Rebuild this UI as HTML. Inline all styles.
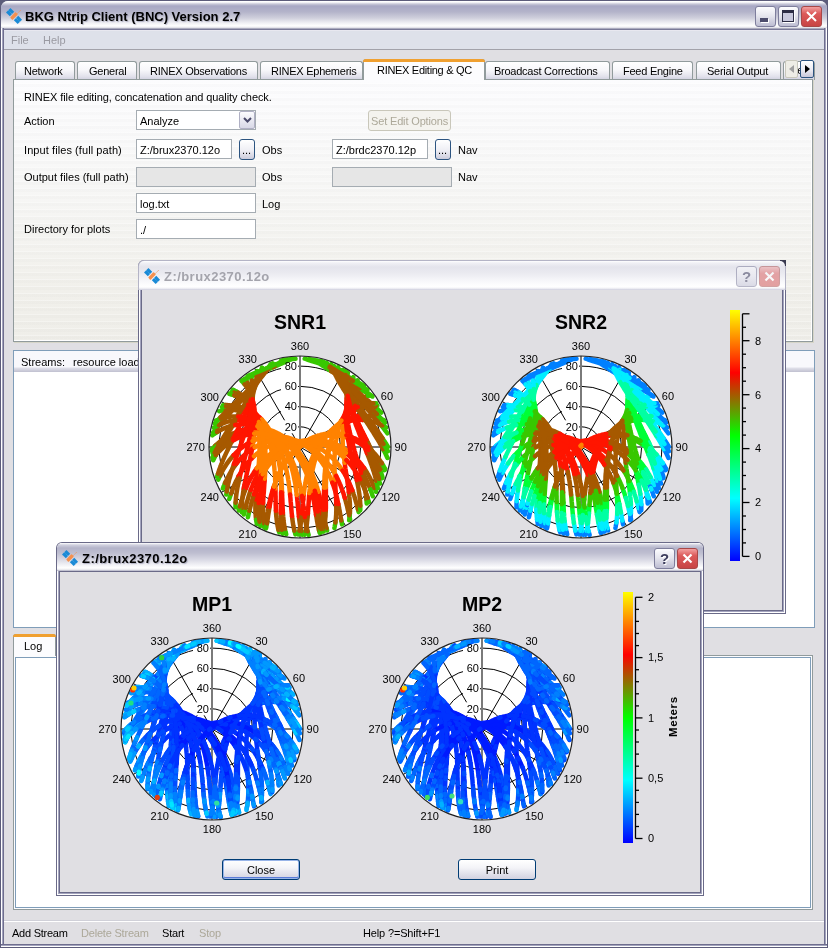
<!DOCTYPE html><html><head><meta charset="utf-8"><style>
*{box-sizing:border-box;margin:0;padding:0}
html,body{width:828px;height:948px;overflow:hidden;background:#E0DFE3}
body{position:relative;will-change:transform;font-family:"Liberation Sans",sans-serif;font-size:11px;color:#000}
.a{position:absolute}
.t{position:absolute;white-space:nowrap;line-height:13px;font-size:11px}
.inp{position:absolute;background:#fff;border:1px solid #A5ACB2;height:20px}
.dis{position:absolute;background:#E6E6E6;border:1px solid #A5ACB2;height:20px}
.tab{position:absolute;top:61px;height:19px;border:1px solid #919B9C;border-bottom:none;border-radius:3px 3px 0 0;background:linear-gradient(#FFFFFF 0%,#F7F7FA 45%,#E2E2EC 80%,#CFCFDF 100%)}
.tbtn{position:absolute;border:1px solid #7E7E9C;border-radius:3px;background:linear-gradient(#FCFCFE,#E6E6EE 45%,#BDBDD2)}
.xbtn{position:absolute;border:1px solid #A84848;border-radius:3px;background:linear-gradient(#F2A0A0,#DC5A5A 35%,#C84444)}
.dots{position:absolute;border:1px solid #2C5480;border-radius:3px;background:linear-gradient(#FFFFFF,#EEEEF4 55%,#CCCCDC)}
.btn{position:absolute;border:1px solid #1F3F7A;border-radius:3px;background:linear-gradient(#FFFFFF,#F4F4F8 40%,#D2D2E0);text-align:center;line-height:20px;font-size:11px}
</style></head><body>
<div class="a" style="left:0;top:0;width:828px;height:948px;background:#5C5C7A"></div>
<div class="a" style="left:1px;top:1px;width:826px;height:946px;background:#E0DFE3;border-radius:7px 7px 0 0"></div>
<div class="a" style="left:1px;top:1px;width:826px;height:29px;border-radius:7px 7px 0 0;background:linear-gradient(#FFFFFF 0px,#FFFFFF 1px,#C8C8D8 3px,#A8A8C4 5px,#B4B4CA 11px,#CFCFDC 17px,#F0F0F4 22px,#FFFFFF 25px,#DCDCE4 27px,#7A7A98 28px)"></div>
<div class="a" style="left:1px;top:28px;width:3px;height:919px;background:linear-gradient(90deg,#FFFFFF 0,#FFFFFF 1px,#A4A4BE 1px,#A4A4BE 2px,#6E6E8E 2px)"></div>
<div class="a" style="left:824px;top:28px;width:3px;height:919px;background:linear-gradient(90deg,#6E6E8E 0,#6E6E8E 1px,#A4A4BE 1px,#A4A4BE 2px,#FFFFFF 2px)"></div>
<div class="a" style="left:1px;top:944px;width:826px;height:3px;background:linear-gradient(#6E6E8E 0,#6E6E8E 1px,#A4A4BE 1px,#A4A4BE 2px,#FFFFFF 2px)"></div>
<svg class="a" style="left:2px;top:4px" width="24" height="24" viewBox="0 0 24 24"><g transform="translate(12 12) rotate(45)"><rect x="-8.2" y="-3.1" width="5.4" height="6.2" fill="#1A8AD6"/><rect x="2.9" y="-3.1" width="5.4" height="6.2" fill="#1A8AD6"/><rect x="-1.7" y="-3.9" width="3.4" height="7.8" rx="0.8" fill="#F5904E"/><line x1="-8" y1="0" x2="-3" y2="0" stroke="#7FC0EC" stroke-width="0.6" stroke-dasharray="1 1"/><line x1="3" y1="0" x2="8" y2="0" stroke="#7FC0EC" stroke-width="0.6" stroke-dasharray="1 1"/><line x1="0.6" y1="-4" x2="0.6" y2="-8.6" stroke="#F5904E" stroke-width="0.9" stroke-dasharray="1.2 0.6"/></g></svg>
<div class="t" style="left:25px;top:9px;font-size:13px;line-height:15px;font-weight:bold;color:#000;text-shadow:1px 1px 1px rgba(120,120,150,0.5)">BKG Ntrip Client (BNC) Version 2.7</div>
<div class="tbtn" style="left:755px;top:6px;width:21px;height:21px"><div class="a" style="left:4px;top:11px;width:8px;height:4px;background:#4C4C6C;box-shadow:1px 1px 0 #fff"></div></div>
<div class="tbtn" style="left:778px;top:6px;width:21px;height:21px"><div class="a" style="left:3px;top:3px;width:12px;height:12px;border:1px solid #2C2C44;border-top-width:3px;background:#C8C8DC;box-shadow:1px 1px 0 #fff"></div></div>
<div class="xbtn" style="left:801px;top:6px;width:21px;height:21px"><svg class="a" style="left:2px;top:2px" width="15" height="15"><path d="M3 3L12 12M12 3L3 12" stroke="#fff" stroke-width="2"/></svg></div>
<div class="a" style="left:4px;top:30px;width:820px;height:20px;background:#DEE1EA;border-top:1px solid #E8E8F0;border-bottom:1px solid #A2A2AA"></div>
<div class="t" style="left:11px;top:33.5px;color:#9A9AA2">File</div>
<div class="t" style="left:43px;top:33.5px;color:#9A9AA2">Help</div>
<div class="tab" style="left:15px;width:60px"></div>
<div class="t" style="left:24px;top:64.8px;letter-spacing:-0.25px">Network</div>
<div class="tab" style="left:77px;width:60px"></div>
<div class="t" style="left:89px;top:64.8px;letter-spacing:-0.25px">General</div>
<div class="tab" style="left:139px;width:119px"></div>
<div class="t" style="left:150px;top:64.8px;letter-spacing:-0.25px">RINEX Observations</div>
<div class="tab" style="left:260px;width:103px"></div>
<div class="t" style="left:271px;top:64.8px;letter-spacing:-0.25px">RINEX Ephemeris</div>
<div class="tab" style="left:485px;width:125px"></div>
<div class="t" style="left:494px;top:64.8px;letter-spacing:-0.25px">Broadcast Corrections</div>
<div class="tab" style="left:612px;width:81px"></div>
<div class="t" style="left:623px;top:64.8px;letter-spacing:-0.25px">Feed Engine</div>
<div class="tab" style="left:696px;width:85px"></div>
<div class="t" style="left:707px;top:64.8px;letter-spacing:-0.25px">Serial Output</div>
<div class="tab" style="left:783px;width:32px"></div>
<div class="a" style="left:13px;top:79px;width:800px;height:263px;border:1px solid #919B9C;box-shadow:1px 1px 0 #D6D5C8;background:repeating-linear-gradient(rgba(255,255,255,0) 0,rgba(255,255,255,0) 3px,rgba(255,255,255,0.3) 3px,rgba(255,255,255,0.3) 4px,rgba(0,0,0,0.012) 4px,rgba(0,0,0,0.012) 7px),linear-gradient(#FCFCFE 0%,#F7F7F6 40%,#F1F0EB 80%,#EFEEE9 100%)"><div class="a" style="right:0;top:0;width:1px;height:100%;background:#fff"></div><div class="a" style="left:0;bottom:0;width:100%;height:1px;background:#fff"></div></div>
<div class="a" style="left:363px;top:59px;width:122px;height:21px;border:1px solid #919B9C;border-bottom:none;border-radius:3px 3px 0 0;background:#FCFCFE"><div class="a" style="left:-1px;top:-1px;width:122px;height:3px;background:#F0A030;border-radius:3px 3px 0 0"></div></div>
<div class="t" style="left:377px;top:63.5px;letter-spacing:-0.3px">RINEX Editing &amp; QC</div>
<div class="a" style="left:784px;top:61px;width:30px;height:18px;overflow:hidden"><div class="t" style="left:8px;top:3px;letter-spacing:-0.25px">ces</div></div>
<div class="a" style="left:785px;top:60px;width:13px;height:18px;border:1px solid #C9C8BC;border-radius:2px;background:#EEEDE6"><svg class="a" style="left:2px;top:3px" width="8" height="10"><path d="M6 1L1 5L6 9Z" fill="#A0A0A0"/></svg></div>
<div class="a" style="left:800px;top:60px;width:14px;height:18px;border:1px solid #2C5480;border-radius:2px;background:linear-gradient(#FFFFFF,#E8E8F0 60%,#C8C8DA)"><svg class="a" style="left:3px;top:3px" width="8" height="10"><path d="M1 1L6 5L1 9Z" fill="#000"/></svg></div>
<div class="t" style="left:24px;top:90.6px;letter-spacing:-0.08px">RINEX file editing, concatenation and quality check.</div>
<div class="t" style="left:24px;top:114.9px;">Action</div>
<div class="inp" style="left:136px;top:110px;width:120px;height:20px;border-color:#A5ACB2"></div>
<div class="t" style="left:140px;top:114.5px;">Analyze</div>
<div class="a" style="left:239px;top:111px;width:16px;height:18px;border:1px solid #B0B0C4;border-radius:2px;background:linear-gradient(#FCFCFE,#D8D8E6)"><svg class="a" style="left:3px;top:4px" width="9" height="8"><path d="M1 2L4.5 5.5L8 2" fill="none" stroke="#4A4A6A" stroke-width="2"/></svg></div>
<div class="t" style="left:24px;top:143.8px;letter-spacing:0.08px">Input files (full path)</div>
<div class="inp" style="left:136px;top:139px;width:96px"></div>
<div class="t" style="left:140px;top:143.5px;">Z:/brux2370.12o</div>
<div class="dots" style="left:239px;top:139px;width:16px;height:21px"></div>
<div class="t" style="left:242px;top:144px;">...</div>
<div class="t" style="left:262px;top:143.8px;">Obs</div>
<div class="a" style="left:368px;top:110px;width:83px;height:21px;border:1px solid #C9C7BA;border-radius:3px;background:#F4F3EE"></div>
<div class="t" style="left:371px;top:114.5px;color:#ACA899;letter-spacing:-0.15px">Set Edit Options</div>
<div class="inp" style="left:332px;top:139px;width:96px"></div>
<div class="t" style="left:336px;top:143.5px;">Z:/brdc2370.12p</div>
<div class="dots" style="left:435px;top:139px;width:16px;height:21px"></div>
<div class="t" style="left:438px;top:144px;">...</div>
<div class="t" style="left:458px;top:143.8px;">Nav</div>
<div class="t" style="left:24px;top:170.7px;">Output files (full path)</div>
<div class="dis" style="left:136px;top:167px;width:120px"></div>
<div class="t" style="left:262px;top:170.9px;">Obs</div>
<div class="dis" style="left:332px;top:167px;width:120px"></div>
<div class="t" style="left:458px;top:170.9px;">Nav</div>
<div class="inp" style="left:136px;top:193px;width:120px"></div>
<div class="t" style="left:140px;top:197.5px;">log.txt</div>
<div class="t" style="left:262px;top:197.5px;">Log</div>
<div class="t" style="left:24px;top:222.8px;">Directory for plots</div>
<div class="inp" style="left:136px;top:219px;width:120px"></div>
<div class="t" style="left:140px;top:223.5px;">./</div>
<div class="a" style="left:13px;top:350px;width:802px;height:278px;border:1px solid #7F9DB9;background:#fff"></div>
<div class="a" style="left:14px;top:351px;width:800px;height:21px;background:linear-gradient(#F8F8FC 0,#F8F8FC 16px,#E0E0EA 17px,#C0C0D0 21px)"></div>
<div class="t" style="left:21px;top:356px;">Streams:</div>
<div class="t" style="left:73px;top:356px;">resource loader</div>
<div class="a" style="left:13px;top:655px;width:800px;height:255px;border:1px solid #919B9C;background:#FCFCFE"></div>
<div class="a" style="left:15px;top:657px;width:796px;height:251px;border:1px solid #7F9DB9;background:#fff"></div>
<div class="a" style="left:13px;top:634px;width:43px;height:22px;border:1px solid #919B9C;border-bottom:none;border-radius:3px 3px 0 0;background:#FCFCFE"><div class="a" style="left:-1px;top:-1px;width:43px;height:3px;background:#F0A030;border-radius:3px 3px 0 0"></div></div>
<div class="t" style="left:24px;top:640px;">Log</div>
<div class="a" style="left:4px;top:921px;width:820px;height:1px;background:#FFFFFF"></div>
<div class="a" style="left:4px;top:920px;width:820px;height:1px;background:#D0D0D8"></div>
<div class="t" style="left:12px;top:927.3px;letter-spacing:-0.25px">Add Stream</div>
<div class="t" style="left:81px;top:927.3px;color:#ACA899;letter-spacing:-0.2px">Delete Stream</div>
<div class="t" style="left:162px;top:927.3px;letter-spacing:-0.2px">Start</div>
<div class="t" style="left:199px;top:927.3px;color:#ACA899;letter-spacing:-0.2px">Stop</div>
<div class="t" style="left:363px;top:927.3px;letter-spacing:-0.15px">Help ?=Shift+F1</div>
<div class="a" style="left:138px;top:260px;width:648px;height:354px;background:#6A6A88;border-radius:6px 6px 0 0"></div>
<div class="a" style="left:139px;top:261px;width:646px;height:352px;background:#FFFFFF;border-radius:5px 5px 0 0"></div>
<div class="a" style="left:140px;top:262px;width:644px;height:350px;background:#A4A4BE;border-radius:4px 4px 0 0"></div>
<div class="a" style="left:138px;top:260px;width:648px;height:30px;background:#B4B4C6;border-radius:6px 6px 0 0"></div>
<div class="a" style="left:780px;top:260px;width:6px;height:6px;background:#3A3A50"></div>
<div class="a" style="left:139px;top:261px;width:646px;height:29px;background:linear-gradient(#FFFFFF 0px,#F0F0F5 2px,#E4E4EC 6px,#EAEAF0 12px,#F4F4F8 18px,#FCFCFD 23px,#FFFFFF 26px,#E6E6EE 28px,#C8C8D8 29px);border-radius:5px 5px 0 0"></div>
<div class="a" style="left:141px;top:290px;width:642px;height:321px;background:#6A6A88"></div>
<div class="a" style="left:142px;top:290px;width:640px;height:320px;background:#E0DFE3"></div>
<svg class="a" style="left:140px;top:264px" width="24" height="24" viewBox="0 0 24 24"><g transform="translate(12 12) rotate(45)"><rect x="-8.2" y="-3.1" width="5.4" height="6.2" fill="#1A8AD6"/><rect x="2.9" y="-3.1" width="5.4" height="6.2" fill="#1A8AD6"/><rect x="-1.7" y="-3.9" width="3.4" height="7.8" rx="0.8" fill="#F5904E"/><line x1="-8" y1="0" x2="-3" y2="0" stroke="#7FC0EC" stroke-width="0.6" stroke-dasharray="1 1"/><line x1="3" y1="0" x2="8" y2="0" stroke="#7FC0EC" stroke-width="0.6" stroke-dasharray="1 1"/><line x1="0.6" y1="-4" x2="0.6" y2="-8.6" stroke="#F5904E" stroke-width="0.9" stroke-dasharray="1.2 0.6"/></g></svg>
<div class="t" style="left:164px;top:269px;font-size:13px;line-height:15px;font-weight:bold;letter-spacing:0.45px;color:#A4A4AC;">Z:/brux2370.12o</div>
<div class="tbtn" style="left:736px;top:266px;width:21px;height:21px;opacity:0.55"><div class="t" style="left:0;top:2px;width:19px;text-align:center;font-size:15px;line-height:15px;font-weight:bold;color:#3C3C5C">?</div></div>
<div class="xbtn" style="left:759px;top:266px;width:21px;height:21px;opacity:0.5"><svg class="a" style="left:2px;top:2px" width="15" height="15"><path d="M3.5 3.5L11.5 11.5M11.5 3.5L3.5 11.5" stroke="#fff" stroke-width="2.2"/></svg></div>
<svg class="a" style="left:0;top:0" width="828" height="948" font-family='"Liberation Sans",sans-serif'><g>
<g transform="translate(300 447)">
<circle r="91.0" fill="#fff"/>
<circle r="20.22" fill="none" stroke="#000" stroke-width="1"/>
<circle r="40.44" fill="none" stroke="#000" stroke-width="1"/>
<circle r="60.67" fill="none" stroke="#000" stroke-width="1"/>
<circle r="80.89" fill="none" stroke="#000" stroke-width="1"/>
<line x1="0" y1="0" x2="45.50" y2="-78.81" stroke="#000" stroke-width="1"/>
<line x1="0" y1="0" x2="78.81" y2="-45.50" stroke="#000" stroke-width="1"/>
<line x1="0" y1="0" x2="78.81" y2="45.50" stroke="#000" stroke-width="1"/>
<line x1="0" y1="0" x2="45.50" y2="78.81" stroke="#000" stroke-width="1"/>
<line x1="0" y1="0" x2="-45.50" y2="78.81" stroke="#000" stroke-width="1"/>
<line x1="0" y1="0" x2="-78.81" y2="45.50" stroke="#000" stroke-width="1"/>
<line x1="0" y1="0" x2="-78.81" y2="-45.50" stroke="#000" stroke-width="1"/>
<line x1="0" y1="0" x2="-45.50" y2="-78.81" stroke="#000" stroke-width="1"/>
<line x1="-91.0" y1="0" x2="91.0" y2="0" stroke="#7A7A7A" stroke-width="2"/>
<line x1="0" y1="-91.0" x2="0" y2="91.0" stroke="#7A7A7A" stroke-width="2"/>
<rect x="-19" y="-26.7" width="17" height="13" fill="#fff"/>
<rect x="-19" y="-46.9" width="17" height="13" fill="#fff"/>
<rect x="-19" y="-67.2" width="17" height="13" fill="#fff"/>
<rect x="-19" y="-87.4" width="17" height="13" fill="#fff"/>
<g fill="none" stroke-width="4.5" stroke-linecap="round" stroke-linejoin="round"><path stroke="#38c700" d="M-70.7 52l.4 -1.4 .5 -1.3 .4 -1.4 .5 -1.4M82.4 -21.7l1.3 .7 1.2 .7 1.3 .7M76 -41.5l1.4 .1M32.7 -76.8l-1 -1.2 -1 -1.1 -.9 -1.1 -1 -1.2 -.9 -1.1 -.9 -1.2M23.5 -84.5l-1.3 -.8M-56.1 67.5l.3 -1.4 .3 -1.3 .4 -1.3 .3 -1.4 .3 -1.3M-35.6 80.2l.3 -1.2 .3 -1.2 .2 -1.3M34.4 81l.3 -1.4 .2 -1.4 .3 -1.3 .2 -1.4M87.4 -13.7l-1.1 -1.4 -1 -1.3 -1 -1.4 -1.1 -1.3 -1 -1.4 -1.1 -1.3M34.2 -77.8l-.8 -1.2 -.8 -1.2 -.8 -1.2 -.7 -1.2M81.3 -34.3l-1.2 -1.2 -1.3 -1.2 -1.2 -1.1 -1.3 -1.2 -1.2 -1.1M29.4 -80.9l-1.1 -1.1 -1 -1.1 -1.1 -1.1M72.4 -50.5l-1.5 -.9 -1.4 -1 -1.5 -.9 -1.5 -.9 -1.5 -.9 -1.4 -.9 -1.5 -.9 -1.5 -1 -1.5 -.9 -1.5 -.9 -1.5 -.9 -1.5 -.9M31.2 -75.8l-1.4 -.9 -1.4 -.9 -1.4 -.9 -1.3 -.9 -1.4 -.9 -1.4 -.9 -1.3 -.9 -1.4 -.9 -1.3 -.9 -1.3 -.9 -1.3 -.9 -1.3 -.9M49.2 73.3l.2 -1.5 .2 -1.4 .1 -1.5 .1 -1.4 .1 -1.5M-36.9 75.6l.2 1.4 .2 1.3 .3 1.4M-58.3 60.9l0 1.5 0 1.5 .1 1.5M45.8 -75.2l-1.7 -.6 -1.6 -.5 -1.7 -.5 -1.7 -.5 -1.6 -.5 -1.7 -.6 -1.7 -.5 -1.6 -.5 -1.7 -.5 -1.6 -.5 -1.7 -.5 -1.7 -.6 -1.6 -.5 -1.7 -.5 -1.6 -.5 -1.7 -.5 -1.6 -.6 -1.6 -.5 -1.7 -.5 -1.6 -.5 -1.6 -.6 -1.6 -.5 -1.6 -.5 -1.6 -.6 -1.6 -.5M-29.3 -82.9l-.8 1.2 -.8 1.2 -.8 1.2 -.8 1.2M-83.6 -18.5l-1 1.3 -1.1 1.4 -1.1 1.3M-77 -41.8l1.3 -.1 1.3 0M-21.5 82.8l.3 1.3 .4 1.3M-55 -68.3l.6 .9 .7 1 .6 1 .5 1M-67.3 -57.3l1.1 .4 1.1 .6 1 .5 1 .6 1 .7M26.5 81.1l.3 1.2 .3 1.2M74.4 40.7l.6 1.4 .5 1.4 .5 1.3M-70.4 -53.1l1.3 .3 1.2 .3 1.2 .4 1.1 .4M-80.8 -35.8l1.3 -.3 1.3 -.3 1.4 -.2 1.3 -.2 1.3 -.1M-87.8 1.9l1.1 -1.1 1 -1.1 1.1 -1"/><path stroke="#a65900" d="M-68.9 46.5l.5 -1.3 .5 -1.4 .5 -1.4 .5 -1.3 .6 -1.4 .5 -1.4 .6 -1.3 .6 -1.4 .6 -1.3 .7 -1.3 .7 -1.3 .6 -1.4 .7 -1.3M62.5 -27.1l1.4 .1 1.3 .1 1.3 .2 1.4 .2 1.3 .2 1.3 .3 1.4 .3 1.3 .4 1.3 .4 1.3 .4 1.4 .5 1.3 .5 1.3 .6 1.3 .6 1.3 .6M57.6 -38.1l1.1 -.5 1.2 -.5 1.1 -.4 1.2 -.4 1.2 -.3 1.2 -.3 1.3 -.3 1.2 -.2 1.2 -.2 1.3 -.1 1.3 -.1 1.3 -.1 1.2 0 1.3 0 1.3 0M54 -54.9l-1.2 -1.1 -1.2 -1.2 -1.2 -1.2 -1.2 -1.1 -1.2 -1.2 -1.1 -1.1 -1.2 -1.2 -1.1 -1.2 -1.2 -1.1 -1.1 -1.2 -1.1 -1.1 -1.1 -1.2 -1.1 -1.1 -1.1 -1.2 -1.1 -1.1 -1 -1.2 -1 -1.1 -1.1 -1.2 -1 -1.1M-54.5 60.8l.3 -1.4 .4 -1.3 .3 -1.4 .4 -1.4 .4 -1.3 .4 -1.4 .4 -1.4 .4 -1.4 .4 -1.4 .5 -1.3 .4 -1.4 .5 -1.4 .5 -1.4M-34.8 76.5l.3 -1.3 .3 -1.3 .2 -1.3 .3 -1.3 .2 -1.3 .3 -1.3 .3 -1.4 .2 -1.3 .3 -1.4 .2 -1.3 .3 -1.4 .3 -1.4M35.4 75.5l.2 -1.4 .1 -1.4 .2 -1.4 .1 -1.4 .1 -1.4 .1 -1.4 0 -1.5 .1 -1.4 0 -1.5 0 -1.4 0 -1.5 0 -1.4 -.1 -1.5M54.2 -43.8l.9 -.7 1 -.8 1 -.7 1 -.7 1 -.6 1.1 -.6 1 -.6 1.1 -.5 1.1 -.5 1.1 -.5 1.2 -.4 1.1 -.4 1.2 -.4M81.1 -21.8l-1.1 -1.3 -1.1 -1.3 -1.1 -1.3 -1 -1.3 -1.2 -1.3 -1.1 -1.3 -1.1 -1.2 -1.1 -1.3 -1.1 -1.3 -1.1 -1.3 -1.1 -1.2 -1.2 -1.3 -1.1 -1.3 -1.1 -1.2 -1.1 -1.3 -1.2 -1.2 -1.1 -1.3 -1.1 -1.2 -1.1 -1.3 -1.1 -1.2 -1.1 -1.3 -1.1 -1.2 -1.1 -1.2 -1.1 -1.3 -1.1 -1.2 -1.1 -1.3 -1 -1.2 -1.1 -1.2 -1 -1.3 -1.1 -1.2 -1 -1.2 -1 -1.2 -1 -1.3 -1 -1.2 -1 -1.2 -.9 -1.2 -1 -1.2 -.9 -1.2 -.9 -1.3 -.9 -1.2 -.9 -1.2 -.9 -1.2 -.9 -1.2 -.8 -1.2 -.8 -1.2M75.1 -40.1l-1.3 -1.2 -1.3 -1.1 -1.3 -1.2 -1.3 -1.1 -1.2 -1.1 -1.3 -1.2 -1.3 -1.1 -1.3 -1.1 -1.3 -1.1 -1.3 -1.1 -1.3 -1.2 -1.3 -1.1 -1.3 -1.1 -1.2 -1.1 -1.3 -1.1 -1.3 -1.1 -1.3 -1.1 -1.2 -1.1 -1.3 -1.1 -1.3 -1.1 -1.2 -1.1 -1.3 -1.1 -1.2 -1 -1.2 -1.1 -1.2 -1.1 -1.3 -1.1 -1.2 -1.1 -1.2 -1.1 -1.1 -1.1 -1.2 -1.1 -1.2 -1 -1.1 -1.1 -1.2 -1.1 -1.1 -1.1 -1.1 -1.1 -1.1 -1.1 -1.1 -1M54.6 -61.5l-1.5 -.9 -1.4 -.9 -1.5 -.8 -1.5 -.9 -1.5 -.9 -1.5 -.9 -1.4 -.9 -1.5 -.9 -1.5 -.9 -1.4 -.9 -1.5 -.9 -1.4 -.9 -1.5 -.9 -1.4 -.9 -1.4 -.9 -1.5 -.9M49.9 66l.1 -1.5 0 -1.4 0 -1.5 0 -1.5 -.1 -1.5 0 -1.4 -.1 -1.5 -.1 -1.5 -.1 -1.5 -.1 -1.5 -.2 -1.5 -.1 -1.5 -.2 -1.5 -.2 -1.5M-37.7 57l-.1 1.4 0 1.5 0 1.5 0 1.4 0 1.4 0 1.5 .1 1.4 .1 1.4 .1 1.5 .1 1.4 .1 1.4 .2 1.4 .2 1.4M-55.6 38.2l-.3 1.5M-56.2 41.2l-.2 1.5 -.3 1.6 -.2 1.5 -.2 1.5 -.2 1.5 -.2 1.5 -.2 1.5 -.2 1.5 -.1 1.5 -.1 1.6 -.1 1.5 -.1 1.5 0 1.5M-32.5 -78.1l-.8 1.2 -.8 1.2 -.9 1.2 -.9 1.2 -.9 1.2 -.9 1.2 -1 1.2 -.9 1.2 -1 1.3 -.9 1.2 -1 1.2 -1 1.2 -1.1 1.2 -1 1.3 -1 1.2 -1.1 1.2 -1.1 1.2 -1 1.2 -1.1 1.3 -1.1 1.2 -1.1 1.2 -1.1 1.3 -1.1 1.2 -1.1 1.2 -1.2 1.3 -1.1 1.2 -1.1 1.2 -1.2 1.3 -1.1 1.2 -1.2 1.3 -1.1 1.2 -1.2 1.3 -1.1 1.2 -1.2 1.3 -1.1 1.2 -1.1 1.3 -1.2 1.2 -1.1 1.3 -1.2 1.3 -1.1 1.3 -1.1 1.2 -1.2 1.3 -1.1 1.3 -1.1 1.3 -1.1 1.3 -1.1 1.3 -1.1 1.3 -1.1 1.3M-74.4 -41.9l1.3 0 1.3 .1 1.3 .1 1.2 .1 1.3 .2 1.2 .2 1.2 .2 1.3 .3 1.2 .3 1.2 .4 1.1 .4 1.2 .4 1.1 .5 1.2 .5M-24.1 63.7l.1 1.4 .1 1.5 .1 1.4 .1 1.4 .2 1.3 .1 1.4 .2 1.4 .1 1.3 .2 1.4 .3 1.3 .2 1.4 .3 1.3 .2 1.3 .4 1.3M-52.6 -64.4l.6 1 .5 1.1 .5 1.1 .4 1.1 .5 1.1 .4 1.2 .3 1.1 .4 1.2 .3 1.2 .3 1.2 .3 1.3 .2 1.2 .2 1.3 .2 1.3M-62.1 -54.5l1 .6 1 .7 .9 .7 .9 .8 .9 .8 .9 .8 .8 .8 .8 .9 .8 .9 .8 .9 .8 .9 .7 1 .7 1 .7 1M-44.4 52.5l0 1.5 -.1 1.4 -.1 1.5 0 1.5 0 1.5 0 1.4 0 1.5 0 1.4 .1 1.5 .1 1.4 .1 1.4 .1 1.5 .2 1.4 .1 1.4M22.9 64.4l.2 1.3 .3 1.3 .2 1.4 .3 1.3 .3 1.3 .2 1.3 .3 1.3 .3 1.3 .3 1.2 .2 1.3 .3 1.2 .3 1.3 .4 1.2M64.1 21.2l.9 1.2 .8 1.2 .8 1.3 .7 1.2 .8 1.3 .7 1.3 .7 1.3 .7 1.3 .6 1.4 .7 1.3 .6 1.3 .6 1.4 .6 1.3 .6 1.4 .5 1.3M-65.6 -51.7l1.2 .4 1.1 .5 1.1 .5 1.1 .5 1.1 .6 1.1 .6 1 .6 1 .7 1 .7 1 .8 .9 .7 1 .8 .9 .9M-74.2 -36.9l1.4 -.2 1.3 0 1.3 0 1.3 0 1.3 0 1.3 .1 1.3 .1 1.2 .2 1.3 .2 1.2 .2 1.3 .3 1.2 .3 1.2 .4 1.2 .4M-84.6 -1.3l1.1 -1.1 1.1 -.9 1.1 -1 1.1 -.9 1.2 -.9 1.2 -.9 1.2 -.8 1.2 -.8 1.2 -.8 1.2 -.8 1.2 -.7 1.3 -.6 1.2 -.7 1.3 -.6"/><path stroke="#ff1500" d="M-61.3 29l.8 -1.3 .7 -1.2 .8 -1.3 .8 -1.3 .8 -1.2 .8 -1.2 .9 -1.2 .8 -1.2 .9 -1.2 1 -1.2 .9 -1.1 1 -1.1 1 -1.1 1 -1.1 1 -1 1.1 -1.1 1 -1M3.2 52.6l.1 -1.4 .2 -1.5 .2 -1.5 .1 -1.5M42.1 -23.3l1.2 -.5 1.2 -.5 1.2 -.4 1.3 -.4 1.2 -.4 1.3 -.4 1.3 -.3 1.3 -.2 1.2 -.2 1.3 -.2 1.3 -.2 1.4 -.1 1.3 -.1 1.3 0 1.3 0 1.3 .1M41.7 -25.9l.9 -1 .8 -1 .9 -.9 .9 -.9 1 -.9 .9 -.9 1 -.8 1 -.8 1 -.7 1 -.7 1 -.7 1.1 -.7 1 -.6 1.1 -.6 1.1 -.5 1.2 -.5M-31.6 60.5l.3 -1.4 .3 -1.4 .3 -1.4 .3 -1.4 .3 -1.4 .3 -1.4 .4 -1.4 .3 -1.4 .4 -1.4 .4 -1.4 .4 -1.5 .4 -1.4 .5 -1.4 .4 -1.4 .5 -1.4M36.2 56.9l0 -1.4 0 -1.5 -.1 -1.5 -.1 -1.5 0 -1.5 -.1 -1.5 -.1 -1.5 -.1 -1.5 -.1 -1.5 -.1 -1.5 -.1 -1.6 0 -1.5 -.1 -1.5 -.1 -1.6 -.1 -1.5 -.1 -1.6M40.6 -23.9l.5 -1.3 .5 -1.2 .6 -1.2 .6 -1.2 .6 -1.2 .6 -1.1 .7 -1.2 .6 -1.1 .7 -1.1 .7 -1 .8 -1 .7 -1 .8 -1 .8 -1 .9 -.9 .8 -.9 .9 -.8 .9 -.9 .9 -.8M48.8 45.2l-.1 -1.5 -.2 -1.5 -.2 -1.6 -.3 -1.5 -.2 -1.5 -.2 -1.6 -.2 -1.5 -.2 -1.5 -.3 -1.6 -.2 -1.5 -.2 -1.6 -.3 -1.5 -.2 -1.6 -.2 -1.5 -.3 -1.6 -.2 -1.6 -.2 -1.5 -.2 -1.6 -.2 -1.6M-36.3 32.8l-.1 1.5 -.1 1.5 -.1 1.6 -.1 1.5 -.1 1.6 -.1 1.5 -.1 1.5 -.1 1.5 -.1 1.5 -.1 1.5 -.1 1.6 -.1 1.4 -.1 1.5 0 1.5 -.1 1.5 0 1.5M-44.8 -26.7l0 1.5 -.1 1.5 0 1.5 -.1 1.4 -.1 1.5 -.1 1.6 -.1 1.5 -.2 1.5 -.1 1.5 -.2 1.6M-46.4 -7l-.3 1.6M-47.2 -2.3l-.2 1.6M-47.7 .8l-.3 1.6 -.3 1.6 -.3 1.5 -.3 1.6 -.3 1.6 -.4 1.5 -.3 1.6 -.3 1.6 -.4 1.5 -.3 1.6 -.4 1.6 -.3 1.5 -.4 1.6 -.3 1.6 -.4 1.5 -.3 1.6 -.3 1.5 -.4 1.6 -.3 1.5 -.3 1.5 -.4 1.6 -.3 1.5 -.3 1.5 -.3 1.6M-55.9 39.7l-.3 1.5M-57.3 -38.2l1.1 .5 1.1 .6 1 .6 1.1 .6 1.1 .7 1 .7 1 .7 1 .8 1 .8 .9 .8 .9 .9 .9 .9 .9 .9 .9 1 .9 .9 .8 1 .8 1.1 .8 1M-24.6 41.6l.1 1.5 0 1.5 0 1.5 0 1.5 .1 1.5 0 1.5 0 1.5 0 1.5 .1 1.5 0 1.4 0 1.5 .1 1.4 0 1.5 .1 1.4 0 1.4M-47.5 -48l.2 1.3 .2 1.3 .1 1.3 .1 1.4 0 1.3 .1 1.4 0 1.4 0 1.4 0 1.4 0 1.4 -.1 1.4 -.1 1.5 -.1 1.4 -.1 1.5 -.2 1.4 -.1 1.5 -.2 1.5 -.2 1.5 -.2 1.5 -.2 1.5 -.3 1.5 -.2 1.5 -.3 1.6 -.3 1.5 -.3 1.5 -.3 1.6 -.3 1.5 -.4 1.6 -.3 1.5 -.4 1.6 -.3 1.5 -.4 1.6 -.4 1.5 -.4 1.6 -.4 1.5 -.4 1.6 -.4 1.5 -.4 1.6 -.4 1.6 -.4 1.5 -.4 1.6 -.4 1.5 -.5 1.6 -.4 1.5 -.4 1.6 -.4 1.5 -.4 1.5 -.4 1.6 -.4 1.5 -.4 1.6 -.4 1.5 -.3 1.5 -.4 1.6M-50.4 -42.7l.6 1.1 .7 1 .6 1.1 .6 1.2 .5 1.1 .6 1.2 .5 1.2 .5 1.2 .4 1.2 .5 1.2 .4 1.3 .4 1.3 .4 1.3 .3 1.3 .4 1.4 .3 1.3 .2 1.4M-41.9 25l-.1 1.6 -.2 1.5 -.1 1.6 -.2 1.5 -.1 1.6 -.2 1.5 -.2 1.6 -.1 1.5 -.2 1.5 -.1 1.6 -.2 1.5 -.1 1.5 -.1 1.5 -.2 1.5 -.1 1.5 -.1 1.5 -.1 1.5 -.1 1.5M18.4 44.8l.4 1.5 .4 1.4 .3 1.4 .4 1.4 .3 1.4 .3 1.4 .4 1.4 .3 1.4 .3 1.4 .3 1.4 .2 1.4 .3 1.3 .3 1.4 .3 1.4M48 4.3l1.2 .8 1.1 .9 1.2 1 1.1 .9 1 1 1.1 1 1 1 1.1 1.1 1 1.1 .9 1.1 1 1.1 .9 1.1 .9 1.2 .9 1.2 .9 1.2 .8 1.2M-52.1 -43.4l.8 .8 .9 .9 .8 .9 .9 1 .7 .9 .8 1.1 .8 1 .7 1 .7 1.1 .6 1.1 .7 1.2 .6 1.1 .6 1.2 .6 1.2 .6 1.2 .5 1.3 .5 1.2 .5 1.3M-56.4 -34.9l1.2 .4 1.2 .5 1.1 .5 1.2 .5 1.1 .6 1.1 .6 1.1 .7 1.1 .6 1.1 .7 1 .8 1 .8 1 .8 1 .8 1 .9 .9 .9 1 .9M-68 -12.8l1.3 -.5 1.3 -.6 1.3 -.5 1.3 -.4 1.3 -.5 1.3 -.3 1.4 -.4 1.3 -.3 1.3 -.3 1.4 -.2 1.3 -.2 1.4 -.2 1.3 -.1 1.4 -.1 1.3 0 1.4 0 1.3 0 1.4 .1"/><path stroke="#ff8200" d="M-46 9.2l1.1 -.9 1.1 -1 1.2 -.9 1.1 -.9 1.2 -.9 1.2 -.8 1.2 -.8 1.2 -.8 1.2 -.8 1.3 -.7 1.3 -.7 1.3 -.6 1.3 -.6 1.3 -.6 1.3 -.6 1.3 -.5 1.4 -.5 1.4 -.4 1.3 -.4 1.4 -.4 1.4 -.3 1.4 -.3 1.4 -.3 1.4 -.2 1.4 -.2 1.5 -.1 1.4 -.1 1.4 -.1 1.4 0 1.5 0 1.4 0 1.4 .1 1.5 .1 1.4 .2 1.4 .2 1.4 .2 1.4 .3 1.4 .3 1.4 .4 1.4 .4 1.4 .4 1.3 .5 1.4 .5 1.3 .5 1.4 .6 1.3 .6 1.3 .6 1.3 .7 1.3 .7 1.2 .8 1.3 .7 1.2 .8 1.2 .9 1.2 .8 1.1 .9 1.2 .9 1.1 1 1.1 .9 1.1 1 1.1 1.1 1 1 1 1.1 1.1 1.1 .9 1.1 1 1.1 .9 1.2 .9 1.1 .9 1.2 .9 1.2 .8 1.3 .9 1.2M3.8 46.7l.2 -1.5 .2 -1.5 .2 -1.5 .2 -1.5 .3 -1.5 .2 -1.5 .3 -1.5 .2 -1.5 .3 -1.5 .3 -1.5 .3 -1.5 .3 -1.5 .4 -1.5 .3 -1.5 .4 -1.5 .4 -1.5 .4 -1.5 .5 -1.4 .4 -1.5 .5 -1.5 .5 -1.4 .5 -1.4 .5 -1.5 .6 -1.4 .6 -1.4 .6 -1.4 .6 -1.3 .6 -1.4 .7 -1.3 .7 -1.4 .7 -1.3 .7 -1.3 .8 -1.2 .7 -1.3 .8 -1.2 .8 -1.2 .9 -1.2 .8 -1.1 .9 -1.1 .9 -1.1 .9 -1.1 1 -1.1 .9 -1 1 -1 1 -.9 1 -1 1 -.9 1.1 -.8 1.1 -.9 1 -.8 1.1 -.7 1.2 -.8 1.1 -.7 1.1 -.7 1.2 -.6 1.2 -.6 1.2 -.6M25.3 19.7l.2 -1.5 .2 -1.5 .2 -1.6 .2 -1.5 .3 -1.5 .2 -1.5 .3 -1.5 .3 -1.5 .3 -1.5 .3 -1.5 .4 -1.4 .3 -1.5 .4 -1.4 .4 -1.5 .4 -1.4 .5 -1.4 .4 -1.4 .5 -1.4 .5 -1.3 .5 -1.4 .6 -1.3 .6 -1.3 .5 -1.3 .7 -1.2 .6 -1.3 .6 -1.2 .7 -1.2 .7 -1.1 .7 -1.2 .8 -1.1 .7 -1.1 .8 -1.1 .8 -1 .8 -1M-26.1 39.4l.5 -1.5 .5 -1.4 .5 -1.4 .6 -1.4 .5 -1.4 .6 -1.4 .6 -1.3 .7 -1.4 .6 -1.4 .7 -1.3 .7 -1.4 .7 -1.3 .7 -1.3 .8 -1.3 .8 -1.3 .8 -1.3 .8 -1.3 .9 -1.2 .9 -1.2 .9 -1.2 .9 -1.2 .9 -1.2 1 -1.1 1 -1.1 1 -1.1 1 -1.1 1.1 -1 1 -1.1 1.1 -1 1.1 -.9 1.2 -1 1.1 -.9 1.2 -.8 1.2 -.9 1.2 -.8 1.2 -.8 1.2 -.7 1.3 -.8 1.2 -.6 1.3 -.7 1.3 -.6 1.3 -.6 1.3 -.5 1.3 -.5 1.4 -.5 1.3 -.4 1.4 -.4 1.3 -.4 1.4 -.3 1.4 -.3 1.3 -.2 1.4 -.2 1.4 -.2 1.4 -.1 1.4 -.1 1.4 -.1 1.4 0 1.4 .1 1.4 0 1.3 .1 1.4 .2 1.4 .2 1.4 .2 1.4 .3 1.3 .3 1.4 .3 1.3 .4 1.4 .4M35 32.7l-.1 -1.5 -.1 -1.6 0 -1.5 -.1 -1.6 -.1 -1.6 0 -1.5 -.1 -1.6 0 -1.6 0 -1.5 0 -1.6 0 -1.6 0 -1.5 0 -1.6 0 -1.5 .1 -1.6 .1 -1.5 0 -1.6 .1 -1.5 .1 -1.6 .2 -1.5 .1 -1.5 .2 -1.5 .1 -1.5 .2 -1.5 .2 -1.5 .3 -1.5 .2 -1.4 .3 -1.5 .3 -1.4 .3 -1.4 .3 -1.4 .4 -1.4 .4 -1.4 .4 -1.3 .4 -1.4 .4 -1.3 .5 -1.3 .5 -1.3M-35.5 12.4l0 1.6 0 1.6 0 1.5 0 1.6 -.1 1.6 -.1 1.5 0 1.6 -.1 1.6 -.1 1.5 -.1 1.6 -.1 1.5 -.1 1.6 -.1 1.6M-45.8 -11.6l-.2 1.5 -.2 1.6 -.2 1.5M-46.7 -5.4l-.2 1.5 -.3 1.6M-47.4 -.7l-.3 1.5M-40.1 -23.7l.8 1.1 .7 1.1 .7 1.2 .7 1.1 .7 1.2 .7 1.2 .6 1.2 .6 1.3 .6 1.2 .6 1.3 .5 1.3 .6 1.4 .5 1.3 .5 1.4 .4 1.4 .5 1.4 .4 1.4 .4 1.4 .4 1.4 .4 1.5 .3 1.4 .4 1.5 .3 1.5 .3 1.5 .3 1.5 .2 1.5 .3 1.5 .2 1.5 .2 1.5 .2 1.6 .2 1.5 .2 1.5 .1 1.6 .1 1.5 .2 1.5 .1 1.6 .1 1.5 .1 1.6 .1 1.5 0 1.5 .1 1.6 .1 1.5 0 1.5 .1 1.6 0 1.5 0 1.5M-42.5 -21.9l.3 1.4 .3 1.4 .2 1.4 .2 1.4 .2 1.5 .1 1.4 .2 1.5 .1 1.4 .1 1.5 .1 1.5 .1 1.5 0 1.5 .1 1.6 0 1.5 0 1.5 0 1.6 0 1.5 0 1.6 -.1 1.5 0 1.6 -.1 1.5 -.1 1.6 -.1 1.5 -.1 1.6 -.1 1.6 -.1 1.5 -.1 1.6 -.1 1.6 -.2 1.5 -.1 1.6 -.2 1.5M-13.7 -4.9l1.1 .8 1.2 .8 1.1 .9 1.2 .8 1.1 1 1 .9 1.1 1 1.1 1 1 1 1 1 1 1.1 1 1.1 .9 1.1 1 1.2 .9 1.1 .9 1.2 .8 1.2 .9 1.3 .8 1.2 .8 1.3 .8 1.2 .8 1.3 .7 1.3 .7 1.3 .7 1.4 .7 1.3 .7 1.4 .6 1.3 .6 1.4 .6 1.4 .6 1.4 .5 1.3 .6 1.4 .5 1.4 .5 1.5 .5 1.4 .4 1.4 .5 1.4 .4 1.4 .4 1.4 .4 1.4M-18.5 5.2l1.2 -.9 1.2 -.9 1.2 -.8 1.2 -.8 1.2 -.7 1.3 -.7 1.3 -.7 1.3 -.7 1.3 -.6 1.3 -.6 1.3 -.6 1.4 -.5 1.3 -.5 1.4 -.5 1.3 -.4 1.4 -.4 1.4 -.3 1.4 -.3 1.4 -.3 1.4 -.2 1.4 -.2 1.4 -.1 1.5 -.2 1.4 0 1.4 -.1 1.4 0 1.4 .1 1.4 .1 1.5 .1 1.4 .1 1.4 .2 1.4 .3 1.4 .2 1.3 .3 1.4 .4 1.4 .3 1.4 .5 1.3 .4 1.3 .5 1.4 .5 1.3 .6 1.3 .6 1.3 .6 1.2 .7 1.3 .7 1.2 .7 1.3 .7 1.2 .8 1.2 .8 1.1 .9M-39.3 -23.9l.9 1 .9 1 .8 1 .9 1.1 .8 1 .8 1.1 .8 1.2 .8 1.1 .7 1.2 .7 1.2 .7 1.2 .7 1.3 .7 1.2 .6 1.3 .6 1.3 .6 1.3 .6 1.4 .5 1.4 .6 1.3 .5 1.4 .5 1.4 .4 1.5 .5 1.4 .4 1.4 .4 1.5 .4 1.5 .4 1.5 .3 1.4 .3 1.5 .3 1.6 .3 1.5 .3 1.5 .3 1.5 .2 1.5 .2 1.6 .3 1.5 .1 1.5 .2 1.6 .2 1.5 .2 1.6 .1 1.5 .1 1.5 .2 1.6 .1 1.5 .1 1.5 .1 1.6 .1 1.5 0 1.5 .1 1.5 .1 1.5M-44 -17.3l1.3 .1 1.4 .2 1.3 .2 1.3 .2 1.3 .2 1.4 .4 1.3 .3 1.3 .4 1.3 .4 1.3 .5 1.2 .4 1.3 .6 1.2 .5 1.3 .6 1.2 .7 1.2 .7 1.2 .7 1.2 .7 1.2 .8 1.1 .8 1.2 .8 1.1 .9 1.1 .9 1.1 .9 1 1 1.1 1 1 1 1 1 1 1.1 1 1.1 .9 1.1 1 1.1 .9 1.2 .9 1.2 .8 1.2 .9 1.2 .8 1.3 .8 1.2 .8 1.3 .7 1.3 .8 1.3 .7 1.4 .7 1.3 .6 1.4 .7 1.3 .6 1.4 .6 1.4 .6 1.4 .6 1.4 .5 1.4 .5 1.5 .6 1.4 .4 1.4 .5 1.5 .5 1.4 .4 1.5 .4 1.4 .4 1.5 .4 1.4 .3 1.5 .4 1.4 .3 1.5 .4 1.4 .3 1.5"/><path stroke="#00ff35" d="M19.6 -85.7l-1.7 -.4"/><path stroke="#38c700" d="M58 62.4l.3 1.3 .3 1.4M-78.2 -39.9l1.4 -.3 1.4 -.2 1.4 -.2M-68 -55.2l1.1 .5 1.2 .4M-64.7 -53.8l1.1 .6M-86.2 -19.2l1.3 -.7 1.2 -.8 1.3 -.6 1.3 -.7M-87.3 6.5l1 -1.2 1 -1.1 1 -1M83.1 20.6l.8 1.3 .8 1.3M68 -51.2l1.2 -.3 1.2 -.3M-61.2 63.5l.4 -1.4 .3 -1.3 .4 -1.3M59.9 -58.5l1 -.7 .9 -.7 1 -.6 1 -.7M82 31.2l-.4 -1.6 -.5 -1.5 -.5 -1.5M43.6 -72.5l-.1 -1.2 0 -1.3 .1 -1.2M66.7 56.6l-.1 -1.6 -.1 -1.5 -.1 -1.5M26.4 -84.3l-1.7 -.3 -1.7 -.4 -1.7 -.4 -1.7 -.3M17.9 -86.1l-1.7 -.4 -1.7 -.3 -1.7 -.4 -1.6 -.4 -1.7 -.3M4.7 87.7l.3 -1.3 .3 -1.2 .3 -1.3M-8.5 -88l-1.4 .7 -1.6 .7 -1.5 .7 -1.5 .7 -1.5 .7 -1.6 .7 -1.5 .6 -1.5 .7 -1.6 .7 -1.6 .7 -1.5 .6M-26.9 -79.8l-1.6 .7 -1.6 .7 -1.6 .6M-36.4 -75.7l-1.6 .6 -1.7 .7 -1.6 .7 -1.6 .6 -1.6 .7 -1.6 .7 -1.6 .7 -1.6 .6 -1.6 .7 -1.6 .7 -1.6 .7 -1.6 .6 -1.6 .7M87.5 11l-.7 -1.5 -.7 -1.5 -.7 -1.5 -.8 -1.5 -.8 -1.4 -.7 -1.5M-64.4 55.7l-.1 1.5 0 1.5 0 1.6M-43.9 72.8l.3 1.4 .2 1.4 .3 1.4M77.8 41.4l-.3 -1.6 -.3 -1.6 -.3 -1.5 -.3 -1.6 -.4 -1.5M62.5 -62.2l-1.5 -.8 -1.5 -.9 -1.5 -.9 -1.5 -.8 -1.5 -.8 -1.5 -.9 -1.5 -.8 -1.5 -.9 -1.5 -.8 -1.5 -.8 -1.5 -.9M41.6 -74l-1.5 -.8 -1.5 -.8 -1.5 -.8 -1.5 -.9M34.2 -78.1l-1.5 -.8M31.3 -79.7l-1.5 -.8M28.4 -81.4l-1.5 -.8 -1.4 -.8 -1.4 -.8 -1.4 -.9 -1.4 -.8M-38 -79.4l-.3 1.2 -.4 1.3 -.3 1.2M-39.4 -74.4l-.4 1.3M-36.2 76.2l.2 1.4 .2 1.3 .3 1.4M-15.1 82.1l.3 1.3 .3 1.3 .4 1.3 .3 1.2M19 83.1l.3 1.3 .3 1.2"/><path stroke="#a65900" d="M52.3 43.3l.5 1.4 .4 1.4 .5 1.4 .5 1.3 .4 1.4 .4 1.4 .4 1.3 .4 1.4 .4 1.4 .4 1.3 .3 1.4 .4 1.3 .3 1.4 .4 1.3M-74 -40.6l1.3 -.1 1.4 -.1 1.4 -.1 1.3 0 1.4 .1 1.3 0 1.3 .1 1.3 .2 1.3 .2 1.3 .2 1.3 .3 1.3 .3 1.2 .3 1.3 .4M-65.7 -54.3l1 .5M-63.6 -53.2l1.1 .5 1 .6 1 .7 1 .6 1 .7 .9 .7 1 .8 .9 .8 .8 .8 .9 .9 .8 .8 .8 .9 .8 1M-81.1 -22l1.3 -.6 1.3 -.6 1.3 -.5 1.4 -.5 1.3 -.4 1.3 -.5 1.3 -.3 1.4 -.4 1.3 -.3 1.3 -.2 1.4 -.2 1.3 -.2 1.3 -.2 1.4 -.1 1.3 0M-84.3 3.2l1.1 -1.1 1 -1 1.1 -1 1.1 -1 1.1 -.9 1.1 -.9 1.1 -.9 1.2 -.9 1.2 -.8 1.1 -.8 1.2 -.8 1.3 -.7 1.2 -.7 1.2 -.7 1.3 -.6M61.3 23.7l.8 1.3 .7 1.3 .8 1.3 .7 1.3 .7 1.3 .7 1.3 .6 1.4 .7 1.3 .6 1.4 .6 1.3 .6 1.4 .5 1.3 .6 1.4 .5 1.4M69 3.3l1.1 .9 1 1.1 1.1 1 1 1.1 1 1.1 1 1.1 .9 1.2 1 1.1 .9 1.2 .9 1.2 .9 1.2 .9 1.3 .8 1.2 .8 1.3 .8 1.3M-60.1 59.5l.3 -1.3 .4 -1.4 .4 -1.3 .4 -1.3 .4 -1.4 .5 -1.3 .4 -1.4 .4 -1.3 .5 -1.4 .5 -1.4 .5 -1.3 .5 -1.4 .5 -1.3 .6 -1.4M50.1 -46.6l.6 -1 .6 -1.1 .7 -1 .7 -1 .7 -1 .7 -.9 .8 -.9 .7 -.9 .8 -.9 .9 -.8 .8 -.8 .9 -.8 .9 -.8M80.6 26.6l-.5 -1.6 -.5 -1.5 -.5 -1.5 -.6 -1.6 -.6 -1.5 -.6 -1.5 -.6 -1.5 -.6 -1.5 -.6 -1.5 -.6 -1.5 -.7 -1.5 -.7 -1.5 -.6 -1.5 -.7 -1.5 -.7 -1.5 -.7 -1.5 -.7 -1.5 -.7 -1.5 -.7 -1.4 -.7 -1.5M48.2 -48.6l-.5 -1.4 -.4 -1.4 -.4 -1.4 -.4 -1.4 -.3 -1.3 -.4 -1.4 -.3 -1.3 -.3 -1.4 -.3 -1.3 -.2 -1.3 -.2 -1.4 -.2 -1.3 -.2 -1.3 -.2 -1.3 -.1 -1.2 -.1 -1.3 -.1 -1.3 0 -1.2M66.4 52l-.2 -1.6 -.2 -1.5 -.2 -1.5 -.2 -1.6 -.3 -1.5 -.3 -1.5 -.3 -1.5 -.3 -1.6 -.3 -1.5 -.3 -1.5 -.4 -1.5 -.4 -1.6 -.3 -1.5 -.4 -1.5 -.4 -1.6 -.4 -1.5 -.5 -1.5M46.7 -49l.1 -1.3 .2 -1.3 .2 -1.2 .2 -1.3 .2 -1.2 .3 -1.3 .3 -1.2 .3 -1.2 .4 -1.1 .4 -1.2 .4 -1.1 .4 -1.1 .5 -1.1 .5 -1.1 .5 -1.1M5.6 83.9l.3 -1.3 .2 -1.3 .3 -1.3 .2 -1.3 .2 -1.3 .2 -1.3 .1 -1.4 .2 -1.3 .1 -1.4 .2 -1.4 .1 -1.3 .1 -1.4 .1 -1.4M-25.3 -80.5l-1.6 .7M-31.7 -77.8l-1.6 .7 -1.5 .7 -1.6 .7M83.1 2.1l-.8 -1.5 -.8 -1.4 -.9 -1.5 -.8 -1.4 -.8 -1.5 -.9 -1.4 -.8 -1.4 -.9 -1.4 -.9 -1.5 -.9 -1.4 -.8 -1.4 -.9 -1.4 -.9 -1.4 -.9 -1.4 -.9 -1.4 -.9 -1.4 -.9 -1.4 -.9 -1.4 -.9 -1.4 -.9 -1.4 -.9 -1.4 -.9 -1.4 -.9 -1.4 -.9 -1.4 -.9 -1.3 -.8 -1.4 -.9 -1.4 -.9 -1.4 -.8 -1.4 -.9 -1.3 -.8 -1.4 -.9 -1.4 -.8 -1.3 -.8 -1.4 -.8 -1.4 -.8 -1.3 -.8 -1.4 -.8 -1.3 -.7 -1.4 -.8 -1.3 -.7 -1.4 -.7 -1.3 -.7 -1.3 -.7 -1.4 -.6 -1.3 -.7 -1.3 -.6 -1.3 -.6 -1.3 -.6 -1.3 -.5 -1.3 -.6 -1.3 -.5 -1.3 -.5 -1.3 -.5 -1.3 -.5 -1.3 -.4 -1.2 -.4 -1.3 -.4 -1.3M-60.5 31.3l-.4 1.5 -.3 1.5 -.3 1.6 -.4 1.5 -.3 1.5 -.3 1.5 -.3 1.6 -.2 1.5 -.3 1.5 -.2 1.5 -.2 1.6 -.2 1.5 -.2 1.5 -.1 1.5 -.1 1.6 -.1 1.5M76.2 33.6l-.4 -1.6 -.4 -1.5 -.4 -1.6 -.5 -1.5 -.4 -1.5 -.5 -1.5 -.5 -1.6 -.5 -1.5 -.5 -1.5 -.5 -1.5 -.6 -1.6 -.5 -1.5 -.6 -1.5 -.5 -1.5 -.6 -1.5 -.6 -1.5 -.6 -1.5 -.6 -1.6M46 -71.5l-1.5 -.8 -1.5 -.8 -1.4 -.9M35.6 -77.3l-1.4 -.8M32.7 -78.9l-1.4 -.8M29.8 -80.5l-1.4 -.9M-39 -75.7l-.4 1.3M-39.8 -73.1l-.4 1.3 -.4 1.2 -.5 1.3 -.5 1.3 -.5 1.3 -.5 1.3 -.5 1.4 -.6 1.3 -.6 1.3 -.6 1.3 -.6 1.4 -.7 1.3 -.6 1.3 -.7 1.4 -.7 1.3 -.7 1.4 -.7 1.4 -.8 1.3 -.7 1.4 -.8 1.4 -.7 1.3 -.8 1.4 -.8 1.4 -.8 1.4 -.9 1.3 -.8 1.4M-57.5 -36.9l-.9 1.4 -.8 1.4M-61 -31.3l-.8 1.4 -.9 1.4 -.9 1.4 -.9 1.4 -.8 1.4 -.9 1.4 -.9 1.4 -.9 1.4 -.9 1.4 -.9 1.4 -.9 1.4 -.8 1.4 -.9 1.5 -.9 1.4 -.9 1.4 -.8 1.4 -.9 1.5 -.8 1.4 -.9 1.4 -.8 1.5 -.8 1.4 -.9 1.5 -.8 1.4 -.8 1.5 -.7 1.4 -.8 1.5 -.8 1.5 -.7 1.5M-36.9 56.1l0 1.5 -.1 1.4 0 1.5 0 1.4 0 1.5 0 1.4 0 1.5 0 1.4 .1 1.4 .1 1.5 .1 1.4 .1 1.4 .2 1.4 .2 1.4M-17.1 65.8l.1 1.4 .1 1.4 .1 1.4 .2 1.4 .1 1.4 .1 1.4 .2 1.3 .2 1.4 .2 1.3 .2 1.3 .3 1.3 .2 1.3M16 67.6l.2 1.4 .3 1.3 .2 1.3 .2 1.4 .2 1.3 .3 1.3 .2 1.3 .3 1.2 .2 1.3 .3 1.3 .3 1.2 .3 1.2"/><path stroke="#ff1500" d="M42.5 23.5l.8 1.2 .8 1.3 .7 1.3 .7 1.3 .8 1.3 .7 1.3 .6 1.3 .7 1.4 .6 1.3 .6 1.3 .6 1.4 .6 1.3 .5 1.4 .6 1.4 .5 1.3M-55.6 -38.8l1.2 .5 1.2 .4 1.2 .5 1.2 .6 1.1 .6 1.2 .6 1.1 .6 1.1 .7 1.1 .8 1 .7 1.1 .8 1 .9 1 .8 1 .9 .9 .9 1 1M-51.6 -43.4l.8 .9 .7 1 .8 1 .6 1.1 .7 1 .7 1.1 .6 1.1 .6 1.2 .6 1.1 .5 1.2 .6 1.2 .5 1.2 .4 1.3 .5 1.2 .4 1.3 .5 1.3 .3 1.3M-61.2 -27l1.3 0 1.4 0 1.3 0 1.3 .1 1.3 .2 1.3 .1 1.3 .2 1.3 .3 1.3 .3 1.2 .3 1.3 .4 1.3 .4 1.2 .4 1.2 .5 1.2 .5 1.2 .6M-67 -9.6l1.2 -.6 1.3 -.6 1.3 -.5 1.3 -.5 1.2 -.5 1.4 -.4 1.3 -.4 1.3 -.4 1.3 -.3 1.3 -.3 1.4 -.2 1.3 -.2 1.3 -.2 1.4 -.1 1.3 -.1 1.4 0 1.3 -.1M-49.2 42.9l.5 -1.4 .5 -1.3 .6 -1.4 .5 -1.4 .6 -1.3 .6 -1.4 .7 -1.4 .6 -1.3 .7 -1.3 .7 -1.3 .7 -1.4 .7 -1.3 .8 -1.2 .8 -1.3 .8 -1.3 .8 -1.2M45.8 6l1.1 .9 1.1 1 1.1 1 1.1 1 1 1 1.1 1.1 1 1.1 .9 1.1 1 1.1 .9 1.2 1 1.1 .8 1.2 .9 1.2 .9 1.2 .8 1.3 .8 1.2M48.1 -9l1.3 .4 1.3 .5 1.4 .5 1.3 .6 1.2 .6 1.3 .6 1.3 .7 1.2 .7 1.3 .7 1.2 .8 1.2 .8 1.2 .8 1.2 .8 1.1 .9 1.2 .9 1.1 1 1.1 1M-53.8 40.6l.5 -1.3 .6 -1.3 .6 -1.4 .6 -1.3 .7 -1.3 .6 -1.3 .7 -1.3 .7 -1.3 .7 -1.3 .8 -1.3 .8 -1.3 .7 -1.2 .8 -1.2 .9 -1.3 .8 -1.2M43 -21l.1 -1.4 .2 -1.4 .2 -1.5 .2 -1.3 .2 -1.4 .2 -1.4 .3 -1.3 .3 -1.4 .3 -1.3 .3 -1.3 .4 -1.3 .4 -1.2 .4 -1.3 .4 -1.2 .5 -1.2 .5 -1.2 .5 -1.1 .5 -1.2 .6 -1.1 .6 -1.1M68 -3.5l-.7 -1.5 -.8 -1.5 -.7 -1.5 -.7 -1.5 -.7 -1.4 -.7 -1.5 -.7 -1.5 -.8 -1.5 -.7 -1.4 -.7 -1.5 -.7 -1.5 -.7 -1.5 -.7 -1.4 -.6 -1.5 -.7 -1.5 -.7 -1.4 -.6 -1.5 -.7 -1.4 -.6 -1.5 -.7 -1.4 -.6 -1.5 -.6 -1.4 -.6 -1.5 -.5 -1.4 -.6 -1.4 -.5 -1.5 -.6 -1.4 -.5 -1.4 -.5 -1.4 -.5 -1.4 -.4 -1.4M61 26l-.4 -1.6 -.4 -1.5 -.5 -1.6 -.4 -1.5 -.5 -1.5 -.4 -1.6 -.5 -1.5 -.4 -1.6 -.5 -1.5 -.4 -1.6 -.5 -1.5 -.5 -1.6 -.4 -1.5 -.5 -1.6 -.4 -1.5 -.4 -1.6 -.5 -1.5 -.4 -1.6 -.4 -1.6 -.4 -1.5 -.4 -1.6 -.4 -1.5 -.4 -1.6 -.4 -1.5 -.4 -1.5 -.3 -1.6 -.4 -1.5 -.3 -1.5 -.3 -1.6 -.3 -1.5 -.3 -1.5 -.2 -1.5 -.3 -1.5 -.2 -1.5 -.2 -1.5 -.2 -1.5 -.2 -1.4 -.2 -1.5 -.1 -1.4 -.1 -1.5 -.1 -1.4 -.1 -1.4 0 -1.5 -.1 -1.4 0 -1.3 0 -1.4 .1 -1.4 0 -1.3 .1 -1.4 .2 -1.3M7.9 66.5l.1 -1.5 .1 -1.4 .1 -1.4 .1 -1.4 .1 -1.5 .1 -1.4 .1 -1.5 .1 -1.5 .1 -1.4 .1 -1.5 .1 -1.5 .1 -1.5 .1 -1.5 .1 -1.5M-56.7 -38.3l-.8 1.4M-59.2 -34.1l-.9 1.4 -.9 1.4M-35.2 31.7l-.1 1.6 -.1 1.5 -.2 1.6 -.1 1.5 -.1 1.6 -.1 1.5 -.1 1.6 -.1 1.5 -.1 1.5 -.2 1.5 -.1 1.5 -.1 1.5 -.1 1.5 0 1.5 -.1 1.5 -.1 1.5M-17.9 45.3l0 1.5 .1 1.6 0 1.4 .1 1.5 .1 1.5 0 1.5 .1 1.5 0 1.4 .1 1.5 0 1.4 .1 1.5 .1 1.4 0 1.4 .1 1.4M12.6 47.9l.3 1.4 .3 1.5 .2 1.4 .3 1.4 .3 1.5 .2 1.4 .3 1.4 .2 1.4 .2 1.4 .2 1.4 .3 1.4 .2 1.4 .2 1.3 .2 1.4"/><path stroke="#ff8200" d="M-38.2 -27.5l.9 1 .9 1 .8 1.1 .9 1 .8 1.1 .8 1.2 .8 1.1 .8 1.2 .7 1.2 .7 1.3 .7 1.2 .6 1.3 .7 1.3 .6 1.3 .6 1.4 .5 1.3 .6 1.4 .5 1.4 .5 1.4 .5 1.5 .4 1.4 .5 1.5 .4 1.5 .3 1.5 .4 1.5 .3 1.5 .4 1.5 .3 1.6 .2 1.5 .3 1.5 .2 1.6 .3 1.6 .2 1.5 .1 1.6 .2 1.6 .2 1.6 .1 1.5 .1 1.6 .1 1.6 .1 1.6 .1 1.6 0 1.5 .1 1.6 0 1.6 .1 1.6 0 1.5 0 1.6 0 1.6 0 1.5 0 1.6 0 1.5M-41.8 -23.9l.4 1.4 .4 1.3 .3 1.4 .3 1.4 .3 1.4 .2 1.4 .3 1.4 .2 1.5 .2 1.4 .2 1.5 .2 1.5 .1 1.5 .1 1.5 .1 1.5 .1 1.5 .1 1.5 .1 1.5 0 1.6 .1 1.5 0 1.6 0 1.5 0 1.6 -.1 1.5 0 1.6 -.1 1.6 0 1.5 -.1 1.6 -.1 1.6 -.1 1.5 0 1.6 -.1 1.6 -.2 1.5 -.1 1.6 -.1 1.5 -.1 1.6M-44.7 -15l1.4 .1 1.3 0 1.4 .1 1.3 .1 1.3 .2 1.4 .2 1.3 .3 1.3 .3 1.3 .3 1.3 .4 1.3 .4 1.3 .4 1.3 .5 1.3 .5 1.2 .5 1.3 .6 1.2 .6 1.2 .7 1.3 .6 1.2 .7 1.1 .8 1.2 .8 1.2 .8 1.1 .8 1.1 .9 1.1 .9 1.1 .9 1.1 1 1 1 1 1 1.1 1 .9 1.1 1 1.1 1 1.1 .9 1.1 .9 1.2 .9 1.2 .9 1.2 .8 1.2 .8 1.2 .9 1.3 .7 1.3 .8 1.2 .7 1.3 .8 1.4 .7 1.3 .6 1.3 .7 1.4 .6 1.3 .6 1.4 .6 1.4 .6 1.4 .6 1.4 .5 1.4 .5 1.4 .5 1.4 .5 1.4 .5 1.5 .4 1.4 .4 1.4 .5 1.4 .4 1.5 .3 1.4 .4 1.4M-38.6 21.7l.8 -1.3 .9 -1.2 .9 -1.2 .9 -1.2 1 -1.1 .9 -1.2 1 -1.1 1 -1.1 1 -1 1.1 -1.1 1.1 -1 1.1 -1 1.1 -1 1.1 -.9 1.2 -1 1.1 -.9 1.2 -.8 1.2 -.9 1.3 -.8 1.2 -.7 1.3 -.8 1.2 -.7 1.3 -.6 1.3 -.7 1.4 -.6 1.3 -.6 1.3 -.5 1.4 -.5 1.4 -.5 1.4 -.4 1.3 -.4 1.4 -.3 1.4 -.3 1.5 -.3 1.4 -.2 1.4 -.2 1.4 -.2 1.4 -.1 1.5 -.1 1.4 -.1 1.4 0 1.5 .1 1.4 .1 1.4 .1 1.4 .1 1.5 .2 1.4 .2 1.4 .3 1.4 .3 1.4 .4 1.4 .3 1.3 .4 1.4 .5 1.3 .5 1.4 .5 1.3 .6 1.3 .6 1.3 .6 1.3 .7 1.3 .7 1.2 .7 1.3 .7 1.2 .8 1.2 .9 1.2 .8 1.1 .9 1.2 .9M-43.3 21.3l.9 -1.1 .9 -1.2 .9 -1.2 1 -1.1 .9 -1.1 1 -1.1 1 -1.1 1 -1 1.1 -1.1 1.1 -1 1 -.9 1.2 -1 1.1 -.9 1.1 -.9 1.2 -.9 1.2 -.8 1.2 -.9 1.2 -.7 1.2 -.8 1.3 -.7 1.3 -.7 1.3 -.7 1.3 -.6 1.3 -.6 1.3 -.6 1.3 -.5 1.4 -.5 1.3 -.4 1.4 -.4 1.4 -.4 1.4 -.4 1.4 -.3 1.4 -.2 1.4 -.3 1.4 -.2 1.4 -.1 1.4 -.1 1.5 -.1 1.4 -.1 1.4 0 1.4 .1 1.4 0 1.5 .1 1.4 .2 1.4 .2 1.4 .2 1.4 .2 1.4 .3 1.4 .4 1.4 .4 1.3 .4 1.4 .4 1.3 .5 1.4 .5 1.3 .5 1.3 .6 1.3 .6 1.3 .7 1.3 .7 1.2 .7 1.2 .7 1.3 .8 1.2 .8 1.2 .8 1.1 .9 1.2 .9 1.1 .9 1.1 .9 1.1 1 1.1 1 1 1 1 1.1M44.7 15.8l-.2 -1.6 -.2 -1.5 -.2 -1.6 -.2 -1.6 -.2 -1.5 -.2 -1.6 -.1 -1.6 -.1 -1.5 -.2 -1.6 -.1 -1.6 -.1 -1.5 -.1 -1.6 -.1 -1.5 0 -1.5 -.1 -1.6 0 -1.5 0 -1.5 0 -1.5 0 -1.5 0 -1.5 .1 -1.5 .1 -1.5 .1 -1.4 .1 -1.5M9.3 46l.2 -1.5 .1 -1.5 .2 -1.5 .1 -1.5 .2 -1.6 .2 -1.5 .1 -1.5 .2 -1.6 .3 -1.5 .2 -1.5 .2 -1.5 .3 -1.6 .3 -1.5 .3 -1.5 .3 -1.5 .3 -1.5 .4 -1.5 .3 -1.5 .4 -1.5 .4 -1.5 .4 -1.5 .5 -1.5 .4 -1.4 .5 -1.5 .5 -1.4 .5 -1.4 .6 -1.5 .6 -1.3 .5 -1.4 .7 -1.4 .6 -1.3 .6 -1.4 .7 -1.3 .7 -1.3 .7 -1.2 .8 -1.3 .7 -1.2 .8 -1.2 .8 -1.2 .8 -1.1 .9 -1.2 .9 -1.1 .9 -1 .9 -1.1 .9 -1 .9 -1 1 -1 1 -.9 1 -.9 1 -.8 1.1 -.9 1 -.8 1.1 -.7 1.1 -.8 1.1 -.7M-39.8 -23.9l.4 1.3 .5 1.4 .4 1.3 .4 1.4 .4 1.3 .3 1.4 .3 1.4 .3 1.5 .3 1.4 .3 1.5 .2 1.4 .3 1.5 .2 1.5 .1 1.5 .2 1.5 .2 1.5 .1 1.6 .1 1.5 .1 1.5 .1 1.6 0 1.5 .1 1.6 0 1.6 0 1.5 0 1.6 0 1.6 0 1.5 0 1.6 -.1 1.6 0 1.6 -.1 1.5 -.1 1.6 0 1.6 -.1 1.5 -.1 1.6 -.1 1.6 -.1 1.5"/><path stroke="#38c700" d="M-18.1 82.8l.2 1.3 .2 1.3 .3 1.3M-27.3 -83.7l-.9 1.2 -.9 1.1 -1 1.1 -.9 1.2 -1 1.1M-79.5 -29.7l-1.2 1.2 -1.1 1.3 -1.2 1.2 -1.2 1.3 -1.1 1.3M-37.9 -79l-.3 1.2 -.4 1.3M-39 -75.2l-.5 1.2M-85.3 5.7l-.8 1.5 -.7 1.4 -.7 1.5M-40.4 74.8l.2 1.4 .2 1.4 .3 1.4M1.2 84.1l.3 1.3 .3 1.2 .3 1.2M22.9 82.1l.3 1.2 .4 1.2M70.4 42.4l.5 1.4 .5 1.3 .5 1.4 .4 1.4 .5 1.4M-43 -76.1l-.1 1.3 0 1.2 -.1 1.2M-84.2 -26.5l1.3 -.5 1.4 -.5 1.3 -.5 1.3 -.4M-87.7 -11.7l1.2 -.8 1.2 -.9 1.2 -.8 1.2 -.8M67.7 50.9l.4 1.4 .4 1.3 .4 1.3M-87.9 4.3l1 -1.2 1 -1.2 1 -1.2 1.1 -1.1 1 -1.1 1.1 -1.1M51.6 -66.8l.5 -1 .6 -1 .6 -1M-81.7 32.6l.6 -1.4 .6 -1.4 .7 -1.4M-79.1 27l.7 -1.4M-77.1 41.4l.5 -1.4 .6 -1.4 .5 -1.3 .6 -1.4M79.9 -28.5l1.3 .5 1.3 .6 1.3 .5M-34 81.5l.3 -1.2 .2 -1.3 .2 -1.3 .3 -1.3M38.7 -77.2l-.4 -1.2 -.3 -1.3M60.3 63.3l0 -1.5 0 -1.5 0 -1.5M55.3 -63.9l.7 -.9 .8 -.9 .7 -.9M47.3 -70.5l.2 -1.1 .2 -1.2 .2 -1.2M-84.7 8.7l-.7 1.5 -.7 1.5 -.7 1.5M23.1 84.6l.3 -1.3 .3 -1.3 .3 -1.4M-12.2 -87.6l-1.7 .3 -1.7 .3 -1.7 .3 -1.7 .3M82.5 30.3l-.4 -1.6 -.5 -1.5 -.5 -1.6 -.6 -1.5 -.5 -1.5M88 -.1l-.9 -1.5 -.8 -1.4 -.9 -1.4 -.9 -1.4 -1 -1.4 -.9 -1.4M36.4 -76l-.6 -1.3 -.6 -1.2 -.6 -1.2 -.5 -1.3M71.5 -51.4l-1.5 -1 -1.4 -.9 -1.4 -1 -1.4 -1 -1.5 -1 -1.4 -.9 -1.4 -1 -1.5 -.9M29.2 -79.8l-1.3 -.9 -1.3 -1 -1.3 -.9 -1.3 -.9 -1.3 -1 -1.2 -.9"/><path stroke="#a65900" d="M-19.3 66.1l.1 1.5 0 1.4 0 1.4 .1 1.4 0 1.4 .1 1.4 .1 1.4 .1 1.4 .1 1.3 .2 1.4 .2 1.3 .2 1.4M-32 -78l-1 1.2 -1 1.1 -1 1.2 -1 1.1 -1.1 1.2 -1 1.1 -1.1 1.2 -1.1 1.2 -1.1 1.1 -1.1 1.2 -1.1 1.1 -1.1 1.2 -1.1 1.1 -1.2 1.2 -1.1 1.2 -1.2 1.1 -1.2 1.2 -1.2 1.2 -1.2 1.1 -1.1 1.2 -1.2 1.2 -1.2 1.1 -1.3 1.2 -1.2 1.2 -1.2 1.2 -1.2 1.2 -1.2 1.1 -1.2 1.2 -1.3 1.2 -1.2 1.2 -1.2 1.2 -1.2 1.2 -1.2 1.2 -1.3 1.2 -1.2 1.2 -1.2 1.2 -1.2 1.2 -1.2 1.2 -1.2 1.2 -1.2 1.3 -1.2 1.2M-38.6 -76.5l-.4 1.3M-39.5 -74l-.5 1.3 -.4 1.3 -.6 1.3 -.5 1.2 -.5 1.3 -.6 1.3 -.6 1.3 -.6 1.3 -.6 1.4 -.7 1.3 -.6 1.3 -.7 1.3 -.7 1.4 -.7 1.3 -.8 1.3 -.7 1.4 -.8 1.3 -.7 1.4 -.8 1.3 -.8 1.4 -.8 1.3 -.8 1.4 -.9 1.3 -.8 1.4 -.9 1.4 -.8 1.3 -.9 1.4 -.9 1.4 -.8 1.4 -.9 1.3 -.9 1.4 -.9 1.4 -.9 1.4 -.9 1.4 -.9 1.4 -.9 1.3 -1 1.4 -.9 1.4 -.9 1.4 -.9 1.4 -.9 1.4 -.9 1.4 -.9 1.4 -.9 1.4 -.9 1.4 -.9 1.5 -.8 1.4 -.9 1.4 -.9 1.4 -.9 1.4 -.8 1.5 -.8 1.4 -.9 1.5 -.8 1.4 -.8 1.5 -.8 1.4 -.8 1.5 -.7 1.5M-41.3 56.1l0 1.5 0 1.4 -.1 1.5 0 1.5 .1 1.4 0 1.5 .1 1.4 0 1.4 .1 1.5 .1 1.4 .2 1.4 .2 1.4 .2 1.4M-1.1 69.6l.2 1.4 .1 1.4 .2 1.3 .2 1.3 .2 1.4 .2 1.3 .2 1.3 .2 1.3 .2 1.3 .3 1.3 .3 1.2M19.6 66.7l.2 1.3 .3 1.4 .2 1.3 .3 1.3 .3 1.3 .2 1.3 .3 1.3 .3 1.2 .3 1.3 .3 1.2 .3 1.2 .3 1.3M-43.2 -72.4l-.1 1.3 -.1 1.3 -.2 1.2 -.1 1.3 -.3 1.3 -.2 1.3 -.2 1.3 -.3 1.4 -.3 1.3 -.3 1.3 -.4 1.4 -.3 1.3 -.4 1.4 -.4 1.3 -.4 1.4 -.5 1.4 -.4 1.4 -.5 1.4M-78.9 -28.4l1.3 -.4 1.3 -.3 1.3 -.4 1.4 -.2 1.3 -.3 1.3 -.2 1.3 -.1 1.3 -.1 1.4 -.1 1.3 -.1 1.3 0 1.3 .1 1.3 .1M-82.9 -15l1.3 -.7 1.2 -.7 1.3 -.7 1.2 -.6 1.3 -.6 1.3 -.6 1.3 -.5 1.3 -.5 1.3 -.4 1.3 -.5 1.3 -.3 1.3 -.4 1.4 -.3 1.3 -.2M60 32.2l.6 1.3 .7 1.3 .6 1.3 .6 1.4 .6 1.3 .6 1.3 .5 1.4 .6 1.3 .5 1.4 .5 1.3 .5 1.4 .5 1.3 .4 1.4 .5 1.3M-81.7 -2.6l1.2 -1.1 1.1 -1 1.1 -1 1.2 -1 1.2 -.9 1.2 -.9 1.2 -.9 1.3 -.8 1.2 -.8 1.3 -.8 1.3 -.7 1.2 -.7 1.3 -.6 1.4 -.7 1.3 -.5M-79.8 28.4l.7 -1.4M-78.4 25.6l.7 -1.3 .7 -1.4 .8 -1.3 .8 -1.3 .8 -1.3 .8 -1.3 .9 -1.3 .9 -1.3 .9 -1.2 .9 -1.2 1 -1.2 .9 -1.1 1 -1.2 1 -1.1M-74.9 35.9l.6 -1.3 .7 -1.4 .6 -1.3 .7 -1.4 .7 -1.3 .7 -1.3 .7 -1.3 .7 -1.3 .8 -1.2 .8 -1.3 .8 -1.2 .8 -1.3 .9 -1.2 .9 -1.2 .9 -1.2M61.2 -31.2l1.3 -.1 1.3 0 1.4 0 1.3 .1 1.3 .1 1.4 .1 1.3 .2 1.3 .2 1.4 .3 1.3 .3 1.4 .3 1.3 .4 1.3 .4 1.4 .4M-33 76.4l.2 -1.3 .2 -1.3 .2 -1.4 .2 -1.3 .2 -1.4 .2 -1.4 .2 -1.3 .2 -1.4 .3 -1.4 .2 -1.4 .2 -1.4 .2 -1.5M60.3 58.8l0 -1.5 -.1 -1.5 -.1 -1.5 -.1 -1.5 -.2 -1.5 -.2 -1.5 -.1 -1.6 -.2 -1.5 -.3 -1.5 -.2 -1.5 -.2 -1.5 -.3 -1.6 -.3 -1.5 -.3 -1.5 -.3 -1.5 -.3 -1.6 -.3 -1.5M47.9 -47.5l.3 -1.2 .3 -1.2 .4 -1.2 .4 -1.2 .4 -1.2 .4 -1.1 .5 -1.1 .5 -1.1 .5 -1.1 .6 -1.1 .5 -1 .7 -1 .6 -1 .6 -1 .7 -.9M48.9 -45.6l-.3 -1.4 -.2 -1.4 -.3 -1.4 -.2 -1.4 -.2 -1.3 -.2 -1.4 -.2 -1.3 -.1 -1.4 -.1 -1.3 -.1 -1.3 -.1 -1.3 0 -1.3 0 -1.3 0 -1.2 0 -1.3 .1 -1.2 0 -1.2 .2 -1.3 .1 -1.2M24 80.6l.3 -1.3 .2 -1.3 .2 -1.4 .2 -1.4 .2 -1.3 .1 -1.4 .1 -1.4 .2 -1.4 .1 -1.4 0 -1.4 .1 -1.4 .1 -1.4 0 -1.5M80 22.6l-.6 -1.6 -.6 -1.5 -.6 -1.5 -.6 -1.5 -.6 -1.5 -.7 -1.5 -.6 -1.5 -.7 -1.5 -.7 -1.5 -.7 -1.5 -.7 -1.5 -.7 -1.5 -.7 -1.5 -.7 -1.4 -.7 -1.5 -.8 -1.5 -.7 -1.5 -.7 -1.5 -.8 -1.4 -.7 -1.5M82.6 -8.6l-.9 -1.4 -1 -1.4 -.9 -1.4 -1 -1.4 -1 -1.4 -.9 -1.3 -1 -1.4 -1 -1.4 -1 -1.3 -1 -1.4 -1 -1.3 -1 -1.4 -1 -1.3 -1.1 -1.4 -1 -1.3 -1 -1.4 -1 -1.3 -1 -1.3 -1 -1.4 -1 -1.3 -1 -1.3 -1 -1.4 -1 -1.3 -1 -1.3 -1 -1.3 -1 -1.4 -.9 -1.3 -1 -1.3 -1 -1.3 -.9 -1.3 -.9 -1.3 -1 -1.3 -.9 -1.3 -.9 -1.4 -.9 -1.3 -.8 -1.3 -.9 -1.3 -.8 -1.2 -.9 -1.3 -.8 -1.3 -.8 -1.3 -.8 -1.3 -.8 -1.3 -.7 -1.3 -.7 -1.2 -.8 -1.3 -.7 -1.3 -.6 -1.2 -.7 -1.3 -.6 -1.3 -.6 -1.2M60 -59.1l-1.4 -1 -1.4 -.9 -1.5 -1 -1.4 -.9 -1.4 -1 -1.5 -.9 -1.4 -1 -1.4 -.9 -1.4 -1 -1.4 -.9 -1.4 -.9 -1.5 -1 -1.4 -.9 -1.3 -.9 -1.4 -1 -1.4 -.9 -1.4 -.9 -1.4 -1 -1.3 -.9 -1.4 -.9 -1.3 -1 -1.4 -.9"/><path stroke="#ff1500" d="M-18.9 45.2l-.1 1.6 0 1.5 0 1.5 0 1.5 -.1 1.6 0 1.5 0 1.5 -.1 1.4 0 1.5 0 1.5 0 1.5 -.1 1.4 0 1.5 0 1.4M-39.2 28.8l-.1 1.5 -.2 1.6 -.1 1.5 -.1 1.6 -.2 1.5 -.1 1.6 -.1 1.5 -.2 1.5 -.1 1.5 -.1 1.6 -.1 1.5 -.2 1.5 -.1 1.5 -.1 1.5 -.1 1.5 0 1.5 -.1 1.4 -.1 1.5M-3.2 48l.2 1.5 .1 1.5 .2 1.5 .1 1.5 .2 1.4 .1 1.5 .1 1.4 .2 1.5 .1 1.4 .1 1.4 .2 1.4 .1 1.4 .1 1.4 .2 1.4 .1 1.4M15.2 45.8l.4 1.4 .3 1.4 .3 1.5 .4 1.4 .3 1.4 .3 1.4 .3 1.4 .3 1.4 .2 1.4 .3 1.4 .3 1.4 .2 1.3 .3 1.4 .2 1.4 .3 1.3M-48.6 -48.4l-.5 1.4 -.5 1.4 -.6 1.4 -.5 1.4 -.6 1.4 -.6 1.5 -.6 1.4 -.6 1.4 -.6 1.5 -.6 1.4 -.7 1.4 -.6 1.5 -.7 1.4 -.7 1.5 -.7 1.4 -.7 1.5 -.7 1.5 -.7 1.4 -.7 1.5 -.7 1.4 -.7 1.5 -.8 1.5 -.7 1.4 -.7 1.5 -.8 1.5 -.7 1.5 -.7 1.4 -.8 1.5 -.7 1.5 -.7 1.5M-61.8 -30.4l1.2 .1 1.3 .1 1.3 .2 1.3 .2 1.2 .3 1.3 .3 1.2 .4 1.2 .3 1.2 .5 1.2 .4 1.2 .5 1.2 .5 1.1 .6 1.2 .6 1.1 .6 1.1 .7 1.1 .7M-64.8 -22l1.3 -.3 1.3 -.2 1.4 -.1 1.3 -.1 1.3 -.1 1.3 0 1.3 0 1.4 0 1.3 .1 1.3 .1 1.3 .2 1.3 .2 1.3 .2 1.3 .3 1.2 .3 1.3 .4 1.3 .3M46.4 13.1l1 1 1 1.1 1 1.1 .9 1.1 1 1.2 .9 1.1 .8 1.2 .9 1.2 .8 1.2 .8 1.3 .8 1.2 .8 1.3 .7 1.2 .8 1.3 .7 1.3 .7 1.3M-63.2 -15l1.3 -.6 1.4 -.5 1.3 -.4 1.4 -.5 1.3 -.3 1.4 -.4 1.4 -.3 1.4 -.3 1.4 -.2 1.3 -.2 1.4 -.1 1.4 -.1 1.4 -.1 1.4 0 1.4 0 1.4 .1M-16.3 -10.2l1.2 .8M-66.3 8.1l1.1 -1.1 1 -1.1 1.1 -1 1.1 -1 1.1 -1 1.1 -1 1.2 -.9 1.2 -.9 1.1 -.9 1.3 -.8 1.2 -.9 1.2 -.7 1.3 -.8 1.3 -.7 1.3 -.7 1.3 -.6M-63.6 16.7l.9 -1.1 .9 -1.2 1 -1.1 1 -1.1 1 -1.1 1 -1 1 -1 1.1 -1 1.1 -1 1.1 -1 1.1 -.9 1.2 -.9 1.1 -.9 1.2 -.8 1.2 -.8 1.2 -.8 1.2 -.8M41.5 -25l1.2 -.7 1.1 -.6 1.2 -.6 1.2 -.5 1.1 -.6 1.3 -.4 1.2 -.5 1.2 -.4 1.2 -.4 1.3 -.3 1.3 -.3 1.2 -.3 1.3 -.2 1.3 -.2 1.3 -.1 1.3 -.1M-30.5 59.9l.3 -1.4 .2 -1.4 .3 -1.5 .3 -1.4 .3 -1.5 .3 -1.4 .3 -1.5 .3 -1.4 .3 -1.5 .4 -1.4 .4 -1.5 .3 -1.5 .5 -1.4 .4 -1.5M56.8 33l-.3 -1.5 -.4 -1.6 -.3 -1.5 -.3 -1.5 -.4 -1.6 -.3 -1.5 -.4 -1.6 -.4 -1.5 -.3 -1.6 -.4 -1.5 -.3 -1.6 -.4 -1.6 -.4 -1.5 -.3 -1.6 -.4 -1.5 -.3 -1.6 -.3 -1.6 -.4 -1.5 -.3 -1.6 -.3 -1.6 -.3 -1.5 -.4 -1.6 -.2 -1.5 -.3 -1.6 -.3 -1.5 -.3 -1.6 -.2 -1.5 -.3 -1.6 -.2 -1.5 -.2 -1.6 -.2 -1.5 -.2 -1.5 -.1 -1.5 -.2 -1.5 -.1 -1.5 -.1 -1.5 -.1 -1.5 -.1 -1.5 0 -1.4 -.1 -1.5 0 -1.4 0 -1.5 0 -1.4 .1 -1.4 .1 -1.4 .1 -1.4 .1 -1.3 .1 -1.4 .2 -1.3 .2 -1.3 .2 -1.3 .2 -1.3 .3 -1.3 .3 -1.3M67 6.1l-.6 -1.5 -.6 -1.5 -.6 -1.5 -.6 -1.5 -.6 -1.5 -.6 -1.5 -.6 -1.5 -.6 -1.5 -.6 -1.5 -.6 -1.5 -.6 -1.6 -.6 -1.5 -.6 -1.5 -.5 -1.5 -.6 -1.5 -.6 -1.5 -.6 -1.5 -.5 -1.4 -.6 -1.5 -.5 -1.5 -.5 -1.5 -.5 -1.5 -.5 -1.5 -.5 -1.4 -.5 -1.5 -.4 -1.5 -.5 -1.4 -.4 -1.5 -.4 -1.4 -.4 -1.5 -.4 -1.4 -.4 -1.4 -.3 -1.4 -.4 -1.4 -.3 -1.4M66.4 -7.3l-.8 -1.5 -.7 -1.5 -.7 -1.5 -.8 -1.4 -.7 -1.5 -.8 -1.5 -.7 -1.4 -.7 -1.5 -.7 -1.5 -.8 -1.4 -.7 -1.5 -.7 -1.5 -.7 -1.4 -.7 -1.5 -.6 -1.5 -.7 -1.4 -.7 -1.5 -.6 -1.4 -.7 -1.5 -.6 -1.4 -.6 -1.4 -.6 -1.5 -.6 -1.4 -.5 -1.4 -.6 -1.5 -.5 -1.4 -.5 -1.4 -.5 -1.4"/><path stroke="#ff8200" d="M-40.8 -22.7l1.2 .6 1.2 .6 1.1 .7 1.2 .7 1.1 .7 1.1 .7 1.1 .8 1.1 .9 1.1 .8 1 .9 1 1 1 .9 1 1 1 1 .9 1 .9 1.1 .9 1.1 .9 1.1 .9 1.2 .8 1.2 .9 1.2 .8 1.2 .7 1.2 .8 1.3 .7 1.3 .7 1.3 .7 1.3 .7 1.3 .7 1.4 .6 1.3 .6 1.4 .6 1.4 .5 1.4 .6 1.5 .5 1.4 .5 1.4 .5 1.5 .4 1.5 .5 1.4 .4 1.5 .4 1.5 .4 1.5 .4 1.5 .3 1.5 .3 1.5 .3 1.5 .3 1.5 .3 1.5 .3 1.5 .3 1.5 .2 1.6 .2 1.5 .2 1.5 .2 1.5 .2 1.5 .2 1.5 .2 1.4M-41.4 -23.4l1.1 .7 1.1 .8 1 .8 1.1 .8 1 .9 1 .8 .9 1 1 .9 .9 1 1 1 .9 1 .9 1.1 .8 1.1 .9 1.1 .8 1.2 .8 1.1 .8 1.2 .7 1.2 .8 1.3 .7 1.2 .7 1.3 .6 1.3 .7 1.3 .6 1.3 .6 1.4 .6 1.3 .6 1.4 .6 1.4 .5 1.4 .5 1.4 .5 1.5 .4 1.4 .5 1.5 .4 1.4 .4 1.5 .4 1.5 .4 1.4 .4 1.5 .3 1.5 .3 1.5 .3 1.5 .3 1.5 .3 1.5 .3 1.6 .2 1.5 .3 1.5 .2 1.5 .2 1.5 .2 1.5 .2 1.5 .2 1.5 .1 1.5 .2 1.5 .1 1.5 .2 1.5M-42.6 -20.7l1.2 .5 1.3 .4 1.2 .5 1.2 .5 1.2 .6 1.2 .6 1.2 .7 1.1 .6 1.2 .7 1.1 .8 1.1 .8 1.1 .8 1.1 .8 1.1 .9 1.1 .9 1 .9 1 1 1 .9 1 1.1 .9 1 1 1.1 .9 1.1 .9 1.1 .9 1.1 .8 1.2 .9 1.2 .8 1.2 .8 1.2 .8 1.3 .7 1.3 .8 1.3 .7 1.3 .7 1.3 .6 1.3 .7 1.4 .6 1.3 .6 1.4 .6 1.4 .6 1.4 .5 1.4 .6 1.5 .5 1.4 .5 1.4 .4 1.5 .5 1.5 .4 1.4 .4 1.5 .4 1.4 .4 1.5 .4 1.5 .3 1.5 .3 1.4 .4 1.5 .3 1.5 .3 1.5 .2 1.4 .3 1.5 .3 1.5 .2 1.5 .2 1.4M-41.2 -18.9l1.4 .1 1.4 .1 1.3 .2 1.4 .2 1.4 .3 1.3 .3 1.4 .4 1.3 .4 1.4 .4 1.3 .4 1.3 .5 1.3 .6 1.3 .6 1.3 .6 1.2 .6 1.3 .7 1.2 .8 1.2 .7 1.2 .8M-15.1 -9.4l1.1 .9 1.2 .9 1.1 .9 1.1 1 1.1 1 1.1 1 1 1.1 1 1 1 1.1 1 1.2 1 1.1 .9 1.2 .9 1.2 .9 1.2 .9 1.3 .8 1.3 .9 1.3 .8 1.3 .7 1.3 .8 1.3 .7 1.4 .7 1.4 .7 1.4 .6 1.4 .7 1.4 .6 1.4 .6 1.5 .5 1.4 .6 1.5 .5 1.4 .5 1.5 .5 1.5 .4 1.5 .4 1.5 .5 1.5 .3 1.4 .4 1.5 .4 1.5 .3 1.5 .3 1.5 .4 1.5M-47.4 -6l1.3 -.6 1.3 -.6 1.4 -.5 1.3 -.5 1.4 -.4 1.3 -.5 1.4 -.3 1.4 -.4 1.4 -.3 1.4 -.2 1.4 -.3 1.5 -.1 1.4 -.2 1.4 -.1 1.4 -.1 1.5 0 1.4 0 1.4 .1 1.4 .1 1.5 .1 1.4 .2 1.4 .2 1.4 .3 1.4 .3 1.4 .3 1.4 .4 1.4 .4 1.4 .5 1.3 .5 1.4 .5 1.3 .6 1.4 .6 1.3 .6 1.3 .7 1.3 .7 1.2 .7 1.3 .8 1.2 .8 1.2 .9 1.2 .9 1.2 .9 1.2 .9 1.1 1 1.1 1 1.1 1 1.1 1 1.1 1.1 1 1.1 1 1.2 1 1.1 1 1.2 .9 1.2 .9 1.2 .9 1.2 .9 1.3 .8 1.2 .9 1.3 .7 1.3 .8 1.3 .8 1.4 .7 1.3 .7 1.4 .7 1.4 .6 1.3 .7 1.4 .6 1.4 .6 1.4 .6 1.4 .5 1.5M-45.3 .2l1.3 -.7 1.3 -.7 1.2 -.6 1.3 -.6 1.3 -.6 1.3 -.6 1.4 -.5 1.3 -.5 1.4 -.4 1.3 -.4 1.4 -.4 1.4 -.3 1.4 -.3 1.4 -.3 1.4 -.2 1.4 -.2 1.4 -.1 1.4 -.1 1.4 -.1 1.4 0 1.4 0 1.5 0 1.4 .1 1.4 .1 1.4 .2 1.4 .2 1.4 .2 1.4 .3 1.4 .3 1.4 .4 1.4 .4 1.3 .4 1.4 .5 1.4 .5 1.3 .5 1.3 .6 1.3 .6 1.3 .6 1.3 .7 1.3 .7 1.2 .8 1.3 .7 1.2 .9 1.2 .8 1.2 .9 1.2 .8 1.1 1 1.1 .9 1.1 1 1.1 1 1.1 1 1 1.1 1.1 1.1 1 1.1 1 1.1 .9 1.1 .9 1.2 1 1.2 .9 1.2 .8 1.2 .9 1.2 .8 1.3 .8 1.2 .8 1.3 .7 1.3 .8 1.3 .7 1.3M-25.9 39.6l.4 -1.4 .5 -1.5 .5 -1.4 .5 -1.5 .5 -1.4 .6 -1.5 .5 -1.4 .6 -1.4 .6 -1.4 .7 -1.4 .6 -1.4 .7 -1.4 .7 -1.4 .7 -1.3 .8 -1.4 .8 -1.3 .8 -1.3 .8 -1.3 .9 -1.2 .8 -1.3 .9 -1.2 .9 -1.3 1 -1.1 1 -1.2 .9 -1.2 1.1 -1.1 1 -1.1 1.1 -1 1 -1.1 1.1 -1 1.1 -1 1.2 -.9 1.1 -1 1.2 -.9 1.2 -.8 1.2 -.9 1.3 -.8 1.2 -.7 1.3 -.7 1.3 -.7 1.3 -.7 1.3 -.6 1.3 -.6 1.3 -.5 1.4 -.6 1.3 -.4 1.4 -.5 1.4 -.3 1.3 -.4 1.4 -.3 1.4 -.3 1.4 -.2 1.4 -.2 1.4 -.2 1.4 -.1 1.5 0 1.4 -.1 1.4 0 1.4 .1 1.4 .1 1.4 .1 1.4 .2 1.4 .2 1.4 .2 1.4 .3 1.4 .4 1.4 .3"/><path stroke="#38c700" d="M87.9 4.2l-.9 -1.5 -.9 -1.4 -.9 -1.4 -.9 -1.5 -.9 -1.4M32.9 -77.7l-.5 -1.3 -.4 -1.2 -.5 -1.3 -.4 -1.2M-1.6 87.5l.4 -1.2 .3 -1.3 .3 -1.2M20.3 85.9l.4 -1.3 .3 -1.3 .3 -1.3M80 36.5l-.4 -1.5 -.3 -1.6 -.4 -1.6M45.5 -72l.1 -1.2 .1 -1.2 .1 -1.2M85 -24.2l-1.1 -1.3 -1.2 -1.2 -1.2 -1.3 -1.1 -1.2 -1.2 -1.2 -1.2 -1.2 -1.2 -1.3M75.6 -34.1l-1.3 -1.2M67.4 -57.1l-1.5 -1 -1.5 -.9 -1.4 -.9 -1.5 -.9 -1.4 -.9 -1.5 -.9 -1.5 -.9 -1.4 -.9 -1.5 -.9 -1.4 -.9M51.3 -67.1l-1.5 -.9M38.3 -75.1l-1.4 -.9M32.6 -78.6l-1.4 -.9M29.8 -80.4l-1.4 -.9 -1.3 -.9 -1.4 -.8 -1.3 -.9 -1.4 -.9M-4.5 -88.3l-1.8 .2 -1.7 .2 -1.7 .2 -1.7 .3 -1.7 .2 -1.8 .2 -1.7 .2M-13 -87.5l-1.5 .7 -1.6 .6 -1.5 .7 -1.5 .7 -1.6 .6 -1.5 .7 -1.6 .6 -1.6 .7 -1.5 .7 -1.6 .6 -1.6 .7 -1.6 .7 -1.6 .6 -1.6 .7 -1.5 .6 -1.6 .7 -1.6 .7 -1.6 .6 -1.6 .7 -1.6 .6 -1.6 .7 -1.6 .7 -1.6 .7 -1.6 .6 -1.6 .7M-82 26.6l-.5 1.5 -.5 1.6M-5.6 83.6l.3 1.3 .4 1.2 .3 1.3M7.6 84.3l.3 1.2 .4 1.2 .3 1.2M19.8 80.7l.2 1.3 .3 1.3 .2 1.2 .2 1.3M-49.7 -72.3l.3 1.1 .4 1.1 .3 1.2 .3 1.1 .3 1.2M-72.7 41.4l-.3 1.5M-73.3 44.5l-.2 1.5 -.2 1.6M-70.5 -53.2l1.2 .3 1.2 .3 1.2 .4 1.2 .4M-58.5 -66.1l.8 .8 .8 .8 .8 .9 .8 .9M41.3 73.5l.2 1.3 .3 1.3 .2 1.3M49.2 68.3l.3 1.3 .3 1.3 .3 1.3M81.9 16.3l.8 1.4 .8 1.3 .8 1.4 .8 1.3M-87.1 11.6l.9 -1.1 .9 -1.2 1 -1.2M73.5 -43.7l1.3 0 1.3 0M-52.1 70.2l.3 -1.3 .3 -1.3 .3 -1.3 .3 -1.3 .3 -1.3M42.6 -72.1l-.1 -1.2 0 -1.2 0 -1.3 0 -1.2"/><path stroke="#a65900" d="M83.4 -3l-1 -1.4 -.9 -1.4 -1 -1.4 -.9 -1.3 -1 -1.4 -1 -1.4 -1 -1.4 -1 -1.3 -1 -1.4 -1.1 -1.4 -1 -1.3 -1 -1.4 -1 -1.3 -1.1 -1.4 -1 -1.3 -1 -1.4 -1.1 -1.3 -1 -1.4 -1 -1.3 -1.1 -1.4 -1 -1.3 -1 -1.4 -1 -1.3 -1.1 -1.3 -1 -1.4 -1 -1.3 -1 -1.4M55.1 -41l-1 -1.3 -.9 -1.4 -1 -1.3 -1 -1.4 -.9 -1.3 -.9 -1.3 -1 -1.3 -.9 -1.4 -.9 -1.3 -.8 -1.3 -.9 -1.3 -.9 -1.4 -.8 -1.3 -.8 -1.3 -.8 -1.3 -.8 -1.3 -.8 -1.3 -.7 -1.3 -.8 -1.3 -.7 -1.3 -.7 -1.3 -.6 -1.3 -.7 -1.3 -.6 -1.3 -.6 -1.3 -.6 -1.2 -.5 -1.3 -.6 -1.3M-.6 83.8l.2 -1.3 .3 -1.3 .3 -1.3 .2 -1.3 .2 -1.3 .2 -1.3 .2 -1.3 .2 -1.4 .1 -1.3 .2 -1.4 .1 -1.4 .2 -1.3 .1 -1.4M21.3 82l.3 -1.3 .3 -1.3 .2 -1.3 .2 -1.4 .2 -1.3 .2 -1.4 .2 -1.4 .1 -1.3 .2 -1.4 .1 -1.4 .1 -1.4 .1 -1.4 .1 -1.4 0 -1.5M78.9 31.8l-.5 -1.5 -.4 -1.5 -.5 -1.6 -.5 -1.5 -.5 -1.5 -.5 -1.6 -.5 -1.5 -.5 -1.5 -.6 -1.5 -.6 -1.5 -.5 -1.6 -.6 -1.5 -.6 -1.5 -.7 -1.5 -.6 -1.5 -.6 -1.5 -.6 -1.5 -.7 -1.5 -.6 -1.5M48.2 -48.4l-.3 -1.4M47.6 -51.2l-.3 -1.3 -.3 -1.4 -.3 -1.4 -.2 -1.3 -.2 -1.3 -.2 -1.4 -.2 -1.3 -.1 -1.3 -.2 -1.3 -.1 -1.3 0 -1.3 -.1 -1.2 0 -1.3 0 -1.2 0 -1.3 .1 -1.2M76.8 -32.9l-1.2 -1.2M74.3 -35.3l-1.2 -1.2 -1.2 -1.2 -1.2 -1.2 -1.2 -1.2 -1.3 -1.2 -1.2 -1.2 -1.2 -1.1 -1.3 -1.2 -1.2 -1.2 -1.2 -1.2 -1.3 -1.1 -1.2 -1.2 -1.2 -1.2 -1.2 -1.2 -1.2 -1.1 -1.3 -1.2 -1.2 -1.1M52.8 -66.2l-1.5 -.9M49.8 -68l-1.4 -.9 -1.5 -.9 -1.4 -.9 -1.5 -.9 -1.4 -.9 -1.5 -.9 -1.4 -.8 -1.4 -.9M36.9 -76l-1.5 -.9 -1.4 -.9 -1.4 -.8M31.2 -79.5l-1.4 -.9M-68.5 -4.9l-.8 1.4 -.7 1.5 -.7 1.5 -.7 1.5 -.7 1.5 -.7 1.4 -.7 1.5 -.7 1.5 -.7 1.5 -.7 1.5 -.6 1.5 -.7 1.5 -.6 1.5 -.6 1.5 -.7 1.5 -.5 1.5 -.6 1.6 -.6 1.5 -.5 1.5 -.5 1.6 -.5 1.5M-8 69.1l.2 1.4 .1 1.4 .2 1.3 .2 1.4 .2 1.3 .2 1.3 .2 1.3 .3 1.3 .2 1.3 .3 1.3 .3 1.2M4.9 70.1l.2 1.3 .2 1.4 .2 1.3 .2 1.3 .2 1.3 .3 1.3 .2 1.3 .3 1.3 .3 1.2 .3 1.3 .3 1.2M17.8 64.4l.1 1.4 .2 1.4 .2 1.4 .1 1.4 .2 1.4 .1 1.3 .2 1.4 .2 1.3 .1 1.4 .2 1.3 .2 1.3 .2 1.3M-48.1 -66.6l.2 1.2 .2 1.2 .2 1.2 .1 1.2 .1 1.3 .1 1.2 .1 1.3 .1 1.3 0 1.3 0 1.3 0 1.3 -.1 1.4 -.1 1.3 -.1 1.4 -.1 1.4M-66 16.9l-.5 1.5 -.5 1.5 -.5 1.6 -.5 1.5 -.5 1.5 -.4 1.5 -.5 1.6 -.4 1.5 -.4 1.5 -.5 1.6 -.4 1.5 -.3 1.5 -.4 1.6 -.3 1.5 -.3 1.5 -.3 1.6M-73 42.9l-.3 1.6M-65.7 -51.8l1.1 .5 1.1 .5 1.1 .5 1.1 .5 1 .6 1.1 .6 1 .7 1 .7 .9 .7 1 .8 .9 .7 .9 .8 .9 .9 .9 .9M-55.3 -62.7l.7 .9 .7 .9 .7 1 .6 1 .7 1 .6 1.1 .5 1 .6 1.1 .5 1.1 .5 1.1 .4 1.2 .5 1.2 .4 1.2 .4 1.2M38.3 57l.3 1.4 .3 1.4 .2 1.4 .3 1.4 .3 1.4 .2 1.4 .2 1.4 .3 1.3 .2 1.4 .2 1.3 .3 1.4 .2 1.3M44.8 50.8l.4 1.3 .3 1.4 .4 1.4 .4 1.4 .3 1.3 .4 1.4 .3 1.4 .3 1.3 .3 1.4 .4 1.3 .3 1.3 .3 1.3 .3 1.3M68.1 .1l1.1 1 1.1 1 1.1 1.1 1 1.1 1.1 1.1 1 1.1 1 1.1 1 1.2 .9 1.2 1 1.2 .9 1.3 .9 1.3 .9 1.2 .8 1.3M-84.3 8.1l.9 -1.1 1 -1.1 1 -1 1.1 -1.1 1 -1 1.1 -1 1.1 -1 1.1 -.9 1.1 -1 1.1 -.9 1.2 -.8 1.1 -.8 1.2 -.9 1.2 -.7 1.2 -.8 1.2 -.7M57.7 -40l1.1 -.5 1.1 -.5 1.2 -.4 1.2 -.4 1.2 -.4 1.2 -.3 1.2 -.3 1.2 -.2 1.3 -.3 1.2 -.1 1.3 -.2 1.3 -.1 1.3 0M-50.6 63.7l.3 -1.3 .4 -1.4 .3 -1.3 .4 -1.4 .3 -1.3 .4 -1.4 .4 -1.3 .4 -1.4 .4 -1.4 .4 -1.3 .4 -1.4 .5 -1.4M47.9 -48l-.5 -1.4 -.5 -1.4 -.4 -1.4 -.4 -1.4 -.4 -1.3 -.4 -1.4 -.3 -1.4 -.4 -1.3 -.3 -1.3 -.3 -1.4 -.2 -1.3 -.3 -1.3 -.2 -1.3 -.2 -1.3 -.2 -1.3 -.1 -1.3 -.1 -1.3 -.1 -1.3"/><path stroke="#ff1500" d="M56.1 -39.7l-1 -1.3M1.9 66.5l.2 -1.4 .1 -1.4 .1 -1.5 .2 -1.4 .1 -1.4 .1 -1.5 .2 -1.4 .1 -1.5 .2 -1.4 .1 -1.5M23.6 62.8l.1 -1.4 0 -1.4 .1 -1.5 0 -1.4 .1 -1.5 0 -1.5 0 -1.4 0 -1.5 .1 -1.5 0 -1.5 0 -1.5 0 -1.5 .1 -1.5 0 -1.5 0 -1.5M68.3 3l-.7 -1.5 -.6 -1.5 -.7 -1.5 -.6 -1.5 -.7 -1.5 -.7 -1.5 -.6 -1.5 -.7 -1.5 -.6 -1.5 -.7 -1.5 -.6 -1.5 -.7 -1.4 -.6 -1.5 -.7 -1.5 -.6 -1.5 -.6 -1.5 -.6 -1.5 -.7 -1.5 -.6 -1.4 -.5 -1.5 -.6 -1.5 -.6 -1.4 -.5 -1.5 -.6 -1.5 -.5 -1.4 -.5 -1.5 -.5 -1.4 -.5 -1.5 -.5 -1.4 -.5 -1.4 -.4 -1.5 -.4 -1.4 -.4 -1.4 -.4 -1.4 -.4 -1.4M47.9 -49.8l-.3 -1.4M-9.9 47.6l.1 1.5 .2 1.5 .1 1.4 .1 1.5 .1 1.5 .2 1.4 .1 1.5 .1 1.4 .1 1.4 .1 1.4 .2 1.5 .1 1.4 .1 1.4 .2 1.3 .1 1.4M1.9 48.9l.3 1.5 .2 1.4 .2 1.5 .2 1.4 .2 1.5 .2 1.4 .2 1.4 .2 1.4 .2 1.4 .1 1.4 .2 1.4 .2 1.4 .2 1.4 .2 1.3 .2 1.4M14.8 43.8l.2 1.5 .3 1.5 .3 1.5 .2 1.5 .3 1.5 .2 1.5 .2 1.4 .2 1.5 .2 1.5 .2 1.4 .2 1.5 .1 1.4 .2 1.4 .2 1.5M-47.4 -47.3l-.1 1.3 -.2 1.4 -.2 1.4 -.2 1.5 -.2 1.4 -.3 1.4 -.2 1.4 -.3 1.5 -.3 1.4 -.4 1.5 -.3 1.5 -.4 1.4 -.3 1.5 -.4 1.5 -.4 1.5 -.4 1.5 -.5 1.5 -.4 1.5 -.5 1.5 -.4 1.5 -.5 1.5 -.5 1.5 -.5 1.6 -.5 1.5 -.5 1.5 -.5 1.5 -.6 1.6 -.5 1.5 -.5 1.5 -.6 1.5 -.5 1.6 -.6 1.5 -.5 1.5 -.5 1.5 -.6 1.6 -.5 1.5 -.6 1.5 -.5 1.6 -.6 1.5 -.5 1.5 -.5 1.5 -.6 1.6 -.5 1.5M-51.7 -42.4l.8 .9 .8 .9 .8 .9 .8 1 .8 1 .7 1.1 .7 1 .7 1.1 .6 1.1 .7 1.2 .6 1.1 .5 1.2 .6 1.2 .5 1.2 .6 1.3 .5 1.2M-47.5 -47.7l.3 1.2 .3 1.2 .3 1.3 .3 1.3 .3 1.3 .2 1.3 .2 1.4 .2 1.3 .1 1.4 .2 1.3 .1 1.4 .1 1.4 0 1.5 .1 1.4 0 1.4 0 1.5M32.3 35.5l.5 1.4 .5 1.4 .5 1.4 .5 1.5 .4 1.4 .5 1.5 .4 1.4 .4 1.4 .3 1.5 .4 1.4 .4 1.5 .3 1.4 .3 1.4 .3 1.5 .3 1.4M36.1 28.9l.7 1.3 .6 1.4 .7 1.3 .6 1.3 .6 1.4 .6 1.4 .6 1.3 .5 1.4 .5 1.4 .5 1.4 .5 1.3 .5 1.4 .5 1.4 .4 1.4 .4 1.4 .5 1.4M46.5 -11.8l1.4 .4 1.3 .5 1.4 .5 1.3 .5 1.3 .6 1.4 .6 1.3 .6 1.2 .7 1.3 .7 1.3 .7 1.2 .8 1.3 .8 1.2 .8 1.2 .9 1.2 .9 1.1 .9 1.2 1M-66.7 -6.7l1.3 -.6 1.2 -.7 1.3 -.6 1.2 -.6 1.3 -.5 1.3 -.5 1.3 -.5 1.3 -.4 1.3 -.4 1.3 -.4 1.4 -.3 1.3 -.3 1.3 -.3 1.4 -.2 1.3 -.1 1.4 -.2M25.8 62.6l.1 -1.4 0 -1.4 0 -1.5 0 -1.5 0 -1.4 0 -1.5 0 -1.5 0 -1.5 0 -1.5 0 -1.5 0 -1.5 0 -1.5 0 -1.5 0 -1.5 0 -1.5M41.3 -26.4l.8 -1.1 .8 -1 .9 -1 .8 -.9 .9 -1 .9 -.9 .9 -.8 1 -.9 .9 -.8 1 -.7 1 -.8 1.1 -.7 1 -.7 1.1 -.6 1 -.6 1.1 -.6 1.2 -.5M-46 47.4l.4 -1.4 .5 -1.3 .5 -1.4 .5 -1.4 .5 -1.4 .6 -1.3 .5 -1.4 .6 -1.3 .6 -1.4 .6 -1.3 .7 -1.4 .6 -1.3 .7 -1.3 .7 -1.3 .8 -1.3"/><path stroke="#ff8200" d="M24.1 40.7l.1 -1.6 0 -1.5 .1 -1.5 0 -1.6 .1 -1.5 .1 -1.5 0 -1.6 .1 -1.5 .1 -1.6 .2 -1.5 .1 -1.5 .1 -1.6 .2 -1.5 .1 -1.6M-41 -25l.4 1.3 .5 1.3 .4 1.4 .4 1.3 .4 1.4 .3 1.3 .4 1.4 .3 1.5 .3 1.4 .3 1.4 .2 1.5 .3 1.4 .2 1.5 .2 1.5 .1 1.5 .2 1.5 .1 1.5 .2 1.5 .1 1.6 .1 1.5 0 1.5 .1 1.6 0 1.5 .1 1.6 0 1.5 0 1.6M-45.8 -13.3l1.3 -.1 1.4 -.1 1.3 0 1.4 0 1.4 .1 1.3 .1 1.4 .1 1.3 .2 1.3 .2 1.4 .2 1.3 .3 1.3 .3 1.4 .4 1.3 .4 1.3 .4 1.3 .4 1.3 .5 1.2 .6 1.3 .5 1.3 .7 1.2 .6 1.2 .7 1.2 .7 1.2 .7 1.2 .8M25.9 40.4l0 -1.6 0 -1.5 .1 -1.5 0 -1.6 0 -1.5 0 -1.6 .1 -1.5 .1 -1.6 0 -1.5 .1 -1.6 .1 -1.5 .1 -1.6 .1 -1.5 .1 -1.6 .2 -1.5 .1 -1.6 .2 -1.5 .2 -1.6 .2 -1.5 .2 -1.5 .3 -1.5 .2 -1.5 .3 -1.5 .3 -1.5 .3 -1.5 .3 -1.5 .4 -1.4 .3 -1.5 .4 -1.4 .4 -1.4 .5 -1.4 .4 -1.4 .5 -1.4 .5 -1.3 .5 -1.4 .5 -1.3 .6 -1.3 .6 -1.3 .6 -1.2 .6 -1.3 .7 -1.2 .6 -1.2 .7 -1.1 .7 -1.2 .8 -1.1 .7 -1.1 .8 -1M-37.2 27.2l.7 -1.3 .8 -1.3 .8 -1.2 .8 -1.3 .8 -1.2 .9 -1.2 .9 -1.2 .9 -1.2 .9 -1.2 1 -1.1 1 -1.1 .9 -1.1 1.1 -1.1 1 -1 1.1 -1.1 1 -1 1.1 -1 1.2 -.9 1.1 -.9 1.2 -.9"/></g>
<text x="-3" y="-16.4" text-anchor="end" font-size="11">20</text>
<text x="-3" y="-36.6" text-anchor="end" font-size="11">40</text>
<text x="-3" y="-56.9" text-anchor="end" font-size="11">60</text>
<text x="-3" y="-77.1" text-anchor="end" font-size="11">80</text>
<circle r="91.0" fill="none" stroke="#222" stroke-width="1.2"/>
</g>
<text x="300.0" y="350.4" text-anchor="middle" font-size="11">360</text>
<text x="343.4" y="363.3" font-size="11">30</text>
<text x="380.8" y="400.4" font-size="11">60</text>
<text x="394.6" y="450.7" font-size="11">90</text>
<text x="381.6" y="500.5" font-size="11">120</text>
<text x="343.0" y="537.8" font-size="11">150</text>
<text x="300.0" y="550.8" text-anchor="middle" font-size="11">180</text>
<text x="238.6" y="537.8" font-size="11">210</text>
<text x="200.6" y="500.7" font-size="11">240</text>
<text x="186.5" y="450.8" font-size="11">270</text>
<text x="200.6" y="400.9" font-size="11">300</text>
<text x="238.6" y="363.3" font-size="11">330</text>
<text x="300.0" y="328.7" text-anchor="middle" font-size="19.5" font-weight="bold">SNR1</text>
<g transform="translate(581 447)">
<circle r="91.0" fill="#fff"/>
<circle r="20.22" fill="none" stroke="#000" stroke-width="1"/>
<circle r="40.44" fill="none" stroke="#000" stroke-width="1"/>
<circle r="60.67" fill="none" stroke="#000" stroke-width="1"/>
<circle r="80.89" fill="none" stroke="#000" stroke-width="1"/>
<line x1="0" y1="0" x2="45.50" y2="-78.81" stroke="#000" stroke-width="1"/>
<line x1="0" y1="0" x2="78.81" y2="-45.50" stroke="#000" stroke-width="1"/>
<line x1="0" y1="0" x2="78.81" y2="45.50" stroke="#000" stroke-width="1"/>
<line x1="0" y1="0" x2="45.50" y2="78.81" stroke="#000" stroke-width="1"/>
<line x1="0" y1="0" x2="-45.50" y2="78.81" stroke="#000" stroke-width="1"/>
<line x1="0" y1="0" x2="-78.81" y2="45.50" stroke="#000" stroke-width="1"/>
<line x1="0" y1="0" x2="-78.81" y2="-45.50" stroke="#000" stroke-width="1"/>
<line x1="0" y1="0" x2="-45.50" y2="-78.81" stroke="#000" stroke-width="1"/>
<line x1="-91.0" y1="0" x2="91.0" y2="0" stroke="#7A7A7A" stroke-width="2"/>
<line x1="0" y1="-91.0" x2="0" y2="91.0" stroke="#7A7A7A" stroke-width="2"/>
<rect x="-19" y="-26.7" width="17" height="13" fill="#fff"/>
<rect x="-19" y="-46.9" width="17" height="13" fill="#fff"/>
<rect x="-19" y="-67.2" width="17" height="13" fill="#fff"/>
<rect x="-19" y="-87.4" width="17" height="13" fill="#fff"/>
<g fill="none" stroke-width="4.5" stroke-linecap="round" stroke-linejoin="round"><path stroke="#0080ff" d="M-70.7 52l.4 -1.4 .5 -1.3 .4 -1.4 .5 -1.4M82.4 -21.7l1.3 .7 1.2 .7 1.3 .7M74.7 -41.5l1.3 0 1.4 .1M32.7 -76.8l-1 -1.2 -1 -1.1 -.9 -1.1 -1 -1.2 -.9 -1.1 -.9 -1.2M23.5 -84.5l-1.3 -.8M-56.1 67.5l.3 -1.4 .3 -1.3 .4 -1.3 .3 -1.4 .3 -1.3M-35.6 80.2l.3 -1.2 .3 -1.2 .2 -1.3 .3 -1.3M34.4 81l.3 -1.4 .2 -1.4 .3 -1.3 .2 -1.4M87.4 -13.7l-1.1 -1.4 -1 -1.3 -1 -1.4 -1.1 -1.3 -1 -1.4 -1.1 -1.3M34.2 -77.8l-.8 -1.2 -.8 -1.2 -.8 -1.2 -.7 -1.2M81.3 -34.3l-1.2 -1.2 -1.3 -1.2 -1.2 -1.1 -1.3 -1.2 -1.2 -1.1 -1.3 -1.2M32.7 -77.7l-1.1 -1.1 -1.1 -1.1 -1.1 -1 -1.1 -1.1 -1 -1.1 -1.1 -1.1M72.4 -50.5l-1.5 -.9 -1.4 -1 -1.5 -.9 -1.5 -.9 -1.5 -.9 -1.4 -.9 -1.5 -.9 -1.5 -1 -1.5 -.9 -1.5 -.9 -1.5 -.9 -1.5 -.9 -1.5 -.9 -1.4 -.9 -1.5 -.8M48.7 -65l-1.5 -.9 -1.5 -.9 -1.4 -.9M42.8 -68.6l-1.5 -.9 -1.4 -.9 -1.5 -.9M35.5 -73.1l-1.4 -.9 -1.4 -.9 -1.5 -.9 -1.4 -.9 -1.4 -.9 -1.4 -.9 -1.3 -.9 -1.4 -.9 -1.4 -.9 -1.3 -.9 -1.4 -.9 -1.3 -.9 -1.3 -.9 -1.3 -.9 -1.3 -.9M49.2 73.3l.2 -1.5 .2 -1.4 .1 -1.5 .1 -1.4 .1 -1.5M-36.9 75.6l.2 1.4 .2 1.3 .3 1.4M-58.3 60.9l0 1.5 0 1.5 .1 1.5M45.8 -75.2l-1.7 -.6 -1.6 -.5 -1.7 -.5 -1.7 -.5 -1.6 -.5 -1.7 -.6 -1.7 -.5 -1.6 -.5 -1.7 -.5 -1.6 -.5 -1.7 -.5 -1.7 -.6 -1.6 -.5 -1.7 -.5 -1.6 -.5 -1.7 -.5 -1.6 -.6 -1.6 -.5 -1.7 -.5 -1.6 -.5 -1.6 -.6 -1.6 -.5 -1.6 -.5 -1.6 -.6 -1.6 -.5M-29.3 -82.9l-.8 1.2 -.8 1.2 -.8 1.2 -.8 1.2M-81.4 -21.1l-1.1 1.3M-83.6 -18.5l-1 1.3 -1.1 1.4 -1.1 1.3M-77 -41.8l1.3 -.1 1.3 0 1.3 0M-21.5 82.8l.3 1.3 .4 1.3M-55 -68.3l.6 .9 .7 1 .6 1 .5 1M-67.3 -57.3l1.1 .4 1.1 .6 1 .5 1 .6 1 .7M26.5 81.1l.3 1.2 .3 1.2M73.3 38l.6 1.4 .5 1.3 .6 1.4 .5 1.4 .5 1.3M-70.4 -53.1l1.3 .3 1.2 .3 1.2 .4 1.1 .4 1.2 .4M-80.8 -35.8l1.3 -.3 1.3 -.3 1.4 -.2 1.3 -.2 1.3 -.1 1.4 -.2M-87.8 1.9l1.1 -1.1 1 -1.1 1.1 -1"/><path stroke="#00eeff" d="M-68.9 46.5l.5 -1.3 .5 -1.4 .5 -1.4 .5 -1.3 .6 -1.4 .5 -1.4 .6 -1.3M71.9 -25.7l1.3 .4 1.3 .4 1.3 .4 1.4 .5 1.3 .5 1.3 .6 1.3 .6 1.3 .6M65.9 -40.8l1.2 -.2 1.2 -.2 1.3 -.1 1.3 -.1 1.3 -.1 1.2 0 1.3 0M54 -54.9l-1.2 -1.1 -1.2 -1.2 -1.2 -1.2 -1.2 -1.1 -1.2 -1.2 -1.1 -1.1 -1.2 -1.2 -1.1 -1.2 -1.2 -1.1 -1.1 -1.2 -1.1 -1.1 -1.1 -1.2 -1.1 -1.1 -1.1 -1.2 -1.1 -1.1 -1 -1.2 -1 -1.1 -1.1 -1.2 -1 -1.1M-54.5 60.8l.3 -1.4 .4 -1.3M-34.5 75.2l.3 -1.3 .2 -1.3 .3 -1.3 .2 -1.3 .3 -1.3M35.4 75.5l.2 -1.4 .1 -1.4 .2 -1.4 .1 -1.4 .1 -1.4 .1 -1.4M81.1 -21.8l-1.1 -1.3 -1.1 -1.3 -1.1 -1.3 -1 -1.3 -1.2 -1.3 -1.1 -1.3 -1.1 -1.2 -1.1 -1.3 -1.1 -1.3 -1.1 -1.3 -1.1 -1.2 -1.2 -1.3 -1.1 -1.3 -1.1 -1.2 -1.1 -1.3 -1.2 -1.2M50.2 -57.1l-1 -1.3 -1.1 -1.2 -1 -1.2 -1 -1.2 -1 -1.3 -1 -1.2 -1 -1.2 -.9 -1.2 -1 -1.2 -.9 -1.2 -.9 -1.3 -.9 -1.2 -.9 -1.2 -.9 -1.2 -.9 -1.2 -.8 -1.2 -.8 -1.2M73.8 -41.3l-1.3 -1.1 -1.3 -1.2 -1.3 -1.1 -1.2 -1.1 -1.3 -1.2 -1.3 -1.1 -1.3 -1.1 -1.3 -1.1 -1.3 -1.1 -1.3 -1.2 -1.3 -1.1 -1.3 -1.1 -1.2 -1.1 -1.3 -1.1 -1.3 -1.1 -1.3 -1.1 -1.2 -1.1 -1.3 -1.1 -1.3 -1.1 -1.2 -1.1 -1.3 -1.1 -1.2 -1 -1.2 -1.1 -1.2 -1.1 -1.3 -1.1 -1.2 -1.1 -1.2 -1.1 -1.1 -1.1 -1.2 -1.1 -1.2 -1 -1.1 -1.1 -1.2 -1.1 -1.1 -1.1M50.2 -64.1l-1.5 -.9M44.3 -67.7l-1.5 -.9M38.4 -71.3l-1.4 -.9 -1.5 -.9M49.9 66l.1 -1.5 0 -1.4 0 -1.5 0 -1.5 -.1 -1.5 0 -1.4M-37.7 67.1l.1 1.4 .1 1.5 .1 1.4 .1 1.4 .2 1.4 .2 1.4M-57.5 50.3l-.2 1.5 -.2 1.5 -.1 1.5 -.1 1.6 -.1 1.5 -.1 1.5 0 1.5M-32.5 -78.1l-.8 1.2 -.8 1.2 -.9 1.2 -.9 1.2 -.9 1.2 -.9 1.2 -1 1.2 -.9 1.2 -1 1.3 -.9 1.2 -1 1.2 -1 1.2 -1.1 1.2 -1 1.3 -1 1.2 -1.1 1.2M-65.6 -38.9l-1.1 1.2 -1.2 1.3 -1.1 1.2 -1.1 1.3 -1.2 1.2 -1.1 1.3 -1.2 1.3 -1.1 1.3 -1.1 1.2 -1.2 1.3 -1.1 1.3 -1.1 1.3 -1.1 1.3 -1.1 1.3M-82.5 -19.8l-1.1 1.3M-73.1 -41.9l1.3 .1 1.3 .1 1.2 .1 1.3 .2 1.2 .2 1.2 .2 1.3 .3 1.2 .3M-23.2 73.5l.1 1.3 .2 1.4 .3 1.3 .2 1.4 .3 1.3 .2 1.3 .4 1.3M-52.6 -64.4l.6 1 .5 1.1 .5 1.1 .4 1.1 .5 1.1 .4 1.2 .3 1.1M-62.1 -54.5l1 .6 1 .7 .9 .7 .9 .8 .9 .8 .9 .8M24.4 72.3l.3 1.3 .3 1.3 .3 1.2 .2 1.3 .3 1.2 .3 1.3 .4 1.2M69.5 30l.7 1.3 .6 1.4 .7 1.3 .6 1.3 .6 1.4 .6 1.3M-64.4 -51.3l1.1 .5 1.1 .5 1.1 .5 1.1 .6 1.1 .6 1 .6M-72.8 -37.1l1.3 0 1.3 0 1.3 0 1.3 0 1.3 .1 1.3 .1M-84.6 -1.3l1.1 -1.1 1.1 -.9 1.1 -1 1.1 -.9 1.2 -.9 1.2 -.9 1.2 -.8 1.2 -.8"/><path stroke="#00ff35" d="M-61.3 29l.8 -1.3 .7 -1.2 .8 -1.3 .8 -1.3 .8 -1.2 .8 -1.2 .9 -1.2 .8 -1.2M53.3 -26.6l1.3 -.2 1.3 -.2 1.4 -.1 1.3 -.1 1.3 0 1.3 0 1.3 .1 1.4 .1M50.1 -33.8l1 -.7 1 -.7 1.1 -.7 1 -.6 1.1 -.6 1.1 -.5 1.2 -.5M-31.6 60.5l.3 -1.4 .3 -1.4 .3 -1.4 .3 -1.4 .3 -1.4 .3 -1.4 .4 -1.4M36.3 58.4l-.1 -1.5 0 -1.4 0 -1.5 -.1 -1.5 -.1 -1.5 0 -1.5 -.1 -1.5 -.1 -1.5M46.7 -35.5l.8 -1 .7 -1 .8 -1 .8 -1 .9 -.9 .8 -.9 .9 -.8 .9 -.9 .9 -.8M49 46.7l-.2 -1.5 -.1 -1.5 -.2 -1.5 -.2 -1.6 -.3 -1.5 -.2 -1.5 -.2 -1.6 -.2 -1.5M-37.2 46.5l-.1 1.5 -.1 1.6 -.1 1.4 -.1 1.5 0 1.5 -.1 1.5 0 1.5 -.1 1.4M-53 25.9l-.3 1.5 -.4 1.6 -.3 1.5 -.3 1.5 -.4 1.6 -.3 1.5 -.3 1.5 -.3 1.6 -.3 1.5 -.3 1.5M-57.3 -38.2l1.1 .5 1.1 .6 1 .6 1.1 .6 1.1 .7 1 .7 1 .7 1 .8 1 .8M-24.3 55.1l0 1.4 0 1.5 .1 1.4 0 1.5 .1 1.4 0 1.4 .1 1.4M-47.5 -48l.2 1.3 .2 1.3 .1 1.3 .1 1.4 0 1.3 .1 1.4 0 1.4 0 1.4 0 1.4 0 1.4M-56.6 15.9l-.4 1.5 -.4 1.6 -.4 1.5 -.4 1.5 -.4 1.6 -.4 1.5 -.4 1.6 -.4 1.5 -.3 1.5 -.4 1.6 -.4 1.5M-51.1 -43.7l.7 1 .6 1.1 .7 1 .6 1.1 .6 1.2 .5 1.1 .6 1.2 .5 1.2M-43.4 40.5l-.2 1.5 -.1 1.5 -.1 1.5 -.2 1.5 -.1 1.5 -.1 1.5 -.1 1.5 -.1 1.5 0 1.5M21.2 56.1l.3 1.4 .3 1.4 .2 1.4 .3 1.3 .3 1.4 .3 1.4 .2 1.3M57.8 13.1l.9 1.1 1 1.1 .9 1.1 .9 1.2 .9 1.2 .9 1.2 .8 1.2 .9 1.2M-52.1 -43.4l.8 .8 .9 .9 .8 .9 .9 1 .7 .9 .8 1.1 .8 1 .7 1M-57.6 -35.3l1.2 .4 1.2 .4 1.2 .5 1.1 .5 1.2 .5 1.1 .6 1.1 .6 1.1 .7M-68 -12.8l1.3 -.5 1.3 -.6 1.3 -.5 1.3 -.4 1.3 -.5 1.3 -.3 1.4 -.4 1.3 -.3 1.3 -.3"/><path stroke="#00ffa3" d="M-65.2 37l.6 -1.4 .6 -1.3 .7 -1.3 .7 -1.3 .6 -1.4 .7 -1.3M63.9 -27l1.3 .1 1.3 .2 1.4 .2 1.3 .2 1.3 .3 1.4 .3M57.6 -38.1l1.1 -.5 1.2 -.5 1.1 -.4 1.2 -.4 1.2 -.3 1.2 -.3 1.3 -.3M-33.2 68.7l.3 -1.4 .2 -1.3 .3 -1.4 .2 -1.3 .3 -1.4 .3 -1.4M36.2 67.1l0 -1.5 .1 -1.4 0 -1.5 0 -1.4 0 -1.5 0 -1.4M54.2 -43.8l.9 -.7 1 -.8 1 -.7 1 -.7 1 -.6 1.1 -.6M63.3 -42.2l-1.1 -1.3 -1.1 -1.2 -1.1 -1.3 -1.1 -1.2 -1.1 -1.3 -1.1 -1.2 -1.1 -1.2 -1.1 -1.3 -1.1 -1.2 -1.1 -1.3 -1 -1.2 -1.1 -1.2M49.9 57.2l-.1 -1.5 -.1 -1.5 -.1 -1.5 -.1 -1.5 -.2 -1.5 -.1 -1.5 -.2 -1.5M-37.8 58.4l0 1.5 0 1.5 0 1.4 0 1.4 0 1.5 .1 1.4M-56.2 41.2l-.2 1.5 -.3 1.6 -.2 1.5 -.2 1.5 -.2 1.5 -.2 1.5M-47.7 -58.7l-1.1 1.2 -1 1.2 -1.1 1.3 -1.1 1.2 -1.1 1.2 -1.1 1.3 -1.1 1.2 -1.1 1.2 -1.2 1.3 -1.1 1.2 -1.1 1.2 -1.2 1.3 -1.1 1.2 -1.2 1.3 -1.1 1.2 -1.2 1.3M-63.1 -40.4l1.2 .4 1.1 .4 1.2 .4 1.1 .5 1.2 .5M-24 65.1l.1 1.5 .1 1.4 .1 1.4 .2 1.3 .1 1.4 .2 1.4M-49.4 -56.7l.4 1.2 .3 1.2 .3 1.2 .3 1.3 .2 1.2 .2 1.3 .2 1.3M-56.5 -50.1l.8 .8 .8 .9 .8 .9 .8 .9 .8 .9 .7 1 .7 1M-44.4 54l-.1 1.4 -.1 1.5 0 1.5 0 1.5 0 1.4 0 1.5M23.1 65.7l.3 1.3 .2 1.4 .3 1.3 .3 1.3 .2 1.3M65 22.4l.8 1.2 .8 1.3 .7 1.2 .8 1.3 .7 1.3 .7 1.3M-57.9 -48l1 .7 1 .7 1 .8 .9 .7 1 .8 .9 .9M-65 -36.9l1.2 .2 1.3 .2 1.2 .2 1.3 .3 1.2 .3 1.2 .4M-75.4 -8.6l1.2 -.8 1.2 -.8 1.2 -.7 1.3 -.6 1.2 -.7 1.3 -.6"/><path stroke="#38c700" d="M-54.9 19.1l.9 -1.2 1 -1.2 .9 -1.1 1 -1.1 1 -1.1 1 -1.1 1 -1 1.1 -1.1 1 -1M3.2 52.6l.1 -1.4 .2 -1.5 .2 -1.5 .1 -1.5M42.1 -23.3l1.2 -.5 1.2 -.5 1.2 -.4 1.3 -.4 1.2 -.4 1.3 -.4 1.3 -.3 1.3 -.2 1.2 -.2M41.7 -25.9l.9 -1 .8 -1 .9 -.9 .9 -.9 1 -.9 .9 -.9 1 -.8 1 -.8 1 -.7M-29.4 50.7l.3 -1.4 .4 -1.4 .4 -1.4 .4 -1.5 .4 -1.4 .5 -1.4 .4 -1.4 .5 -1.4M35.8 46.5l-.1 -1.5 -.1 -1.5 -.1 -1.5 -.1 -1.6 0 -1.5 -.1 -1.5 -.1 -1.6 -.1 -1.5 -.1 -1.6M40.6 -23.9l.5 -1.3 .5 -1.2 .6 -1.2 .6 -1.2 .6 -1.2 .6 -1.1 .7 -1.2 .6 -1.1 .7 -1.1 .7 -1M47.4 34.5l-.2 -1.5 -.3 -1.6 -.2 -1.5 -.2 -1.6 -.3 -1.5 -.2 -1.6 -.2 -1.5 -.3 -1.6 -.2 -1.6 -.2 -1.5 -.2 -1.6 -.2 -1.6M-36.3 32.8l-.1 1.5 -.1 1.5 -.1 1.6 -.1 1.5 -.1 1.6 -.1 1.5 -.1 1.5 -.1 1.5 -.1 1.5M-44.8 -26.7l0 1.5 -.1 1.5 0 1.5 -.1 1.4 -.1 1.5 -.1 1.6 -.1 1.5 -.2 1.5 -.1 1.5 -.2 1.6M-46.4 -7l-.3 1.6M-47.2 -2.3l-.2 1.6M-47.7 .8l-.3 1.6 -.3 1.6 -.3 1.5 -.3 1.6 -.3 1.6 -.4 1.5 -.3 1.6 -.3 1.6 -.4 1.5 -.3 1.6 -.4 1.6 -.3 1.5 -.4 1.6 -.3 1.6 -.4 1.5 -.3 1.6M-47.9 -32.2l.9 .8 .9 .9 .9 .9 .9 .9 .9 1 .9 .9 .8 1 .8 1.1 .8 1M-24.6 41.6l.1 1.5 0 1.5 0 1.5 0 1.5 .1 1.5 0 1.5 0 1.5 0 1.5 .1 1.5M-46.8 -34.4l-.1 1.4 -.1 1.5 -.1 1.4 -.1 1.5 -.2 1.4 -.1 1.5 -.2 1.5 -.2 1.5 -.2 1.5 -.2 1.5 -.3 1.5 -.2 1.5 -.3 1.6 -.3 1.5 -.3 1.5 -.3 1.6 -.3 1.5 -.4 1.6 -.3 1.5 -.4 1.6 -.3 1.5 -.4 1.6 -.4 1.5 -.4 1.6 -.4 1.5 -.4 1.6 -.4 1.5 -.4 1.6 -.4 1.6 -.4 1.5 -.4 1.6 -.4 1.5 -.5 1.6M-46.3 -34.8l.5 1.2 .4 1.2 .5 1.2 .4 1.3 .4 1.3 .4 1.3 .3 1.3 .4 1.4 .3 1.3 .2 1.4M-41.9 25l-.1 1.6 -.2 1.5 -.1 1.6 -.2 1.5 -.1 1.6 -.2 1.5 -.2 1.6 -.1 1.5 -.2 1.5 -.1 1.6M18.4 44.8l.4 1.5 .4 1.4 .3 1.4 .4 1.4 .3 1.4 .3 1.4 .4 1.4 .3 1.4M48 4.3l1.2 .8 1.1 .9 1.2 1 1.1 .9 1 1 1.1 1 1 1 1.1 1.1 1 1.1M-48.4 -31.1l1.1 .6 1.1 .7 1 .8 1 .8 1 .8 1 .8 1 .9 .9 .9 1 .9M-56.2 -16.6l1.4 -.2 1.3 -.2 1.4 -.2 1.3 -.1 1.4 -.1 1.3 0 1.4 0 1.3 0 1.4 .1"/><path stroke="#a65900" d="M-46 9.2l1.1 -.9 1.1 -1 1.2 -.9 1.1 -.9 1.2 -.9 1.2 -.8 1.2 -.8 1.2 -.8 1.2 -.8 1.3 -.7 1.3 -.7 1.3 -.6 1.3 -.6 1.3 -.6 1.3 -.6M3.8 46.7l.2 -1.5 .2 -1.5 .2 -1.5 .2 -1.5 .3 -1.5 .2 -1.5 .3 -1.5 .2 -1.5 .3 -1.5 .3 -1.5 .3 -1.5 .3 -1.5 .4 -1.5 .3 -1.5M26.8 -12.3l1 -1 1 -.9 1 -1 1 -.9 1.1 -.8 1.1 -.9 1 -.8 1.1 -.7 1.2 -.8 1.1 -.7 1.1 -.7 1.2 -.6 1.2 -.6 1.2 -.6M25.3 19.7l.2 -1.5 .2 -1.5 .2 -1.6 .2 -1.5 .3 -1.5 .2 -1.5 .3 -1.5 .3 -1.5M27.8 4.6l.4 -1.4M28.9 .3l.4 -1.5 .4 -1.4 .5 -1.4 .4 -1.4 .5 -1.4 .5 -1.3 .5 -1.4 .6 -1.3 .6 -1.3 .5 -1.3 .7 -1.2 .6 -1.3 .6 -1.2 .7 -1.2 .7 -1.1 .7 -1.2 .8 -1.1 .7 -1.1 .8 -1.1 .8 -1 .8 -1M-26.1 39.4l.5 -1.5 .5 -1.4 .5 -1.4 .6 -1.4 .5 -1.4 .6 -1.4 .6 -1.3 .7 -1.4 .6 -1.4 .7 -1.3 .7 -1.4 .7 -1.3 .7 -1.3M35 32.7l-.1 -1.5 -.1 -1.6 0 -1.5 -.1 -1.6 -.1 -1.6 0 -1.5 -.1 -1.6 0 -1.6 0 -1.5 0 -1.6 0 -1.6 0 -1.5 0 -1.6 0 -1.5 .1 -1.6 .1 -1.5 0 -1.6 .1 -1.5 .1 -1.6 .2 -1.5 .1 -1.5 .2 -1.5 .1 -1.5 .2 -1.5 .2 -1.5 .3 -1.5 .2 -1.4 .3 -1.5 .3 -1.4 .3 -1.4 .3 -1.4 .4 -1.4 .4 -1.4 .4 -1.3 .4 -1.4 .4 -1.3 .5 -1.3 .5 -1.3M-35.5 12.4l0 1.6 0 1.6 0 1.5 0 1.6 -.1 1.6 -.1 1.5 0 1.6 -.1 1.6 -.1 1.5 -.1 1.6 -.1 1.5 -.1 1.6 -.1 1.6M-45.8 -11.6l-.2 1.5 -.2 1.6 -.2 1.5M-46.7 -5.4l-.2 1.5 -.3 1.6M-47.4 -.7l-.3 1.5M-40.1 -23.7l.8 1.1 .7 1.1 .7 1.2 .7 1.1 .7 1.2 .7 1.2 .6 1.2 .6 1.3 .6 1.2 .6 1.3 .5 1.3 .6 1.4 .5 1.3 .5 1.4 .4 1.4 .5 1.4 .4 1.4 .4 1.4 .4 1.4 .4 1.5 .3 1.4 .4 1.5 .3 1.5 .3 1.5 .3 1.5 .2 1.5 .3 1.5 .2 1.5 .2 1.5 .2 1.6 .2 1.5 .2 1.5 .1 1.6 .1 1.5 .2 1.5 .1 1.6 .1 1.5 .1 1.6 .1 1.5 0 1.5 .1 1.6 .1 1.5 0 1.5 .1 1.6 0 1.5 0 1.5M-42.5 -21.9l.3 1.4 .3 1.4 .2 1.4 .2 1.4 .2 1.5 .1 1.4 .2 1.5 .1 1.4 .1 1.5 .1 1.5 .1 1.5 0 1.5 .1 1.6 0 1.5 0 1.5 0 1.6 0 1.5 0 1.6 -.1 1.5 0 1.6 -.1 1.5 -.1 1.6 -.1 1.5 -.1 1.6 -.1 1.6 -.1 1.5 -.1 1.6 -.1 1.6 -.2 1.5 -.1 1.6 -.2 1.5M11.9 26.6l.6 1.4 .6 1.4 .6 1.4 .5 1.3 .6 1.4 .5 1.4 .5 1.5 .5 1.4 .4 1.4 .5 1.4 .4 1.4 .4 1.4 .4 1.4M27.4 -5.4l1.4 .4 1.4 .3 1.4 .5 1.3 .4 1.3 .5 1.4 .5 1.3 .6 1.3 .6 1.3 .6 1.2 .7 1.3 .7 1.2 .7 1.3 .7 1.2 .8 1.2 .8 1.1 .9M-39.3 -23.9l.9 1 .9 1 .8 1 .9 1.1 .8 1 .8 1.1 .8 1.2 .8 1.1 .7 1.2 .7 1.2 .7 1.2 .7 1.3 .7 1.2 .6 1.3 .6 1.3 .6 1.3M-44 -17.3l1.3 .1 1.4 .2 1.3 .2 1.3 .2 1.3 .2 1.4 .4 1.3 .3 1.3 .4 1.3 .4 1.3 .5 1.2 .4 1.3 .6 1.2 .5 1.3 .6 1.2 .7M6.8 27.6l.5 1.5 .6 1.4 .4 1.4 .5 1.5 .5 1.4 .4 1.5 .4 1.4 .4 1.5 .4 1.4 .3 1.5 .4 1.4 .3 1.5 .4 1.4 .3 1.5"/><path stroke="#ff1500" d="M-27.7 -2.4l1.3 -.5 1.4 -.5 1.4 -.4 1.3 -.4 1.4 -.4 1.4 -.3 1.4 -.3 1.4 -.3 1.4 -.2 1.4 -.2 1.5 -.1 1.4 -.1 1.4 -.1 1.4 0 1.5 0 1.4 0 1.4 .1 1.5 .1 1.4 .2 1.4 .2 1.4 .2 1.4 .3 1.4 .3 1.4 .4 1.4 .4 1.4 .4 1.3 .5 1.4 .5 1.3 .5 1.4 .6 1.3 .6 1.3 .6 1.3 .7 1.3 .7 1.2 .8 1.3 .7 1.2 .8 1.2 .9 1.2 .8 1.1 .9 1.2 .9M7.5 25.7l.4 -1.5 .4 -1.5 .4 -1.5 .5 -1.4 .4 -1.5 .5 -1.5 .5 -1.4 .5 -1.4 .5 -1.5 .6 -1.4 .6 -1.4 .6 -1.4 .6 -1.3 .6 -1.4 .7 -1.3 .7 -1.4 .7 -1.3 .7 -1.3 .8 -1.2 .7 -1.3 .8 -1.2 .8 -1.2 .9 -1.2 .8 -1.1 .9 -1.1 .9 -1.1 .9 -1.1 1 -1.1 .9 -1M27.2 7.6l.3 -1.5 .3 -1.5M28.2 3.2l.3 -1.5 .4 -1.4M-13.7 -4.9l1.1 .8 1.2 .8 1.1 .9 1.2 .8 1.1 1 1 .9 1.1 1 1.1 1 1 1 1 1 1 1.1 1 1.1 .9 1.1 1 1.2 .9 1.1 .9 1.2 .8 1.2 .9 1.3 .8 1.2 .8 1.3 .8 1.2 .8 1.3 .7 1.3 .7 1.3 .7 1.4 .7 1.3 .7 1.4 .6 1.3M-18.5 5.2l1.2 -.9 1.2 -.9 1.2 -.8 1.2 -.8 1.2 -.7 1.3 -.7 1.3 -.7 1.3 -.7 1.3 -.6 1.3 -.6 1.3 -.6 1.4 -.5 1.3 -.5 1.4 -.5 1.3 -.4 1.4 -.4 1.4 -.3 1.4 -.3 1.4 -.3 1.4 -.2 1.4 -.2 1.4 -.1 1.5 -.2 1.4 0 1.4 -.1 1.4 0 1.4 .1 1.4 .1 1.5 .1 1.4 .1 1.4 .2 1.4 .3 1.4 .2 1.3 .3M-24.6 -11.6l1.2 .7 1.2 .7 1.2 .7 1.2 .8 1.1 .8 1.2 .8 1.1 .9 1.1 .9 1.1 .9 1 1 1.1 1 1 1 1 1 1 1.1 1 1.1 .9 1.1 1 1.1 .9 1.2 .9 1.2 .8 1.2 .9 1.2 .8 1.3 .8 1.2 .8 1.3 .7 1.3 .8 1.3 .7 1.4 .7 1.3 .6 1.4 .7 1.3 .6 1.4 .6 1.4 .6 1.4 .6 1.4 .5 1.4"/><path stroke="#0080ff" d="M57.6 61.1l.4 1.3 .3 1.3 .3 1.4M-78.2 -39.9l1.4 -.3 1.4 -.2 1.4 -.2 1.3 -.1M-68 -55.2l1.1 .5 1.2 .4M-64.7 -53.8l1.1 .6M-86.2 -19.2l1.3 -.7 1.2 -.8 1.3 -.6 1.3 -.7M-87.3 6.5l1 -1.2 1 -1.1 1 -1M-53.8 58.1l.3 -1.4M83.1 20.6l.8 1.3 .8 1.3M68 -51.2l1.2 -.3 1.2 -.3M-61.2 63.5l.4 -1.4 .3 -1.3 .4 -1.3M59.9 -58.5l1 -.7 .9 -.7 1 -.6 1 -.7M82 31.2l-.4 -1.6 -.5 -1.5 -.5 -1.5 -.5 -1.6 -.5 -1.5M43.7 -70l-.1 -1.3M43.6 -72.5l-.1 -1.2 0 -1.3 .1 -1.2M66.7 56.6l-.1 -1.6 -.1 -1.5 -.1 -1.5 -.2 -1.6 -.2 -1.5M26.4 -84.3l-1.7 -.3 -1.7 -.4 -1.7 -.4 -1.7 -.3 -1.7 -.4 -1.7 -.4 -1.7 -.3 -1.7 -.4 -1.6 -.4 -1.7 -.3M4.7 87.7l.3 -1.3 .3 -1.2 .3 -1.3M-8.5 -88l-1.4 .7 -1.6 .7 -1.5 .7 -1.5 .7 -1.5 .7 -1.6 .7 -1.5 .6 -1.5 .7 -1.6 .7 -1.6 .7 -1.5 .6 -1.6 .7 -1.6 .7 -1.6 .7 -1.6 .6M-33.3 -77.1l-1.5 .7 -1.6 .7 -1.6 .6 -1.7 .7 -1.6 .7 -1.6 .6 -1.6 .7 -1.6 .7 -1.6 .7 -1.6 .6 -1.6 .7 -1.6 .7 -1.6 .7 -1.6 .6 -1.6 .7M87.5 11l-.7 -1.5 -.7 -1.5 -.7 -1.5 -.8 -1.5 -.8 -1.4 -.7 -1.5M-64.3 54.2l-.1 1.5 -.1 1.5 0 1.5 0 1.6M-43.9 72.8l.3 1.4 .2 1.4 .3 1.4M77.8 41.4l-.3 -1.6 -.3 -1.6 -.3 -1.5 -.3 -1.6 -.4 -1.5M62.5 -62.2l-1.5 -.8 -1.5 -.9 -1.5 -.9 -1.5 -.8 -1.5 -.8 -1.5 -.9 -1.5 -.8 -1.5 -.9 -1.5 -.8 -1.5 -.8 -1.5 -.9 -1.5 -.8M43 -73.1l-1.4 -.9 -1.5 -.8 -1.5 -.8 -1.5 -.8 -1.5 -.9M34.2 -78.1l-1.5 -.8M31.3 -79.7l-1.5 -.8M28.4 -81.4l-1.5 -.8 -1.4 -.8 -1.4 -.8 -1.4 -.9 -1.4 -.8M-38 -79.4l-.3 1.2 -.4 1.3 -.3 1.2 -.4 1.3 -.4 1.3M-36.2 76.2l.2 1.4 .2 1.3 .3 1.4M-15.1 82.1l.3 1.3 .3 1.3 .4 1.3 .3 1.2M19 83.1l.3 1.3 .3 1.2"/><path stroke="#00eeff" d="M55.8 54.3l.4 1.4 .4 1.3 .3 1.4 .4 1.3 .3 1.4M-72.7 -40.7l1.4 -.1 1.4 -.1 1.3 0 1.4 .1 1.3 0 1.3 .1 1.3 .2M-65.7 -54.3l1 .5M-63.6 -53.2l1.1 .5 1 .6 1 .7 1 .6 1 .7M-81.1 -22l1.3 -.6 1.3 -.6 1.3 -.5 1.4 -.5 1.3 -.4 1.3 -.5 1.3 -.3M-84.3 3.2l1.1 -1.1 1 -1 1.1 -1 1.1 -1 1.1 -.9 1.1 -.9 1.1 -.9 1.2 -.9M-53.5 56.7l.4 -1.4 .4 -1.3 .4 -1.4M67.6 35.6l.6 1.3 .6 1.4 .5 1.3M76.1 10.8l1 1.1 .9 1.2 .9 1.2 .9 1.2 .9 1.3 .8 1.2 .8 1.3 .8 1.3M60.2 -47.9l1 -.6 1.1 -.5 1.1 -.5 1.1 -.5 1.2 -.4 1.1 -.4 1.2 -.4M-60.1 59.5l.3 -1.3 .4 -1.4 .4 -1.3 .4 -1.3 .4 -1.4 .5 -1.3 .4 -1.4M54.9 -53.5l.7 -.9 .8 -.9 .9 -.8 .8 -.8 .9 -.8 .9 -.8M79.6 23.5l-.5 -1.5 -.6 -1.6 -.6 -1.5 -.6 -1.5 -.6 -1.5 -.6 -1.5 -.6 -1.5 -.6 -1.5M44.7 -62.2l-.2 -1.4 -.2 -1.3 -.2 -1.3 -.2 -1.3 -.1 -1.2 -.1 -1.3M43.6 -71.3l0 -1.2M66 48.9l-.2 -1.5 -.2 -1.6 -.3 -1.5 -.3 -1.5 -.3 -1.5 -.3 -1.6M5.6 83.9l.3 -1.3 .2 -1.3 .3 -1.3 .2 -1.3 .2 -1.3 .2 -1.3M-31.7 -77.8l-1.6 .7M83.1 2.1l-.8 -1.5 -.8 -1.4 -.9 -1.5 -.8 -1.4 -.8 -1.5 -.9 -1.4 -.8 -1.4 -.9 -1.4 -.9 -1.5M-63 43.5l-.3 1.5 -.2 1.5 -.2 1.6 -.2 1.5 -.2 1.5 -.1 1.5 -.1 1.6M-44.6 62.8l0 1.4 .1 1.5 .1 1.4 .1 1.4 .1 1.5 .2 1.4 .1 1.4M76.2 33.6l-.4 -1.6 -.4 -1.5 -.4 -1.6 -.5 -1.5 -.4 -1.5 -.5 -1.5 -.5 -1.6 -.5 -1.5M44.5 -72.3l-1.5 -.8M35.6 -77.3l-1.4 -.8M32.7 -78.9l-1.4 -.8M29.8 -80.5l-1.4 -.9M-39.8 -73.1l-.4 1.3 -.4 1.2 -.5 1.3 -.5 1.3 -.5 1.3 -.5 1.3 -.5 1.4 -.6 1.3 -.6 1.3M-76.7 -5.9l-.9 1.4 -.8 1.5 -.8 1.4 -.9 1.5 -.8 1.4 -.8 1.5 -.7 1.4 -.8 1.5 -.8 1.5 -.7 1.5M-37 66.3l0 1.4 .1 1.4 .1 1.5 .1 1.4 .1 1.4 .2 1.4 .2 1.4M-16.4 74.2l.2 1.3 .2 1.4 .2 1.3 .2 1.3 .3 1.3 .2 1.3M17.4 75.6l.2 1.3 .3 1.2 .2 1.3 .3 1.3 .3 1.2 .3 1.2"/><path stroke="#00ff35" d="M48.3 33.9l.6 1.3 .6 1.3 .6 1.4 .6 1.3 .5 1.4 .6 1.4 .5 1.3 .5 1.4M-55.6 -38.8l1.2 .5 1.2 .4 1.2 .5 1.2 .6 1.1 .6 1.2 .6 1.1 .6M-52.4 -44.4l.8 1 .8 .9 .7 1 .8 1 .6 1.1 .7 1 .7 1.1 .6 1.1M-62.5 -27l1.3 0 1.3 0 1.4 0 1.3 0 1.3 .1 1.3 .2 1.3 .1 1.3 .2M-67 -9.6l1.2 -.6 1.3 -.6 1.3 -.5 1.3 -.5 1.2 -.5 1.4 -.4 1.3 -.4 1.3 -.4M-49.7 44.3l.5 -1.4 .5 -1.4 .5 -1.3 .6 -1.4 .5 -1.4 .6 -1.3 .6 -1.4M56.1 16.5l1 1.1 .8 1.2 .9 1.2 .9 1.2 .8 1.3 .8 1.2 .8 1.3M59.7 -3.7l1.2 .8 1.2 .8 1.2 .8 1.2 .8 1.1 .9 1.2 .9 1.1 1 1.1 1M-54.4 42l.6 -1.4 .5 -1.3 .6 -1.3 .6 -1.4 .6 -1.3 .7 -1.3 .6 -1.3 .7 -1.3M46.1 -37.2l.4 -1.3 .4 -1.2 .5 -1.2 .5 -1.2 .5 -1.1 .5 -1.2 .6 -1.1 .6 -1.1M68 -3.5l-.7 -1.5 -.8 -1.5 -.7 -1.5 -.7 -1.5 -.7 -1.4 -.7 -1.5 -.7 -1.5 -.8 -1.5 -.7 -1.4 -.7 -1.5 -.7 -1.5 -.7 -1.5 -.7 -1.4 -.6 -1.5 -.7 -1.5 -.7 -1.4 -.6 -1.5 -.7 -1.4 -.6 -1.5 -.7 -1.4 -.6 -1.5 -.6 -1.4 -.6 -1.5 -.5 -1.4 -.6 -1.4 -.5 -1.5 -.6 -1.4 -.5 -1.4 -.5 -1.4 -.5 -1.4 -.4 -1.4 -.5 -1.4M61.5 27.5l-.5 -1.5 -.4 -1.6 -.4 -1.5 -.5 -1.6 -.4 -1.5 -.5 -1.5 -.4 -1.6 -.5 -1.5 -.4 -1.6 -.5 -1.5M46.5 -36.6l-.1 -1.4 0 -1.5 -.1 -1.4 0 -1.3 0 -1.4 .1 -1.4 0 -1.3 .1 -1.4 .2 -1.3 .1 -1.3M7.9 66.5l.1 -1.5 .1 -1.4 .1 -1.4 .1 -1.4 .1 -1.5 .1 -1.4M-53.4 -43.8l-.8 1.4 -.8 1.4M-55.9 -39.7l-.8 1.4 -.8 1.4M-58.4 -35.5l-.8 1.4 -.9 1.4 -.9 1.4 -.8 1.4 -.9 1.4 -.9 1.4M-64.5 -25.7l-.8 1.4M-36.4 47.1l-.1 1.5 -.1 1.5 -.1 1.5 0 1.5 -.1 1.5 -.1 1.5 0 1.5M-17.5 55.8l0 1.4 .1 1.5 0 1.4 .1 1.5 .1 1.4 0 1.4 .1 1.4 .1 1.4M14.5 57.9l.2 1.4 .2 1.4 .2 1.4 .3 1.4 .2 1.4 .2 1.3 .2 1.4"/><path stroke="#00ffa3" d="M52.8 44.7l.4 1.4 .5 1.4 .5 1.3 .4 1.4 .4 1.4 .4 1.3 .4 1.4M-63.3 -40.5l1.3 .2 1.3 .2 1.3 .3 1.3 .3 1.2 .3 1.3 .4M-58.5 -50.1l.9 .7 1 .8 .9 .8 .8 .8 .9 .9 .8 .8 .8 .9M-71.9 -25.4l1.4 -.4 1.3 -.3 1.3 -.2 1.4 -.2 1.3 -.2 1.3 -.2 1.4 -.1M-75.5 -4.5l1.2 -.8 1.1 -.8 1.2 -.8 1.3 -.7 1.2 -.7 1.2 -.7 1.3 -.6M-52.3 52.6l.4 -1.4 .4 -1.4 .4 -1.4 .5 -1.3 .4 -1.4 .5 -1.4M62.1 25l.7 1.3 .8 1.3 .7 1.3 .7 1.3 .7 1.3 .6 1.4 .7 1.3 .6 1.4M69 3.3l1.1 .9 1 1.1 1.1 1 1 1.1 1 1.1 1 1.1 .9 1.2M-57.3 50.1l.4 -1.3 .5 -1.4 .5 -1.4 .5 -1.3 .5 -1.4 .5 -1.3M50.1 -46.6l.6 -1 .6 -1.1 .7 -1 .7 -1 .7 -1 .7 -.9 .8 -.9M74.9 11.4l-.7 -1.5 -.7 -1.5 -.6 -1.5 -.7 -1.5 -.7 -1.5 -.7 -1.5 -.7 -1.5 -.7 -1.5 -.7 -1.4 -.7 -1.5M47.7 -50l-.4 -1.4 -.4 -1.4 -.4 -1.4 -.3 -1.3 -.4 -1.4 -.3 -1.3 -.3 -1.4 -.3 -1.3 -.2 -1.3M64.4 39.7l-.3 -1.5 -.3 -1.5 -.4 -1.5 -.4 -1.6 -.3 -1.5 -.4 -1.5 -.4 -1.6 -.4 -1.5M46.8 -50.3l.2 -1.3 .2 -1.2 .2 -1.3 .2 -1.2 .3 -1.3 .3 -1.2 .3 -1.2M7 76.1l.1 -1.4 .2 -1.3 .1 -1.4 .2 -1.4 .1 -1.3 .1 -1.4 .1 -1.4M75.5 -10.9l-.9 -1.4 -.8 -1.4 -.9 -1.4 -.9 -1.4 -.9 -1.4 -.9 -1.4 -.9 -1.4 -.9 -1.4 -.9 -1.4 -.9 -1.4 -.9 -1.4 -.9 -1.4 -.9 -1.4 -.9 -1.4 -.9 -1.4 -.9 -1.3M-60.9 32.8l-.3 1.5 -.3 1.6 -.4 1.5 -.3 1.5 -.3 1.5 -.3 1.6 -.2 1.5M-44.3 -61.4l-.6 1.3 -.6 1.4 -.7 1.3 -.6 1.3 -.7 1.4 -.7 1.3 -.7 1.4 -.7 1.4 -.8 1.3 -.7 1.4 -.8 1.4 -.7 1.3 -.8 1.4M-55 -41l-.9 1.3M-57.5 -36.9l-.9 1.4M-63.6 -27.1l-.9 1.4M-65.3 -24.3l-.9 1.4 -.9 1.4 -.9 1.4 -.9 1.4 -.9 1.4 -.9 1.4 -.8 1.4 -.9 1.5 -.9 1.4 -.9 1.4 -.8 1.4 -.9 1.5 -.8 1.4M-36.9 57.6l-.1 1.4 0 1.5 0 1.4 0 1.5 0 1.4 0 1.5M-17 67.2l.1 1.4 .1 1.4 .2 1.4 .1 1.4 .1 1.4M16 67.6l.2 1.4 .3 1.3 .2 1.3 .2 1.4 .2 1.3 .3 1.3"/><path stroke="#38c700" d="M42.5 23.5l.8 1.2 .8 1.3 .7 1.3 .7 1.3 .8 1.3 .7 1.3 .6 1.3 .7 1.4M-47.4 -35l1.1 .7 1.1 .8 1 .7 1.1 .8 1 .9 1 .8 1 .9 .9 .9 1 1M-46.7 -36.2l.6 1.2 .6 1.1 .5 1.2 .6 1.2 .5 1.2 .4 1.3 .5 1.2 .4 1.3 .5 1.3 .3 1.3M-52 -26.4l1.3 .3 1.3 .3 1.2 .3 1.3 .4 1.3 .4 1.2 .4 1.2 .5 1.2 .5 1.2 .6M-56.7 -13.5l1.3 -.3 1.3 -.3 1.4 -.2 1.3 -.2 1.3 -.2 1.4 -.1 1.3 -.1 1.4 0 1.3 -.1M-45.9 34.7l.7 -1.4 .6 -1.3 .7 -1.3 .7 -1.3 .7 -1.4 .7 -1.3 .8 -1.2 .8 -1.3 .8 -1.3 .8 -1.2M45.8 6l1.1 .9 1.1 1 1.1 1 1.1 1 1 1 1.1 1.1 1 1.1 .9 1.1 1 1.1 .9 1.2M48.1 -9l1.3 .4 1.3 .5 1.4 .5 1.3 .6 1.2 .6 1.3 .6 1.3 .7 1.2 .7 1.3 .7M-49.5 31.4l.7 -1.3 .7 -1.3 .8 -1.3 .8 -1.3 .7 -1.2 .8 -1.2 .9 -1.3 .8 -1.2M43 -21l.1 -1.4 .2 -1.4 .2 -1.5 .2 -1.3 .2 -1.4 .2 -1.4 .3 -1.3 .3 -1.4 .3 -1.3 .3 -1.3 .4 -1.3 .4 -1.2M57 12.1l-.4 -1.6 -.5 -1.5 -.5 -1.6 -.4 -1.5 -.5 -1.6 -.4 -1.5 -.4 -1.6 -.5 -1.5 -.4 -1.6 -.4 -1.6 -.4 -1.5 -.4 -1.6 -.4 -1.5 -.4 -1.6 -.4 -1.5 -.4 -1.5 -.3 -1.6 -.4 -1.5 -.3 -1.5 -.3 -1.6 -.3 -1.5 -.3 -1.5 -.2 -1.5 -.3 -1.5 -.2 -1.5 -.2 -1.5 -.2 -1.5 -.2 -1.4 -.2 -1.5 -.1 -1.4 -.1 -1.5 -.1 -1.4M8.5 57.9l.1 -1.5 .1 -1.5 .1 -1.4 .1 -1.5 .1 -1.5 .1 -1.5 .1 -1.5 .1 -1.5M-45.7 -35.8l.7 1.1 .6 1.1 .7 1.2 .6 1.1 .6 1.2 .6 1.2 .6 1.2 .5 1.3 .5 1.2 .5 1.3M-35.2 31.7l-.1 1.6 -.1 1.5 -.2 1.6 -.1 1.5 -.1 1.6 -.1 1.5 -.1 1.6 -.1 1.5 -.1 1.5 -.2 1.5M-17.9 45.3l0 1.5 .1 1.6 0 1.4 .1 1.5 .1 1.5 0 1.5 .1 1.5M12.6 47.9l.3 1.4 .3 1.5 .2 1.4 .3 1.4 .3 1.5 .2 1.4 .3 1.4"/><path stroke="#a65900" d="M27.8 6.9l1.1 1 1.1 .9 1.1 1 1.1 1.1 1 1 1 1.1 1.1 1.1 .9 1.1 1 1.1 .9 1.2 .9 1.1 .9 1.2 .9 1.2 .8 1.3 .9 1.2M-38.2 -27.5l.9 1 .9 1 .8 1.1 .9 1 .8 1.1 .8 1.2 .8 1.1 .8 1.2 .7 1.2 .7 1.3 .7 1.2 .6 1.3 .7 1.3 .6 1.3 .6 1.4 .5 1.3M-19.8 20.1l.2 1.6 .1 1.5 .1 1.6 .1 1.6 .1 1.6 .1 1.6 0 1.5 .1 1.6 0 1.6 .1 1.6 0 1.5 0 1.6 0 1.6 0 1.5 0 1.6 0 1.5M-41.8 -23.9l.4 1.4 .4 1.3 .3 1.4 .3 1.4 .3 1.4 .2 1.4 .3 1.4 .2 1.5 .2 1.4 .2 1.5 .2 1.5 .1 1.5 .1 1.5 .1 1.5 .1 1.5 .1 1.5 .1 1.5 0 1.6 .1 1.5 0 1.6 0 1.5 0 1.6 -.1 1.5 0 1.6 -.1 1.6 0 1.5 -.1 1.6 -.1 1.6 -.1 1.5 0 1.6 -.1 1.6 -.2 1.5 -.1 1.6 -.1 1.5 -.1 1.6M-44.7 -15l1.4 .1 1.3 0 1.4 .1 1.3 .1 1.3 .2 1.4 .2 1.3 .3 1.3 .3 1.3 .3 1.3 .4 1.3 .4 1.3 .4 1.3 .5 1.3 .5 1.2 .5M-38.6 21.7l.8 -1.3 .9 -1.2 .9 -1.2 .9 -1.2 1 -1.1 .9 -1.2 1 -1.1 1 -1.1 1 -1 1.1 -1.1 1.1 -1 1.1 -1 1.1 -1 1.1 -.9M25.5 -4.8l1.3 .4 1.4 .5 1.3 .5 1.4 .5 1.3 .6 1.3 .6 1.3 .6 1.3 .7 1.3 .7 1.2 .7 1.3 .7 1.2 .8 1.2 .9 1.2 .8 1.1 .9 1.2 .9M27.4 -11.2l1.4 -.1 1.4 -.1 1.4 -.1 1.4 0 1.4 .1 1.4 0 1.3 .1 1.4 .2 1.4 .2 1.4 .2 1.4 .3 1.3 .3 1.4 .3 1.3 .4 1.4 .4M-43.3 21.3l.9 -1.1 .9 -1.2 .9 -1.2 1 -1.1 .9 -1.1 1 -1.1 1 -1.1 1 -1 1.1 -1.1 1.1 -1 1 -.9 1.2 -1 1.1 -.9 1.1 -.9 1.2 -.9 1.2 -.8M44.7 15.8l-.2 -1.6 -.2 -1.5 -.2 -1.6 -.2 -1.6 -.2 -1.5 -.2 -1.6 -.1 -1.6 -.1 -1.5 -.2 -1.6 -.1 -1.6 -.1 -1.5 -.1 -1.6 -.1 -1.5 0 -1.5 -.1 -1.6 0 -1.5 0 -1.5 0 -1.5 0 -1.5 0 -1.5 .1 -1.5 .1 -1.5 .1 -1.4 .1 -1.5M9.3 46l.2 -1.5 .1 -1.5 .2 -1.5 .1 -1.5 .2 -1.6 .2 -1.5 .1 -1.5 .2 -1.6 .3 -1.5 .2 -1.5 .2 -1.5 .3 -1.6 .3 -1.5 .3 -1.5M-39.8 -23.9l.4 1.3 .5 1.4 .4 1.3 .4 1.4 .4 1.3 .3 1.4 .3 1.4 .3 1.5 .3 1.4 .3 1.5 .2 1.4 .3 1.5 .2 1.5 .1 1.5 .2 1.5 .2 1.5 .1 1.6 .1 1.5 .1 1.5 .1 1.6 0 1.5 .1 1.6 0 1.6 0 1.5 0 1.6 0 1.6 0 1.5 0 1.6 -.1 1.6 0 1.6 -.1 1.5 -.1 1.6 0 1.6 -.1 1.5 -.1 1.6 -.1 1.6 -.1 1.5M-20.3 19.3l.2 1.5 .2 1.6 .3 1.5 .1 1.5 .2 1.6 .2 1.5 .2 1.6 .1 1.5 .1 1.5 .2 1.6 .1 1.5 .1 1.5 .1 1.6 .1 1.5 0 1.5 .1 1.5 .1 1.5"/><path stroke="#ff1500" d="M-26.4 -8.5l.6 1.4 .5 1.4 .5 1.4 .5 1.5 .4 1.4 .5 1.5 .4 1.5 .3 1.5 .4 1.5 .3 1.5 .4 1.5 .3 1.6 .2 1.5 .3 1.5 .2 1.6 .3 1.6 .2 1.5 .1 1.6 .2 1.6M-25 -10.7l1.3 .6 1.2 .6 1.2 .7 1.3 .6 1.2 .7 1.1 .8 1.2 .8 1.2 .8 1.1 .8 1.1 .9 1.1 .9 1.1 .9 1.1 1 1 1 1 1 1.1 1 .9 1.1 1 1.1 1 1.1 .9 1.1 .9 1.2 .9 1.2 .9 1.2 .8 1.2 .8 1.2 .9 1.3 .7 1.3 .8 1.2 .7 1.3 .8 1.4 .7 1.3 .6 1.3 .7 1.4 .6 1.3 .6 1.4 .6 1.4M-24.7 6.3l1.2 -1 1.1 -.9 1.2 -.8 1.2 -.9 1.3 -.8 1.2 -.7 1.3 -.8 1.2 -.7 1.3 -.6 1.3 -.7 1.4 -.6 1.3 -.6 1.3 -.5 1.4 -.5 1.4 -.5 1.4 -.4 1.3 -.4 1.4 -.3 1.4 -.3 1.5 -.3 1.4 -.2 1.4 -.2 1.4 -.2 1.4 -.1 1.5 -.1 1.4 -.1 1.4 0 1.5 .1 1.4 .1 1.4 .1 1.4 .1 1.5 .2 1.4 .2 1.4 .3 1.4 .3 1.4 .4 1.4 .3M-18.2 21.5l.8 -1.3 .8 -1.3 .8 -1.3 .8 -1.3 .9 -1.2 .9 -1.2 .9 -1.2 .9 -1.2 .9 -1.2 1 -1.1 1 -1.1 1 -1.1 1 -1.1 1.1 -1 1 -1.1 1.1 -1 1.1 -.9M3.7 -2.5l1.2 -.8 1.2 -.7 1.3 -.8 1.2 -.6 1.3 -.7 1.3 -.6 1.3 -.6 1.3 -.5 1.3 -.5 1.4 -.5 1.3 -.4 1.4 -.4 1.3 -.4 1.4 -.3 1.4 -.3 1.3 -.2 1.4 -.2 1.4 -.2M-27.3 -5.4l.6 1.4 .5 1.4 .6 1.3 .5 1.4 .5 1.4 .4 1.5 .5 1.4 .4 1.4 .4 1.5 .4 1.5 .4 1.5 .3 1.4 .3 1.5 .3 1.6 .3 1.5 .3 1.5 .3 1.5"/><path stroke="#ff8200" d="M-2.2 1.9l1.2 -1 1.1 -.9 1.2 -.8 1.2 -.9 1.2 -.8"/><path stroke="#0080ff" d="M-18.1 82.8l.2 1.3 .2 1.3 .3 1.3M-27.3 -83.7l-.9 1.2 -.9 1.1 -1 1.1 -.9 1.2 -1 1.1M-78.3 -30.9l-1.2 1.2 -1.2 1.2 -1.1 1.3 -1.2 1.2 -1.2 1.3 -1.1 1.3M-37.9 -79l-.3 1.2 -.4 1.3M-39 -75.2l-.5 1.2M-85.3 5.7l-.8 1.5 -.7 1.4 -.7 1.5M-40.4 74.8l.2 1.4 .2 1.4 .3 1.4M1.2 84.1l.3 1.3 .3 1.2 .3 1.2M22.9 82.1l.3 1.2 .4 1.2M69.3 39.6l.6 1.4M70.4 42.4l.5 1.4 .5 1.3 .5 1.4 .4 1.4 .5 1.4M-43 -76.1l-.1 1.3 0 1.2 -.1 1.2M-84.2 -26.5l1.3 -.5 1.4 -.5 1.3 -.5 1.3 -.4M-87.7 -11.7l1.2 -.8 1.2 -.9 1.2 -.8 1.2 -.8M67.7 50.9l.4 1.4 .4 1.3 .4 1.3M-87.9 4.3l1 -1.2 1 -1.2 1 -1.2 1.1 -1.1 1 -1.1 1.1 -1.1 1.2 -1.1M50.6 -64.6l.5 -1.1 .5 -1.1 .5 -1 .6 -1 .6 -1M-81.7 32.6l.6 -1.4 .6 -1.4 .7 -1.4 .7 -1.4 .7 -1.4M-77.1 41.4l.5 -1.4 .6 -1.4 .5 -1.3 .6 -1.4M-74.3 34.6l.7 -1.4M79.9 -28.5l1.3 .5 1.3 .6 1.3 .5M-34 81.5l.3 -1.2 .2 -1.3 .2 -1.3 .3 -1.3M39.5 -74.6l-.4 -1.3M38.7 -77.2l-.4 -1.2 -.3 -1.3M60.3 63.3l0 -1.5 0 -1.5 0 -1.5 0 -1.5M55.3 -63.9l.7 -.9 .8 -.9 .7 -.9M47.2 -69.3l.1 -1.2 .2 -1.1 .2 -1.2 .2 -1.2M-84.7 8.7l-.7 1.5 -.7 1.5 -.7 1.5M23.1 84.6l.3 -1.3 .3 -1.3 .3 -1.4M-12.2 -87.6l-1.7 .3 -1.7 .3 -1.7 .3 -1.7 .3M82.5 30.3l-.4 -1.6 -.5 -1.5 -.5 -1.6 -.6 -1.5 -.5 -1.5M88 -.1l-.9 -1.5 -.8 -1.4 -.9 -1.4 -.9 -1.4 -1 -1.4 -.9 -1.4M37 -74.8l-.6 -1.2 -.6 -1.3 -.6 -1.2 -.6 -1.2 -.5 -1.3M71.5 -51.4l-1.5 -1 -1.4 -.9 -1.4 -1 -1.4 -1 -1.5 -1 -1.4 -.9 -1.4 -1 -1.5 -.9M31.9 -77.9l-1.3 -1M29.2 -79.8l-1.3 -.9 -1.3 -1 -1.3 -.9 -1.3 -.9 -1.3 -1 -1.2 -.9"/><path stroke="#00eeff" d="M-19 74.6l.1 1.4 .1 1.4 .1 1.3 .2 1.4 .2 1.3 .2 1.4M-32 -78l-1 1.2 -1 1.1 -1 1.2 -1 1.1 -1.1 1.2 -1 1.1 -1.1 1.2 -1.1 1.2 -1.1 1.1 -1.1 1.2 -1.1 1.1 -1.1 1.2 -1.1 1.1 -1.2 1.2 -1.1 1.2 -1.2 1.1 -1.2 1.2 -1.2 1.2 -1.2 1.1 -1.1 1.2 -1.2 1.2 -1.2 1.1 -1.3 1.2 -1.2 1.2 -1.2 1.2 -1.2 1.2 -1.2 1.1 -1.2 1.2 -1.3 1.2 -1.2 1.2 -1.2 1.2 -1.2 1.2 -1.2 1.2 -1.3 1.2 -1.2 1.2 -1.2 1.2 -1.2 1.2 -1.2 1.2 -1.2 1.2 -1.2 1.3M-38.6 -76.5l-.4 1.3M-39.5 -74l-.5 1.3 -.4 1.3 -.6 1.3 -.5 1.2 -.5 1.3 -.6 1.3 -.6 1.3 -.6 1.3 -.6 1.4 -.7 1.3M-76.2 -10.2l-.9 1.4 -.9 1.4 -.9 1.4 -.8 1.5 -.8 1.4 -.9 1.5 -.8 1.4 -.8 1.5 -.8 1.4 -.8 1.5 -.7 1.5M-41.3 64.9l.1 1.4 0 1.4 .1 1.5 .1 1.4 .2 1.4 .2 1.4 .2 1.4M-.2 76.4l.2 1.3 .2 1.3 .2 1.3 .2 1.3 .3 1.3 .3 1.2M21.1 74.6l.3 1.3 .3 1.2 .3 1.3 .3 1.2 .3 1.2 .3 1.3M69.9 41l.5 1.4M-43.2 -72.4l-.1 1.3 -.1 1.3 -.2 1.2 -.1 1.3 -.3 1.3 -.2 1.3 -.2 1.3 -.3 1.4M-78.9 -28.4l1.3 -.4 1.3 -.3 1.3 -.4 1.4 -.2 1.3 -.3 1.3 -.2 1.3 -.1M-82.9 -15l1.3 -.7 1.2 -.7 1.3 -.7 1.2 -.6 1.3 -.6 1.3 -.6 1.3 -.5M64.8 42.8l.5 1.4 .5 1.3 .5 1.4 .5 1.3 .4 1.4 .5 1.3M-80.5 -3.7l1.1 -1 1.1 -1 1.2 -1 1.2 -.9 1.2 -.9 1.2 -.9M48.5 -59l.4 -1.1 .4 -1.2 .4 -1.1 .4 -1.1 .5 -1.1M-78.4 25.6l.7 -1.3 .7 -1.4 .8 -1.3 .8 -1.3 .8 -1.3 .8 -1.3 .9 -1.3M-74.9 35.9l.6 -1.3M-73.6 33.2l.6 -1.3 .7 -1.4 .7 -1.3 .7 -1.3 .7 -1.3M70.5 -30.8l1.3 .2 1.4 .3 1.3 .3 1.4 .3 1.3 .4 1.3 .4 1.4 .4M-33 76.4l.2 -1.3 .2 -1.3 .2 -1.4 .2 -1.3 .2 -1.4 .2 -1.4M44.8 -61.7l-.6 -1.3 -.6 -1.3 -.6 -1.3 -.5 -1.3 -.6 -1.3 -.5 -1.3 -.5 -1.3 -.5 -1.3 -.5 -1.3 -.4 -1.2M39.1 -75.9l-.4 -1.3M60.3 57.3l-.1 -1.5 -.1 -1.5 -.1 -1.5 -.2 -1.5 -.2 -1.5 -.1 -1.6 -.2 -1.5M51.1 -56.8l.5 -1.1 .6 -1.1 .5 -1 .7 -1 .6 -1 .6 -1 .7 -.9M47 -59.2l-.1 -1.3 0 -1.3 0 -1.3 0 -1.2 0 -1.3 .1 -1.2 0 -1.2 .2 -1.3M24 80.6l.3 -1.3 .2 -1.3 .2 -1.4 .2 -1.4 .2 -1.3 .1 -1.4 .1 -1.4M80 22.6l-.6 -1.6 -.6 -1.5 -.6 -1.5 -.6 -1.5 -.6 -1.5 -.7 -1.5 -.6 -1.5 -.7 -1.5 -.7 -1.5M82.6 -8.6l-.9 -1.4 -1 -1.4 -.9 -1.4 -1 -1.4 -1 -1.4 -.9 -1.3 -1 -1.4 -1 -1.4 -1 -1.3 -1 -1.4 -1 -1.3 -1 -1.4M44.2 -62l-.8 -1.3 -.8 -1.3 -.8 -1.3 -.7 -1.3 -.7 -1.2 -.8 -1.3 -.7 -1.3 -.6 -1.2 -.7 -1.3 -.6 -1.3M60 -59.1l-1.4 -1 -1.4 -.9 -1.5 -1 -1.4 -.9 -1.4 -1 -1.5 -.9 -1.4 -1 -1.4 -.9 -1.4 -1 -1.4 -.9 -1.4 -.9 -1.5 -1 -1.4 -.9 -1.3 -.9 -1.4 -1 -1.4 -.9 -1.4 -.9 -1.4 -1 -1.3 -.9 -1.4 -.9M30.6 -78.9l-1.4 -.9"/><path stroke="#00ff35" d="M-19.2 57.3l0 1.5 0 1.5 0 1.5 -.1 1.4 0 1.5 0 1.4M-40.5 44.2l-.1 1.5 -.2 1.5 -.1 1.5 -.1 1.5 -.1 1.5 0 1.5 -.1 1.4 -.1 1.5M-2 59.8l.1 1.4 .1 1.4 .2 1.4 .1 1.4 .1 1.4 .2 1.4 .1 1.4M17.8 57.1l.2 1.4 .3 1.4 .3 1.4 .2 1.3 .3 1.4 .2 1.4 .3 1.3M-48.6 -48.4l-.5 1.4 -.5 1.4 -.6 1.4 -.5 1.4 -.6 1.4 -.6 1.5 -.6 1.4 -.6 1.4 -.6 1.5 -.6 1.4 -.7 1.4 -.6 1.5 -.7 1.4 -.7 1.5 -.7 1.4 -.7 1.5 -.7 1.5 -.7 1.4 -.7 1.5 -.7 1.4 -.7 1.5 -.8 1.5 -.7 1.4 -.7 1.5 -.8 1.5 -.7 1.5 -.7 1.4 -.8 1.5 -.7 1.5 -.7 1.5 -.8 1.4M-61.8 -30.4l1.2 .1 1.3 .1 1.3 .2 1.3 .2 1.2 .3 1.3 .3 1.2 .4 1.2 .3 1.2 .5M-64.8 -22l1.3 -.3 1.3 -.2 1.4 -.1 1.3 -.1 1.3 -.1 1.3 0 1.3 0 1.4 0M54.7 23.3l.8 1.3 .8 1.2 .8 1.3 .7 1.2 .8 1.3 .7 1.3 .7 1.3 .6 1.3M-64.5 -14.5l1.3 -.5 1.3 -.6 1.4 -.5 1.3 -.4 1.4 -.5 1.3 -.3 1.4 -.4M-67.3 9.2l1 -1.1 1.1 -1.1 1 -1.1 1.1 -1 1.1 -1 1.1 -1 1.1 -1 1.2 -.9M-64.5 17.9l.9 -1.2 .9 -1.1 .9 -1.2 1 -1.1 1 -1.1 1 -1.1 1 -1 1 -1M52.2 -29.7l1.3 -.3 1.3 -.3 1.2 -.3 1.3 -.2 1.3 -.2 1.3 -.1 1.3 -.1 1.3 -.1M-30.5 59.9l.3 -1.4 .2 -1.4 .3 -1.5 .3 -1.4 .3 -1.5 .3 -1.4M61.2 -33.2l-.8 -1.4M57.7 37.6l-.3 -1.5 -.3 -1.6 -.3 -1.5 -.3 -1.5 -.4 -1.6 -.3 -1.5 -.3 -1.5 -.4 -1.6 -.3 -1.5 -.4 -1.6 -.4 -1.5M46.3 -37l.1 -1.3 .1 -1.4 .2 -1.3 .2 -1.3 .2 -1.3 .2 -1.3 .3 -1.3 .3 -1.3 .3 -1.2 .3 -1.2M67.6 7.7l-.6 -1.6 -.6 -1.5 -.6 -1.5 -.6 -1.5 -.6 -1.5 -.6 -1.5 -.6 -1.5 -.6 -1.5 -.6 -1.5 -.6 -1.5 -.6 -1.5 -.6 -1.6 -.6 -1.5 -.6 -1.5 -.5 -1.5 -.6 -1.5 -.6 -1.5 -.6 -1.5 -.5 -1.4 -.6 -1.5 -.5 -1.5 -.5 -1.5 -.5 -1.5 -.5 -1.5 -.5 -1.4 -.5 -1.5 -.4 -1.5 -.5 -1.4 -.4 -1.5 -.4 -1.4 -.4 -1.5 -.4 -1.4 -.4 -1.4 -.3 -1.4 -.4 -1.4 -.3 -1.4 -.3 -1.4 -.2 -1.4 -.3 -1.4M67.9 -4.4l-.8 -1.4 -.7 -1.5 -.8 -1.5 -.7 -1.5 -.7 -1.5 -.8 -1.4 -.7 -1.5 -.8 -1.5 -.7 -1.4 -.7 -1.5 -.7 -1.5 -.8 -1.4 -.7 -1.5 -.7 -1.5 -.7 -1.4 -.7 -1.5 -.6 -1.5 -.7 -1.4 -.7 -1.5 -.6 -1.4 -.7 -1.5 -.6 -1.4 -.6 -1.4 -.6 -1.5 -.6 -1.4 -.5 -1.4 -.6 -1.5 -.5 -1.4 -.5 -1.4 -.5 -1.4 -.5 -1.4"/><path stroke="#00ffa3" d="M-19.3 66.1l.1 1.5 0 1.4 0 1.4 .1 1.4 0 1.4 .1 1.4M-45.1 -61l-.6 1.3 -.7 1.3 -.7 1.4 -.7 1.3 -.8 1.3 -.7 1.4 -.8 1.3 -.7 1.4 -.8 1.3 -.8 1.4 -.8 1.3 -.8 1.4 -.9 1.3 -.8 1.4 -.9 1.4 -.8 1.3 -.9 1.4 -.9 1.4 -.8 1.4 -.9 1.3 -.9 1.4 -.9 1.4 -.9 1.4 -.9 1.4 -.9 1.4 -.9 1.3 -1 1.4 -.9 1.4 -.9 1.4 -.9 1.4 -.9 1.4 -.9 1.4 -.9 1.4 -.9 1.4 -.9 1.4 -.9 1.5 -.8 1.4M-41.3 56.1l0 1.5 0 1.4 -.1 1.5 0 1.5 .1 1.4 0 1.5M-1.1 69.6l.2 1.4 .1 1.4 .2 1.3 .2 1.3 .2 1.4M19.6 66.7l.2 1.3 .3 1.4 .2 1.3 .3 1.3 .3 1.3 .2 1.3M-44.7 -62l-.3 1.3 -.3 1.3 -.4 1.4 -.3 1.3 -.4 1.4 -.4 1.3 -.4 1.4 -.5 1.4 -.4 1.4 -.5 1.4M-69.7 -30.3l1.3 -.1 1.4 -.1 1.3 -.1 1.3 0 1.3 .1 1.3 .1M-74 -19.4l1.3 -.5 1.3 -.4 1.3 -.5 1.3 -.3 1.3 -.4 1.4 -.3 1.3 -.2M60.6 33.5l.7 1.3 .6 1.3 .6 1.4 .6 1.3 .6 1.3 .5 1.4 .6 1.3M-73.5 -9.4l1.3 -.8 1.2 -.8 1.3 -.8 1.3 -.7 1.2 -.7 1.3 -.6 1.4 -.7M-72.9 16.4l.9 -1.3 .9 -1.2 .9 -1.2 1 -1.2 .9 -1.1 1 -1.2M-70.2 26.6l.7 -1.3 .8 -1.2 .8 -1.3 .8 -1.2 .8 -1.3 .9 -1.2 .9 -1.2M62.5 -31.3l1.3 0 1.4 0 1.3 .1 1.3 .1 1.4 .1 1.3 .2M-31.8 68.3l.2 -1.3 .2 -1.4 .3 -1.4 .2 -1.4 .2 -1.4 .2 -1.5M60.4 -34.6l-.9 -1.4 -.9 -1.4 -.8 -1.4 -.9 -1.3 -.8 -1.4 -.9 -1.4 -.8 -1.3 -.8 -1.4 -.8 -1.4 -.8 -1.3 -.8 -1.4 -.8 -1.3 -.7 -1.4 -.8 -1.3 -.7 -1.4 -.7 -1.3 -.7 -1.3 -.7 -1.4 -.6 -1.3 -.7 -1.3M59.3 46.7l-.3 -1.5 -.2 -1.5 -.2 -1.5 -.3 -1.6 -.3 -1.5 -.3 -1.5M48.5 -49.9l.4 -1.2 .4 -1.2 .4 -1.2 .4 -1.1 .5 -1.1 .5 -1.1M72.6 21.3l-.5 -1.5 -.5 -1.5 -.6 -1.6 -.5 -1.5 -.6 -1.5 -.5 -1.5 -.6 -1.5 -.6 -1.5 -.6 -1.5M48.1 -49.8l-.2 -1.4 -.2 -1.3 -.2 -1.4 -.2 -1.3 -.1 -1.4 -.1 -1.3 -.1 -1.3M74.3 9l-.7 -1.5 -.7 -1.5 -.7 -1.5 -.7 -1.5 -.7 -1.4 -.7 -1.5 -.8 -1.5 -.7 -1.5 -.7 -1.5M70.9 -25.1l-1 -1.3 -1.1 -1.4 -1 -1.3 -1 -1.4 -1 -1.3 -1 -1.3 -1 -1.4 -1 -1.3 -1 -1.3 -1 -1.4 -1 -1.3 -1 -1.3 -1 -1.3 -1 -1.4 -.9 -1.3 -1 -1.3 -1 -1.3 -.9 -1.3 -.9 -1.3 -1 -1.3 -.9 -1.3 -.9 -1.4 -.9 -1.3 -.8 -1.3 -.9 -1.3 -.8 -1.2 -.9 -1.3 -.8 -1.3"/><path stroke="#38c700" d="M-18.9 45.2l-.1 1.6 0 1.5 0 1.5 0 1.5 -.1 1.6 0 1.5 0 1.5 -.1 1.4M-39.2 28.8l-.1 1.5 -.2 1.6 -.1 1.5 -.1 1.6 -.2 1.5 -.1 1.6 -.1 1.5 -.2 1.5 -.1 1.5 -.1 1.6M-3.2 48l.2 1.5 .1 1.5 .2 1.5 .1 1.5 .2 1.4 .1 1.5 .1 1.4 .2 1.5M15.2 45.8l.4 1.4 .3 1.4 .3 1.5 .4 1.4 .3 1.4 .3 1.4 .3 1.4 .3 1.4M-50.6 -28l1.2 .4 1.2 .5 1.2 .5 1.1 .6 1.2 .6 1.1 .6 1.1 .7 1.1 .7M-54.2 -22.8l1.3 .1 1.3 .1 1.3 .2 1.3 .2 1.3 .2 1.3 .3 1.2 .3 1.3 .4 1.3 .3M46.4 13.1l1 1 1 1.1 1 1.1 .9 1.1 1 1.2 .9 1.1 .8 1.2 .9 1.2 .8 1.2M-55.1 -17.7l1.4 -.3 1.4 -.3 1.4 -.2 1.3 -.2 1.4 -.1 1.4 -.1 1.4 -.1 1.4 0 1.4 0 1.4 .1M-58.6 1l1.2 -.9 1.1 -.9 1.3 -.8 1.2 -.9 1.2 -.7 1.3 -.8 1.3 -.7 1.3 -.7 1.3 -.6M-56.8 9.1l1.1 -1 1.1 -1 1.1 -1 1.1 -.9 1.2 -.9 1.1 -.9 1.2 -.8 1.2 -.8 1.2 -.8 1.2 -.8M41.5 -25l1.2 -.7 1.1 -.6 1.2 -.6 1.2 -.5 1.1 -.6 1.3 -.4 1.2 -.5 1.2 -.4 1.2 -.4M-28.8 51.3l.3 -1.5 .3 -1.4 .3 -1.5 .4 -1.4 .4 -1.5 .3 -1.5 .5 -1.4 .4 -1.5M54 20.7l-.3 -1.6 -.4 -1.5 -.3 -1.6 -.4 -1.6 -.4 -1.5 -.3 -1.6 -.4 -1.5 -.3 -1.6 -.3 -1.6 -.4 -1.5 -.3 -1.6 -.3 -1.6 -.3 -1.5 -.4 -1.6 -.2 -1.5 -.3 -1.6 -.3 -1.5 -.3 -1.6 -.2 -1.5 -.3 -1.6 -.2 -1.5 -.2 -1.6 -.2 -1.5 -.2 -1.5 -.1 -1.5 -.2 -1.5 -.1 -1.5 -.1 -1.5 -.1 -1.5 -.1 -1.5 0 -1.4 -.1 -1.5 0 -1.4 0 -1.5 0 -1.4 .1 -1.4 .1 -1.4 .1 -1.4"/><path stroke="#a65900" d="M-40.8 -22.7l1.2 .6 1.2 .6 1.1 .7 1.2 .7 1.1 .7 1.1 .7 1.1 .8 1.1 .9 1.1 .8 1 .9 1 1 1 .9 1 1 1 1 .9 1M-6.7 27l.3 1.5 .3 1.5 .3 1.5 .3 1.5 .3 1.5 .3 1.5 .3 1.5 .2 1.6 .2 1.5 .2 1.5 .2 1.5 .2 1.5 .2 1.5 .2 1.4M9.1 27.4l.6 1.4 .6 1.4 .5 1.4 .5 1.4 .5 1.4 .5 1.4 .5 1.5 .4 1.4 .4 1.4 .5 1.4 .4 1.5 .3 1.4 .4 1.4M-41.4 -23.4l1.1 .7 1.1 .8 1 .8 1.1 .8 1 .9 1 .8 .9 1 1 .9 .9 1 1 1 .9 1 .9 1.1 .8 1.1 .9 1.1 .8 1.2M-42.6 -20.7l1.2 .5 1.3 .4 1.2 .5 1.2 .5 1.2 .6 1.2 .6 1.2 .7 1.1 .6 1.2 .7 1.1 .8 1.1 .8 1.1 .8 1.1 .8 1.1 .9 1.1 .9M29 .2l1.3 .7 1.3 .7 1.2 .7 1.2 .7 1.3 .8 1.2 .8 1.2 .8 1.1 .9 1.2 .9 1.1 .9 1.1 .9 1.1 1 1.1 1 1 1 1 1.1M-41.2 -18.9l1.4 .1 1.4 .1 1.3 .2 1.4 .2 1.4 .3 1.3 .3 1.4 .4 1.3 .4 1.4 .4 1.3 .4 1.3 .5 1.3 .6 1.3 .6 1.3 .6 1.2 .6M-16.3 -10.2l1.2 .8M9.9 26l.5 1.4 .5 1.5 .5 1.5 .4 1.5 .4 1.5 .5 1.5 .3 1.4 .4 1.5 .4 1.5 .3 1.5 .3 1.5 .4 1.5M-47.4 -6l1.3 -.6 1.3 -.6 1.4 -.5 1.3 -.5 1.4 -.4 1.3 -.5 1.4 -.3 1.4 -.4 1.4 -.3 1.4 -.2 1.4 -.3 1.5 -.1 1.4 -.2 1.4 -.1 1.4 -.1 1.5 0M-45.3 .2l1.3 -.7 1.3 -.7 1.2 -.6 1.3 -.6 1.3 -.6 1.3 -.6 1.4 -.5 1.3 -.5 1.4 -.4 1.3 -.4 1.4 -.4 1.4 -.3 1.4 -.3 1.4 -.3 1.4 -.2M26.7 -11.1l.9 -1.2 .9 -1.1 .9 -1 .9 -1.1 .9 -1 .9 -1 1 -1 1 -.9 1 -.9 1 -.8 1.1 -.9 1 -.8 1.1 -.7 1.1 -.8 1.1 -.7M-25.9 39.6l.4 -1.4 .5 -1.5 .5 -1.4 .5 -1.5 .5 -1.4 .6 -1.5 .5 -1.4 .6 -1.4 .6 -1.4 .7 -1.4 .6 -1.4 .7 -1.4 .7 -1.4 .7 -1.3"/><path stroke="#ff1500" d="M-24.7 -10.4l.9 1.1 .9 1.1 .9 1.1 .9 1.2 .8 1.2 .9 1.2 .8 1.2 .7 1.2 .8 1.3 .7 1.3 .7 1.3 .7 1.3 .7 1.3 .7 1.4 .6 1.3 .6 1.4 .6 1.4 .5 1.4 .6 1.5 .5 1.4 .5 1.4 .5 1.5 .4 1.5 .5 1.4 .4 1.5 .4 1.5 .4 1.5 .4 1.5M-27 -9.2l.8 1.1 .8 1.2 .7 1.2 .8 1.3 .7 1.2 .7 1.3 .6 1.3 .7 1.3 .6 1.3 .6 1.4 .6 1.3 .6 1.4 .6 1.4 .5 1.4 .5 1.4 .5 1.5 .4 1.4 .5 1.5 .4 1.4 .4 1.5 .4 1.5 .4 1.4 .4 1.5 .3 1.5 .3 1.5M-25.2 -10.6l1 .9 1 1 1 .9 1 1.1 .9 1 1 1.1 .9 1.1 .9 1.1 .9 1.1 .8 1.2 .9 1.2 .8 1.2 .8 1.2 .8 1.3 .7 1.3 .8 1.3 .7 1.3 .7 1.3 .6 1.3 .7 1.4 .6 1.3 .6 1.4 .6 1.4 .6 1.4 .5 1.4 .6 1.5 .5 1.4 .5 1.4 .4 1.5 .5 1.5 .4 1.4 .4 1.5M-26.7 4.9l1.2 -.9 1.2 -.7 1.2 -.8 1.3 -.7 1.3 -.7 1.3 -.7 1.3 -.6 1.3 -.6 1.3 -.6 1.3 -.5 1.4 -.5 1.3 -.4 1.4 -.4 1.4 -.4 1.4 -.4 1.4 -.3 1.4 -.2 1.4 -.3 1.4 -.2 1.4 -.1 1.4 -.1 1.5 -.1 1.4 -.1 1.4 0 1.4 .1 1.4 0 1.5 .1 1.4 .2 1.4 .2 1.4 .2 1.4 .2 1.4 .3 1.4 .4 1.4 .4 1.3 .4 1.4 .4 1.3 .5 1.4 .5 1.3 .5 1.3 .6 1.3 .6M-21.2 -13.2l1.3 .7 1.2 .8 1.2 .7 1.2 .8M-15.1 -9.4l1.1 .9 1.2 .9 1.1 .9 1.1 1 1.1 1 1.1 1 1 1.1 1 1 1 1.1 1 1.2 1 1.1 .9 1.2 .9 1.2 .9 1.2 .9 1.3 .8 1.3 .9 1.3 .8 1.3 .7 1.3 .8 1.3 .7 1.4 .7 1.4 .7 1.4 .6 1.4 .7 1.4 .6 1.4 .6 1.5 .5 1.4 .6 1.5M-25.2 -6.9l1.4 -.2 1.4 -.1 1.4 -.1 1.4 -.1 1.4 0 1.4 0 1.5 0 1.4 .1 1.4 .1 1.4 .2 1.4 .2 1.4 .2 1.4 .3 1.4 .3 1.4 .4 1.4 .4 1.3 .4 1.4 .5 1.4 .5 1.3 .5 1.3 .6 1.3 .6 1.3 .6 1.3 .7 1.3 .7 1.2 .8 1.3 .7 1.2 .9 1.2 .8 1.2 .9 1.2 .8 1.1 1 1.1 .9 1.1 1 1.1 1 1.1 1 1 1.1 1.1 1.1 1 1.1M12.2 24.7l.3 -1.5 .3 -1.5 .4 -1.5 .3 -1.5 .4 -1.5 .4 -1.5 .4 -1.5 .5 -1.5 .4 -1.4 .5 -1.5 .5 -1.4 .5 -1.4 .6 -1.5 .6 -1.3 .5 -1.4 .7 -1.4 .6 -1.3 .6 -1.4 .7 -1.3 .7 -1.3 .7 -1.2 .8 -1.3 .7 -1.2 .8 -1.2 .8 -1.2 .8 -1.1"/><path stroke="#0080ff" d="M87.9 4.2l-.9 -1.5 -.9 -1.4 -.9 -1.4 -.9 -1.5 -.9 -1.4M32.9 -77.7l-.5 -1.3 -.4 -1.2 -.5 -1.3 -.4 -1.2M-1.6 87.5l.4 -1.2 .3 -1.3 .3 -1.2M20.3 85.9l.4 -1.3 .3 -1.3 .3 -1.3M80 36.5l-.4 -1.5 -.3 -1.6 -.4 -1.6M45.5 -72l.1 -1.2 .1 -1.2 .1 -1.2M85 -24.2l-1.1 -1.3 -1.2 -1.2 -1.2 -1.3 -1.1 -1.2 -1.2 -1.2 -1.2 -1.2 -1.2 -1.3M75.6 -34.1l-1.3 -1.2M67.4 -57.1l-1.5 -1 -1.5 -.9 -1.4 -.9 -1.5 -.9 -1.4 -.9 -1.5 -.9 -1.5 -.9 -1.4 -.9 -1.5 -.9 -1.4 -.9 -1.5 -.9 -1.5 -.9 -1.4 -.9M38.3 -75.1l-1.4 -.9M32.6 -78.6l-1.4 -.9 -1.4 -.9 -1.4 -.9 -1.3 -.9 -1.4 -.8 -1.3 -.9 -1.4 -.9M-4.5 -88.3l-1.8 .2 -1.7 .2 -1.7 .2 -1.7 .3 -1.7 .2 -1.8 .2 -1.7 .2M-13 -87.5l-1.5 .7 -1.6 .6 -1.5 .7 -1.5 .7 -1.6 .6 -1.5 .7 -1.6 .6 -1.6 .7 -1.5 .7 -1.6 .6 -1.6 .7 -1.6 .7 -1.6 .6 -1.6 .7 -1.5 .6 -1.6 .7 -1.6 .7 -1.6 .6 -1.6 .7 -1.6 .6 -1.6 .7 -1.6 .7 -1.6 .7 -1.6 .6 -1.6 .7M-81 23.5l-.5 1.6 -.5 1.5 -.5 1.5 -.5 1.6M-5.6 83.6l.3 1.3 .4 1.2 .3 1.3M7.6 84.3l.3 1.2 .4 1.2 .3 1.2M19.4 78.1l.2 1.3M19.8 80.7l.2 1.3 .3 1.3 .2 1.2 .2 1.3M-49.7 -72.3l.3 1.1 .4 1.1 .3 1.2 .3 1.1 .3 1.2M-72.4 39.8l-.3 1.6 -.3 1.5M-73.3 44.5l-.2 1.5 -.2 1.6M-70.5 -53.2l1.2 .3 1.2 .3 1.2 .4 1.2 .4M-58.5 -66.1l.8 .8 .8 .8 .8 .9 .8 .9M41.3 73.5l.2 1.3 .3 1.3 .2 1.3M48.9 67l.3 1.3 .3 1.3 .3 1.3 .3 1.3M81.9 16.3l.8 1.4 .8 1.3 .8 1.4 .8 1.3M-87.1 11.6l.9 -1.1 .9 -1.2 1 -1.2M73.5 -43.7l1.3 0 1.3 0M-52.1 70.2l.3 -1.3 .3 -1.3 .3 -1.3 .3 -1.3 .3 -1.3M42.6 -72.1l-.1 -1.2 0 -1.2 0 -1.3 0 -1.2"/><path stroke="#00eeff" d="M83.4 -3l-1 -1.4 -.9 -1.4 -1 -1.4 -.9 -1.3 -1 -1.4 -1 -1.4 -1 -1.4 -1 -1.3 -1 -1.4M39.3 -64.8l-.8 -1.3 -.7 -1.3 -.7 -1.3 -.6 -1.3 -.7 -1.3 -.6 -1.3 -.6 -1.3 -.6 -1.2 -.5 -1.3 -.6 -1.3M-.6 83.8l.2 -1.3 .3 -1.3 .3 -1.3 .2 -1.3 .2 -1.3 .2 -1.3M21.3 82l.3 -1.3 .3 -1.3 .2 -1.3 .2 -1.4 .2 -1.3 .2 -1.4 .2 -1.4M78.9 31.8l-.5 -1.5 -.4 -1.5 -.5 -1.6 -.5 -1.5 -.5 -1.5 -.5 -1.6 -.5 -1.5 -.5 -1.5 -.6 -1.5 -.6 -1.5M45.8 -61.9l-.2 -1.3 -.1 -1.3 0 -1.3 -.1 -1.2 0 -1.3 0 -1.2 0 -1.3 .1 -1.2M76.8 -32.9l-1.2 -1.2M74.3 -35.3l-1.2 -1.2 -1.2 -1.2 -1.2 -1.2 -1.2 -1.2 -1.3 -1.2 -1.2 -1.2 -1.2 -1.1 -1.3 -1.2 -1.2 -1.2 -1.2 -1.2 -1.3 -1.1 -1.2 -1.2 -1.2 -1.2 -1.2 -1.2 -1.2 -1.1 -1.3 -1.2 -1.2 -1.1M48.4 -68.9l-1.5 -.9 -1.4 -.9 -1.5 -.9 -1.4 -.9 -1.5 -.9 -1.4 -.8 -1.4 -.9M36.9 -76l-1.5 -.9 -1.4 -.9 -1.4 -.8M-75.6 9.9l-.6 1.5 -.7 1.5 -.6 1.5 -.6 1.5 -.7 1.5 -.5 1.5 -.6 1.6 -.6 1.5 -.5 1.5M-7.1 75.9l.2 1.3 .2 1.3 .3 1.3 .2 1.3 .3 1.3 .3 1.2M5.9 76.7l.3 1.3 .2 1.3 .3 1.3 .3 1.2 .3 1.3 .3 1.2M18.7 72.7l.2 1.4 .2 1.3 .1 1.4 .2 1.3M19.6 79.4l.2 1.3M-48.1 -66.6l.2 1.2 .2 1.2 .2 1.2 .1 1.2 .1 1.3 .1 1.2 .1 1.3M-69.8 29.1l-.4 1.5 -.5 1.6 -.4 1.5 -.3 1.5 -.4 1.6 -.3 1.5 -.3 1.5M-73 42.9l-.3 1.6M-65.7 -51.8l1.1 .5 1.1 .5 1.1 .5 1.1 .5 1 .6 1.1 .6 1 .7M-55.3 -62.7l.7 .9 .7 .9 .7 1 .6 1 .7 1 .6 1.1 .5 1M39.9 65.4l.2 1.4 .3 1.3 .2 1.4 .2 1.3 .3 1.4 .2 1.3M47 59l.3 1.4 .3 1.3 .3 1.4 .4 1.3 .3 1.3 .3 1.3M75.5 7.6l1 1.2 .9 1.2 1 1.2 .9 1.3 .9 1.3 .9 1.2 .8 1.3M-84.3 8.1l.9 -1.1 1 -1.1 1 -1 1.1 -1.1 1 -1 1.1 -1 1.1 -1 1.1 -.9M63.5 -42.2l1.2 -.3 1.2 -.3 1.2 -.2 1.3 -.3 1.2 -.1 1.3 -.2 1.3 -.1 1.3 0M-50.6 63.7l.3 -1.3 .4 -1.4 .3 -1.3 .4 -1.4 .3 -1.3M43.8 -63l-.3 -1.3 -.2 -1.3 -.2 -1.3 -.2 -1.3 -.1 -1.3 -.1 -1.3 -.1 -1.3"/><path stroke="#00ff35" d="M56.1 -39.7l-1 -1.3M1.8 67.9l.1 -1.4 .2 -1.4 .1 -1.4 .1 -1.5 .2 -1.4 .1 -1.4 .1 -1.5M23.6 64.3l0 -1.5 .1 -1.4 0 -1.4 .1 -1.5 0 -1.4 .1 -1.5 0 -1.5 0 -1.4M68.3 3l-.7 -1.5 -.6 -1.5 -.7 -1.5 -.6 -1.5 -.7 -1.5 -.7 -1.5 -.6 -1.5 -.7 -1.5 -.6 -1.5 -.7 -1.5 -.6 -1.5 -.7 -1.4 -.6 -1.5 -.7 -1.5 -.6 -1.5 -.6 -1.5 -.6 -1.5 -.7 -1.5 -.6 -1.4 -.5 -1.5 -.6 -1.5 -.6 -1.4 -.5 -1.5 -.6 -1.5 -.5 -1.4 -.5 -1.5 -.5 -1.4 -.5 -1.5 -.5 -1.4 -.5 -1.4 -.4 -1.5 -.4 -1.4 -.4 -1.4 -.4 -1.4 -.4 -1.4 -.3 -1.4 -.3 -1.4M-8.9 59.3l.1 1.4 .1 1.4 .2 1.5 .1 1.4 .1 1.4 .2 1.3 .1 1.4M3.6 60.4l.2 1.4 .1 1.4 .2 1.4 .2 1.4 .2 1.4 .2 1.3 .2 1.4M16.7 55.7l.2 1.5 .2 1.4 .2 1.5 .1 1.4 .2 1.4 .2 1.5M-47.4 -47.3l-.1 1.3 -.2 1.4 -.2 1.4 -.2 1.5 -.2 1.4 -.3 1.4 -.2 1.4 -.3 1.5 -.3 1.4 -.4 1.5 -.3 1.5 -.4 1.4 -.3 1.5M-59 -3l-.5 1.6 -.6 1.5 -.5 1.5 -.5 1.5 -.6 1.6 -.5 1.5 -.6 1.5 -.5 1.6 -.6 1.5 -.5 1.5 -.5 1.5 -.6 1.6 -.5 1.5M-51.7 -42.4l.8 .9 .8 .9 .8 .9 .8 1 .8 1 .7 1.1 .7 1M-47.9 -48.9l.4 1.2 .3 1.2 .3 1.2 .3 1.3 .3 1.3 .3 1.3 .2 1.3 .2 1.4 .2 1.3 .1 1.4M36 46.9l.3 1.5 .4 1.4 .4 1.5 .3 1.4 .3 1.4 .3 1.5 .3 1.4M41.5 41.1l.5 1.4 .5 1.3 .5 1.4 .5 1.4 .4 1.4 .4 1.4 .5 1.4M59.7 -6l1.2 .8 1.3 .8 1.2 .8 1.2 .9 1.2 .9 1.1 .9 1.2 1 1.1 1M-67.9 -6l1.2 -.7 1.3 -.6 1.2 -.7 1.3 -.6 1.2 -.6 1.3 -.5 1.3 -.5 1.3 -.5M25.8 64.1l0 -1.5 .1 -1.4 0 -1.4 0 -1.5 0 -1.5 0 -1.4 0 -1.5 0 -1.5M48.3 -34l.9 -.8 1 -.7 1 -.8 1.1 -.7 1 -.7 1.1 -.6 1 -.6 1.1 -.6 1.2 -.5M-46.5 48.8l.5 -1.4 .4 -1.4 .5 -1.3 .5 -1.4 .5 -1.4 .5 -1.4 .6 -1.3"/><path stroke="#00ffa3" d="M74.6 -15.4l-1.1 -1.4 -1 -1.3 -1 -1.4 -1 -1.3 -1.1 -1.4 -1 -1.3 -1 -1.4 -1.1 -1.3 -1 -1.4 -1 -1.3 -1.1 -1.4 -1 -1.3 -1 -1.4 -1 -1.3 -1.1 -1.3 -1 -1.4 -1 -1.3 -1 -1.4M55.1 -41l-1 -1.3 -.9 -1.4 -1 -1.3 -1 -1.4 -.9 -1.3 -.9 -1.3 -1 -1.3 -.9 -1.4 -.9 -1.3 -.8 -1.3 -.9 -1.3 -.9 -1.4 -.8 -1.3 -.8 -1.3 -.8 -1.3 -.8 -1.3 -.8 -1.3 -.7 -1.3M.8 76l.2 -1.3 .2 -1.4 .1 -1.3 .2 -1.4 .1 -1.4 .2 -1.3M22.9 72.6l.1 -1.3 .2 -1.4 .1 -1.4 .1 -1.4 .1 -1.4 .1 -1.4M73.8 16.6l-.5 -1.6 -.6 -1.5 -.6 -1.5 -.7 -1.5 -.6 -1.5 -.6 -1.5 -.6 -1.5 -.7 -1.5 -.6 -1.5M47.6 -51.2l-.3 -1.3 -.3 -1.4 -.3 -1.4 -.2 -1.3 -.2 -1.3 -.2 -1.4 -.2 -1.3 -.1 -1.3M-69.3 -3.5l-.7 1.5 -.7 1.5 -.7 1.5 -.7 1.5 -.7 1.4 -.7 1.5 -.7 1.5 -.7 1.5 -.7 1.5M-8 69.1l.2 1.4 .1 1.4 .2 1.3 .2 1.4 .2 1.3M4.9 70.1l.2 1.3 .2 1.4 .2 1.3 .2 1.3 .2 1.3M17.8 64.4l.1 1.4 .2 1.4 .2 1.4 .1 1.4 .2 1.4 .1 1.3M-47.1 -58l.1 1.3 0 1.3 0 1.3 0 1.3 -.1 1.4 -.1 1.3 -.1 1.4 -.1 1.4M-66 16.9l-.5 1.5 -.5 1.5 -.5 1.6 -.5 1.5 -.5 1.5 -.4 1.5 -.5 1.6 -.4 1.5M-58.2 -47.9l1 .7 .9 .7 1 .8 .9 .7 .9 .8 .9 .9 .9 .9M-50.8 -55.8l.6 1.1 .5 1.1 .5 1.1 .4 1.2 .5 1.2 .4 1.2M38.3 57l.3 1.4 .3 1.4 .2 1.4 .3 1.4 .3 1.4 .2 1.4M44.8 50.8l.4 1.3 .3 1.4 .4 1.4 .4 1.4 .3 1.3 .4 1.4M69.2 1.1l1.1 1 1.1 1.1 1 1.1 1.1 1.1 1 1.1 1 1.1M-76 -.1l1.1 -1 1.1 -.9 1.2 -.8 1.1 -.8 1.2 -.9 1.2 -.7 1.2 -.8M25.3 71.1l.2 -1.4 .1 -1.4 0 -1.4 .1 -1.4 .1 -1.4M57.7 -40l1.1 -.5 1.1 -.5 1.2 -.4 1.2 -.4 1.2 -.4M-48.9 57l.4 -1.4 .4 -1.3 .4 -1.4 .4 -1.4 .4 -1.3 .4 -1.4M47.4 -49.4l-.5 -1.4 -.4 -1.4 -.4 -1.4 -.4 -1.3 -.4 -1.4 -.3 -1.4 -.4 -1.3 -.3 -1.3 -.3 -1.4 -.2 -1.3"/><path stroke="#38c700" d="M2.7 57.9l.2 -1.4 .1 -1.5 .2 -1.4 .1 -1.5M23.9 52.7l0 -1.5 .1 -1.5 0 -1.5 0 -1.5 0 -1.5 .1 -1.5 0 -1.5 0 -1.5M-9.9 47.6l.1 1.5 .2 1.5 .1 1.4 .1 1.5 .1 1.5 .2 1.4 .1 1.5 .1 1.4M1.9 48.9l.3 1.5 .2 1.4 .2 1.5 .2 1.4 .2 1.5 .2 1.4 .2 1.4 .2 1.4M14.8 43.8l.2 1.5 .3 1.5 .3 1.5 .2 1.5 .3 1.5 .2 1.5 .2 1.4 .2 1.5M-50.8 -28.7l-.4 1.5 -.4 1.5 -.4 1.5 -.5 1.5 -.4 1.5 -.5 1.5 -.4 1.5 -.5 1.5 -.5 1.5 -.5 1.6 -.5 1.5 -.5 1.5 -.5 1.5 -.6 1.6 -.5 1.5 -.5 1.5 -.6 1.5M-46.3 -35.6l.7 1.1 .6 1.1 .7 1.2 .6 1.1 .5 1.2 .6 1.2 .5 1.2 .6 1.3 .5 1.2M-45.3 -36l.2 1.3 .1 1.4 .1 1.4 0 1.5 .1 1.4 0 1.4 0 1.5M32.3 35.5l.5 1.4 .5 1.4 .5 1.4 .5 1.5 .4 1.4 .5 1.5 .4 1.4 .4 1.4M36.1 28.9l.7 1.3 .6 1.4 .7 1.3 .6 1.3 .6 1.4 .6 1.4 .6 1.3 .5 1.4 .5 1.4M46.5 -11.8l1.4 .4 1.3 .5 1.4 .5 1.3 .5 1.3 .6 1.4 .6 1.3 .6 1.2 .7 1.3 .7 1.3 .7M-57.8 -10.7l1.3 -.4 1.3 -.4 1.3 -.4 1.4 -.3 1.3 -.3 1.3 -.3 1.4 -.2 1.3 -.1 1.4 -.2M25.9 52.4l0 -1.5 0 -1.5 0 -1.5 0 -1.5 0 -1.5 0 -1.5 0 -1.5 0 -1.5M41.3 -26.4l.8 -1.1 .8 -1 .9 -1 .8 -.9 .9 -1 .9 -.9 .9 -.8 1 -.9M-43 39.2l.5 -1.4 .6 -1.3 .6 -1.4 .6 -1.3 .7 -1.4 .6 -1.3 .7 -1.3 .7 -1.3 .8 -1.3"/><path stroke="#a65900" d="M24.1 40.7l.1 -1.6 0 -1.5 .1 -1.5 0 -1.6 .1 -1.5 .1 -1.5 0 -1.6 .1 -1.5 .1 -1.6 .2 -1.5 .1 -1.5 .1 -1.6 .2 -1.5 .1 -1.6M-13.2 25l.3 1.5 .3 1.5 .3 1.5 .3 1.6 .2 1.5 .3 1.5 .2 1.5 .2 1.5 .2 1.5 .2 1.5 .2 1.5 .1 1.5 .2 1.5 .1 1.5 .2 1.5M-2.1 29.8l.4 1.4 .4 1.5 .4 1.5 .3 1.5 .3 1.4 .4 1.5 .3 1.5 .3 1.5 .2 1.4 .3 1.5 .3 1.5 .2 1.5 .2 1.4M-41 -25l.4 1.3 .5 1.3 .4 1.4 .4 1.3 .4 1.4 .3 1.3 .4 1.4 .3 1.5 .3 1.4 .3 1.4 .2 1.5 .3 1.4 .2 1.5 .2 1.5 .1 1.5 .2 1.5 .1 1.5 .2 1.5 .1 1.6 .1 1.5 0 1.5 .1 1.6 0 1.5 .1 1.6 0 1.5 0 1.6M23.4 17.7l.9 1.3 .7 1.3 .8 1.3 .8 1.4 .7 1.3 .7 1.4 .7 1.4 .6 1.3 .7 1.4 .6 1.4 .6 1.4 .6 1.4 .5 1.5M25.1 13l1 1.1 .9 1.1 .9 1.2 1 1.2 .9 1.2 .8 1.2 .9 1.2 .8 1.3 .8 1.2 .8 1.3 .7 1.3 .8 1.3 .7 1.3M25.4 -13.1l1.4 -.2 1.4 -.2 1.4 -.1 1.5 0 1.4 -.1 1.4 0 1.4 .1 1.4 .1 1.4 .1 1.4 .2 1.4 .2 1.4 .2 1.4 .3 1.4 .4 1.4 .3M-45.8 -13.3l1.3 -.1 1.4 -.1 1.3 0 1.4 0 1.4 .1 1.3 .1 1.4 .1 1.3 .2 1.3 .2 1.4 .2 1.3 .3 1.3 .3 1.4 .4 1.3 .4 1.3 .4M25.9 40.4l0 -1.6 0 -1.5 .1 -1.5 0 -1.6 0 -1.5 0 -1.6 .1 -1.5 .1 -1.6 0 -1.5 .1 -1.6 .1 -1.5 .1 -1.6 .1 -1.5 .1 -1.6 .2 -1.5 .1 -1.6 .2 -1.5 .2 -1.6 .2 -1.5 .2 -1.5 .3 -1.5 .2 -1.5 .3 -1.5 .3 -1.5 .3 -1.5M29.5 .5l.4 -1.4 .3 -1.5 .4 -1.4 .4 -1.4 .5 -1.4 .4 -1.4 .5 -1.4 .5 -1.3 .5 -1.4 .5 -1.3 .6 -1.3 .6 -1.3 .6 -1.2 .6 -1.3 .7 -1.2 .6 -1.2 .7 -1.1 .7 -1.2 .8 -1.1 .7 -1.1 .8 -1M-37.2 27.2l.7 -1.3 .8 -1.3 .8 -1.2 .8 -1.3 .8 -1.2 .9 -1.2 .9 -1.2 .9 -1.2 .9 -1.2 1 -1.1 1 -1.1 .9 -1.1 1.1 -1.1 1 -1"/><path stroke="#ff1500" d="M-25.2 -11.1l1.4 0 1.4 .1 1.4 .1 1.5 .1 1.4 .2 1.4 .2 1.4 .3 1.4 .3 1.4 .3 1.4 .4 1.4 .4 1.4 .5 1.3 .5 1.4 .5 1.3 .6 1.4 .6 1.3 .6 1.3 .7 1.3 .7 1.2 .7 1.3 .8 1.2 .8 1.2 .9 1.2 .9 1.2 .9 1.2 .9 1.1 1 1.1 1 1.1 1 1.1 1 1.1 1.1 1 1.1 1 1.2 1 1.1 1 1.2 .9 1.2 .9 1.2 .9 1.2 .9 1.3 .8 1.2M-17.8 19.8l.8 -1.4 .8 -1.3 .8 -1.3 .8 -1.3 .9 -1.2 .8 -1.3 .9 -1.2 .9 -1.3 1 -1.1 1 -1.2 .9 -1.2 1.1 -1.1 1 -1.1 1.1 -1 1 -1.1 1.1 -1 1.1 -1 1.2 -.9M.5 -2.2l1.2 -.9 1.2 -.8 1.2 -.9 1.3 -.8 1.2 -.7 1.3 -.7 1.3 -.7 1.3 -.7 1.3 -.6 1.3 -.6 1.3 -.5 1.4 -.6 1.3 -.4 1.4 -.5 1.4 -.3 1.3 -.4 1.4 -.3 1.4 -.3 1.4 -.2M-25.7 -10.8l1.3 .4 1.3 .5 1.2 .6 1.3 .5 1.3 .7 1.2 .6 1.2 .7 1.2 .7 1.2 .7 1.2 .8M29.2 2l.3 -1.5M-24.7 10.7l1.1 -1.1 1 -1 1.1 -1 1.2 -.9 1.1 -.9 1.2 -.9"/><path stroke="#ff8200" d="M-.6 -1.2l1.1 -1"/></g>
<text x="-3" y="-16.4" text-anchor="end" font-size="11">20</text>
<text x="-3" y="-36.6" text-anchor="end" font-size="11">40</text>
<text x="-3" y="-56.9" text-anchor="end" font-size="11">60</text>
<text x="-3" y="-77.1" text-anchor="end" font-size="11">80</text>
<circle r="91.0" fill="none" stroke="#222" stroke-width="1.2"/>
</g>
<text x="581.0" y="350.4" text-anchor="middle" font-size="11">360</text>
<text x="624.4" y="363.3" font-size="11">30</text>
<text x="661.8" y="400.4" font-size="11">60</text>
<text x="675.6" y="450.7" font-size="11">90</text>
<text x="662.6" y="500.5" font-size="11">120</text>
<text x="624.0" y="537.8" font-size="11">150</text>
<text x="581.0" y="550.8" text-anchor="middle" font-size="11">180</text>
<text x="519.6" y="537.8" font-size="11">210</text>
<text x="481.6" y="500.7" font-size="11">240</text>
<text x="467.5" y="450.8" font-size="11">270</text>
<text x="481.6" y="400.9" font-size="11">300</text>
<text x="519.6" y="363.3" font-size="11">330</text>
<text x="581.0" y="328.7" text-anchor="middle" font-size="19.5" font-weight="bold">SNR2</text>
<defs><linearGradient id="g730" x1="0" y1="1" x2="0" y2="0"><stop offset="0" stop-color="#0000ff"/><stop offset="0.25" stop-color="#00ffff"/><stop offset="0.5" stop-color="#00ff00"/><stop offset="0.75" stop-color="#ff0000"/><stop offset="1" stop-color="#ffff00"/></linearGradient></defs>
<rect x="730" y="310" width="10" height="251" fill="url(#g730)"/>
<line x1="742.5" y1="313.8" x2="742.5" y2="556.4" stroke="#000" stroke-width="1.3"/>
<line x1="742.5" y1="556.4" x2="749.5" y2="556.4" stroke="#000" stroke-width="1.3"/>
<line x1="742.5" y1="542.9" x2="746.0" y2="542.9" stroke="#000" stroke-width="1.3"/>
<line x1="742.5" y1="529.5" x2="746.0" y2="529.5" stroke="#000" stroke-width="1.3"/>
<line x1="742.5" y1="516.0" x2="746.0" y2="516.0" stroke="#000" stroke-width="1.3"/>
<line x1="742.5" y1="502.5" x2="749.5" y2="502.5" stroke="#000" stroke-width="1.3"/>
<line x1="742.5" y1="489.0" x2="746.0" y2="489.0" stroke="#000" stroke-width="1.3"/>
<line x1="742.5" y1="475.5" x2="746.0" y2="475.5" stroke="#000" stroke-width="1.3"/>
<line x1="742.5" y1="462.1" x2="746.0" y2="462.1" stroke="#000" stroke-width="1.3"/>
<line x1="742.5" y1="448.6" x2="749.5" y2="448.6" stroke="#000" stroke-width="1.3"/>
<line x1="742.5" y1="435.1" x2="746.0" y2="435.1" stroke="#000" stroke-width="1.3"/>
<line x1="742.5" y1="421.6" x2="746.0" y2="421.6" stroke="#000" stroke-width="1.3"/>
<line x1="742.5" y1="408.1" x2="746.0" y2="408.1" stroke="#000" stroke-width="1.3"/>
<line x1="742.5" y1="394.7" x2="749.5" y2="394.7" stroke="#000" stroke-width="1.3"/>
<line x1="742.5" y1="381.2" x2="746.0" y2="381.2" stroke="#000" stroke-width="1.3"/>
<line x1="742.5" y1="367.7" x2="746.0" y2="367.7" stroke="#000" stroke-width="1.3"/>
<line x1="742.5" y1="354.2" x2="746.0" y2="354.2" stroke="#000" stroke-width="1.3"/>
<line x1="742.5" y1="340.7" x2="749.5" y2="340.7" stroke="#000" stroke-width="1.3"/>
<line x1="742.5" y1="327.3" x2="746.0" y2="327.3" stroke="#000" stroke-width="1.3"/>
<line x1="742.5" y1="313.8" x2="749.5" y2="313.8" stroke="#000" stroke-width="1.3"/>
<text x="755" y="560.2" font-size="11">0</text>
<text x="755" y="506.3" font-size="11">2</text>
<text x="755" y="452.4" font-size="11">4</text>
<text x="755" y="398.5" font-size="11">6</text>
<text x="755" y="344.5" font-size="11">8</text>
</g></svg>
<div class="a" style="left:56px;top:542px;width:648px;height:354px;background:#6A6A88;border-radius:6px 6px 0 0"></div>
<div class="a" style="left:57px;top:543px;width:646px;height:352px;background:#FFFFFF;border-radius:5px 5px 0 0"></div>
<div class="a" style="left:58px;top:544px;width:644px;height:350px;background:#A4A4BE;border-radius:4px 4px 0 0"></div>
<div class="a" style="left:57px;top:543px;width:646px;height:28px;background:linear-gradient(#FFFFFF 0px,#D0D0DE 2px,#B4B4CA 5px,#BEBED0 10px,#D6D6E2 16px,#F2F2F6 22px,#FFFFFF 25px,#E4E4EA 27px,#A0A0B8 28px);border-radius:5px 5px 0 0"></div>
<div class="a" style="left:59px;top:571px;width:642px;height:322px;background:#6A6A88"></div>
<div class="a" style="left:60px;top:572px;width:640px;height:320px;background:#E0DFE3"></div>
<svg class="a" style="left:58px;top:546px" width="24" height="24" viewBox="0 0 24 24"><g transform="translate(12 12) rotate(45)"><rect x="-8.2" y="-3.1" width="5.4" height="6.2" fill="#1A8AD6"/><rect x="2.9" y="-3.1" width="5.4" height="6.2" fill="#1A8AD6"/><rect x="-1.7" y="-3.9" width="3.4" height="7.8" rx="0.8" fill="#F5904E"/><line x1="-8" y1="0" x2="-3" y2="0" stroke="#7FC0EC" stroke-width="0.6" stroke-dasharray="1 1"/><line x1="3" y1="0" x2="8" y2="0" stroke="#7FC0EC" stroke-width="0.6" stroke-dasharray="1 1"/><line x1="0.6" y1="-4" x2="0.6" y2="-8.6" stroke="#F5904E" stroke-width="0.9" stroke-dasharray="1.2 0.6"/></g></svg>
<div class="t" style="left:82px;top:551px;font-size:13px;line-height:15px;font-weight:bold;letter-spacing:0.45px;color:#000;text-shadow:1px 1px 1px rgba(120,120,150,0.5);">Z:/brux2370.12o</div>
<div class="tbtn" style="left:654px;top:548px;width:21px;height:21px"><div class="t" style="left:0;top:2px;width:19px;text-align:center;font-size:15px;line-height:15px;font-weight:bold;color:#3C3C5C;text-shadow:1px 1px 0 #fff">?</div></div>
<div class="xbtn" style="left:677px;top:548px;width:21px;height:21px"><svg class="a" style="left:2px;top:2px" width="15" height="15"><path d="M3.5 3.5L11.5 11.5M11.5 3.5L3.5 11.5" stroke="#fff" stroke-width="2.2"/></svg></div>
<svg class="a" style="left:0;top:0" width="828" height="948" font-family='"Liberation Sans",sans-serif'><g>
<g transform="translate(212 729)">
<circle r="91.0" fill="#fff"/>
<circle r="20.22" fill="none" stroke="#000" stroke-width="1"/>
<circle r="40.44" fill="none" stroke="#000" stroke-width="1"/>
<circle r="60.67" fill="none" stroke="#000" stroke-width="1"/>
<circle r="80.89" fill="none" stroke="#000" stroke-width="1"/>
<line x1="0" y1="0" x2="45.50" y2="-78.81" stroke="#000" stroke-width="1"/>
<line x1="0" y1="0" x2="78.81" y2="-45.50" stroke="#000" stroke-width="1"/>
<line x1="0" y1="0" x2="78.81" y2="45.50" stroke="#000" stroke-width="1"/>
<line x1="0" y1="0" x2="45.50" y2="78.81" stroke="#000" stroke-width="1"/>
<line x1="0" y1="0" x2="-45.50" y2="78.81" stroke="#000" stroke-width="1"/>
<line x1="0" y1="0" x2="-78.81" y2="45.50" stroke="#000" stroke-width="1"/>
<line x1="0" y1="0" x2="-78.81" y2="-45.50" stroke="#000" stroke-width="1"/>
<line x1="0" y1="0" x2="-45.50" y2="-78.81" stroke="#000" stroke-width="1"/>
<line x1="-91.0" y1="0" x2="91.0" y2="0" stroke="#7A7A7A" stroke-width="2"/>
<line x1="0" y1="-91.0" x2="0" y2="91.0" stroke="#7A7A7A" stroke-width="2"/>
<rect x="-19" y="-26.7" width="17" height="13" fill="#fff"/>
<rect x="-19" y="-46.9" width="17" height="13" fill="#fff"/>
<rect x="-19" y="-67.2" width="17" height="13" fill="#fff"/>
<rect x="-19" y="-87.4" width="17" height="13" fill="#fff"/>
<g fill="none" stroke-width="4.5" stroke-linecap="round" stroke-linejoin="round"><path stroke="#001aff" d="M-39.1 3.8l1.2 -.8 1.2 -.8M-35.5 1.4l1.3 -.7M-31.6 -.6l1.3 -.6 1.3 -.6M-27.7 -2.4l1.3 -.5 1.4 -.5M-22.3 -4.2l1.4 -.4 1.4 -.3 1.4 -.3 1.4 -.3 1.4 -.2 1.4 -.2 1.5 -.1 1.4 -.1 1.4 -.1 1.4 0 1.5 0M6.2 31.7l.3 -1.5M8.3 22.7l.4 -1.5M9.6 18.3l.5 -1.5 .5 -1.4 .5 -1.4M11.6 12.5l.6 -1.4 .6 -1.4 .6 -1.4 .6 -1.3 .6 -1.4 .7 -1.3M16 2.9l.7 -1.3 .7 -1.3 .8 -1.2 .7 -1.3 .8 -1.2 .8 -1.2 .9 -1.2M24.9 -10.2l1 -1.1 .9 -1M33 -17.8l1 -.8M27.2 7.6l.3 -1.5M28.2 3.2l.3 -1.5M29.7 -2.6l.5 -1.4M35.5 -2.9l.2 -1.5M-35.5 18.7l-.1 1.6M-45.5 -14.7l-.1 1.5M-30.9 -5l.5 1.4M-29.6 -.8l.4 1.4M-28.1 5l.3 1.5 .3 1.5M-27.2 9.5l.2 1.5M-26.3 15.5l.2 1.6 .2 1.5M-13.7 -4.9l1.1 .8 1.2 .8M-7 .3l1.1 1 1.1 1 1 1M-2.8 4.3l1 1.1 1 1.1 .9 1.1 1 1.2 .9 1.1M3.7 12.3l.9 1.3 .8 1.2M8.5 19.9l.7 1.3M9.9 22.6l.7 1.3 .7 1.4M11.9 26.6l.6 1.4 .6 1.4M-18.5 5.2l1.2 -.9 1.2 -.9 1.2 -.8 1.2 -.8 1.2 -.7 1.3 -.7 1.3 -.7 1.3 -.7 1.3 -.6 1.3 -.6 1.3 -.6 1.4 -.5 1.3 -.5 1.4 -.5 1.3 -.4 1.4 -.4 1.4 -.3 1.4 -.3 1.4 -.3 1.4 -.2 1.4 -.2 1.4 -.1 1.5 -.2 1.4 0 1.4 -.1 1.4 0 1.4 .1 1.4 .1 1.5 .1M21.9 -6.4l1.4 .2 1.4 .3 1.4 .2 1.3 .3 1.4 .4 1.4 .3 1.4 .5 1.3 .4M34.2 -3.3l1.4 .5M38.2 -1.6l1.3 .6M-39.3 -23.9l.9 1M-37.5 -21.9l.8 1M-34.2 -17.7l.8 1.2 .8 1.1M-31.9 -14.2l.7 1.2 .7 1.2 .7 1.3M-23.4 -10.9l1.2 .7M-19.8 -8.7l1.1 .8 1.2 .8M-14.2 -4.4l1 1 1.1 1 1 1 1 1 1 1.1 1 1.1 .9 1.1 1 1.1M-5.3 5.2l.9 1.2 .8 1.2 .9 1.2M-1.9 10.1l.8 1.2M1.2 15.2l.7 1.4 .7 1.3M4.5 22l.6 1.4"/><path stroke="#0033ff" d="M-57.4 22.7l.8 -1.2M-54.9 19.1l.9 -1.2M-51.1 14.5l1 -1.1 1 -1.1 1 -1 1.1 -1.1 1 -1 1.1 -.9 1.1 -1 1.2 -.9 1.1 -.9 1.2 -.9M-36.7 2.2l1.2 -.8M-34.2 .7l1.3 -.7 1.3 -.6M-29 -1.8l1.3 -.6M-25 -3.4l1.4 -.4 1.3 -.4M-6.7 -6.2l1.4 0M3.2 52.6l.1 -1.4 .2 -1.5M3.7 48.2l.1 -1.5 .2 -1.5 .2 -1.5 .2 -1.5 .2 -1.5 .3 -1.5 .2 -1.5 .3 -1.5 .2 -1.5 .3 -1.5 .3 -1.5M6.5 30.2l.3 -1.5 .4 -1.5 .3 -1.5 .4 -1.5 .4 -1.5M8.7 21.2l.5 -1.4 .4 -1.5M11.1 14l.5 -1.5M15.3 4.3l.7 -1.4M21.4 -5.8l.8 -1.1 .9 -1.1 .9 -1.1 .9 -1.1M26.8 -12.3l1 -1 1 -.9 1 -1 1 -.9 1.1 -.8 1.1 -.9M34 -18.6l1.1 -.7 1.2 -.8 1.1 -.7M38.5 -21.5l1.2 -.6 1.2 -.6 1.2 -.6 1.2 -.5 1.2 -.5 1.2 -.4 1.3 -.4 1.2 -.4M49.5 -25.9l1.3 -.3M53.3 -26.6l1.3 -.2M25.3 19.7l.2 -1.5 .2 -1.5 .2 -1.6 .2 -1.5 .3 -1.5 .2 -1.5 .3 -1.5 .3 -1.5M27.5 6.1l.3 -1.5 .4 -1.4M28.5 1.7l.4 -1.4 .4 -1.5 .4 -1.4M30.2 -4l.4 -1.4 .5 -1.4 .5 -1.3 .5 -1.4 .6 -1.3 .6 -1.3 .5 -1.3 .7 -1.2 .6 -1.3 .6 -1.2 .7 -1.2 .7 -1.1 .7 -1.2 .8 -1.1 .7 -1.1 .8 -1.1 .8 -1 .8 -1 .9 -1M45.2 -29.7l1 -.9 .9 -.9 1 -.8 1 -.8M-29.4 50.7l.3 -1.4M-28.7 47.9l.4 -1.4 .4 -1.5 .4 -1.4M-26.6 40.8l.5 -1.4 .5 -1.5 .5 -1.4 .5 -1.4M35.3 37.4l-.1 -1.6 -.1 -1.5 -.1 -1.6M34.9 31.2l-.1 -1.6 0 -1.5 -.1 -1.6 -.1 -1.6 0 -1.5 -.1 -1.6 0 -1.6 0 -1.5 0 -1.6 0 -1.6 0 -1.5 0 -1.6 0 -1.5 .1 -1.6 .1 -1.5 0 -1.6 .1 -1.5 .1 -1.6 .2 -1.5 .1 -1.5 .2 -1.5 .1 -1.5M35.7 -4.4l.2 -1.5 .3 -1.5 .2 -1.4 .3 -1.5 .3 -1.4 .3 -1.4 .3 -1.4 .4 -1.4 .4 -1.4 .4 -1.3M39.2 -20l.4 -1.3 .5 -1.3 .5 -1.3M41.1 -25.2l.5 -1.2 .6 -1.2M44 -31.1l.7 -1.2 .6 -1.1M46 -34.5l.7 -1M48.3 40.6l-.3 -1.5M47.8 37.6l-.2 -1.6 -.2 -1.5M-35.5 12.4l0 1.6 0 1.6M-35.5 17.1l0 1.6M-35.6 20.3l-.1 1.5 0 1.6 -.1 1.6 -.1 1.5 -.1 1.6 -.1 1.5 -.1 1.6M-36.3 32.8l-.1 1.5 -.1 1.5 -.1 1.6 -.1 1.5M-36.8 40.5l-.1 1.5 -.1 1.5 -.1 1.5M-37.3 48l-.1 1.6M-44.8 -26.7l0 1.5 -.1 1.5M-44.9 -22.2l-.1 1.4 -.1 1.5 -.1 1.6 -.1 1.5 -.2 1.5M-45.6 -13.2l-.2 1.6 -.2 1.5 -.2 1.6 -.2 1.5 -.3 1.6 -.2 1.5 -.3 1.6 -.2 1.6 -.3 1.5 -.3 1.6 -.3 1.6M-48.9 7.1l-.3 1.6M-49.6 10.2l-.3 1.6 -.3 1.6 -.4 1.5 -.3 1.6 -.4 1.6M-52.3 22.8l-.4 1.5 -.3 1.6M-55 35.1l-.3 1.5M-48.9 -33l1 .8M-45.2 -29.6l.9 .9M-43.4 -27.7l.9 .9 .8 1M-40.1 -23.7l.8 1.1 .7 1.1 .7 1.2M-37.2 -19.2l.7 1.2 .7 1.2 .6 1.2 .6 1.3 .6 1.2 .6 1.3 .5 1.3 .6 1.4 .5 1.3 .5 1.4 .4 1.4M-30.4 -3.6l.4 1.4 .4 1.4M-29.2 .6l.4 1.5 .3 1.4 .4 1.5M-27.5 8l.3 1.5M-27 11l.3 1.5 .2 1.5 .2 1.5M-25.9 18.6l.2 1.5 .1 1.6 .1 1.5 .2 1.5 .1 1.6 .1 1.5 .1 1.6 .1 1.5 0 1.5 .1 1.6 .1 1.5 0 1.5M-24.6 40.1l0 1.5 .1 1.5 0 1.5 0 1.5 0 1.5M-24.4 49.1l0 1.5M-24.3 55.1l0 1.4M-24.3 58l.1 1.4M-46.9 -41.4l.1 1.4M-46.8 -37.2l0 1.4M-46.8 -34.4l-.1 1.4M-47.2 -28.6l-.2 1.4M-47.5 -25.7l-.2 1.5M-48.1 -21.2l-.2 1.5 -.3 1.5M-48.8 -16.7l-.3 1.6 -.3 1.5M-49.7 -12.1l-.3 1.6 -.3 1.5 -.4 1.6 -.3 1.5 -.4 1.6 -.3 1.5 -.4 1.6 -.4 1.5 -.4 1.6 -.4 1.5 -.4 1.6M-54.1 6.5l-.4 1.6M-55.3 11.2l-.4 1.6 -.4 1.5 -.5 1.6 -.4 1.5M-48.5 -39.5l.6 1.2M-46.8 -36l.5 1.2 .5 1.2M-45.4 -32.4l.5 1.2M-44.5 -29.9l.4 1.3 .4 1.3 .3 1.3M-43 -24.6l.3 1.3M-42.2 -20.5l.3 1.4 .2 1.4 .2 1.4 .2 1.5 .1 1.4 .2 1.5 .1 1.4 .1 1.5M-40.7 -7.5l.1 1.5 0 1.5 .1 1.6 0 1.5 0 1.5 0 1.6 0 1.5 0 1.6 -.1 1.5 0 1.6 -.1 1.5 -.1 1.6 -.1 1.5 -.1 1.6M-41.1 15.7l-.1 1.5 -.1 1.6 -.1 1.6M-41.6 21.9l-.1 1.6 -.2 1.5 -.1 1.6 -.2 1.5 -.1 1.6M-42.5 31.2l-.1 1.6 -.2 1.5M-43 35.9l-.1 1.5 -.2 1.5M-43.4 40.5l-.2 1.5M-11.4 -3.3l1.1 .9 1.2 .8 1.1 1 1 .9M-3.8 3.3l1 1M2 9.9l.9 1.2 .8 1.2M5.4 14.8l.8 1.3 .8 1.2 .8 1.3 .7 1.3M9.2 21.2l.7 1.4M11.3 25.3l.6 1.3M13.1 29.4l.6 1.4 .5 1.3 .6 1.4 .5 1.4 .5 1.5 .5 1.4 .4 1.4 .5 1.4 .4 1.4 .4 1.4M18.4 44.8l.4 1.5M19.9 50.5l.3 1.4 .3 1.4M20.5 -6.5l1.4 .1M32.9 -3.8l1.3 .5M35.6 -2.8l1.3 .6 1.3 .6M39.5 -1l1.2 .7 1.3 .7 1.2 .7 1.3 .7 1.2 .8 1.2 .8 1.1 .9 1.2 .8 1.1 .9 1.2 1 1.1 .9M54.7 9.9l1 1M56.8 12l1 1.1 .9 1.1 1 1.1M60.6 16.4l.9 1.2M62.4 18.8l.9 1.2M64.1 21.2l.9 1.2M-51.7 -33l1.1 .6M-47.3 -30.5l1.1 .7 1 .8 1 .8 1 .8 1 .8 1 .9M-40.3 -24.8l1 .9M-38.4 -22.9l.9 1M-36.7 -20.9l.9 1.1 .8 1 .8 1.1M-32.6 -15.4l.7 1.2M-56.2 -16.6l1.4 -.2M-49.4 -17.4l1.3 0 1.4 0 1.3 0 1.4 .1 1.3 .1 1.4 .2 1.3 .2 1.3 .2 1.3 .2 1.4 .4 1.3 .3 1.3 .4 1.3 .4 1.3 .5 1.2 .4 1.3 .6 1.2 .5 1.3 .6 1.2 .7 1.2 .7M-22.2 -10.2l1.2 .7 1.2 .8M-17.5 -7.1l1.1 .9 1.1 .9 1.1 .9M-6.2 4l.9 1.2M-2.7 8.8l.8 1.3M-1.1 11.3l.8 1.3 .7 1.3 .8 1.3M2.6 17.9l.6 1.4 .7 1.3 .6 1.4M5.1 23.4l.6 1.4 .6 1.4 .5 1.4 .5 1.5 .6 1.4 .4 1.4 .5 1.5 .5 1.4 .4 1.5 .4 1.4 .4 1.5"/><path stroke="#004cff" d="M-65.8 38.3l.6 -1.3M-64 34.3l.7 -1.3M-62.6 31.7l.6 -1.4M-61.3 29l.8 -1.3 .7 -1.2 .8 -1.3 .8 -1.3M-56.6 21.5l.9 -1.2 .8 -1.2M-54 17.9l1 -1.2 .9 -1.1 1 -1.1M-40.3 4.6l1.2 -.8M3.5 49.7l.2 -1.5M37.4 -20.8l1.1 -.7M48.2 -25.5l1.3 -.4M50.8 -26.2l1.3 -.2M54.6 -26.8l1.3 -.2 1.4 -.1M59.9 -27.2l1.3 0 1.3 .1 1.4 .1M65.2 -26.9l1.3 .2M67.9 -26.5l1.3 .2M42.6 -26.9l.8 -1 .9 -.9 .9 -.9M49.1 -33.1l1 -.7 1 -.7 1 -.7 1.1 -.7M61 -39.5l1.2 -.4M51.6 -57.2l-1.2 -1.2M49.2 -59.5l-1.2 -1.2M-31.6 60.5l.3 -1.4 .3 -1.4M-30.7 56.3l.3 -1.4 .3 -1.4 .3 -1.4M-29.1 49.3l.4 -1.4M-27.5 43.6l.5 -1.4 .4 -1.4M36.3 61.3l0 -1.5 0 -1.4 -.1 -1.5 0 -1.4M36.1 52.5l-.1 -1.5M35.9 48l-.1 -1.5 -.1 -1.5 -.1 -1.5 -.1 -1.5 -.1 -1.6 0 -1.5 -.1 -1.5M35 32.7l-.1 -1.5M38.8 -18.6l.4 -1.4M40.6 -23.9l.5 -1.3M42.2 -27.6l.6 -1.2 .6 -1.2 .6 -1.1M45.3 -33.4l.7 -1.1M48.2 -37.5l.8 -1 .8 -1M50.7 -40.4l.8 -.9M54.2 -43.8l.9 -.7M56.1 -45.3l1 -.7 1 -.7M65.6 -39.7l-1.1 -1.3M57.8 -48.5l-1.1 -1.2M55.6 -50.9l-1.1 -1.3 -1.1 -1.2M49.2 -58.4l-1.1 -1.2M56.1 -60.6l-1.5 -.9M48.7 -65l-1.5 -.9M42.8 -68.6l-1.5 -.9 -1.4 -.9 -1.5 -.9M24.3 -80.3l-1.4 -.9M50 60.1l-.1 -1.5 0 -1.4M49.6 52.7l-.1 -1.5 -.2 -1.5M49.2 48.2l-.2 -1.5 -.2 -1.5M48.7 43.7l-.2 -1.5 -.2 -1.6M48 39.1l-.2 -1.5M47.4 34.5l-.2 -1.5 -.3 -1.6M-35.5 15.6l0 1.5M-36.2 31.2l-.1 1.6M-36.7 38.9l-.1 1.6M-37.4 49.6l-.1 1.4 -.1 1.5M-37.7 55.5l0 1.5 -.1 1.4M-37.8 65.7l.1 1.4M-44.9 -23.7l0 1.5M-48.3 4l-.3 1.5 -.3 1.6M-49.2 8.7l-.4 1.5M-51.3 18.1l-.3 1.5M-52 21.2l-.3 1.6M-53 25.9l-.3 1.5 -.4 1.6 -.3 1.5 -.3 1.5M-55.3 36.6l-.3 1.6M-56.2 41.2l-.2 1.5M-57.1 47.3l-.2 1.5M-57.5 50.3l-.2 1.5 -.2 1.5M-47.7 -58.7l-1.1 1.2M-50.9 -55l-1.1 1.2 -1.1 1.2M-58.7 -46.4l-1.1 1.2 -1.2 1.3M-63.3 -41.4l-1.1 1.2M-61.9 -40l1.1 .4M-56.2 -37.7l1.1 .6 1 .6 1.1 .6 1.1 .7M-50.9 -34.5l1 .7 1 .8M-47.9 -32.2l.9 .8 .9 .9 .9 .9M-44.3 -28.7l.9 1M-41.7 -25.8l.8 1.1 .8 1M-37.9 -20.3l.7 1.1M-24.7 37l.1 1.6 0 1.5M-24.5 47.6l.1 1.5M-24.4 50.6l0 1.5 0 1.5 .1 1.5M-24.3 56.5l0 1.5M-24.2 59.4l0 1.5 .1 1.4M-24 65.1l.1 1.5M-23.7 69.4l.2 1.3M-49 -55.5l.3 1.2M-47.9 -50.6l.2 1.3 .2 1.3 .2 1.3M-47.1 -45.4l.1 1.3M-46.9 -42.7l0 1.3M-46.8 -40l0 1.4 0 1.4M-46.9 -33l-.1 1.5 -.1 1.4 -.1 1.5M-47.7 -24.2l-.2 1.5 -.2 1.5M-48.6 -18.2l-.2 1.5M-49.4 -13.6l-.3 1.5M-53.7 5l-.4 1.5M-54.5 8.1l-.4 1.6 -.4 1.5M-57 17.4l-.4 1.6 -.4 1.5M-53.3 -46.6l.8 .9 .7 1 .7 1M-50.4 -42.7l.6 1.1 .7 1 .6 1.1M-47.9 -38.3l.5 1.1M-45.8 -33.6l.4 1.2M-44.9 -31.2l.4 1.3M-43.4 -26l.4 1.4M-42.7 -23.3l.2 1.4 .3 1.4M-40.8 -9l.1 1.5M-41 14.1l-.1 1.6M-41.4 20.4l-.2 1.5M-42.3 29.7l-.2 1.5M-42.8 34.3l-.2 1.6M-43.3 38.9l-.1 1.6M-43.6 42l-.1 1.5 -.1 1.5 -.2 1.5 -.1 1.5 -.1 1.5M-44.3 51l-.1 1.5M-44.4 54l-.1 1.4 -.1 1.5M18 43.4l.4 1.4M18.8 46.3l.4 1.4 .3 1.4 .4 1.4M20.5 53.3l.4 1.4 .3 1.4 .3 1.4 .3 1.4 .2 1.4M22.3 61.6l.3 1.4 .3 1.4M23.1 65.7l.3 1.3 .2 1.4M52.6 7.9l1 1 1.1 1M55.7 10.9l1.1 1.1M59.7 15.3l.9 1.1M61.5 17.6l.9 1.2M63.3 20l.8 1.2M66.6 24.9l.7 1.2 .8 1.3M69.5 30l.7 1.3 .6 1.4M-63.3 -50.8l1.1 .5 1.1 .5M-55.9 -46.6l1 .8M-51.3 -42.6l.9 .9M-49.6 -40.8l.9 1M-67.6 -37.1l1.3 .1M-62.5 -36.5l1.2 .2M-57.6 -35.3l1.2 .4 1.2 .4M-50.6 -32.4l1.1 .6 1.1 .7M-41.2 -25.7l.9 .9M-66.7 -13.3l1.3 -.6M-62.8 -14.8l1.3 -.5 1.3 -.3 1.4 -.4 1.3 -.3 1.3 -.3M-54.8 -16.8l1.3 -.2 1.4 -.2 1.3 -.1 1.4 -.1"/><path stroke="#0066ff" d="M-70.3 50.6l.5 -1.3M-69.4 47.9l.5 -1.4 .5 -1.3 .5 -1.4M-66.9 41.1l.6 -1.4 .5 -1.4M-65.2 37l.6 -1.4M-63.3 33l.7 -1.3M-62 30.3l.7 -1.3M-58.2 23.9l.8 -1.2M52.1 -26.4l1.2 -.2M57.3 -27.1l1.3 -.1 1.3 0M69.2 -26.3l1.3 .3 1.4 .3M79.8 -22.9l1.3 .6M86.2 -19.6l0 0M53.2 -35.9l1 -.6 1.1 -.6 1.1 -.5 1.2 -.5M58.7 -38.6l1.2 -.5 1.1 -.4M62.2 -39.9l1.2 -.3 1.2 -.3 1.3 -.3M72.2 -41.5l1.2 0 1.3 0M54 -54.9l-1.2 -1.1M46.9 -61.8l-1.2 -1.2M43.4 -65.3l-1.1 -1.2 -1.1 -1.1M40.1 -68.8l-1.1 -1.1M37.9 -71.1l-1.1 -1.1M35.8 -73.4l-1 -1.1M29.8 -80.2l-1 -1.2M-56.1 67.5l.3 -1.4 .3 -1.3 .4 -1.3 .3 -1.4 .3 -1.3 .3 -1.4 .4 -1.3M-34.5 75.2l.3 -1.3M-34 72.6l.3 -1.3 .2 -1.3 .3 -1.3M-32.9 67.3l.2 -1.3M-32.4 64.6l.2 -1.3 .3 -1.4 .3 -1.4M-31 57.7l.3 -1.4M-29.8 52.1l.4 -1.4M35.7 72.7l.2 -1.4 .1 -1.4 .1 -1.4 .1 -1.4 0 -1.5M36.3 64.2l0 -1.5M36.2 55.5l0 -1.5 -.1 -1.5M36 51l0 -1.5 -.1 -1.5M46.7 -35.5l.8 -1 .7 -1M51.5 -41.3l.9 -.8 .9 -.9M55.1 -44.5l1 -.8M59.1 -47.3l1.1 -.6 1 -.6 1.1 -.5M80 -23.1l-1.1 -1.3 -1.1 -1.3 -1 -1.3 -1.2 -1.3 -1.1 -1.3 -1.1 -1.2M70.1 -34.7l-1.1 -1.2 -1.2 -1.3M66.7 -38.5l-1.1 -1.2M64.5 -41l-1.2 -1.2M62.2 -43.5l-1.1 -1.2M56.7 -49.7l-1.1 -1.2M53.4 -53.4l-1.1 -1.3M51.3 -55.9l-1.1 -1.2M47.1 -60.8l-1 -1.2 -1 -1.3M41.2 -68.1l-.9 -1.2M35 -76.6l-.8 -1.2M33.4 -79l-.8 -1.2M31.8 -81.4l-.7 -1.2M78.8 -36.7l-1.2 -1.1M67.4 -47l-1.3 -1.1M63.5 -50.3l-1.3 -1.1 -1.3 -1.2M59.6 -53.7l-1.3 -1.1M57.1 -55.9l-1.3 -1.1M54.5 -58.1l-1.3 -1.1M42 -69l-1.2 -1.1M38.5 -72.3l-1.2 -1.1M36.1 -74.4l-1.1 -1.1M29.4 -80.9l-1.1 -1.1 -1 -1.1M70.9 -51.4l-1.4 -1 -1.5 -.9M62.1 -56.9l-1.5 -1M59.1 -58.8l-1.5 -.9M54.6 -61.5l-1.5 -.9M51.7 -63.3l-1.5 -.8M47.2 -65.9l-1.5 -.9 -1.4 -.9 -1.5 -.9M35.5 -73.1l-1.4 -.9 -1.4 -.9M22.9 -81.2l-1.3 -.9 -1.4 -.9 -1.3 -.9 -1.3 -.9M49.4 71.8l.2 -1.4M49.8 67.5l.1 -1.5M50 63.1l0 -1.5M49.9 57.2l-.1 -1.5 -.1 -1.5 -.1 -1.5M49.3 49.7l-.1 -1.5M48.8 45.2l-.1 -1.5M-37.1 45l-.1 1.5 -.1 1.5M-37.8 59.9l0 1.5M-37.8 62.8l0 1.4 0 1.5M-37.6 68.5l.1 1.5M-37.4 71.4l.1 1.4M-36.7 77l.2 1.3M-51.6 19.6l-.4 1.6M-54.3 32l-.4 1.6M-55.6 38.2l-.3 1.5M-56.4 42.7l-.3 1.6 -.2 1.5M-57.3 48.8l-.2 1.5M-58.1 56.4l-.1 1.5M-30.1 -81.7l-.8 1.2M-33.3 -76.9l-.8 1.2M-38.7 -69.7l-.9 1.2 -1 1.3 -.9 1.2M-42.5 -64.8l-1 1.2 -1.1 1.2 -1 1.3M-48.8 -57.5l-1 1.2 -1.1 1.3M-54.2 -51.3l-1.1 1.2 -1.1 1.2 -1.2 1.3 -1.1 1.2M-62.1 -42.7l-1.2 1.3M-64.4 -40.2l-1.2 1.3 -1.1 1.2 -1.2 1.3 -1.1 1.2 -1.1 1.3M-71.3 -32.7l-1.1 1.3 -1.2 1.3M-80.3 -22.4l-1.1 1.3M-77 -41.8l1.3 -.1M-70.5 -41.7l1.2 .1 1.3 .2M-64.3 -40.7l1.2 .3 1.2 .4M-59.6 -39.2l1.1 .5M-57.3 -38.2l1.1 .5M-51.9 -35.2l1 .7M-24.1 62.3l0 1.4 .1 1.4M-23.9 66.6l.1 1.4 .1 1.4M-23.4 72.1l.2 1.4M-23.1 74.8l.2 1.4M-22.1 80.2l.2 1.3M-53.1 -65.4l.5 1 .6 1 .5 1.1 .5 1.1 .4 1.1 .5 1.1 .4 1.2 .3 1.1M-48.7 -54.3l.3 1.2 .3 1.3 .2 1.2M-47.3 -46.7l.2 1.3M-47 -44.1l.1 1.4M-46.8 -35.8l0 1.4M-47.4 -27.2l-.1 1.5M-57.8 20.5l-.4 1.5M-65.1 -56.3l1 .5 1 .6M-62.1 -54.5l1 .6M-60.1 -53.2l.9 .7 .9 .8M-57.4 -50.9l.9 .8M-47.4 -37.2l.6 1.2M-44.4 52.5l0 1.5M-44.6 58.4l0 1.5 0 1.4M22 60.3l.3 1.3M23.6 68.4l.3 1.3M24.2 71l.2 1.3M65 22.4l.8 1.2 .8 1.3M68.1 27.4l.7 1.3M70.8 32.7l.7 1.3 .6 1.3 .6 1.4 .6 1.3M74.4 40.7l.6 1.4M76 44.8l0 0M-66.7 -52.1l1.1 .4 1.2 .4 1.1 .5M-61.1 -49.8l1.1 .6M-58.9 -48.6l1 .6M-56.9 -47.3l1 .7M-53 -44.3l.9 .9 .8 .8M-50.4 -41.7l.8 .9M-78.2 -36.4l1.4 -.2M-71.5 -37.1l1.3 0M-68.9 -37.1l1.3 0M-66.3 -37l1.3 .1 1.2 .2 1.3 .2M-61.3 -36.3l1.3 .3 1.2 .3 1.2 .4M-55.2 -34.5l1.2 .5 1.1 .5 1.2 .5M-48.4 -31.1l1.1 .6M-81.3 -4.3l1.1 -.9M-79 -6.1l1.2 -.9M-73 -10.2l1.2 -.7 1.3 -.6M-69.3 -12.2l1.3 -.6 1.3 -.5M-65.4 -13.9l1.3 -.5 1.3 -.4"/><path stroke="#0080ff" d="M-67.9 43.8l.5 -1.4 .5 -1.3M-64.6 35.6l.6 -1.3M71.9 -25.7l1.3 .4 1.3 .4 1.3 .4 1.4 .5 1.3 .5 1.3 .6M81.1 -22.3l1.3 .6M83.7 -21l1.2 .7M57.6 -38.1l1.1 -.5M65.9 -40.8l1.2 -.2M76 -41.5l1.4 .1M52.8 -56l-1.2 -1.2M50.4 -58.4l-1.2 -1.1M48 -60.7l-1.1 -1.1M45.7 -63l-1.1 -1.2M41.2 -67.6l-1.1 -1.2M39 -69.9l-1.1 -1.2M36.8 -72.2l-1 -1.2M34.8 -74.5l-1.1 -1.2 -1 -1.1 -1 -1.2M27.9 -82.5l-.9 -1.2M-35.6 80.2l.3 -1.2M-34.2 73.9l.2 -1.3M-33.2 68.7l.3 -1.4M-32.7 66l.3 -1.4M34.7 79.6l.2 -1.4M35.2 76.9l.2 -1.4M35.6 74.1l.1 -1.4M36.2 65.6l.1 -1.4M49.8 -39.5l.9 -.9M53.3 -43l.9 -.8M58.1 -46.7l1 -.6M87.4 -13.7l-1.1 -1.4M84.3 -17.8l-1.1 -1.3M73.4 -30.8l-1.1 -1.3M71.2 -33.4l-1.1 -1.3M67.8 -37.2l-1.1 -1.3M60 -46l-1.1 -1.2M52.3 -54.7l-1 -1.2M50.2 -57.1l-1 -1.3M48.1 -59.6l-1 -1.2M45.1 -63.3l-1 -1.2 -1 -1.2 -.9 -1.2M38.5 -71.8l-.9 -1.2M36.7 -74.2l-.9 -1.2M34.2 -77.8l-.8 -1.2M76.3 -39l-1.2 -1.1M73.8 -41.3l-1.3 -1.1 -1.3 -1.2 -1.3 -1.1M64.8 -49.2l-1.3 -1.1M58.3 -54.8l-1.2 -1.1M50.7 -61.4l-1.3 -1.1 -1.2 -1.1 -1.3 -1.1M45.7 -65.7l-1.2 -1.1 -1.2 -1.1M40.8 -70.1l-1.2 -1.1M37.3 -73.4l-1.2 -1M33.8 -76.6l-1.1 -1.1 -1.1 -1.1 -1.1 -1.1M27.3 -83.1l-1.1 -1.1M66.5 -54.2l-1.5 -.9 -1.4 -.9 -1.5 -.9M57.6 -59.7l-1.5 -.9M53.1 -62.4l-1.4 -.9M37 -72.2l-1.5 -.9M32.7 -74.9l-1.5 -.9 -1.4 -.9M28.4 -77.6l-1.4 -.9 -1.3 -.9M16.3 -85.7l-1.3 -.9M49.2 73.3l.2 -1.5M49.7 68.9l.1 -1.4M49.9 66l.1 -1.5 0 -1.4M50 61.6l0 -1.5M-37.6 52.5l0 1.5 -.1 1.5M-37.8 58.4l0 1.5M-37.8 61.4l0 1.4M-37.7 67.1l.1 1.4M-37.5 70l.1 1.4M-37.3 72.8l.2 1.4 .2 1.4 .2 1.4M-36.5 78.3l.3 1.4M-54.7 33.6l-.3 1.5M-55.9 39.7l-.3 1.5M-56.9 45.8l-.2 1.5M-57.9 53.3l-.1 1.5 -.1 1.6M-58.2 57.9l-.1 1.5 0 1.5 0 1.5 0 1.5 .1 1.5M45.8 -75.2l-1.7 -.6M-30.9 -80.5l-.8 1.2 -.8 1.2 -.8 1.2M-36.8 -72.1l-.9 1.2 -1 1.2M-41.5 -66l-1 1.2M-45.6 -61.1l-1 1.2 -1.1 1.2M-79.2 -23.7l-1.1 1.3M-81.4 -21.1l-1.1 1.3M-75.7 -41.9l1.3 0M-66.8 -41.2l1.2 .2 1.3 .3M-60.8 -39.6l1.2 .4M-58.5 -38.7l1.2 .5M-22.9 76.2l.3 1.3 .2 1.4M-54.4 -67.4l.7 1M-49.4 -56.7l.4 1.2M-61.1 -53.9l1 .7M-56.5 -50.1l.8 .8 .8 .9 .8 .9 .8 .9M-51.1 -43.7l.7 1M-44.2 49.5l-.1 1.5M-44.6 56.9l0 1.5M22.9 64.4l.2 1.3M23.9 69.7l.3 1.3M25.3 76.1l.2 1.3M25.8 78.6l.3 1.3M27.1 83.5l0 0M68.8 28.7l.7 1.3M73.3 38l.6 1.4 .5 1.3M75 42.1l.5 1.4 .5 1.3M-70.4 -53.1l1.3 .3 1.2 .3 1.2 .4M-60 -49.2l1.1 .6M-57.9 -48l1 .7M-54.9 -45.8l.9 .7 1 .8M-79.5 -36.1l1.3 -.3M-72.8 -37.1l1.3 0M-70.2 -37.1l1.3 0M-82.4 -3.3l1.1 -1M-77.8 -7l1.2 -.8M-75.4 -8.6l1.2 -.8 1.2 -.8"/><path stroke="#0099ff" d="M-70.7 52l.4 -1.4M-69.8 49.3l.4 -1.4M63.9 -27l1.3 .1M84.9 -20.3l1.3 .7M69.6 -41.3l1.3 -.1 1.3 -.1M77.4 -41.4l0 0M44.6 -64.2l-1.2 -1.1M31.7 -78l-1 -1.1 -.9 -1.1M28.8 -81.4l-.9 -1.1M-35 77.8l.2 -1.3 .3 -1.3M34.9 78.2l.3 -1.3M36.3 62.7l0 -1.4M86.3 -15.1l-1 -1.3 -1 -1.4M83.2 -19.1l-1 -1.4 -1.1 -1.3M63.3 -42.2l-1.1 -1.3M58.9 -47.2l-1.1 -1.3M42.2 -66.9l-1 -1.2M39.4 -70.6l-.9 -1.2M37.6 -73l-.9 -1.2M35.8 -75.4l-.8 -1.2M32.6 -80.2l-.8 -1.2M31.1 -82.6l0 0M80.1 -35.5l-1.3 -1.2M77.6 -37.8l-1.3 -1.2M75.1 -40.1l-1.3 -1.2M69.9 -44.7l-1.2 -1.1 -1.3 -1.2M66.1 -48.1l-1.3 -1.1M60.9 -52.6l-1.3 -1.1M55.8 -57l-1.3 -1.1M53.2 -59.2l-1.2 -1.1M43.3 -67.9l-1.3 -1.1M39.6 -71.2l-1.1 -1.1M26.2 -84.2l0 0M72.4 -50.5l-1.5 -.9M68 -53.3l-1.5 -.9M50.2 -64.1l-1.5 -.9M29.8 -76.7l-1.4 -.9M25.7 -79.4l-1.4 -.9M17.6 -84.8l-1.3 -.9M-36.2 79.7l0 0M-58.2 65.4l0 0M-34.1 -75.7l-.9 1.2 -.9 1.2M-61 -43.9l-1.1 1.2M-70.1 -33.9l-1.2 1.2M-73.6 -30.1l-1.1 1.3 -1.1 1.2 -1.2 1.3 -1.1 1.3M-83.6 -18.5l-1 1.3 -1.1 1.4M-73.1 -41.9l1.3 .1M-68 -41.4l1.2 .2M-23.2 73.5l.1 1.3M-22.4 78.9l.3 1.3M-21.9 81.5l.4 1.3 .3 1.3M-55 -68.3l.6 .9M-66.2 -56.9l1.1 .6M-58.3 -51.7l.9 .8M24.4 72.3l.3 1.3M25.5 77.4l.3 1.2M26.1 79.9l.4 1.2 .3 1.2M-80.8 -35.8l1.3 -.3M-76.8 -36.6l1.3 -.2 1.3 -.1 1.4 -.2M-87.8 1.9l1.1 -1.1 1 -1.1M-83.5 -2.4l1.1 -.9M-80.2 -5.2l1.2 -.9M-76.6 -7.8l1.2 -.8M-70.5 -11.5l1.2 -.7"/><path stroke="#00b2ff" d="M66.5 -26.7l1.4 .2M67.1 -41l1.2 -.2M22.2 -85.3l0 0M-35.3 79l.3 -1.2M34.4 81l.3 -1.4M35.4 75.5l.2 -1.4M81.1 -21.8l-1.1 -1.3M72.3 -32.1l-1.1 -1.3M61.1 -44.7l-1.1 -1.3M81.3 -34.3l-1.2 -1.2M52 -60.3l-1.3 -1.1M46.9 -64.7l-1.2 -1M35 -75.5l-1.2 -1.1M30.5 -79.9l-1.1 -1M38.4 -71.3l-1.4 -.9M49.6 70.4l.1 -1.5M-35.9 -73.3l-.9 1.2M-53.1 -52.6l-1.1 1.3M-78.1 -25l-1.1 1.3M-82.5 -19.8l-1.1 1.3M-85.7 -15.8l-1.1 1.3M-74.4 -41.9l1.3 0M-71.8 -41.8l1.3 .1M-23.5 70.7l.1 1.4M-21.2 84.1l.4 1.3M-53.7 -66.4l.6 1M-67.3 -57.3l1.1 .4M-63.1 -55.2l1 .7M24.7 73.6l.3 1.3 .3 1.2M26.8 82.3l.3 1.2M-85.7 -.3l1.1 -1 1.1 -1.1"/><path stroke="#00ccff" d="M82.4 -21.7l1.3 .7M68.3 -41.2l1.3 -.1M74.7 -41.5l1.3 0"/><path stroke="#00e6ff" d="M23.5 -84.5l-1.3 -.8M60.6 -57.9l-1.5 -.9"/><path stroke="#00ffe5" d="M-29.3 -82.9l-.8 1.2"/><path stroke="#00ffff" d="M40.3 -69.3l-.9 -1.3"/><path stroke="#0000ff" d="M-2.9 -5.1l1.4 -.3"/><path stroke="#001aff" d="M-5.3 -6.2l1.4 .1M-2.4 -6l1.4 .2M.4 -5.6l1.4 .2 1.4 .3 1.4 .3 1.4 .4 1.4 .4 1.4 .4 1.3 .5 1.4 .5 1.3 .5 1.4 .6 1.3 .6 1.3 .6 1.3 .7 1.3 .7 1.2 .8 1.3 .7M23.1 3.4l1.2 .9 1.2 .8 1.1 .9 1.2 .9 1.1 1 1.1 .9 1.1 1M-28.1 -12.5l.6 1.3M-26.4 -8.5l.6 1.4M-23.9 -1.4l.5 1.5M-23 1.6l.3 1.5 .4 1.5 .3 1.5M-21.3 9.2l.2 1.5 .3 1.5 .2 1.6M-20.1 16.9l.1 1.6 .2 1.6 .2 1.6M-19.1 31.1l.1 1.6M-19 34.3l.1 1.6M-28.8 -12.2l1.3 .5M-26.2 -11.2l1.2 .5 1.3 .6 1.2 .6M-21.3 -8.8l1.3 .6 1.2 .7M-43.9 30.7l.7 -1.3M-41.8 26.7l.8 -1.2 .8 -1.3 .8 -1.3M-38.6 21.7l.8 -1.3 .9 -1.2 .9 -1.2 .9 -1.2 1 -1.1 .9 -1.2 1 -1.1 1 -1.1 1 -1 1.1 -1.1 1.1 -1M-26.9 8.2l1.1 -1 1.1 -.9 1.2 -1 1.1 -.9 1.2 -.8 1.2 -.9 1.3 -.8 1.2 -.7 1.3 -.8 1.2 -.7 1.3 -.6 1.3 -.7 1.4 -.6 1.3 -.6 1.3 -.5 1.4 -.5 1.4 -.5 1.4 -.4 1.3 -.4M-1.5 -5.4l1.4 -.3 1.5 -.3 1.4 -.2 1.4 -.2 1.4 -.2 1.4 -.1 1.5 -.1 1.4 -.1 1.4 0 1.5 .1 1.4 .1 1.4 .1 1.4 .1 1.5 .2 1.4 .2 1.4 .3 1.4 .3 1.4 .4 1.4 .3 1.3 .4 1.4 .5 1.3 .5 1.4 .5 1.3 .6 1.3 .6 1.3 .6 1.3 .7 1.3 .7 1.2 .7 1.3 .7 1.2 .8 1.2 .9 1.2 .8 1.1 .9 1.2 .9M46.9 6.9l1.1 1M-19.6 24.1l.7 -1.3M-17.4 20.2l.8 -1.3M-10.5 10.3l1 -1.1M-8.5 8.1l1 -1.1M-6.5 5.9l1.1 -1 1 -1.1M-3.3 2.8l1.1 -.9M-1 .9l1.1 -.9M1.3 -.8l1.2 -.9M8.6 -5.4l1.3 -.7 1.3 -.6 1.3 -.6M16.5 -8.8l1.3 -.4 1.4 -.4 1.3 -.4 1.4 -.3M26 -11l1.4 -.2 1.4 -.1M44.1 11.1l-.2 -1.6M43.7 8l-.2 -1.6M42.8 -18.1l.1 -1.4M-39.4 -22.6l.5 1.4M-37.7 -17.2l.3 1.4M-37.1 -14.4l.3 1.5M-36.5 -11.5l.3 1.5M-36 -8.6l.3 1.5M-35.4 -4.1l.2 1.5 .2 1.5 .1 1.6M-34.8 2l.1 1.5 .1 1.6 0 1.5 .1 1.6 0 1.6 0 1.5 0 1.6 0 1.6 0 1.5M-34.5 17.6l-.1 1.6M-34.6 20.8l-.1 1.5M-34.8 23.9l0 1.6M-35.3 33.3l-.1 1.5M-29.1 -9.3l.6 1.3M-27.9 -6.7l.6 1.3 .6 1.4 .5 1.4 .6 1.3 .5 1.4M-24.6 1.5l.4 1.5 .5 1.4 .4 1.4 .4 1.5M-22.1 10.3l.3 1.4 .3 1.5M-21.2 14.8l.3 1.5 .3 1.5 .3 1.5 .2 1.5 .2 1.6 .3 1.5M-19.5 25.4l.2 1.6M-18.9 30.1l.1 1.5 .1 1.5 .2 1.6M-18.4 36.2l.1 1.5 .1 1.6 .1 1.5"/><path stroke="#0033ff" d="M-3.9 -6.1l1.5 .1M-1 -5.8l1.4 .2M21.9 2.6l1.2 .8M31.1 9.8l1.1 1.1 1 1 1 1.1 1.1 1.1 .9 1.1 1 1.1 .9 1.2 .9 1.1 .9 1.2M40.8 21l.8 1.3 .9 1.2 .8 1.2 .8 1.3 .7 1.3 .7 1.3 .8 1.3M47 31.2l.6 1.3M48.3 33.9l.6 1.3 .6 1.3 .6 1.4 .6 1.3M-49.7 -36.2l1.2 .6M-47.4 -35l1.1 .7M-44.2 -32.8l1.1 .8M-42.1 -31.1l1 .8M-40.1 -29.4l.9 .9M-38.2 -27.5l.9 1 .9 1 .8 1.1 .9 1 .8 1.1 .8 1.2 .8 1.1 .8 1.2 .7 1.2 .7 1.3 .7 1.2 .6 1.3 .7 1.3M-27.5 -11.2l.6 1.4 .5 1.3M-25.8 -7.1l.5 1.4 .5 1.4 .5 1.5 .4 1.4M-23.4 .1l.4 1.5M-22 6.1l.4 1.5 .3 1.6M-20.6 13.8l.3 1.6 .2 1.5M-19.6 21.7l.1 1.5 .1 1.6 .1 1.6 .1 1.6 .1 1.6 0 1.5M-19 32.7l0 1.6M-18.9 35.9l0 1.5 0 1.6 0 1.6 0 1.5 0 1.6M-45 -32.7l.6 1.2M-43.9 -30.3l.4 1.3 .5 1.2 .4 1.3 .5 1.3M-41.8 -23.9l.4 1.4 .4 1.3 .3 1.4 .3 1.4 .3 1.4 .2 1.4 .3 1.4 .2 1.5 .2 1.4 .2 1.5 .2 1.5 .1 1.5 .1 1.5 .1 1.5M-38.4 -2.3l.1 1.5 .1 1.5 0 1.6 .1 1.5 0 1.6 0 1.5 0 1.6 -.1 1.5 0 1.6M-58.5 -27l1.3 0 1.3 .1 1.3 .2M-56.7 -13.5l1.3 -.3M-52.7 -14.3l1.3 -.2 1.3 -.2M-48.7 -14.8l1.3 -.1 1.4 0 1.3 -.1M-43.3 -14.9l1.3 0 1.4 .1 1.3 .1 1.3 .2 1.4 .2 1.3 .3 1.3 .3 1.3 .3 1.3 .4 1.3 .4 1.3 .4M-27.5 -11.7l1.3 .5M-22.5 -9.5l1.2 .7M-51.5 49.8l.4 -1.4M-49.7 44.3l.5 -1.4M-48.2 40.2l.6 -1.4 .5 -1.4 .6 -1.3 .6 -1.4M-44.6 32l.7 -1.3M-42.5 28l.7 -1.3M-39.4 22.9l.8 -1.2M-28 9.2l1.1 -1M45.8 6l1.1 .9M48 7.9l1.1 1 1.1 1 1 1 1.1 1.1 1 1.1 .9 1.1 1 1.1M56.1 16.5l1 1.1 .8 1.2 .9 1.2 .9 1.2 .8 1.3 .8 1.2M63.6 27.6l.7 1.3M-24 33.7l.5 -1.4M-22.9 30.9l.6 -1.3 .7 -1.4 .6 -1.4 .7 -1.3 .7 -1.4M-18.9 22.8l.7 -1.3 .8 -1.3M-16.6 18.9l.8 -1.3 .8 -1.3 .9 -1.2 .9 -1.2 .9 -1.2 .9 -1.2 .9 -1.2M-9.5 9.2l1 -1.1M-7.5 7l1 -1.1M-4.4 3.8l1.1 -1M-2.2 1.9l1.2 -1M.1 0l1.2 -.8M2.5 -1.7l1.2 -.8 1.2 -.8 1.2 -.7 1.3 -.8 1.2 -.6M12.5 -7.3l1.3 -.5 1.3 -.5 1.4 -.5M21.9 -10.3l1.4 -.3 1.3 -.2 1.4 -.2M28.8 -11.3l1.4 -.1 1.4 -.1 1.4 0 1.4 .1 1.4 0 1.3 .1 1.4 .2 1.4 .2 1.4 .2 1.4 .3 1.3 .3 1.4 .3 1.3 .4 1.4 .4 1.3 .4M54.6 -6.4l1.3 .6M-45 23.8l.9 -1.3 .8 -1.2 .9 -1.1M-39.6 16.7l.9 -1.1 1 -1.1 1 -1.1 1 -1 1.1 -1.1 1.1 -1 1 -.9 1.2 -1M46.9 31.4l-.2 -1.5 -.2 -1.6M46.2 26.8l-.2 -1.6 -.2 -1.5M45.5 22.1l-.2 -1.6 -.2 -1.5 -.2 -1.6 -.2 -1.6 -.2 -1.6 -.2 -1.5 -.2 -1.6M43.9 9.5l-.2 -1.5M43.5 6.4l-.1 -1.6 -.1 -1.5 -.2 -1.6 -.1 -1.6 -.1 -1.5M42.8 -3l-.1 -1.5 0 -1.5 -.1 -1.6 0 -1.5 0 -1.5 0 -1.5 0 -1.5 0 -1.5 .1 -1.5 .1 -1.5M42.9 -19.5l.1 -1.5 .1 -1.4 .2 -1.4 .2 -1.5M43.7 -26.6l.2 -1.4 .2 -1.4M44.4 -30.7l.3 -1.4M45.3 -34.7l.4 -1.3M46.5 -38.5l.4 -1.2M47.4 -40.9l.5 -1.2M53.5 -34.4l-.6 -1.4M60.2 22.9l-.5 -1.6M58.8 18.3l-.4 -1.6 -.5 -1.5 -.4 -1.6M57 12.1l-.4 -1.6 -.5 -1.5M55.6 7.4l-.4 -1.5M54.7 4.3l-.4 -1.5 -.4 -1.6M53 -1.9l-.4 -1.6 -.4 -1.5 -.4 -1.6M51.4 -8.1l-.4 -1.6M50.6 -11.2l-.4 -1.5 -.3 -1.6 -.4 -1.5 -.3 -1.5 -.3 -1.6 -.3 -1.5 -.3 -1.5 -.2 -1.5 -.3 -1.5 -.2 -1.5M47.4 -27.9l-.2 -1.5 -.2 -1.4M46.8 -32.3l-.1 -1.4 -.1 -1.5 -.1 -1.4M46.4 -39.5l-.1 -1.4M46.3 -43.6l.1 -1.4M46.4 -46.3l.1 -1.4M8.6 56.4l.1 -1.5M8.8 53.5l.1 -1.5M9 50.5l.1 -1.5 .1 -1.5M9.3 46l.2 -1.5 .1 -1.5 .2 -1.5 .1 -1.5 .2 -1.6 .2 -1.5 .1 -1.5 .2 -1.6 .3 -1.5 .2 -1.5 .2 -1.5 .3 -1.6M-45.7 -35.8l.7 1.1 .6 1.1 .7 1.2 .6 1.1M-42.5 -30.1l.6 1.2M-41.3 -27.7l.5 1.3 .5 1.2 .5 1.3 .4 1.3M-38.9 -21.2l.4 1.3 .4 1.4 .4 1.3M-37.4 -15.8l.3 1.4M-36.8 -12.9l.3 1.4M-36.2 -10l.2 1.4M-35.7 -7.1l.2 1.5 .1 1.5M-34.9 .5l.1 1.5M-34.5 16l0 1.6M-34.6 19.2l0 1.6M-34.7 22.3l-.1 1.6M-34.8 25.5l-.1 1.5 -.1 1.6 -.1 1.6 -.1 1.5 -.1 1.6M-35.4 34.8l-.2 1.6 -.1 1.5 -.1 1.6 -.1 1.5M-36 42.6l-.1 1.5M-36.2 45.6l-.2 1.5M-36.9 57.6l-.1 1.4M-29.8 -10.5l.7 1.2M-28.5 -8l.6 1.3M-25.1 .1l.5 1.4M-22.9 7.3l.4 1.5 .4 1.5M-21.5 13.2l.3 1.6M-19.6 23.9l.1 1.5M-19.3 27l.2 1.5 .2 1.6M-18.5 34.7l.1 1.5M-18.1 42.3l.1 1.5M-17.9 45.3l0 1.5 .1 1.6 0 1.4 .1 1.5 .1 1.5 0 1.5M-17.2 64.4l.1 1.4 .1 1.4M10.9 40.6l.3 1.5 .4 1.4M11.9 45l.4 1.4 .3 1.5 .3 1.4 .3 1.5M13.4 52.2l.3 1.4 .3 1.5 .2 1.4M14.5 57.9l.2 1.4"/><path stroke="#004cff" d="M39.9 19.8l.9 1.2M46.3 29.9l.7 1.3M47.6 32.5l.7 1.4M50.7 39.2l.5 1.4M51.8 42l.5 1.3 .5 1.4M53.2 46.1l.5 1.4M54.6 50.2l.4 1.4M-62 -40.3l1.3 .2M-58.1 -39.5l1.2 .3 1.3 .4 1.2 .5M-53.2 -37.9l1.2 .5 1.2 .6M-46.3 -34.3l1.1 .8M-43.1 -32l1 .9M-41.1 -30.3l1 .9M-39.2 -28.5l1 1M-18.9 43.7l0 1.5M-54.9 -47l.9 .9M-51.6 -43.4l.8 .9M-48.7 -39.4l.7 1 .7 1.1 .6 1.1 .6 1.2 .6 1.1 .5 1.2M-44.4 -31.5l.5 1.2M-42.1 -25.2l.3 1.3M-38.5 -3.8l.1 1.5M-77.2 -23.7l1.4 -.5M-67.9 -26.3l1.4 -.2 1.3 -.2M-62.5 -27l1.3 0 1.3 0M-54.6 -26.7l1.3 .1 1.3 .2 1.3 .3 1.3 .3M-74.3 -5.3l1.1 -.8 1.2 -.8M-70.7 -7.6l1.2 -.7M-68.3 -9l1.3 -.6 1.2 -.6 1.3 -.6 1.3 -.5M-61.9 -11.8l1.2 -.5 1.4 -.4 1.3 -.4 1.3 -.4M-54.1 -14.1l1.4 -.2M-50.1 -14.7l1.4 -.1M-44.7 -15l1.4 .1M-53.5 56.7l.4 -1.4 .4 -1.3 .4 -1.4 .4 -1.4 .4 -1.4M-51.1 48.4l.5 -1.3M-50.2 45.7l.5 -1.4M-49.2 42.9l.5 -1.4 .5 -1.3M-45.9 34.7l.7 -1.4 .6 -1.3M-43.2 29.4l.7 -1.4M55.2 15.3l.9 1.2M61.3 23.7l.8 1.3 .7 1.3 .8 1.3M64.3 28.9l.7 1.3M65.7 31.5l.6 1.4 .7 1.3M67.6 35.6l.6 1.3 .6 1.4M-24.6 35.1l.6 -1.4M-23.5 32.3l.6 -1.4M49.4 -8.6l1.3 .5 1.4 .5 1.3 .6 1.2 .6M55.9 -5.8l1.3 .7 1.2 .7 1.3 .7M60.9 -2.9l1.2 .8 1.2 .8M66.8 1.3l1.1 1 1.1 1 1.1 .9 1 1.1M72.2 6.3l1 1.1M74.2 8.5l1 1.1M-54.4 42l.6 -1.4 .5 -1.3M-52.7 38l.6 -1.4M-51.5 35.3l.7 -1.3 .6 -1.3 .7 -1.3 .7 -1.3 .7 -1.3 .8 -1.3 .8 -1.3 .7 -1.2 .8 -1.2M-42.4 20.2l.9 -1.2 .9 -1.2 1 -1.1M46.5 28.3l-.3 -1.5M45.8 23.7l-.3 -1.6M42.9 -1.4l-.1 -1.6M43.5 -25.3l.2 -1.3M44.1 -29.4l.3 -1.3M44.7 -32.1l.3 -1.3 .3 -1.3M45.7 -36l.4 -1.2 .4 -1.3M46.9 -39.7l.5 -1.2M48.4 -43.2l.5 -1.2 .6 -1.1 .6 -1.1M50.7 -47.6l.6 -1.1 .7 -1M52.7 -50.7l.7 -1 .7 -.9M56.4 -55.3l.9 -.8M77.3 17.4l-.6 -1.5M72.9 6.9l-.7 -1.5 -.7 -1.5M70.8 2.4l-.7 -1.5M69.4 -.6l-.7 -1.4 -.7 -1.5M67.3 -5l-.8 -1.5 -.7 -1.5 -.7 -1.5 -.7 -1.4M63 -13.9l-.8 -1.5 -.7 -1.4 -.7 -1.5 -.7 -1.5 -.7 -1.5 -.7 -1.4 -.6 -1.5 -.7 -1.5 -.7 -1.4 -.6 -1.5 -.7 -1.4M54.8 -31.5l-.7 -1.4 -.6 -1.5M52.9 -35.8l-.6 -1.5 -.5 -1.4M51.2 -40.1l-.5 -1.5 -.6 -1.4M49.6 -44.4l-.5 -1.4 -.5 -1.4 -.4 -1.4M47.7 -50l-.4 -1.4 -.4 -1.4M46.5 -54.2l-.3 -1.3 -.4 -1.4 -.3 -1.3M66 48.9l-.2 -1.5M64.4 39.7l-.3 -1.5M63.4 35.2l-.4 -1.6M62.3 30.6l-.4 -1.6M60.6 24.4l-.4 -1.5M59.3 19.8l-.5 -1.5M57.5 13.6l-.5 -1.5M56.1 9l-.5 -1.6M55.2 5.9l-.5 -1.6M53.9 1.2l-.5 -1.5 -.4 -1.6M51.8 -6.6l-.4 -1.5M51 -9.7l-.4 -1.5M47.6 -26.4l-.2 -1.5M47 -30.8l-.2 -1.5M46.5 -36.6l-.1 -1.4 0 -1.5M46.4 -45l0 -1.3M46.5 -47.7l.2 -1.3 .1 -1.3 .2 -1.3M47.6 -55.3l.3 -1.3M48.2 -57.8l.3 -1.2M8 65l.1 -1.4 .1 -1.4M8.3 60.8l.1 -1.5 .1 -1.4 .1 -1.5M8.7 54.9l.1 -1.4M8.9 52l.1 -1.5M9.2 47.5l.1 -1.5M77.3 -8l-.9 -1.4M-58.2 22l-.4 1.6M-59.4 26.7l-.4 1.5 -.3 1.5M-60.5 31.3l-.4 1.5 -.3 1.5 -.3 1.6M-63.3 45l-.2 1.5M-44.6 61.3l0 1.5M-48.2 -53.4l-.7 1.4 -.7 1.4M-50.4 -49.3l-.7 1.4M-54.2 -42.4l-.8 1.4M-55.9 -39.7l-.8 1.4M-61 -31.3l-.8 1.4 -.9 1.4 -.9 1.4M-66.2 -22.9l-.9 1.4M-68 -20.1l-.9 1.4M-69.8 -17.3l-.9 1.4 -.8 1.4M-75.9 -7.3l-.8 1.4M-48 -38.9l.8 1.1 .8 1 .7 1M-43.1 -31.3l.6 1.2M-41.9 -28.9l.6 1.2M-36.1 44.1l-.1 1.5M-36.4 47.1l-.1 1.5M-36.6 50.1l-.1 1.5 0 1.5 -.1 1.5 -.1 1.5 0 1.5M-37 60.5l0 1.4 0 1.5 0 1.4M-37 66.3l0 1.4M-36.7 72l.1 1.4M-18.1 40.8l0 1.5M-18 43.8l.1 1.5M-17.5 57.2l.1 1.5 0 1.4 .1 1.5 .1 1.4 0 1.4M-17 67.2l.1 1.4 .1 1.4M-16.6 71.4l.1 1.4M-16.2 75.5l.2 1.4 .2 1.3 .2 1.3M10.5 39.2l.4 1.4M11.6 43.5l.3 1.5M13.2 50.8l.2 1.4M14.2 56.5l.3 1.4M14.9 60.7l.2 1.4M15.6 64.9l.2 1.3 .2 1.4M16.5 70.3l.2 1.3 .2 1.4"/><path stroke="#0066ff" d="M51.2 40.6l.6 1.4M52.8 44.7l.4 1.4M53.7 47.5l.5 1.3 .4 1.4M55 51.6l.4 1.3M56.9 58.4l.4 1.3M57.6 61.1l.4 1.3M-76.8 -40.2l1.4 -.2M-72.7 -40.7l1.4 -.1M-64.6 -40.7l1.3 .2M-60.7 -40.1l1.3 .3 1.3 .3M-54.4 -38.3l1.2 .4M-50.8 -36.8l1.1 .6M-48.5 -35.6l1.1 .6M-45.2 -33.5l1 .7M-60.5 -51.4l1 .6 1 .7M-55.7 -47.8l.8 .8M-54 -46.1l.8 .8M-52.4 -44.4l.8 1M-50.8 -42.5l.7 1 .8 1 .6 1.1M-84.9 -19.9l1.2 -.8M-79.8 -22.6l1.3 -.6M-75.8 -24.2l1.3 -.4 1.3 -.5 1.3 -.3M-70.5 -25.8l1.3 -.3 1.3 -.2M-65.2 -26.7l1.3 -.2 1.4 -.1M-59.9 -27l1.4 0M-86.3 5.3l1 -1.1M-81.1 .1l1.1 -1M-76.7 -3.6l1.2 -.9M-69.5 -8.3l1.2 -.7M-63.2 -11.3l1.3 -.5M-55.4 -13.8l1.3 -.3M65 30.2l.7 1.3M59.7 -3.7l1.2 .8M65.6 .4l1.2 .9M71.1 5.3l1.1 1M73.2 7.4l1 1.1M76.1 10.8l1 1.1 .9 1.2 .9 1.2M79.8 15.5l.9 1.3M82.3 19.3l.8 1.3 .8 1.3M64.5 -50l1.2 -.4M66.8 -50.8l1.2 -.4 1.2 -.3M-60.8 62.1l.3 -1.3 .4 -1.3M-57.7 51.5l.4 -1.4 .4 -1.3M-55.9 46l.5 -1.3M-52.1 36.6l.6 -1.3M47.9 -42.1l.5 -1.1M50.1 -46.6l.6 -1M52 -49.7l.7 -1M54.1 -52.6l.8 -.9 .7 -.9M57.3 -56.1l.8 -.8M59 -57.7l.9 -.8 1 -.7M62.8 -60.5l1 -.7M82 31.2l-.4 -1.6M80.1 25l-.5 -1.5M78.5 20.4l-.6 -1.5M76.7 15.9l-.6 -1.5 -.6 -1.5 -.6 -1.5 -.7 -1.5 -.7 -1.5 -.6 -1.5M71.5 3.9l-.7 -1.5M68 -3.5l-.7 -1.5M64.4 -10.9l-.7 -1.5M55.4 -30l-.6 -1.5M51.8 -38.7l-.6 -1.4M48.2 -48.6l-.5 -1.4M46.9 -52.8l-.4 -1.4M45.2 -59.6l-.3 -1.3 -.2 -1.3M44.3 -64.9l-.2 -1.3 -.2 -1.3M43.6 -71.3l0 -1.2 -.1 -1.2 0 -1.3M66.6 55l-.1 -1.5M65.3 44.3l-.3 -1.5M64.7 41.3l-.3 -1.6M63 33.6l-.3 -1.5 -.4 -1.5M61.9 29l-.4 -1.5 -.5 -1.5 -.4 -1.6M59.7 21.3l-.4 -1.5M46.3 -40.9l0 -1.3 0 -1.4M47 -51.6l.2 -1.2 .2 -1.3 .2 -1.2M42.5 -76.3l-1.7 -.5 -1.7 -.5M37.5 -77.8l-1.7 -.6 -1.7 -.5M29.2 -80.4l-1.7 -.5M14.3 -85.1l-1.6 -.5M24.7 -84.6l-1.7 -.4 -1.7 -.4 -1.7 -.3M16.2 -86.5l-1.7 -.3 -1.7 -.4M4.7 87.7l.3 -1.3M5.9 82.6l.2 -1.3M6.8 77.4l.2 -1.3M7.1 74.7l.2 -1.3 .1 -1.4M7.6 70.6l.1 -1.3M8.2 62.2l.1 -1.4M-19.1 -83.2l-1.5 .7M-26.9 -79.8l-1.6 .7M-33.3 -77.1l-1.5 .7 -1.6 .7M-38 -75.1l-1.7 .7 -1.6 .7M-42.9 -73.1l-1.6 .7 -1.6 .7 -1.6 .7M-52.5 -69l-1.6 .7M83.1 2.1l-.8 -1.5M79.8 -3.7l-.8 -1.5M76.4 -9.4l-.9 -1.5M-58.6 23.6l-.4 1.5 -.4 1.6M-60.1 29.7l-.4 1.6M-62.5 40.4l-.3 1.6 -.2 1.5 -.3 1.5M-64.2 52.6l-.1 1.6 -.1 1.5M-44.5 65.7l.1 1.4M-44.3 68.5l.1 1.5 .2 1.4 .1 1.4M75.8 32l-.4 -1.5M40.1 -74.8l-1.5 -.8M37.1 -76.4l-1.5 -.9M26.9 -82.2l-1.4 -.8M-40.6 -70.6l-.5 1.3M-43.7 -62.7l-.6 1.3 -.6 1.3M-45.5 -58.7l-.7 1.3 -.6 1.3 -.7 1.4M-49.6 -50.6l-.8 1.3M-51.1 -47.9l-.8 1.4M-52.6 -45.2l-.8 1.4 -.8 1.4M-55 -41l-.9 1.3M-56.7 -38.3l-.8 1.4 -.9 1.4 -.8 1.4 -.9 1.4 -.9 1.4M-65.3 -24.3l-.9 1.4M-67.1 -21.5l-.9 1.4M-72.4 -13l-.9 1.4 -.9 1.4M-76.7 -5.9l-.9 1.4 -.8 1.5M-79.2 -1.6l-.9 1.5 -.8 1.4M-83.2 5.7l-.8 1.5M-48.7 -39.8l.7 .9M-35.9 41l-.1 1.6M-36.5 48.6l-.1 1.5M-37 59l0 1.5M-37 67.7l.1 1.4M-36.6 73.4l.2 1.4 .2 1.4M-17.6 54.3l.1 1.5 0 1.4M-16.8 70l.2 1.4M-16.5 72.8l.1 1.4 .2 1.3M-15.6 79.5l.3 1.3 .2 1.3M-13.8 87.2l0 0M14.7 59.3l.2 1.4M15.1 62.1l.3 1.4 .2 1.4M16 67.6l.2 1.4 .3 1.3M16.9 73l.2 1.3M17.9 78.1l.2 1.3"/><path stroke="#0080ff" d="M55.8 54.3l.4 1.4 .4 1.3 .3 1.4M58 62.4l.3 1.3M-78.2 -39.9l1.4 -.3M-75.4 -40.4l1.4 -.2 1.3 -.1M-71.3 -40.8l1.4 -.1 1.3 0M-63.3 -40.5l1.3 .2M-66.9 -54.7l1.2 .4M-62.5 -52.7l1 .6 1 .7M-57.6 -49.4l1 .8 .9 .8M-53.2 -45.3l.8 .9M-86.2 -19.2l1.3 -.7M-83.7 -20.7l1.3 -.6 1.3 -.7M-78.5 -23.2l1.3 -.5M-71.9 -25.4l1.4 -.4M-85.3 4.2l1 -1 1.1 -1.1 1 -1M-80 -.9l1.1 -.9 1.1 -.9M-72 -6.9l1.3 -.7M63.3 -1.3l1.2 .8 1.1 .9M75.2 9.6l.9 1.2M78.9 14.3l.9 1.2M80.7 16.8l.8 1.2 .8 1.3M83.9 21.9l.8 1.3M62.3 -49l1.1 -.5M65.7 -50.4l1.1 -.4M69.2 -51.5l1.2 -.3M-60.1 59.5l.3 -1.3 .4 -1.4 .4 -1.3 .4 -1.3 .4 -1.4M-56.9 48.8l.5 -1.4 .5 -1.4M-55.4 44.7l.5 -1.4 .5 -1.3M-53.3 39.3l.6 -1.3M55.6 -54.4l.8 -.9M60.9 -59.2l.9 -.7M63.8 -61.2l0 0M79.1 22l-.6 -1.6M77.9 18.9l-.6 -1.5M70.1 .9l-.7 -1.5M63.7 -12.4l-.7 -1.5M50.1 -43l-.5 -1.4M44.5 -63.6l-.2 -1.3M43.9 -67.5l-.1 -1.2 -.1 -1.3M43.5 -75l.1 -1.2M66.7 56.6l-.1 -1.6M66.5 53.5l-.1 -1.5M66.2 50.4l-.2 -1.5M65.8 47.4l-.2 -1.6 -.3 -1.5M65 42.8l-.3 -1.5M63.8 36.7l-.4 -1.5M47.9 -56.6l.3 -1.2M27.5 -80.9l-1.7 -.6 -1.6 -.5 -1.7 -.5 -1.6 -.5 -1.7 -.5M17.6 -84.1l-1.6 -.5 -1.7 -.5M12.7 -85.6l-1.6 -.6M7.9 -87.2l-1.6 -.6 -1.6 -.5M26.4 -84.3l-1.7 -.3M17.9 -86.1l-1.7 -.4M12.8 -87.2l-1.6 -.4M5 86.4l.3 -1.2 .3 -1.3M6.1 81.3l.3 -1.3 .2 -1.3M7 76.1l.1 -1.4M7.4 72l.2 -1.4M7.7 69.3l.1 -1.4M-9.9 -87.3l-1.6 .7M-13 -85.9l-1.5 .7M-16 -84.5l-1.6 .7 -1.5 .6M-20.6 -82.5l-1.6 .7 -1.6 .7 -1.5 .6 -1.6 .7M-30.1 -78.4l-1.6 .6 -1.6 .7M-41.3 -73.7l-1.6 .6M-47.7 -71l-1.6 .6M-50.9 -69.7l-1.6 .7M87.5 11l-.7 -1.5 -.7 -1.5 -.7 -1.5 -.8 -1.5M81.5 -.8l-.9 -1.5 -.8 -1.4M79 -5.2l-.9 -1.4M75.5 -10.9l-.9 -1.4 -.8 -1.4 -.9 -1.4M-61.5 35.9l-.4 1.5 -.3 1.5M-63.5 46.5l-.2 1.6 -.2 1.5M-64.1 51.1l-.1 1.5M-64.4 55.7l-.1 1.5M-64.5 58.7l0 1.6M-44.6 62.8l0 1.4M-43.6 74.2l.2 1.4 .3 1.4M77.8 41.4l-.3 -1.6M77.2 38.2l-.3 -1.5 -.3 -1.6 -.4 -1.5 -.4 -1.6M58 -64.8l-1.5 -.8M55 -66.4l-1.5 -.9 -1.5 -.8M49 -69.8l-1.5 -.8 -1.5 -.9 -1.5 -.8M43 -73.1l-1.4 -.9 -1.5 -.8M38.6 -75.6l-1.5 -.8M25.5 -83l-1.4 -.8 -1.4 -.9M-39.8 -73.1l-.4 1.3 -.4 1.2M-41.1 -69.3l-.5 1.3 -.5 1.3M-43.1 -64l-.6 1.3M-44.9 -60.1l-.6 1.4M-47.5 -54.7l-.7 1.3M-51.9 -46.5l-.7 1.3M-63.6 -27.1l-.9 1.4 -.8 1.4M-68.9 -18.7l-.9 1.4M-71.5 -14.5l-.9 1.5M-74.2 -10.2l-.8 1.4 -.9 1.5M-78.4 -3l-.8 1.4M-80.9 1.3l-.8 1.5M-37 64.8l0 1.5M-36.9 69.1l.1 1.5 .1 1.4M-35.8 78.9l.3 1.4M-14.8 83.4l.3 1.3M-14.1 86l.3 1.2M17.1 74.3l.3 1.3M18.1 79.4l.3 1.3M19.3 84.4l.3 1.2"/><path stroke="#0099ff" d="M57.3 59.7l.3 1.4M58.3 63.7l.3 1.4M-68.6 -40.9l1.4 .1 1.3 0 1.3 .1M-68 -55.2l1.1 .5M-63.6 -53.2l1.1 .5M-58.5 -50.1l.9 .7M-81.1 -22l1.3 -.6M-77.8 -2.7l1.1 -.9M-75.5 -4.5l1.2 -.8M-53.8 58.1l.3 -1.4M-50.6 47.1l.4 -1.4M67 34.2l.6 1.4M63.4 -49.5l1.1 -.5M70.4 -51.8l0 0M-61.2 63.5l.4 -1.4M58.1 -56.9l.9 -.8M61.8 -59.9l1 -.6M81.6 29.6l-.5 -1.5M79.6 23.5l-.5 -1.5M45.5 -58.2l-.3 -1.4M44.7 -62.2l-.2 -1.4M43.6 -76.2l0 0M66.4 52l-.2 -1.6M64.1 38.2l-.3 -1.5M44.1 -75.8l-1.6 -.5M34.1 -78.9l-1.6 -.5 -1.7 -.5 -1.6 -.5M11.1 -86.2l-1.6 -.5 -1.6 -.5M9.5 -87.9l0 0M5.6 83.9l.3 -1.3M6.6 78.7l.2 -1.3M7.8 67.9l.1 -1.4 .1 -1.5M-8.5 -88l-1.4 .7M-11.5 -86.6l-1.5 .7M-14.5 -85.2l-1.5 .7M-36.4 -75.7l-1.6 .6M-49.3 -70.4l-1.6 .7M-54.1 -68.3l-1.6 .6 -1.6 .7M84.6 5l-.8 -1.4M82.3 .6l-.8 -1.4M78.1 -6.6l-.8 -1.4M-63.9 49.6l-.2 1.5M-64.5 57.2l0 1.5M-44.6 64.2l.1 1.5M77.5 39.8l-.3 -1.6M59.5 -63.9l-1.5 -.9M52 -68.1l-1.5 -.9 -1.5 -.8M44.5 -72.3l-1.5 -.8M34.2 -78.1l-1.5 -.8M31.3 -79.7l-1.5 -.8M21.3 -85.5l0 0M-38.3 -78.2l-.4 1.3M-39 -75.7l-.4 1.3 -.4 1.3M-42.1 -66.7l-.5 1.3 -.5 1.4M-81.7 2.8l-.7 1.4M-15.1 82.1l.3 1.3M-14.5 84.7l.4 1.3M17.4 75.6l.2 1.3 .3 1.2M18.4 80.7l.3 1.2 .3 1.2M19.6 85.6l0 0"/><path stroke="#00b2ff" d="M55.4 52.9l.4 1.4M-64.7 -53.8l1.1 .6M-82.2 1.1l1.1 -1M-58.2 52.8l.5 -1.3M80.6 26.6l-.5 -1.6M39.1 -77.3l-1.6 -.5M19.2 -83.5l-1.6 -.6M11.2 -87.6l-1.7 -.3M-28.5 -79.1l-1.6 .7M-57.3 -67l0 0M-62.2 38.9l-.3 1.5M-44.4 67.1l.1 1.4M-43.9 72.8l.3 1.4M-43.1 77l0 0M62.5 -62.2l-1.5 -.8 -1.5 -.9M56.5 -65.6l-1.5 -.8M35.6 -77.3l-1.4 -.8M28.4 -81.4l-1.5 -.8M-38.7 -76.9l-.3 1.2M-82.4 4.2l-.8 1.5M-84 7.2l-.7 1.5M-36.2 76.2l.2 1.4 .2 1.3M19 83.1l.3 1.3"/><path stroke="#00ccff" d="M-65.7 -54.3l1 .5M-87.3 6.5l1 -1.2M81.1 28.1l-.5 -1.5M4.7 -88.3l0 0M83.8 3.6l-.7 -1.5M32.7 -78.9l-1.4 -.8"/><path stroke="#00e6ff" d="M43.7 -70l-.1 -1.3M22.7 -84.7l-1.4 -.8M-38 -79.4l-.3 1.2M-35.5 80.3l0 0"/><path stroke="#00ffff" d="M19.6 -85.7l-1.7 -.4M29.8 -80.5l-1.4 -.9"/><path stroke="#0000ff" d="M-8.4 -3.7l1 1.1M1 8l.9 1.3"/><path stroke="#001aff" d="M-40.8 -22.7l1.2 .6M-36.1 -20.1l1.1 .7M-31.7 -17l1.1 .8 1 .9M-28.6 -14.3l1 .9 1 1M-25.6 -11.4l.9 1 .9 1.1 .9 1.1 .9 1.1M-21.1 -5.9l.8 1.2 .9 1.2 .8 1.2 .7 1.2 .8 1.3 .7 1.3 .7 1.3 .7 1.3 .7 1.3M-13.6 6.8l.6 1.3 .6 1.4 .6 1.4M-11.3 12.3l.6 1.5 .5 1.4 .5 1.4 .5 1.5 .4 1.5 .5 1.4 .4 1.5 .4 1.5 .4 1.5 .4 1.5 .3 1.5 .3 1.5 .3 1.5 .3 1.5 .3 1.5 .3 1.5 .3 1.5 .2 1.6M-16.5 -5.9l1.2 .8 1.1 .8 1.1 .9M-12 -2.5l1.1 .9M-9.8 -.6l1 1 1 1 1.1 1M-5.8 3.5l1 1.1 1 1.1 .9 1.1 .9 1.2 .9 1.2M.6 11.6l.8 1.2 .9 1.3M3 15.4l.8 1.2 .7 1.3 .8 1.4 .7 1.3 .6 1.3 .7 1.4 .6 1.3M9.1 27.4l.6 1.4M10.3 30.2l.5 1.4M11.3 33l.5 1.4M12.3 35.8l.5 1.5M-30.4 -13.7l.9 1.1 .8 1.1M-26.2 -8.1l.8 1.2 .7 1.2M-23.9 -4.4l.7 1.2 .7 1.3M-20.6 2l.6 1.4 .6 1.3M-24.2 -9.7l1 1M-16.6 -1.3l.8 1.2M-14.9 1.1l.8 1.2M-12.5 4.8l.7 1.3 .8 1.3 .7 1.3 .7 1.3 .6 1.3M-8.3 12.7l.6 1.3M-7.1 15.4l.6 1.4M-5.4 19.6l.6 1.5 .5 1.4M-31.3 8.4l1.1 -.9 1.1 -.9M-27.9 5.7l1.2 -.8 1.2 -.9M-24.3 3.3l1.2 -.8 1.3 -.7 1.3 -.7 1.3 -.7 1.3 -.6 1.3 -.6M-15.3 -1.4l1.3 -.5 1.4 -.5 1.3 -.4 1.4 -.4 1.4 -.4 1.4 -.4 1.4 -.3 1.4 -.2 1.4 -.3 1.4 -.2 1.4 -.1 1.4 -.1 1.5 -.1 1.4 -.1 1.4 0 1.4 .1 1.4 0M9.9 -5.2l1.4 .2 1.4 .2M14.1 -4.6l1.4 .2 1.4 .3 1.4 .4 1.4 .4M21 -2.9l1.4 .4 1.3 .5M25.1 -1.5l1.3 .5M29 .2l1.3 .7 1.3 .7 1.2 .7M34 3l1.3 .8M-48.2 -18.8l1.4 -.1 1.4 -.1M-44 -19l1.4 0 1.4 .1 1.4 .1 1.4 .1 1.3 .2 1.4 .2 1.4 .3M-33 -17.7l1.4 .4 1.3 .4 1.4 .4 1.3 .4 1.3 .5 1.3 .6 1.3 .6 1.3 .6 1.2 .6 1.3 .7 1.2 .8 1.2 .7 1.2 .8 1.2 .8 1.1 .9 1.2 .9 1.1 .9 1.1 1 1.1 1 1.1 1M-7.4 -2.6l1 1 1 1.1 1 1.2 1 1.1 .9 1.2 .9 1.2 .9 1.2 .9 1.3 .8 1.3M1.9 9.3l.8 1.3 .7 1.3 .8 1.3 .7 1.4 .7 1.4 .7 1.4 .6 1.4 .7 1.4 .6 1.4 .6 1.5 .5 1.4 .6 1.5 .5 1.4 .5 1.5 .5 1.5 .4 1.5 .4 1.5 .5 1.5 .3 1.4 .4 1.5 .4 1.5M-38 -9.4l1.4 -.4M-52.4 5.2l1.2 -.9M-46.5 1l1.2 -.8M-44 -.5l1.3 -.7M-41.5 -1.8l1.3 -.6M-38.9 -3l1.3 -.6 1.4 -.5 1.3 -.5 1.4 -.4M-32.2 -5.4l1.4 -.4 1.4 -.3 1.4 -.3 1.4 -.3 1.4 -.2 1.4 -.2 1.4 -.1 1.4 -.1 1.4 -.1 1.4 0 1.4 0 1.5 0 1.4 .1 1.4 .1 1.4 .2 1.4 .2 1.4 .2 1.4 .3 1.4 .3 1.4 .4 1.4 .4 1.3 .4 1.4 .5 1.4 .5 1.3 .5 1.3 .6 1.3 .6 1.3 .6 1.3 .7 1.3 .7 1.2 .8 1.3 .7 1.2 .9 1.2 .8 1.2 .9 1.2 .8 1.1 1 1.1 .9 1.1 1 1.1 1 1.1 1 1 1.1 1.1 1.1 1 1.1 1 1.1 .9 1.1 .9 1.2 1 1.2 .9 1.2M11.6 27.7l.3 -1.5 .3 -1.5 .3 -1.5 .3 -1.5 .4 -1.5M14.3 15.7l.4 -1.5 .5 -1.5 .4 -1.4 .5 -1.5M16.6 8.4l.5 -1.4 .6 -1.5 .6 -1.3M18.8 2.8l.7 -1.4M20.7 -1.3l.7 -1.3 .7 -1.3M22.8 -5.1l.8 -1.3M26.7 -11.1l.9 -1.2M-25.5 38.2l.5 -1.5M-24.5 35.3l.5 -1.5"/><path stroke="#0033ff" d="M-18.9 45.2l-.1 1.6 0 1.5 0 1.5M-19 51.3l-.1 1.6M-19.2 58.8l0 1.5M-38.3 13.2l0 1.5 -.1 1.6 -.1 1.6M-38.6 19.4l0 1.6 -.1 1.6M-39 25.7l-.1 1.5M-39.2 28.8l-.1 1.5 -.2 1.6 -.1 1.5M-39.9 36.5l-.1 1.6 -.1 1.5M-49.4 -25.8l1.2 .3M-46.9 -25.1l1.3 .4 1.2 .4M-43.2 -23.8l1.2 .5 1.2 .6M-39.6 -22.1l1.2 .6 1.1 .7 1.2 .7M-35 -19.4l1.1 .7 1.1 .8 1.1 .9M-29.6 -15.3l1 1M-26.6 -12.4l1 1M-22 -7.1l.9 1.2M-14.3 5.4l.7 1.4M-11.8 10.9l.5 1.4M-4.4 39.1l.2 1.5 .2 1.5 .2 1.5 .2 1.5 .2 1.5 .2 1.4 .2 1.5M-2.7 52.5l.1 1.5 .2 1.4M-2.3 56.9l.1 1.4M-1.9 61.2l.1 1.4M-18.8 -7.5l1.1 .8 1.2 .8M-13.1 -3.4l1.1 .9M-10.9 -1.6l1.1 1M-6.7 2.4l.9 1.1M-1.1 9.2l.9 1.2 .8 1.2M2.3 14.1l.7 1.3M7.9 24.6l.6 1.4 .6 1.4M9.7 28.8l.6 1.4M10.8 31.6l.5 1.4M11.8 34.4l.5 1.4M12.8 37.3l.4 1.4 .4 1.4 .5 1.4 .4 1.5 .3 1.4 .4 1.4M15.6 47.2l.3 1.4M17.2 54.3l.3 1.4 .3 1.4M18.3 59.9l.3 1.4M-51.8 -28.5l1.2 .5M-49.4 -27.6l1.2 .5 1.2 .5 1.1 .6 1.2 .6 1.1 .6 1.1 .7 1.1 .7 1.1 .7 1.1 .8 1 .8 1.1 .8 1 .9 1 .8 .9 1 1 .9 .9 1 1 1 .9 1M-28.7 -11.5l.9 1.1 .8 1.2 .8 1.1M-24.7 -5.7l.8 1.3M-22.5 -1.9l.6 1.3 .7 1.3 .6 1.3M-55.6 -22.8l1.4 0M-51.6 -22.6l1.3 .2M-49 -22.2l1.3 .2 1.3 .3M-45.2 -21.4l1.3 .4 1.3 .3 1.2 .5 1.3 .4 1.2 .5 1.2 .5M-36.5 -18.2l1.2 .6 1.2 .7 1.1 .6 1.2 .7 1.1 .8 1.1 .8 1.1 .8 1.1 .8 1.1 .9 1.1 .9 1 .9M-23.2 -8.7l1 .9 1 1.1 .9 1 1 1.1 .9 1.1 .9 1.1 .9 1.1M-15.8 -.1l.9 1.2M-14.1 2.3l.8 1.2 .8 1.3M-9 11.3l.7 1.4M-7.7 14l.6 1.4M-6.5 16.8l.6 1.4 .5 1.4M-29.1 6.6l1.2 -.9M-25.5 4l1.2 -.7M-16.6 -.8l1.3 -.6M8.4 -5.3l1.5 .1M12.7 -4.8l1.4 .2M19.7 -3.3l1.3 .4M23.7 -2l1.4 .5M26.4 -1l1.3 .6 1.3 .6M32.8 2.3l1.2 .7M35.3 3.8l1.2 .8 1.2 .8 1.1 .9 1.2 .9 1.1 .9 1.1 .9 1.1 1M44.4 11l1 1 1 1.1 1 1 1 1.1M52.2 19.7l.8 1.2M53.9 22.1l.8 1.2M-71 -11l1.3 -.8M-61.9 -15.6l1.4 -.5 1.3 -.4 1.4 -.5M-53.7 -18l1.4 -.3 1.4 -.2 1.3 -.2 1.4 -.1M-45.4 -19l1.4 0M-34.3 -18l1.3 .3M-64.2 5.9l1.1 -1 1.1 -1M-55 -1.6l1.2 -.9M-52.6 -3.2l1.3 -.8 1.3 -.7 1.3 -.7 1.3 -.6 1.3 -.6 1.3 -.6 1.4 -.5 1.3 -.5 1.4 -.4 1.3 -.5 1.4 -.3M-67.9 22.8l.8 -1.2M-64.5 17.9l.9 -1.2 .9 -1.1M-60.8 13.3l1 -1.1 1 -1.1 1 -1 1 -1 1.1 -1 1.1 -1 1.1 -1M-51.2 4.3l1.1 -.9M-48.9 2.6l1.2 -.8 1.2 -.8M-45.3 .2l1.3 -.7M-42.7 -1.2l1.2 -.6M-40.2 -2.4l1.3 -.6M-33.5 -5l1.3 -.4M13.2 20.2l.3 -1.5 .4 -1.5 .4 -1.5M16.1 9.8l.5 -1.4M18.3 4.2l.5 -1.4M19.5 1.4l.6 -1.3 .6 -1.4M22.1 -3.9l.7 -1.2M23.6 -6.4l.7 -1.2 .8 -1.2 .8 -1.2 .8 -1.1M27.6 -12.3l.9 -1.1 .9 -1 .9 -1.1 .9 -1 .9 -1 1 -1 1 -.9 1 -.9 1 -.8 1.1 -.9 1 -.8 1.1 -.7 1.1 -.8 1.1 -.7 1.2 -.7 1.1 -.6 1.2 -.6M46.2 -27.4l1.1 -.6M51 -29.3l1.2 -.4M-30 57.1l.3 -1.5M-28.5 49.8l.3 -1.4M-27.9 46.9l.4 -1.4 .4 -1.5 .3 -1.5 .5 -1.4 .4 -1.5 .4 -1.4M-25 36.7l.5 -1.4M55.8 28.4l-.3 -1.5 -.4 -1.6 -.3 -1.5M54 20.7l-.3 -1.6M53 16l-.4 -1.6 -.4 -1.5 -.3 -1.6 -.4 -1.5M51.2 8.2l-.3 -1.6 -.4 -1.5M50.2 3.5l-.3 -1.6M49.6 .4l-.4 -1.6 -.2 -1.5 -.3 -1.6 -.3 -1.5 -.3 -1.6 -.2 -1.5M47.6 -10.5l-.2 -1.5 -.2 -1.6 -.2 -1.5 -.2 -1.5 -.1 -1.5 -.2 -1.5 -.1 -1.5 -.1 -1.5 -.1 -1.5M46.1 -25.6l0 -1.4M46 -28.5l0 -1.4 0 -1.5 0 -1.4M46.1 -34.2l.1 -1.4 .1 -1.4M46.4 -38.3l.1 -1.4M46.7 -41l.2 -1.3M64.6 .1l-.6 -1.5M60.4 -10.5l-.6 -1.5M58.1 -16.5l-.6 -1.5M53.8 -28.4l-.5 -1.4M52.4 -32.8l-.5 -1.4M50.3 -40l-.4 -1.4M68.6 -2.9l-.7 -1.5M58.3 -23.5l-.7 -1.5M56.2 -27.9l-.6 -1.5M54.2 -32.3l-.6 -1.4M49.4 -43.8l-.5 -1.4"/><path stroke="#004cff" d="M-19 49.8l0 1.5M-19.1 52.9l0 1.5 0 1.5 -.1 1.4 0 1.5M-19.2 60.3l0 1.5 -.1 1.4M-19.3 64.7l0 1.4 .1 1.5M-19.1 71.8l0 1.4M-54 -54.8l-1.2 1.2 -1.2 1.1 -1.3 1.2 -1.2 1.2M-45.1 -61l-.6 1.3M-49.3 -53l-.8 1.3M-51.6 -49l-.8 1.4M-53.2 -46.3l-.8 1.4M-54.9 -43.6l-.8 1.4M-56.6 -40.8l-.8 1.3M-60 -35.3l-.9 1.3 -.9 1.4M-62.7 -31.2l-.9 1.4 -.9 1.4M-70.9 -18.7l-.9 1.4M-72.7 -15.9l-.9 1.4M-38.2 11.6l-.1 1.6M-38.5 17.9l-.1 1.5M-38.7 22.6l-.2 1.5 -.1 1.6M-39.1 27.2l-.1 1.6M-39.6 33.4l-.1 1.6 -.2 1.5M-40.1 39.6l-.2 1.5 -.1 1.5 -.1 1.6 -.1 1.5M-40.8 47.2l-.1 1.5 -.1 1.5 -.1 1.5M-41.3 56.1l0 1.5M-44.4 -24.3l1.2 .5M-3 49.5l.1 1.5 .2 1.5M-2.4 55.4l.1 1.5M-2.2 58.3l.2 1.5 .1 1.4M-1.8 62.6l.2 1.4 .1 1.4 .1 1.4 .2 1.4M-.9 71l.1 1.4M15.2 45.8l.4 1.4M15.9 48.6l.3 1.5 .4 1.4 .3 1.4 .3 1.4M18 58.5l.3 1.4M19.1 64l.2 1.4 .3 1.3M20.6 72l.3 1.3M71.4 45.1l.5 1.4M-44.2 -64.7l-.2 1.3M-45 -60.7l-.3 1.3M-45.7 -58l-.3 1.3 -.4 1.4M-47.7 -51.2l-.4 1.4M-48.6 -48.4l-.5 1.4 -.5 1.4M-50.2 -44.2l-.5 1.4M-51.9 -39.9l-.6 1.4M-53.7 -35.6l-.6 1.4M-55 -32.8l-.6 1.5 -.7 1.4 -.7 1.5 -.7 1.4 -.7 1.5 -.7 1.5 -.7 1.4M-69.7 -30.3l1.3 -.1M-65.7 -30.6l1.3 0M-63.1 -30.5l1.3 .1M-60.6 -30.3l1.3 .1M-58 -30l1.3 .2 1.2 .3 1.3 .3 1.2 .4M-50.6 -28l1.2 .4M-66.1 -21.8l1.3 -.2 1.3 -.3M-62.2 -22.5l1.4 -.1M-58.2 -22.8l1.3 0 1.3 0M-54.2 -22.8l1.3 .1 1.3 .1M-50.3 -22.4l1.3 .2M-46.4 -21.7l1.2 .3M-37.7 -18.8l1.2 .6M43.3 10l1.1 1M48.4 15.2l1 1.1 .9 1.1 1 1.2 .9 1.1M53 20.9l.9 1.2M54.7 23.3l.8 1.3 .8 1.2 .8 1.3 .7 1.2 .8 1.3M59.3 30.9l.7 1.3M61.3 34.8l.6 1.3M62.5 37.5l.6 1.3M-81.7 -2.6l1.2 -1.1M-79.4 -4.7l1.1 -1 1.2 -1M-74.7 -8.5l1.2 -.9M-69.7 -11.8l1.3 -.7 1.2 -.7 1.3 -.6 1.4 -.7 1.3 -.5 1.3 -.6M-57.8 -17l1.3 -.3 1.4 -.4 1.4 -.3M49.7 -62.4l.4 -1.1M-77 22.9l.8 -1.3M-74.6 19l.8 -1.3M-72 15.1l.9 -1.2M-69.2 11.5l.9 -1.1 1 -1.2 1 -1.1 1.1 -1.1 1 -1.1M-62 3.9l1.1 -1 1.1 -1 1.2 -.9 1.2 -.9 1.1 -.9 1.3 -.8M-53.8 -2.5l1.2 -.7M-73.6 33.2l.6 -1.3M-71.6 29.2l.7 -1.3 .7 -1.3M-68.7 24.1l.8 -1.3M-67.1 21.6l.8 -1.3M-65.4 19.1l.9 -1.2M-61.8 14.4l1 -1.1M-53.5 6.1l1.1 -.9M-50.1 3.4l1.2 -.8M45 -26.9l1.2 -.5M47.3 -28l1.3 -.4 1.2 -.5 1.2 -.4M52.2 -29.7l1.3 -.3 1.3 -.3M56 -30.6l1.3 -.2 1.3 -.2 1.3 -.1M61.2 -31.2l1.3 -.1 1.3 0 1.4 0 1.3 .1M67.8 -31.1l1.4 .1M-31.8 68.3l.2 -1.3M-30.5 59.9l.3 -1.4M-29.7 55.6l.3 -1.4M-28.2 48.4l.3 -1.5M69.3 -20.7l-.9 -1.4M63 -30.5l-.9 -1.4M59.5 -36l-.9 -1.4M57.8 -38.8l-.9 -1.3 -.8 -1.4M52.8 -47l-.8 -1.3M51.2 -49.7l-.8 -1.3 -.7 -1.4M48.9 -53.7l-.7 -1.4M46.1 -59.1l-.6 -1.3M58.6 42.2l-.3 -1.6M58 39.1l-.3 -1.5M57.4 36.1l-.3 -1.6M56.8 33l-.3 -1.5 -.4 -1.6M54.4 22.2l-.4 -1.5M53.7 19.1l-.4 -1.5 -.3 -1.6M51.5 9.8l-.3 -1.6M50.5 5.1l-.3 -1.6M49.9 1.9l-.3 -1.5M47.9 -8.9l-.3 -1.6M46.2 -24.1l-.1 -1.5M46.1 -27l-.1 -1.5M46 -32.8l.1 -1.4M46.3 -37l.1 -1.3M46.5 -39.7l.2 -1.3M46.9 -42.3l.2 -1.3 .2 -1.3 .3 -1.3 .3 -1.3M48.2 -48.7l.3 -1.2 .4 -1.2M50.1 -54.6l.5 -1.1M52.2 -59l.5 -1M71 16.7l-.5 -1.5M69.9 13.7l-.5 -1.5 -.6 -1.5 -.6 -1.5M67.6 7.7l-.6 -1.6 -.6 -1.5M65.8 3.1l-.6 -1.5 -.6 -1.5M63.4 -2.9l-.6 -1.5M62.2 -5.9l-.6 -1.5 -.6 -1.5 -.6 -1.6M59.8 -12l-.6 -1.5 -.5 -1.5 -.6 -1.5M57.5 -18l-.6 -1.5 -.5 -1.4 -.6 -1.5 -.5 -1.5 -.5 -1.5 -.5 -1.5 -.5 -1.5M53.3 -29.8l-.5 -1.5 -.4 -1.5M51.9 -34.2l-.4 -1.5 -.4 -1.4 -.4 -1.5 -.4 -1.4M49.9 -41.4l-.3 -1.4 -.4 -1.4 -.3 -1.4M48.4 -48.4l-.3 -1.4 -.2 -1.4M47.7 -52.5l-.2 -1.4M47.3 -55.2l-.1 -1.4M47.1 -57.9l-.1 -1.3M46.9 -60.5l0 -1.3M74.3 9l-.7 -1.5M72.9 6l-.7 -1.5 -.7 -1.5M70.8 1.6l-.7 -1.5 -.8 -1.5 -.7 -1.5M67.9 -4.4l-.8 -1.4 -.7 -1.5 -.8 -1.5M64.2 -11.8l-.8 -1.4 -.7 -1.5 -.8 -1.5 -.7 -1.4 -.7 -1.5 -.7 -1.5M59 -22l-.7 -1.5M57.6 -25l-.7 -1.4 -.7 -1.5M55.6 -29.4l-.7 -1.4 -.7 -1.5M52.9 -35.2l-.6 -1.4 -.6 -1.4 -.6 -1.5 -.6 -1.4 -.5 -1.4 -.6 -1.5M79.8 -12.8l-1 -1.4M75.9 -18.3l-1 -1.4M72.9 -22.4l-1 -1.3M70.9 -25.1l-1 -1.3 -1.1 -1.4 -1 -1.3M66.8 -30.5l-1 -1.3 -1 -1.3M61.8 -37.1l-1 -1.4 -1 -1.3 -1 -1.3M57.8 -42.4l-1 -1.4 -.9 -1.3 -1 -1.3M53.9 -47.7l-.9 -1.3M52.1 -50.3l-1 -1.3 -.9 -1.3 -.9 -1.4 -.9 -1.3 -.8 -1.3 -.9 -1.3M45 -60.7l-.8 -1.3M41.8 -65.9l-.7 -1.3M40.4 -68.4l-.8 -1.3 -.7 -1.3"/><path stroke="#0066ff" d="M-19.3 63.2l0 1.5M-19.2 67.6l0 1.4 0 1.4M-19.1 73.2l.1 1.4 .1 1.4M-18.7 78.7l.2 1.4M-18.3 81.4l.2 1.4M-28.2 -82.5l-.9 1.1 -1 1.1M-36 -73.4l-1.1 1.2 -1 1.1M-43.6 -65.3l-1.1 1.2M-47 -61.8l-1.1 1.2 -1.2 1.1 -1.2 1.2 -1.2 1.2 -1.2 1.1M-61.3 -47.7l-1.2 1.1M-63.7 -45.4l-1.3 1.2 -1.2 1.2M-69.8 -39.4l-1.3 1.2M-78.3 -30.9l-1.2 1.2M-41 -70.1l-.5 1.2M-42 -67.6l-.6 1.3M-43.2 -65l-.6 1.3 -.6 1.4M-45.7 -59.7l-.7 1.3M-47.8 -55.7l-.8 1.3 -.7 1.4M-50.1 -51.7l-.7 1.4 -.8 1.3M-55.7 -42.2l-.9 1.4M-57.4 -39.5l-.9 1.4 -.9 1.4 -.8 1.4M-61.8 -32.6l-.9 1.4M-64.5 -28.4l-.9 1.4 -.9 1.3 -1 1.4M-68.2 -22.9l-.9 1.4 -.9 1.4 -.9 1.4M-71.8 -17.3l-.9 1.4M-73.6 -14.5l-.9 1.4 -.9 1.5 -.8 1.4 -.9 1.4 -.9 1.4M-78.9 -6l-.8 1.5 -.8 1.4 -.9 1.5M-83 1.3l-.8 1.4M-40.6 45.7l-.2 1.5M-41.1 51.7l0 1.5 -.1 1.4M-41.3 59l-.1 1.5M-41.4 62l.1 1.4M-41.3 64.9l.1 1.4M-41.1 69.2l.1 1.4 .2 1.4M-48.2 -25.5l1.3 .4M-1.2 68.2l.1 1.4 .2 1.4M-.8 72.4l.2 1.3M-.4 75l.2 1.4 .2 1.3 .2 1.3M.6 81.6l.3 1.3 .3 1.2M1.5 85.4l.3 1.2M17.8 57.1l.2 1.4M18.6 61.3l.2 1.3 .3 1.4M19.6 66.7l.2 1.3 .3 1.4 .2 1.3 .3 1.3M21.1 74.6l.3 1.3 .3 1.2 .3 1.3M22.6 80.8l.3 1.3M68.8 38.3l.5 1.3M69.9 41l.5 1.4M71.9 46.5l.4 1.4M72.8 49.3l0 0M-43.2 -72.4l-.1 1.3M-44 -66l-.2 1.3M-44.4 -63.4l-.3 1.4M-46.4 -55.3l-.4 1.3 -.4 1.4 -.5 1.4M-48.1 -49.8l-.5 1.4M-49.6 -45.6l-.6 1.4M-50.7 -42.8l-.6 1.4 -.6 1.5M-52.5 -38.5l-.6 1.4 -.6 1.5M-54.3 -34.2l-.7 1.4M-78.9 -28.4l1.3 -.4M-67 -30.5l1.3 -.1M-59.3 -30.2l1.3 .2M-53 -28.8l1.2 .3M-77.9 -17.7l1.3 -.6M-74 -19.4l1.3 -.5 1.3 -.4 1.3 -.5 1.3 -.3M-67.5 -21.5l1.4 -.3M-63.5 -22.3l1.3 -.2M-60.8 -22.6l1.3 -.1 1.3 -.1M60 32.2l.6 1.3 .7 1.3M61.9 36.1l.6 1.4M63.1 38.8l.6 1.3M64.8 42.8l.5 1.4 .5 1.3 .5 1.4 .5 1.3M67.7 50.9l.4 1.4 .4 1.3M-87.9 4.3l1 -1.2M-85.9 1.9l1 -1.2M-82.8 -1.5l1.1 -1.1M-80.5 -3.7l1.1 -1M-77.1 -6.7l1.2 -.9 1.2 -.9M-73.5 -9.4l1.3 -.8 1.2 -.8M48.5 -59l.4 -1.1M49.3 -61.3l.4 -1.1M51.6 -66.8l.5 -1M52.7 -68.8l.6 -1M-81.1 31.2l.6 -1.4M-77.7 24.3l.7 -1.4M-76.2 21.6l.8 -1.3 .8 -1.3M-72.9 16.4l.9 -1.3M-71.1 13.9l.9 -1.2 1 -1.2M-75.5 37.3l.6 -1.4M-69.5 25.3l.8 -1.2M-66.3 20.3l.9 -1.2M-62.7 15.6l.9 -1.2M54.8 -30.3l1.2 -.3M59.9 -31.1l1.3 -.1M77.2 -29.3l1.3 .4 1.4 .4M81.2 -28l1.3 .6M-32.8 75.1l.2 -1.3 .2 -1.4M-32.2 71.1l.2 -1.4 .2 -1.4M-31.4 65.6l.3 -1.4M-30.9 62.8l.2 -1.4 .2 -1.5M-30.2 58.5l.2 -1.4M-29.1 52.7l.3 -1.4 .3 -1.5M72.9 -15.1l-.9 -1.4 -.9 -1.4 -.9 -1.4 -.9 -1.4M68.4 -22.1l-.9 -1.4 -.9 -1.4M65.7 -26.3l-.9 -1.4 -.9 -1.4 -.9 -1.4M60.4 -34.6l-.9 -1.4M56.1 -41.5l-.9 -1.4M54.4 -44.2l-.8 -1.4M49.7 -52.4l-.8 -1.3M48.2 -55.1l-.7 -1.3 -.7 -1.3M45.5 -60.4l-.7 -1.3 -.6 -1.3M42.5 -66.9l-.6 -1.3M41.4 -69.5l-.5 -1.3 -.5 -1.3 -.5 -1.3 -.4 -1.2 -.4 -1.3M60.3 63.3l0 -1.5M60.2 55.8l-.1 -1.5 -.1 -1.5M59.6 49.8l-.1 -1.6 -.2 -1.5M59 45.2l-.2 -1.5 -.2 -1.5M58.3 40.6l-.3 -1.5M56.1 29.9l-.3 -1.5M54.8 23.8l-.4 -1.6M47.9 -47.5l.3 -1.2M48.9 -51.1l.4 -1.2 .4 -1.2 .4 -1.1M50.6 -55.7l.5 -1.1M51.6 -57.9l.6 -1.1M52.7 -60l.7 -1M54 -62l.6 -1M56 -64.8l.8 -.9 .7 -.9M74.1 25.9l-.5 -1.5M73.1 22.8l-.5 -1.5 -.5 -1.5 -.5 -1.5M70.5 15.2l-.6 -1.5M68.2 9.2l-.6 -1.5M66.4 4.6l-.6 -1.5M64 -1.4l-.6 -1.5M62.8 -4.4l-.6 -1.5M48.6 -47l-.2 -1.4M46.9 -61.8l0 -1.3 0 -1.2 0 -1.3M47 -66.8l0 -1.2M47.9 -74l0 0M-85.4 10.2l-.7 1.5M24.3 79.3l.2 -1.3M24.7 76.6l.2 -1.4 .2 -1.3 .1 -1.4M-12.2 -87.6l-1.7 .3M82.5 30.3l-.4 -1.6M81.1 25.6l-.6 -1.5M80 22.6l-.6 -1.6 -.6 -1.5M77 15l-.7 -1.5 -.6 -1.5 -.7 -1.5 -.7 -1.5M73.6 7.5l-.7 -1.5M71.5 3l-.7 -1.4M65.6 -8.8l-.7 -1.5 -.7 -1.5M59.8 -20.6l-.8 -1.4M53.6 -33.7l-.7 -1.5M85.4 -4.4l-.9 -1.4M80.7 -11.4l-.9 -1.4M78.8 -14.2l-1 -1.4M74.9 -19.7l-1 -1.3 -1 -1.4M71.9 -23.7l-1 -1.4M67.8 -29.1l-1 -1.4M64.8 -33.1l-1 -1.4 -1 -1.3 -1 -1.3M54.9 -46.4l-1 -1.3M53 -49l-.9 -1.3M46.7 -58.2l-.8 -1.2 -.9 -1.3M44.2 -62l-.8 -1.3M42.6 -64.6l-.8 -1.3M41.1 -67.2l-.7 -1.2M37.6 -73.5l-.6 -1.3 -.6 -1.2 -.6 -1.3 -.6 -1.2M70 -52.4l-1.4 -.9M64.3 -56.3l-1.4 -.9 -1.4 -1M60 -59.1l-1.4 -1 -1.4 -.9 -1.5 -1M45.8 -68.6l-1.4 -.9 -1.5 -1M41.5 -71.4l-1.3 -.9 -1.4 -1M34.6 -76.1l-1.3 -.9 -1.4 -.9"/><path stroke="#0080ff" d="M-19.2 70.4l.1 1.4M-18.9 76l.1 1.4 .1 1.3M-17.9 84.1l.2 1.3M-17.4 86.7l0 0M-27.3 -83.7l-.9 1.2M-32 -78l-1 1.2 -1 1.1 -1 1.2M-39.2 -69.9l-1.1 1.2M-42.5 -66.4l-1.1 1.1M-44.7 -64.1l-1.1 1.1 -1.2 1.2M-52.9 -56l-1.1 1.2M-62.5 -46.6l-1.2 1.2M-67.4 -41.8l-1.2 1.2 -1.2 1.2M-73.5 -35.8l-1.2 1.2 -1.2 1.2 -1.2 1.2 -1.2 1.3M-81.8 -27.2l-1.2 1.2 -1.2 1.3M-37.9 -79l-.3 1.2M-39 -75.2l-.5 1.2 -.5 1.3M-46.4 -58.4l-.7 1.4 -.7 1.3M-52.4 -47.6l-.8 1.3M-54 -44.9l-.9 1.3M-67.3 -24.3l-.9 1.4M-78 -7.4l-.9 1.4M-82.2 -.2l-.8 1.5M-84.6 4.2l-.7 1.5M-41.2 54.6l-.1 1.5M-41.3 57.6l0 1.4M-41.4 60.5l0 1.5M-41.3 63.4l0 1.5M-41.2 67.7l.1 1.5M-40.6 73.4l.2 1.4M-.6 73.7l.2 1.3M.2 79l.2 1.3M1.2 84.1l.3 1.3M1.8 86.6l.3 1.2M20.9 73.3l.2 1.3M23.2 83.3l.4 1.2M69.3 39.6l.6 1.4M-43 -76.1l-.1 1.3M-43.1 -73.6l-.1 1.2M-43.4 -69.8l-.2 1.2M-43.7 -67.3l-.3 1.3M-44.7 -62l-.3 1.3M-84.2 -26.5l1.3 -.5 1.4 -.5 1.3 -.5M-77.6 -28.8l1.3 -.3M-75 -29.5l1.4 -.2M-71 -30.2l1.3 -.1M-68.4 -30.4l1.4 -.1M-61.8 -30.4l1.2 .1M-86.5 -12.5l1.2 -.9M-84.1 -14.2l1.2 -.8M-80.4 -16.4l1.3 -.7M-76.6 -18.3l1.3 -.6 1.3 -.5M-68.8 -21.1l1.3 -.4M58.6 29.6l.7 1.3M63.7 40.1l.5 1.4M66.8 48.2l.4 1.4 .5 1.3M68.9 54.9l0 0M-86.9 3.1l1 -1.2M48.9 -60.1l.4 -1.2M50.1 -63.5l.5 -1.1M51.1 -65.7l.5 -1.1M52.1 -67.8l.6 -1M53.3 -69.8l0 0M-76.6 40l.6 -1.4 .5 -1.3M-74.9 35.9l.6 -1.3 .7 -1.4M-72.3 30.5l.7 -1.3M66.5 -31.2l1.3 .1M69.2 -31l1.3 .2 1.3 .2M73.2 -30.3l1.3 .3 1.4 .3M82.5 -27.4l1.3 .5M-33.5 79l.2 -1.3 .3 -1.3 .2 -1.3M-31.6 67l.2 -1.4M-31.1 64.2l.2 -1.4M-29.4 54.2l.3 -1.5M66.6 -24.9l-.9 -1.4M62.1 -31.9l-.9 -1.3 -.8 -1.4M58.6 -37.4l-.8 -1.4M55.2 -42.9l-.8 -1.3M53.6 -45.6l-.8 -1.4M52 -48.3l-.8 -1.4M46.8 -57.7l-.7 -1.4M44.2 -63l-.6 -1.3M43 -65.6l-.5 -1.3M38.7 -77.2l-.4 -1.2M60.3 60.3l0 -1.5 0 -1.5 -.1 -1.5M60 52.8l-.2 -1.5 -.2 -1.5M59.3 46.7l-.3 -1.5M57.7 37.6l-.3 -1.5M54.6 -63l.7 -.9 .7 -.9M75 28.9l-.5 -1.5 -.4 -1.5M73.6 24.4l-.5 -1.6M71.6 18.3l-.6 -1.6M48.9 -45.6l-.3 -1.4M47.9 -51.2l-.2 -1.3M47.5 -53.9l-.2 -1.3M47.2 -56.6l-.1 -1.3M46.9 -65.6l.1 -1.2M47.2 -69.3l.1 -1.2 .2 -1.1 .2 -1.2M-86.1 11.7l-.7 1.5M23.7 82l.3 -1.4 .3 -1.3M24.5 78l.2 -1.4M-17.3 -86.7l-1.7 .3M81.6 27.2l-.5 -1.6M78.8 19.5l-.6 -1.5 -.6 -1.5 -.6 -1.5M88 -.1l-.9 -1.5M83.5 -7.2l-.9 -1.4M81.7 -10l-1 -1.4M76.9 -16.9l-1 -1.4M43.4 -63.3l-.8 -1.3M38.3 -72.2l-.7 -1.3M71.5 -51.4l-1.5 -1M67.2 -54.3l-1.4 -1 -1.5 -1M61.5 -58.2l-1.5 -.9M55.7 -62l-1.4 -.9M52.9 -63.9l-1.5 -.9 -1.4 -1 -1.4 -.9 -1.4 -1 -1.4 -.9M42.9 -70.5l-1.4 -.9M37.4 -74.2l-1.4 -.9M29.2 -79.8l-1.3 -.9M26.6 -81.7l-1.3 -.9 -1.3 -.9 -1.3 -1"/><path stroke="#0099ff" d="M-18.5 80.1l.2 1.3M-18.1 82.8l.2 1.3M-17.7 85.4l.3 1.3M-31 -79.1l-1 1.1M-35 -74.5l-1 1.1M-40.3 -68.7l-1.1 1.1 -1.1 1.2M-60.1 -48.9l-1.2 1.2M-66.2 -43l-1.2 1.2M-71.1 -38.2l-1.2 1.2M-79.5 -29.7l-1.2 1.2M-85.3 -23.4l0 0M-40 -72.7l-.4 1.3 -.6 1.3M-41.5 -68.9l-.5 1.3M-42.6 -66.3l-.6 1.3M-44.4 -62.3l-.7 1.3M-81.4 -1.6l-.8 1.4M-85.3 5.7l-.8 1.5M-86.8 8.6l-.7 1.5M-41.2 66.3l0 1.4M-40.2 76.2l.2 1.4 .3 1.4M.4 80.3l.2 1.3M2.1 87.8l0 0M22 78.4l.3 1.2 .3 1.2M22.9 82.1l.3 1.2M70.4 42.4l.5 1.4 .5 1.3M72.3 47.9l.5 1.4M-43.6 -68.6l-.1 1.3M-45.3 -59.4l-.4 1.4M-80.2 -28l1.3 -.4M-76.3 -29.1l1.3 -.4M-73.6 -29.7l1.3 -.3 1.3 -.2M-64.4 -30.6l1.3 .1M-87.7 -11.7l1.2 -.8M-85.3 -13.4l1.2 -.8M-81.6 -15.7l1.2 -.7M64.2 41.5l.6 1.3M68.5 53.6l.4 1.3M50.6 -64.6l.5 -1.1M-81.7 32.6l.6 -1.4M-80.5 29.8l.7 -1.4 .7 -1.4 .7 -1.4 .7 -1.3M-77.1 41.4l.5 -1.4M-73 31.9l.7 -1.4M71.8 -30.6l1.4 .3M83.8 -26.9l0 0M-34 81.5l.3 -1.2M-32.4 72.4l.2 -1.3M43.6 -64.3l-.6 -1.3M41.9 -68.2l-.5 -1.3M38 -79.7l0 0M60.3 61.8l0 -1.5M57.1 34.5l-.3 -1.5M53.4 -61l.6 -1M57.5 -66.6l0 0M75.4 30.5l-.4 -1.6M47 -59.2l-.1 -1.3M47.7 -72.8l.2 -1.2M-84.7 8.7l-.7 1.5M23.1 84.6l.3 -1.3M-13.9 -87.3l-1.7 .3 -1.7 .3M82.1 28.7l-.5 -1.5M80.5 24.1l-.5 -1.5M87.1 -1.6l-.8 -1.4M82.6 -8.6l-.9 -1.4M77.8 -15.6l-.9 -1.3M58.8 -41.1l-1 -1.3M38.9 -71l-.6 -1.2M35.2 -78.5l-.6 -1.2 -.5 -1.3M68.6 -53.3l-1.4 -1M54.3 -62.9l-1.4 -1M38.8 -73.3l-1.4 -.9M31.9 -77.9l-1.3 -1 -1.4 -.9M27.9 -80.7l-1.3 -1M21.5 -85.4l0 0"/><path stroke="#00b2ff" d="M-30.1 -80.3l-.9 1.2M-38.1 -71.1l-1.1 1.2M-58.9 -50.1l-1.2 1.2M-72.3 -37l-1.2 1.2M-80.7 -28.5l-1.1 1.3M-38.2 -77.8l-.4 1.3M-83.8 2.7l-.8 1.5M-86.1 7.2l-.7 1.4M-43.1 -74.8l0 1.2M-43.3 -71.1l-.1 1.3M-82.9 -15l1.3 -.7M-83.8 -.4l1 -1.1M-73.8 17.7l.9 -1.3M-70.2 26.6l.7 -1.3M-33.7 80.3l.2 -1.3M38.3 -78.4l-.3 -1.3M51.1 -56.8l.5 -1.1M47 -68l.2 -1.3M84.5 -5.8l-1 -1.4M36 -75.1l-1.4 -1M22.7 -84.5l-1.2 -.9"/><path stroke="#00ccff" d="M-84.2 -24.7l-1.1 1.3M-40.8 72l.2 1.4M-39.7 79l0 0M-79.1 -17.1l1.2 -.6M-84.9 .7l1.1 -1.1M79.9 -28.5l1.3 .5M39.1 -75.9l-.4 -1.3M-86.8 13.2l0 0M23.4 83.3l.3 -1.3M86.3 -3l-.9 -1.4"/><path stroke="#00e6ff" d="M-38.6 -76.5l-.4 1.3M-40.4 74.8l.2 1.4"/><path stroke="#00ffff" d="M75.9 -29.7l1.3 .4"/><path stroke="#001aff" d="M-18.8 6.1l.6 1.4 .5 1.4M-17.2 10.3l.5 1.5M-16.3 13.2l.5 1.5 .4 1.4M-14.6 19.1l.4 1.4M-13.8 22l.3 1.5M-13.2 25l.3 1.5 .3 1.5M-12.3 29.5l.3 1.6 .2 1.5M-3.8 23.9l.4 1.5M-2.5 28.3l.4 1.5M14.1 40.8l.3 1.5 .4 1.5 .2 1.5 .3 1.5 .3 1.5M16.1 51.3l.2 1.5M-36.8 -8.4l.2 1.5M-36.1 -2.4l.1 1.5M-35.6 5.2l.1 1.6M-35.5 8.3l.1 1.6M-35.4 11.4l0 1.6M-33.8 -10.3l1.4 -.3 1.5 -.1 1.4 -.2M-28.1 -11l1.4 -.1 1.5 0 1.4 0M-21 -10.9l1.5 .1M-18.1 -10.6l1.4 .2 1.4 .3 1.4 .3 1.4 .3 1.4 .4 1.4 .4 1.4 .5 1.3 .5 1.4 .5 1.3 .6 1.4 .6 1.3 .6 1.3 .7 1.3 .7 1.2 .7 1.3 .8 1.2 .8 1.2 .9M7.1 .1l1.2 .9M9.5 1.9l1.1 1 1.1 1 1.1 1 1.1 1 1.1 1.1 1 1.1 1 1.2M18 10.4l1 1.2 .9 1.2 .9 1.2 .9 1.2 .9 1.3 .8 1.2M24.3 19l.7 1.3M25.8 21.6l.8 1.4M30.6 20l.9 1.2M32.3 22.5l.8 1.2 .8 1.3M34.6 26.3l.8 1.3 .7 1.3M36.8 30.2l.6 1.4 .7 1.3M38.7 34.2l.6 1.4M-22.9 30.9l.5 -1.4M-21.8 28.1l.6 -1.4 .7 -1.4 .6 -1.4 .7 -1.4 .7 -1.4M-17 18.4l.8 -1.3 .8 -1.3M-12.9 12l.9 -1.2 .9 -1.3 1 -1.1 1 -1.2 .9 -1.2 1.1 -1.1 1 -1.1 1.1 -1 1 -1.1 1.1 -1M-1.8 -.3l1.2 -.9 1.1 -1 1.2 -.9 1.2 -.8 1.2 -.9 1.3 -.8 1.2 -.7 1.3 -.7M9.2 -7.7l1.3 -.7 1.3 -.6 1.3 -.6 1.3 -.5 1.4 -.6 1.3 -.4M18.5 -11.6l1.4 -.3 1.3 -.4 1.4 -.3 1.4 -.3 1.4 -.2 1.4 -.2M28.2 -13.5l1.4 -.1M31.1 -13.6l1.4 -.1 1.4 0M35.3 -13.6l1.4 .1 1.4 .1M39.5 -13.2l1.4 .2M42.3 -12.8l1.4 .3M-27 -11.2l1.3 .4M-21.9 -9.3l1.3 .5M-18.1 -7.5l1.2 .7 1.2 .7 1.2 .7M27 15.6l.2 -1.5M27.6 11l.2 -1.5 .3 -1.5 .2 -1.5M29.5 .5l.4 -1.4 .3 -1.5M-35.7 24.6l.8 -1.2M-33.3 20.9l.9 -1.2 .9 -1.2 .9 -1.2M-29.7 16.1l1 -1.1 1 -1.1 .9 -1.1 1.1 -1.1 1 -1 1.1 -1.1M-22.6 8.6l1.1 -1M-20.3 6.7l1.1 -.9 1.2 -.9"/><path stroke="#0033ff" d="M2.5 60.8l.1 -1.4M2.9 56.5l.1 -1.5 .2 -1.4M3.3 52.1l0 0M23.9 52.7l0 -1.5M24 45.2l.1 -1.5 0 -1.5 0 -1.5 .1 -1.6 0 -1.5 .1 -1.5 0 -1.6 .1 -1.5M24.5 31.5l0 -1.6 .1 -1.5 .1 -1.6 .2 -1.5 .1 -1.5 .1 -1.6 .2 -1.5 .1 -1.6M-19.4 4.7l.6 1.4M-17.7 8.9l.5 1.4M-16.7 11.8l.4 1.4M-15.4 16.1l.4 1.5 .4 1.5M-14.2 20.5l.4 1.5M-13.5 23.5l.3 1.5M-12.6 28l.3 1.5M-11.8 32.6l.3 1.5 .2 1.5 .2 1.5M-10.7 40.1l.2 1.5 .1 1.5M-10.2 44.6l.1 1.5 .2 1.5 .1 1.5M-9.5 52l.1 1.5 .1 1.5 .2 1.4 .1 1.5M-8.8 60.7l.1 1.4M-4.3 22.5l.5 1.4M-3.4 25.4l.5 1.5 .4 1.4M-2.1 29.8l.4 1.4 .4 1.5 .4 1.5 .3 1.5 .3 1.4 .4 1.5 .3 1.5 .3 1.5 .2 1.4 .3 1.5 .3 1.5 .2 1.5 .2 1.4 .3 1.5M2.4 51.8l.2 1.5 .2 1.4M3.4 59l.2 1.4M13.8 39.3l.3 1.5M15.6 48.3l.2 1.5 .3 1.5M16.3 52.8l.2 1.4 .2 1.5 .2 1.5 .2 1.4 .2 1.5 .1 1.4 .2 1.4 .2 1.5M18.4 70l.2 1.4M-49.8 -33.1l-.3 1.5M-51.2 -27.2l-.4 1.5M-52 -24.2l-.5 1.5 -.4 1.5 -.5 1.5 -.4 1.5M-54.3 -16.7l-.5 1.5 -.5 1.6M-55.8 -12.1l-.5 1.5M-57.4 -7.5l-.5 1.5M-59 -3l-.5 1.6M-63.3 9.3l-.6 1.5M-47 -36.6l.7 1 .7 1.1M-44.3 -32.2l.6 1.1M-42.6 -28.7l.5 1.2M-40.6 -23.7l.5 1.3 .4 1.4 .4 1.3 .4 1.4M-38.6 -17l.4 1.4 .3 1.5 .3 1.4 .3 1.4 .2 1.5 .3 1.4M-36.6 -6.9l.2 1.5 .1 1.5 .2 1.5M-36 -.9l.2 1.5 .1 1.6 .1 1.5 0 1.5M-35.5 6.8l0 1.5M-35.4 9.9l0 1.5M-35.4 13l0 0M-46.6 -44l.3 1.3M-46 -41.4l.2 1.3 .2 1.4M-45 -33.3l.1 1.4 0 1.5M-44.8 -29l0 1.4M-44.8 -26.1l0 0M-36.6 -9.8l1.4 -.3 1.4 -.2M-29.5 -10.9l1.4 -.1M-23.8 -11.1l1.4 .1 1.4 .1M-19.5 -10.8l1.4 .2M5.9 -.8l1.2 .9M8.3 1l1.2 .9M17 9.3l1 1.1M23.4 17.7l.9 1.3M25 20.3l.8 1.3M26.6 23l.7 1.3 .7 1.4 .7 1.4 .6 1.3 .7 1.4 .6 1.4 .6 1.4 .6 1.4 .5 1.5 .5 1.4 .5 1.4 .5 1.4 .5 1.5 .4 1.4 .5 1.5M36.3 48.4l.4 1.4M29.8 18.8l.8 1.2M31.5 21.2l.8 1.3M33.9 25l.7 1.3M36.1 28.9l.7 1.3M38.1 32.9l.6 1.3M39.3 35.6l.6 1.4 .6 1.3 .5 1.4M41.5 41.1l.5 1.4M44.8 50.8l.4 1.3M-24 33.8l.5 -1.4 .6 -1.5M-22.4 29.5l.6 -1.4M-18.5 21.1l.7 -1.3 .8 -1.4M-15.4 15.8l.8 -1.3 .9 -1.2 .8 -1.3M-2.9 .7l1.1 -1M7.9 -7l1.3 -.7M17.1 -11.1l1.4 -.5M26.8 -13.3l1.4 -.2M29.6 -13.6l1.5 0M33.9 -13.7l1.4 .1M38.1 -13.4l1.4 .2M40.9 -13l1.4 .2M43.7 -12.5l1.4 .4 1.4 .3 1.4 .4 1.3 .5 1.4 .5 1.3 .5 1.3 .6M54.6 -8.7l1.3 .6 1.2 .7 1.3 .7M59.7 -6l1.2 .8M63.4 -3.6l1.2 .9M-60.4 -9.7l1.3 -.5M-52.5 -12.2l1.3 -.3 1.3 -.3M-47.2 -13.1l1.4 -.2 1.3 -.1 1.4 -.1 1.3 0 1.4 0M-39 -13.4l1.3 .1 1.4 .1 1.3 .2 1.3 .2 1.4 .2 1.3 .3 1.3 .3 1.4 .4 1.3 .4M-25.7 -10.8l1.3 .4 1.3 .5 1.2 .6M-20.6 -8.8l1.3 .7 1.2 .6M-14.5 -5.4l1.2 .8M25.9 50.9l0 -1.5M25.9 47.9l0 -1.5 0 -1.5 0 -1.5 0 -1.5 0 -1.5 0 -1.6 0 -1.5 .1 -1.5 0 -1.6 0 -1.5 0 -1.6 .1 -1.5M26.2 28l0 -1.5 .1 -1.6 .1 -1.5 .1 -1.6 .1 -1.5 .1 -1.6 .2 -1.5 .1 -1.6M27.2 14.1l.2 -1.6 .2 -1.5M28.3 6.5l.3 -1.5 .3 -1.5 .3 -1.5 .3 -1.5M30.2 -2.4l.4 -1.4 .4 -1.4 .5 -1.4 .4 -1.4 .5 -1.4 .5 -1.3 .5 -1.4 .5 -1.3 .6 -1.3 .6 -1.3 .6 -1.2 .6 -1.3 .7 -1.2 .6 -1.2 .7 -1.1 .7 -1.2 .8 -1.1 .7 -1.1M41.3 -26.4l.8 -1.1M42.9 -28.5l.9 -1 .8 -.9M46.4 -32.3l.9 -.8 1 -.9M-46.5 48.8l.5 -1.4 .4 -1.4M-44.1 41.9l.5 -1.4M-43 39.2l.5 -1.4M-41.9 36.5l.6 -1.4 .6 -1.3 .7 -1.4 .6 -1.3 .7 -1.3 .7 -1.3 .8 -1.3 .7 -1.3 .8 -1.3M-34.9 23.4l.8 -1.3 .8 -1.2M-30.6 17.3l.9 -1.2M-23.6 9.6l1 -1M-21.5 7.6l1.2 -.9M-18 4.9l0 0"/><path stroke="#004cff" d="M75.6 -14l-1 -1.4M69.4 -22.2l-1 -1.3 -1 -1.4 -1.1 -1.3 -1 -1.4M60.2 -34.3l-1.1 -1.3 -1 -1.4 -1 -1.3 -1 -1.4M55.1 -41l-1 -1.3 -.9 -1.4M49.4 -49l-1 -1.3M44.9 -55.6l-.9 -1.4M43.2 -58.3l-.8 -1.3M38.5 -66.1l-.7 -1.3M36.5 -70l-.7 -1.3M.6 77.3l.2 -1.3M1.3 72l.2 -1.4M1.9 66.5l.2 -1.4M2.2 63.7l.1 -1.5M2.7 57.9l.2 -1.4M3.2 53.6l.1 -1.5M23.2 69.9l.1 -1.4M23.4 67.1l.1 -1.4M23.6 64.3l0 -1.5M23.8 57.1l.1 -1.5 0 -1.5 0 -1.4M23.9 51.2l.1 -1.5 0 -1.5 0 -1.5 0 -1.5M24.4 33l.1 -1.5M72.1 12l-.7 -1.5M70.8 9l-.6 -1.5 -.6 -1.5M68.3 3l-.7 -1.5M67 0l-.7 -1.5 -.6 -1.5 -.7 -1.5 -.7 -1.5 -.6 -1.5M63 -9l-.6 -1.5 -.7 -1.5 -.6 -1.5 -.7 -1.4 -.6 -1.5M59.1 -17.9l-.6 -1.5 -.6 -1.5 -.6 -1.5 -.7 -1.5 -.6 -1.4M54.9 -28.3l-.6 -1.4 -.5 -1.5 -.6 -1.5M51.7 -37l-.5 -1.5 -.5 -1.4 -.5 -1.4 -.4 -1.5 -.4 -1.4M49 -45.6l-.4 -1.4M47.3 -52.5l-.3 -1.4M65.8 -43.6l-1.3 -1.2M59.6 -49.5l-1.2 -1.2M-13.1 -87.2l-1.8 .2M-60.5 -21.1l-.7 1.4 -.7 1.5M-62.7 -16.7l-.7 1.4M-65.6 -10.8l-.7 1.4M-67.8 -6.4l-.7 1.5 -.8 1.4M-70 -2l-.7 1.5 -.7 1.5 -.7 1.5M-76.2 11.4l-.7 1.5M-11.1 37.1l.2 1.5 .2 1.5M-10.4 43.1l.2 1.5M-9.8 49.1l.2 1.5 .1 1.4M-9 57.9l.1 1.4 .1 1.4M-8.7 62.1l.2 1.5 .1 1.4M-8.3 66.4l.2 1.3M2.2 50.4l.2 1.4M2.8 54.7l.2 1.5 .2 1.4M3.6 60.4l.2 1.4 .1 1.4M4.1 64.6l.2 1.4 .2 1.4M4.9 70.1l.2 1.3 .2 1.4M17.8 64.4l.1 1.4M18.1 67.2l.2 1.4 .1 1.4M18.6 71.4l.1 1.3 .2 1.4M19.1 75.4l.1 1.4 .2 1.3M-47.7 -64.2l.2 1.2 .1 1.2M-47 -56.7l0 1.3 0 1.3 0 1.3 -.1 1.4 -.1 1.3 -.1 1.4 -.1 1.4 -.1 1.3M-47.9 -43.2l-.2 1.5 -.2 1.4M-48.6 -38.9l-.2 1.4 -.3 1.5M-49.4 -34.6l-.4 1.5M-50.1 -31.6l-.4 1.4 -.3 1.5 -.4 1.5M-51.6 -25.7l-.4 1.5M-53.8 -18.2l-.5 1.5M-56.3 -10.6l-.5 1.5 -.6 1.6M-57.9 -6l-.5 1.5 -.6 1.5M-59.5 -1.4l-.6 1.5 -.5 1.5 -.5 1.5 -.6 1.6M-62.2 6.2l-.6 1.5M-64.4 12.3l-.5 1.5 -.6 1.6 -.5 1.5M-67 19.9l-.5 1.6 -.5 1.5 -.5 1.5M-69.4 27.6l-.4 1.5M-56.3 -46.5l1 .8M-53.5 -44.2l.9 .9M-51.7 -42.4l.8 .9 .8 .9 .8 .9 .8 1M-47.7 -37.7l.7 1.1M-45.6 -34.5l.6 1.1 .7 1.2M-43.7 -31.1l.5 1.2 .6 1.2M-42.1 -27.5l.6 1.3 .5 1.2 .4 1.3M-38.9 -18.3l.3 1.3M-50.2 -54.7l.5 1.1 .5 1.1 .4 1.2M-48.3 -50.1l.4 1.2M-47.5 -47.7l.3 1.2M-46.9 -45.3l.3 1.3M-46.3 -42.7l.3 1.3M-45.6 -38.7l.2 1.3 .1 1.4 .2 1.3 .1 1.4M-44.9 -30.4l.1 1.4M-44.8 -27.6l0 1.5M35.2 44.1l.4 1.4 .4 1.4 .3 1.5M36.7 49.8l.4 1.5 .3 1.4M37.7 54.1l.3 1.5 .3 1.4 .3 1.4 .3 1.4M39.1 61.2l.3 1.4M41 39.7l.5 1.4M42 42.5l.5 1.3 .5 1.4 .5 1.4 .4 1.4 .4 1.4 .5 1.4M45.2 52.1l.3 1.4M45.9 54.9l.4 1.4M46.6 57.6l.4 1.4M53.2 -9.3l1.4 .6M58.4 -6.7l1.3 .7M60.9 -5.2l1.3 .8M64.6 -2.7l1.2 .9 1.1 .9 1.2 1 1.1 1 1.1 1 1.1 1.1 1 1.1M76.5 8.8l.9 1.2M-73.8 -2l1.2 -.8 1.1 -.8M-69.1 -5.2l1.2 -.8M-66.7 -6.7l1.3 -.6 1.2 -.7 1.3 -.6 1.2 -.6 1.3 -.5M-56.5 -11.1l1.3 -.4 1.3 -.4 1.4 -.3M-48.5 -13l1.3 -.1M-40.4 -13.5l1.4 .1M25.2 72.5l.1 -1.4M25.7 65.5l.1 -1.4M25.9 59.8l0 -1.5 0 -1.5 0 -1.4 0 -1.5 0 -1.5 0 -1.5M25.9 49.4l0 -1.5M26.1 29.6l.1 -1.6M40.5 -25.4l.8 -1M42.1 -27.5l.8 -1M44.6 -30.4l.9 -1 .9 -.9M48.3 -34l.9 -.8 1 -.7 1 -.8M52.3 -37l1 -.7 1.1 -.6 1 -.6 1.1 -.6M58.8 -40.5l1.1 -.5 1.2 -.4M-48.9 57l.4 -1.4M-48.1 54.3l.4 -1.4M-47.3 51.5l.4 -1.3 .4 -1.4M-45.6 46l.5 -1.3M-44.6 43.3l.5 -1.4M-43.6 40.5l.6 -1.3M48.9 -45.2l-.5 -1.4M47.9 -48l-.5 -1.4 -.5 -1.4 -.4 -1.4M45.3 -56.3l-.3 -1.4 -.4 -1.3 -.3 -1.3 -.3 -1.4M42.8 -69.5l-.1 -1.3"/><path stroke="#0066ff" d="M82.4 -4.4l-.9 -1.4M76.6 -12.7l-1 -1.3M74.6 -15.4l-1.1 -1.4 -1 -1.3 -1 -1.4M64.3 -28.9l-1.1 -1.4 -1 -1.3 -1 -1.4M52.2 -45l-1 -1.4 -.9 -1.3 -.9 -1.3M48.4 -50.3l-.9 -1.4 -.9 -1.3 -.8 -1.3M42.4 -59.6l-.8 -1.3M40 -63.5l-.7 -1.3M37.8 -67.4l-.7 -1.3M34.6 -73.9l-.6 -1.2 -.5 -1.3M31.5 -81.5l-.4 -1.2M-1.6 87.5l.4 -1.2 .3 -1.3M-.4 82.5l.3 -1.3M.4 78.6l.2 -1.3M.8 76l.2 -1.3 .2 -1.4M1.5 70.6l.1 -1.4 .2 -1.3 .1 -1.4M2.1 65.1l.1 -1.4M2.3 62.2l.2 -1.4M2.6 59.4l.1 -1.5M22.1 78.1l.2 -1.4M22.5 75.4l.2 -1.4 .2 -1.4 .1 -1.3 .2 -1.4M23.5 65.7l.1 -1.4M23.6 62.8l.1 -1.4 0 -1.4M23.8 58.5l0 -1.4M76.5 24.2l-.5 -1.6 -.5 -1.5M73.8 16.6l-.5 -1.6 -.6 -1.5 -.6 -1.5M71.4 10.5l-.6 -1.5M69.6 6l-.7 -1.5M67.6 1.5l-.6 -1.5M63.7 -7.5l-.7 -1.5M59.8 -16.4l-.7 -1.5M56 -25.3l-.5 -1.5 -.6 -1.5M53.2 -32.7l-.5 -1.4 -.5 -1.5 -.5 -1.4M49.4 -44.2l-.4 -1.4M48.6 -47l-.4 -1.4 -.3 -1.4M47.6 -51.2l-.3 -1.3M47 -53.9l-.3 -1.4 -.2 -1.3 -.2 -1.3 -.2 -1.4M45.6 -63.2l-.1 -1.3 0 -1.3 -.1 -1.2M45.4 -70.8l.1 -1.2M45.6 -73.2l.1 -1.2M83.9 -25.5l-1.2 -1.2M80.4 -29.2l-1.2 -1.2 -1.2 -1.2M73.1 -36.5l-1.2 -1.2 -1.2 -1.2M69.5 -40.1l-1.3 -1.2 -1.2 -1.2M64.5 -44.8l-1.2 -1.2 -1.2 -1.2 -1.3 -1.1 -1.2 -1.2M58.4 -50.7l-1.2 -1.2 -1.2 -1.1 -1.3 -1.2M53.5 -55.3l0 0M51.3 -67.1l-1.5 -.9 -1.4 -.9M42.6 -72.5l-1.5 -.9 -1.4 -.8M32.6 -78.6l-1.4 -.9M25.7 -83l-1.3 -.9M-11.4 -87.4l-1.7 .2M-26.9 -81.5l-1.6 .6M-38 -76.9l-1.6 .7M-42.8 -74.9l-1.6 .6M-52.4 -70.9l0 0M-59.8 -22.6l-.7 1.5M-61.9 -18.2l-.8 1.5M-63.4 -15.3l-.7 1.5 -.8 1.5M-66.3 -9.4l-.8 1.5 -.7 1.5M-72.1 2.5l-.7 1.4 -.7 1.5 -.7 1.5 -.7 1.5M-77.5 14.4l-.6 1.5 -.7 1.5 -.5 1.5 -.6 1.6M-8.4 65l.1 1.4M-8.1 67.7l.1 1.4 .2 1.4M-7.5 73.2l.2 1.4 .2 1.3 .2 1.3M-6.7 78.5l.3 1.3 .2 1.3M-5.9 82.4l.3 1.2M3.2 57.6l.2 1.4M3.9 63.2l.2 1.4M4.5 67.4l.2 1.3 .2 1.4M5.3 72.8l.2 1.3M5.9 76.7l.3 1.3 .2 1.3 .3 1.3 .3 1.2 .3 1.3M8.3 86.7l.3 1.2M17.9 65.8l.2 1.4M19.8 80.7l.2 1.3 .3 1.3M20.7 85.8l0 0M-49.4 -71.2l.4 1.1 .3 1.2M-48.1 -66.6l.2 1.2M-47.4 -61.8l.1 1.3M-47.5 -46l-.2 1.4M-49.1 -36l-.3 1.4M-55.3 -13.6l-.5 1.5M-61.7 4.7l-.5 1.5M-62.8 7.7l-.5 1.6M-63.9 10.8l-.5 1.5M-66 16.9l-.5 1.5M-68.5 24.5l-.4 1.5 -.5 1.6M-70.7 32.2l-.4 1.5M-71.4 35.2l-.4 1.6M-72.7 41.4l-.3 1.5M-73.3 44.5l-.2 1.5M-68.1 -52.6l1.2 .4M-64.6 -51.3l1.1 .5M-62.4 -50.3l1.1 .5 1 .6M-58.2 -47.9l1 .7 .9 .7M-55.3 -45.7l.9 .7 .9 .8M-52.6 -43.3l.9 .9M-48.5 -38.7l.8 1M-56.1 -63.6l.8 .9M-54.6 -61.8l.7 .9 .7 1 .6 1 .7 1 .6 1.1 .5 1 .6 1.1M-48.8 -51.3l.5 1.2M-47.9 -48.9l.4 1.2M-47.2 -46.5l.3 1.2M38.9 59.8l.2 1.4M39.4 62.6l.3 1.4 .2 1.4 .2 1.4M40.4 68.1l.2 1.4M40.8 70.8l.3 1.4 .2 1.3 .2 1.3M41.8 76.1l.2 1.3M46.3 56.3l.3 1.3M47 59l.3 1.4M47.6 61.7l.3 1.4 .4 1.3 .3 1.3M48.9 67l.3 1.3M62.2 -4.4l1.2 .8M72.4 4.3l1.1 1.1 1 1.1M75.5 7.6l1 1.2M77.4 10l1 1.2 .9 1.3M80.2 13.8l.9 1.2 .8 1.3M85.1 21.7l0 0M-80.3 3.8l1 -1M-76 -.1l1.1 -1M-59.1 -10.2l1.3 -.5 1.3 -.4M-49.9 -12.8l1.4 -.2M25.3 71.1l.2 -1.4M25.6 66.9l.1 -1.4M25.8 64.1l0 -1.5 .1 -1.4 0 -1.4M51.2 -36.3l1.1 -.7M57.7 -40l1.1 -.5M62.3 -41.8l1.2 -.4M65.9 -42.8l1.2 -.2 1.3 -.3 1.2 -.1 1.3 -.2M74.8 -43.7l1.3 0M-52.1 70.2l.3 -1.3 .3 -1.3 .3 -1.3M-50.6 63.7l.3 -1.3M-49.6 59.7l.4 -1.4 .3 -1.3M-48.5 55.6l.4 -1.3M-45.1 44.7l.5 -1.4M-42.5 37.8l.6 -1.3M46.5 -52.2l-.4 -1.4M45.7 -54.9l-.4 -1.4M43.8 -63l-.3 -1.3 -.2 -1.3M43.1 -66.9l-.2 -1.3M42.7 -70.8l-.1 -1.3M42.5 -73.3l0 -1.2 0 -1.3M42.5 -77l0 0"/><path stroke="#0080ff" d="M87.9 4.2l-.9 -1.5 -.9 -1.4 -.9 -1.4 -.9 -1.5 -.9 -1.4M79.6 -8.5l-1 -1.4 -1 -1.4 -1 -1.4M71.5 -19.5l-1 -1.3 -1.1 -1.4M65.3 -27.6l-1 -1.3M61.2 -33l-1 -1.3M56.1 -39.7l-1 -1.3M53.2 -43.7l-1 -1.3M45.8 -54.3l-.9 -1.3M44 -57l-.8 -1.3M41.6 -60.9l-.8 -1.3 -.8 -1.3M39.3 -64.8l-.8 -1.3M37.1 -68.7l-.6 -1.3M35.2 -72.6l-.6 -1.3M33.5 -76.4l-.6 -1.3M32.4 -79l-.4 -1.2M-.9 85l.3 -1.2 .2 -1.3M-.1 81.2l.3 -1.3 .2 -1.3M1.2 73.3l.1 -1.3M21.6 80.7l.3 -1.3 .2 -1.3M22.3 76.7l.2 -1.3M23.3 68.5l.1 -1.4M23.7 60l.1 -1.5M80 36.5l-.4 -1.5 -.3 -1.6 -.4 -1.6M78.4 30.3l-.4 -1.5 -.5 -1.6M75.5 21.1l-.5 -1.5 -.6 -1.5M68.9 4.5l-.6 -1.5M47.9 -49.8l-.3 -1.4M46.1 -59.3l-.2 -1.3 -.1 -1.3M45.4 -67l0 -1.3M45.5 -72l.1 -1.2M45.7 -74.4l.1 -1.2M81.5 -28l-1.1 -1.2M78 -31.6l-1.2 -1.3 -1.2 -1.2M74.3 -35.3l-1.2 -1.2M67 -42.5l-1.2 -1.1M67.4 -57.1l-1.5 -1M60.1 -61.7l-1.5 -.9 -1.5 -.9M55.7 -64.4l-1.5 -.9M52.8 -66.2l-1.5 -.9M48.4 -68.9l-1.5 -.9 -1.4 -.9M44 -71.6l-1.4 -.9M38.3 -75.1l-1.4 -.9M24.4 -83.9l-1.4 -.9M-8 -87.9l-1.7 .2M-14.5 -86.8l-1.6 .6M-28.5 -80.9l-1.6 .7 -1.6 .7 -1.6 .6 -1.6 .7 -1.5 .6 -1.6 .7M-39.6 -76.2l-1.6 .6M-46 -73.6l-1.6 .7 -1.6 .7 -1.6 .6 -1.6 .7M-69.3 -3.5l-.7 1.5M-75.6 9.9l-.6 1.5M-76.9 12.9l-.6 1.5M-79.9 20.5l-.6 1.5M-81 23.5l-.5 1.6M-82 26.6l-.5 1.5M-83 29.7l0 0M-7.8 70.5l.1 1.4M-6.9 77.2l.2 1.3M-6.2 81.1l.3 1.3M-5.3 84.9l.4 1.2 .3 1.3M5.5 74.1l.2 1.3M7.3 83.1l.3 1.2 .3 1.2M8.6 87.9l0 0M18.9 74.1l.2 1.3M19.4 78.1l.2 1.3 .2 1.3M20.5 84.5l.2 1.3M-49.7 -72.3l.3 1.1M-48.7 -68.9l.3 1.1 .3 1.2M-47.9 -65.4l.2 1.2M-47.3 -60.5l.1 1.2M-47.1 -58l.1 1.3M-47.7 -44.6l-.2 1.4M-48.3 -40.3l-.3 1.4M-69.8 29.1l-.4 1.5 -.5 1.6M-71.1 33.7l-.3 1.5M-73.5 46l-.2 1.6M-70.5 -53.2l1.2 .3M-63.5 -50.8l1.1 .5M-60.3 -49.2l1.1 .6 1 .7M-58.5 -66.1l.8 .8 .8 .8 .8 .9M-55.3 -62.7l.7 .9M37.4 52.7l.3 1.4M40.6 69.5l.2 1.3M45.5 53.5l.4 1.4M47.3 60.4l.3 1.3M48.6 65.7l.3 1.3M49.5 69.6l.3 1.3 .3 1.3M74.5 6.5l1 1.1M79.3 12.5l.9 1.3M-83.4 7l1 -1.1 1 -1M-79.3 2.8l1.1 -1 1.1 -1M-74.9 -1.1l1.1 -.9M-71.5 -3.6l1.2 -.9 1.2 -.7M-67.9 -6l1.2 -.7M25.6 68.3l0 -1.4M61.1 -41.4l1.2 -.4M70.9 -43.6l1.3 -.1 1.3 0 1.3 0M76.1 -43.7l0 0M-49.9 61l.3 -1.3M-47.7 52.9l.4 -1.4M46.1 -53.6l-.4 -1.3M44 -61.7l-.2 -1.3M43.3 -65.6l-.2 -1.3M42.9 -68.2l-.1 -1.3M42.6 -72.1l-.1 -1.2"/><path stroke="#0099ff" d="M83.4 -3l-1 -1.4M81.5 -5.8l-1 -1.4 -.9 -1.3M35.8 -71.3l-.6 -1.3M32.9 -77.7l-.5 -1.3M21 83.3l.3 -1.3M77.5 27.2l-.5 -1.5 -.5 -1.5M74.4 18.1l-.6 -1.5M45.8 -61.9l-.2 -1.3M45.4 -68.3l0 -1.2 0 -1.3M45.8 -75.6l0 0M85 -24.2l-1.1 -1.3M70.7 -38.9l-1.2 -1.2M54.7 -54.2l-1.2 -1.1M65.9 -58.1l-1.5 -.9 -1.4 -.9 -1.5 -.9M57.1 -63.5l-1.4 -.9M54.2 -65.3l-1.4 -.9M45.5 -70.7l-1.5 -.9M39.7 -74.2l-1.4 -.9M29.8 -80.4l-1.4 -.9 -1.3 -.9M23 -84.8l0 0M-6.3 -88.1l-1.7 .2M-9.7 -87.7l-1.7 .3M-14.9 -87l-1.7 .2M-16.1 -86.2l-1.5 .7M-19.1 -84.8l-1.6 .6M-22.2 -83.5l-1.6 .6M-25.4 -82.2l-1.5 .7M-41.2 -75.6l-1.6 .7M-44.4 -74.3l-1.6 .7M-64.9 -12.3l-.7 1.5M-74.9 8.4l-.7 1.5M-80.5 22l-.5 1.5M-7.7 71.9l.2 1.3M5.7 75.4l.2 1.3M7.9 85.5l.4 1.2M-47.2 -59.3l.1 1.3M-66.5 18.4l-.5 1.5M-71.8 36.8l-.3 1.5 -.3 1.5 -.3 1.6M-66.9 -52.2l1.2 .4 1.1 .5M40.1 66.8l.3 1.3M41.5 74.8l.3 1.3M81.9 16.3l.8 1.4M83.5 19l.8 1.4 .8 1.3M-87.1 11.6l.9 -1.1M-77.1 .8l1.1 -.9M25.5 69.7l.1 -1.4M56.5 -39.5l1.2 -.5M64.7 -42.5l1.2 -.3M-51.2 66.3l.3 -1.3M-50.3 62.4l.4 -1.4M48.4 -46.6l-.5 -1.4M42.5 -75.8l0 -1.2"/><path stroke="#00b2ff" d="M32 -80.2l-.5 -1.3M31.1 -82.7l0 0M21.3 82l.3 -1.3M82.7 -26.7l-1.2 -1.3M75.6 -34.1l-1.3 -1.2M61.5 -60.8l-1.4 -.9M36.9 -76l-1.5 -.9M-4.5 -88.3l-1.8 .2M-13 -87.5l-1.5 .7M-20.7 -84.2l-1.5 .7M-81.5 25.1l-.5 1.5M-82.5 28.1l-.5 1.6M20.3 83.3l.2 1.2M49.2 68.3l.3 1.3M82.7 17.7l.8 1.3M-85.3 9.3l1 -1.2M-81.4 4.9l1.1 -1.1M63.5 -42.2l1.2 -.3"/><path stroke="#00ccff" d="M20.3 85.9l.4 -1.3 .3 -1.3M78.9 31.8l-.5 -1.5M35.4 -76.9l-1.4 -.9 -1.4 -.8M31.2 -79.5l-1.4 -.9M-17.6 -85.5l-1.5 .7M-5.6 83.6l.3 1.3M-69.3 -52.9l1.2 .3M-86.2 10.5l.9 -1.2M-50.9 65l.3 -1.3"/><path stroke="#00e6ff" d="M-23.8 -82.9l-1.6 .7M-84.3 8.1l.9 -1.1"/><path stroke="#00ffff" d="M27.1 -82.2l-1.4 -.8M-73 42.9l-.3 1.6"/></g>
<text x="-3" y="-16.4" text-anchor="end" font-size="11">20</text>
<text x="-3" y="-36.6" text-anchor="end" font-size="11">40</text>
<text x="-3" y="-56.9" text-anchor="end" font-size="11">60</text>
<text x="-3" y="-77.1" text-anchor="end" font-size="11">80</text>
<circle r="91.0" fill="none" stroke="#222" stroke-width="1.2"/>
</g>
<text x="212.0" y="632.4" text-anchor="middle" font-size="11">360</text>
<text x="255.4" y="645.3" font-size="11">30</text>
<text x="292.8" y="682.4" font-size="11">60</text>
<text x="306.6" y="732.7" font-size="11">90</text>
<text x="293.6" y="782.5" font-size="11">120</text>
<text x="255.0" y="819.8" font-size="11">150</text>
<text x="212.0" y="832.8" text-anchor="middle" font-size="11">180</text>
<text x="150.6" y="819.8" font-size="11">210</text>
<text x="112.6" y="782.7" font-size="11">240</text>
<text x="98.5" y="732.8" font-size="11">270</text>
<text x="112.6" y="682.9" font-size="11">300</text>
<text x="150.6" y="645.3" font-size="11">330</text>
<text x="212.0" y="610.7" text-anchor="middle" font-size="19.5" font-weight="bold">MP1</text>
<g transform="translate(482 729)">
<circle r="91.0" fill="#fff"/>
<circle r="20.22" fill="none" stroke="#000" stroke-width="1"/>
<circle r="40.44" fill="none" stroke="#000" stroke-width="1"/>
<circle r="60.67" fill="none" stroke="#000" stroke-width="1"/>
<circle r="80.89" fill="none" stroke="#000" stroke-width="1"/>
<line x1="0" y1="0" x2="45.50" y2="-78.81" stroke="#000" stroke-width="1"/>
<line x1="0" y1="0" x2="78.81" y2="-45.50" stroke="#000" stroke-width="1"/>
<line x1="0" y1="0" x2="78.81" y2="45.50" stroke="#000" stroke-width="1"/>
<line x1="0" y1="0" x2="45.50" y2="78.81" stroke="#000" stroke-width="1"/>
<line x1="0" y1="0" x2="-45.50" y2="78.81" stroke="#000" stroke-width="1"/>
<line x1="0" y1="0" x2="-78.81" y2="45.50" stroke="#000" stroke-width="1"/>
<line x1="0" y1="0" x2="-78.81" y2="-45.50" stroke="#000" stroke-width="1"/>
<line x1="0" y1="0" x2="-45.50" y2="-78.81" stroke="#000" stroke-width="1"/>
<line x1="-91.0" y1="0" x2="91.0" y2="0" stroke="#7A7A7A" stroke-width="2"/>
<line x1="0" y1="-91.0" x2="0" y2="91.0" stroke="#7A7A7A" stroke-width="2"/>
<rect x="-19" y="-26.7" width="17" height="13" fill="#fff"/>
<rect x="-19" y="-46.9" width="17" height="13" fill="#fff"/>
<rect x="-19" y="-67.2" width="17" height="13" fill="#fff"/>
<rect x="-19" y="-87.4" width="17" height="13" fill="#fff"/>
<g fill="none" stroke-width="4.5" stroke-linecap="round" stroke-linejoin="round"><path stroke="#001aff" d="M-49.1 12.3l1 -1M-44.9 8.3l1.1 -1 1.2 -.9 1.1 -.9M-39.1 3.8l1.2 -.8 1.2 -.8M-35.5 1.4l1.3 -.7 1.3 -.7 1.3 -.6 1.3 -.6 1.3 -.6 1.3 -.6 1.3 -.5 1.4 -.5 1.4 -.4M-22.3 -4.2l1.4 -.4 1.4 -.3 1.4 -.3 1.4 -.3 1.4 -.2 1.4 -.2 1.5 -.1 1.4 -.1 1.4 -.1 1.4 0 1.5 0 1.4 0 1.4 .1M3.7 48.2l.1 -1.5M5.9 33.2l.3 -1.5 .3 -1.5M7.2 27.2l.3 -1.5 .4 -1.5 .4 -1.5 .4 -1.5 .5 -1.4 .4 -1.5 .5 -1.5 .5 -1.4 .5 -1.4M11.6 12.5l.6 -1.4 .6 -1.4 .6 -1.4 .6 -1.3 .6 -1.4 .7 -1.3M16 2.9l.7 -1.3 .7 -1.3 .8 -1.2 .7 -1.3 .8 -1.2 .8 -1.2 .9 -1.2M22.2 -6.9l.9 -1.1M24 -9.1l.9 -1.1 1 -1.1 .9 -1 1 -1 1 -.9M33 -17.8l1 -.8 1.1 -.7 1.2 -.8M38.5 -21.5l1.2 -.6 1.2 -.6M25.3 19.7l.2 -1.5 .2 -1.5 .2 -1.6M26.1 13.6l.3 -1.5M26.6 10.6l.3 -1.5M27.2 7.6l.3 -1.5 .3 -1.5M28.2 3.2l.3 -1.5M28.9 .3l.4 -1.5 .4 -1.4 .5 -1.4M31.6 -8.1l.5 -1.4M32.7 -10.8l.6 -1.3M35.1 -15.9l.6 -1.2 .7 -1.2M34.5 20.2l0 -1.5M34.5 14l0 -1.6M34.8 4.7l.1 -1.6 .2 -1.5M35.5 -2.9l.2 -1.5 .2 -1.5M36.7 -10.3l.3 -1.4M-35.5 17.1l0 1.6 -.1 1.6 -.1 1.5M-36.1 29.6l-.1 1.6M-36.3 32.8l-.1 1.5 -.1 1.5M-45.5 -14.7l-.1 1.5 -.2 1.6 -.2 1.5M-46.2 -8.5l-.2 1.5M-46.9 -3.9l-.3 1.6M-48 2.4l-.3 1.6M-48.9 7.1l-.3 1.6M-35.2 -15.6l.6 1.3 .6 1.2 .6 1.3M-31.3 -6.4l.4 1.4 .5 1.4M-29.6 -.8l.4 1.4M-28.5 3.5l.4 1.5 .3 1.5 .3 1.5 .3 1.5 .2 1.5 .3 1.5 .2 1.5M-26.3 15.5l.2 1.6 .2 1.5M-25.7 20.1l.1 1.6M-24.9 30.9l0 1.5 .1 1.6M-42.2 -20.5l.3 1.4 .2 1.4 .2 1.4 .2 1.5 .1 1.4M-41 -11.9l.1 1.4M-40.6 -4.5l.1 1.6M-40.5 4.8l-.1 1.5M-40.7 9.4l-.1 1.6 -.1 1.5M-41.1 15.7l-.1 1.5M-41.6 21.9l-.1 1.6M-13.7 -4.9l1.1 .8 1.2 .8 1.1 .9M-7 .3l1.1 1 1.1 1 1 1M-2.8 4.3l1 1.1 1 1.1 .9 1.1 1 1.2 .9 1.1 .9 1.2 .8 1.2 .9 1.3 .8 1.2 .8 1.3M8.5 19.9l.7 1.3M9.9 22.6l.7 1.3 .7 1.4 .6 1.3 .6 1.4 .6 1.4M13.7 30.8l.5 1.3 .6 1.4 .5 1.4M-18.5 5.2l1.2 -.9 1.2 -.9 1.2 -.8 1.2 -.8 1.2 -.7 1.3 -.7 1.3 -.7 1.3 -.7 1.3 -.6 1.3 -.6 1.3 -.6 1.4 -.5 1.3 -.5 1.4 -.5 1.3 -.4 1.4 -.4 1.4 -.3 1.4 -.3 1.4 -.3 1.4 -.2 1.4 -.2 1.4 -.1 1.5 -.2 1.4 0 1.4 -.1 1.4 0 1.4 .1 1.4 .1 1.5 .1 1.4 .1 1.4 .2 1.4 .3 1.4 .2 1.3 .3 1.4 .4 1.4 .3 1.4 .5 1.3 .4 1.3 .5 1.4 .5M38.2 -1.6l1.3 .6 1.2 .7 1.3 .7 1.2 .7 1.3 .7M45.7 2.6l1.2 .8M-47.3 -30.5l1.1 .7M-39.3 -23.9l.9 1M-37.5 -21.9l.8 1 .9 1.1M-35 -18.8l.8 1.1 .8 1.2 .8 1.1 .7 1.2 .7 1.2 .7 1.2 .7 1.3 .7 1.2 .6 1.3 .6 1.3 .6 1.3 .6 1.4 .5 1.4 .6 1.3 .5 1.4 .5 1.4 .4 1.5 .5 1.4 .4 1.4 .4 1.5 .4 1.5 .4 1.5 .3 1.4 .3 1.5 .3 1.6 .3 1.5 .3 1.5 .3 1.5 .2 1.5 .2 1.6 .3 1.5 .1 1.5 .2 1.6M-32.1 -14.9l1.3 .5 1.2 .4M-23.4 -10.9l1.2 .7 1.2 .7 1.2 .8 1.1 .8 1.2 .8 1.1 .9M-14.2 -4.4l1 1 1.1 1 1 1 1 1 1 1.1 1 1.1 .9 1.1 1 1.1M-5.3 5.2l.9 1.2 .8 1.2 .9 1.2 .8 1.3 .8 1.2M-.3 12.6l.7 1.3 .8 1.3 .7 1.4 .7 1.3 .6 1.4 .7 1.3 .6 1.4 .6 1.4M6.3 26.2l.5 1.4"/><path stroke="#0033ff" d="M-64 34.3l.7 -1.3M-62.6 31.7l.6 -1.4M-60.5 27.7l.7 -1.2M-59 25.2l.8 -1.3M-57.4 22.7l.8 -1.2 .9 -1.2 .8 -1.2 .9 -1.2M-53 16.7l.9 -1.1 1 -1.1 1 -1.1 1 -1.1M-48.1 11.3l1.1 -1.1 1 -1 1.1 -.9M-41.5 5.5l1.2 -.9 1.2 -.8M-36.7 2.2l1.2 -.8M-23.6 -3.8l1.3 -.4M3.2 52.6l.1 -1.4 .2 -1.5 .2 -1.5M3.8 46.7l.2 -1.5 .2 -1.5 .2 -1.5 .2 -1.5 .3 -1.5 .2 -1.5 .3 -1.5 .2 -1.5 .3 -1.5M6.5 30.2l.3 -1.5 .4 -1.5M11.1 14l.5 -1.5M15.3 4.3l.7 -1.4M21.4 -5.8l.8 -1.1M23.1 -8l.9 -1.1M28.8 -14.2l1 -1 1 -.9 1.1 -.8 1.1 -.9M36.3 -20.1l1.1 -.7 1.1 -.7M40.9 -22.7l1.2 -.6 1.2 -.5 1.2 -.5 1.2 -.4 1.3 -.4 1.2 -.4 1.3 -.4 1.3 -.3 1.3 -.2M53.3 -26.6l1.3 -.2 1.3 -.2 1.4 -.1M59.9 -27.2l1.3 0 1.3 .1 1.4 .1M65.2 -26.9l1.3 .2M67.9 -26.5l1.3 .2M25.9 15.1l.2 -1.5M26.4 12.1l.2 -1.5M26.9 9.1l.3 -1.5M27.8 4.6l.4 -1.4M28.5 1.7l.4 -1.4M30.2 -4l.4 -1.4 .5 -1.4 .5 -1.3M32.1 -9.5l.6 -1.3M33.3 -12.1l.5 -1.3 .7 -1.2 .6 -1.3M36.4 -18.3l.7 -1.1 .7 -1.2 .8 -1.1 .7 -1.1 .8 -1.1 .8 -1 .8 -1 .9 -1 .8 -1 .9 -.9 .9 -.9 1 -.9 .9 -.9 1 -.8 1 -.8 1 -.7 1 -.7 1 -.7M51.6 -57.2l-1.2 -1.2M49.2 -59.5l-1.2 -1.2M-56.1 67.5l.3 -1.4 .3 -1.3M-54.8 62.1l.3 -1.3M-54.2 59.4l.4 -1.3M-31.6 60.5l.3 -1.4 .3 -1.4M-29.4 50.7l.3 -1.4 .4 -1.4 .4 -1.4 .4 -1.5 .4 -1.4 .5 -1.4M-26.6 40.8l.5 -1.4 .5 -1.5 .5 -1.4 .5 -1.4 .6 -1.4 .5 -1.4 .6 -1.4 .6 -1.3 .7 -1.4 .6 -1.4 .7 -1.3M36.3 61.3l0 -1.5M36.3 58.4l-.1 -1.5 0 -1.4M36.1 52.5l-.1 -1.5M35.8 46.5l-.1 -1.5M35.6 43.5l-.1 -1.5 -.1 -1.6 0 -1.5 -.1 -1.5 -.1 -1.6 -.1 -1.5 -.1 -1.6M34.9 31.2l-.1 -1.6 0 -1.5 -.1 -1.6 -.1 -1.6 0 -1.5 -.1 -1.6 0 -1.6M34.5 18.7l0 -1.6 0 -1.6 0 -1.5M34.5 12.4l0 -1.5 .1 -1.6 .1 -1.5 0 -1.6 .1 -1.5M35.1 1.6l.1 -1.5 .2 -1.5 .1 -1.5M35.9 -5.9l.3 -1.5 .2 -1.4 .3 -1.5M37 -11.7l.3 -1.4 .3 -1.4 .4 -1.4 .4 -1.4 .4 -1.3 .4 -1.4 .4 -1.3 .5 -1.3 .5 -1.3M41.1 -25.2l.5 -1.2 .6 -1.2 .6 -1.2 .6 -1.2 .6 -1.1 .7 -1.2 .6 -1.1 .7 -1.1 .7 -1M48.2 -37.5l.8 -1 .8 -1M50.7 -40.4l.8 -.9M54.2 -43.8l.9 -.7M56.1 -45.3l1 -.7 1 -.7M65.6 -39.7l-1.1 -1.3M57.8 -48.5l-1.1 -1.2M55.6 -50.9l-1.1 -1.3 -1.1 -1.2M49.2 -58.4l-1.1 -1.2M70.9 -51.4l-1.4 -1M56.1 -60.6l-1.5 -.9M48.7 -65l-1.5 -.9M42.8 -68.6l-1.5 -.9 -1.4 -.9 -1.5 -.9M35.5 -73.1l-1.4 -.9M24.3 -80.3l-1.4 -.9M50 60.1l-.1 -1.5 0 -1.4M49.6 52.7l-.1 -1.5 -.2 -1.5M49.2 48.2l-.2 -1.5 -.2 -1.5M48.7 43.7l-.2 -1.5 -.2 -1.6 -.3 -1.5 -.2 -1.5 -.2 -1.6 -.2 -1.5M-35.5 12.4l0 1.6 0 1.6 0 1.5M-35.7 21.8l0 1.6 -.1 1.6 -.1 1.5 -.1 1.6 -.1 1.5M-36.2 31.2l-.1 1.6M-36.5 35.8l-.1 1.6 -.1 1.5 -.1 1.6 -.1 1.5 -.1 1.5 -.1 1.5M-37.3 48l-.1 1.6 -.1 1.4M-37.7 55.5l0 1.5 -.1 1.4M-44.8 -26.7l0 1.5 -.1 1.5 0 1.5 -.1 1.4 -.1 1.5 -.1 1.6 -.1 1.5 -.2 1.5M-46 -10.1l-.2 1.6M-46.4 -7l-.3 1.6 -.2 1.5M-47.2 -2.3l-.2 1.6 -.3 1.5 -.3 1.6M-48.3 4l-.3 1.5 -.3 1.6M-49.2 8.7l-.4 1.5 -.3 1.6 -.3 1.6 -.4 1.5 -.3 1.6 -.4 1.6M-52 21.2l-.3 1.6 -.4 1.5 -.3 1.6M-53.7 29l-.3 1.5 -.3 1.5M-55 35.1l-.3 1.5 -.3 1.6M-56.2 41.2l-.2 1.5M-57.1 47.3l-.2 1.5M-57.5 50.3l-.2 1.5 -.2 1.5M-50.9 -55l-1.1 1.2 -1.1 1.2M-58.7 -46.4l-1.1 1.2 -1.2 1.3M-63.3 -41.4l-1.1 1.2M-61.9 -40l1.1 .4M-56.2 -37.7l1.1 .6 1 .6 1.1 .6 1.1 .7M-50.9 -34.5l1 .7 1 .8 1 .8 .9 .8 .9 .9 .9 .9 .9 .9 .9 1 .9 .9 .8 1M-40.9 -24.7l.8 1 .8 1.1 .7 1.1 .7 1.2 .7 1.1 .7 1.2 .7 1.2 .6 1.2M-33.4 -11.8l.5 1.3 .6 1.4 .5 1.3 .5 1.4M-30.4 -3.6l.4 1.4 .4 1.4M-29.2 .6l.4 1.5 .3 1.4M-26.5 14l.2 1.5M-25.9 18.6l.2 1.5M-25.6 21.7l.1 1.5 .2 1.5 .1 1.6 .1 1.5 .1 1.6 .1 1.5M-24.8 34l.1 1.5 0 1.5M-24.6 38.6l0 1.5 0 1.5 .1 1.5 0 1.5 0 1.5 0 1.5 .1 1.5 0 1.5 0 1.5 0 1.5M-24.3 55.1l0 1.4 0 1.5 .1 1.4 0 1.5 .1 1.4M-24 65.1l.1 1.5M-23.7 69.4l.2 1.3M-49 -55.5l.3 1.2M-47.9 -50.6l.2 1.3 .2 1.3 .2 1.3M-47.1 -45.4l.1 1.3M-46.9 -42.7l0 1.3 .1 1.4 0 1.4 0 1.4 0 1.4M-46.8 -34.4l-.1 1.4 -.1 1.5 -.1 1.4 -.1 1.5 -.2 1.4M-47.5 -25.7l-.2 1.5 -.2 1.5 -.2 1.5 -.2 1.5 -.3 1.5 -.2 1.5 -.3 1.6 -.3 1.5 -.3 1.5 -.3 1.6 -.3 1.5 -.4 1.6 -.3 1.5 -.4 1.6 -.3 1.5 -.4 1.6 -.4 1.5 -.4 1.6 -.4 1.5 -.4 1.6 -.4 1.5 -.4 1.6 -.4 1.6 -.4 1.5 -.4 1.6 -.4 1.5 -.5 1.6 -.4 1.5 -.4 1.6 -.4 1.5M-53.3 -46.6l.8 .9 .7 1 .7 1M-49.8 -41.6l.7 1M-48.5 -39.5l.6 1.2 .5 1.1M-46.8 -36l.5 1.2 .5 1.2 .4 1.2 .5 1.2 .4 1.3 .4 1.3 .4 1.3 .3 1.3 .4 1.4 .3 1.3 .2 1.4 .3 1.4M-41.2 -13.4l.2 1.5M-40.9 -10.5l.1 1.5 .1 1.5 .1 1.5 0 1.5M-40.5 -2.9l0 1.5 0 1.5 0 1.6 0 1.5 0 1.6M-40.6 6.3l0 1.6 -.1 1.5M-40.9 12.5l-.1 1.6 -.1 1.6M-41.2 17.2l-.1 1.6 -.1 1.6 -.2 1.5M-41.7 23.5l-.2 1.5 -.1 1.6 -.2 1.5 -.1 1.6 -.2 1.5 -.1 1.6 -.2 1.5M-43 35.9l-.1 1.5 -.2 1.5 -.1 1.6 -.2 1.5 -.1 1.5 -.1 1.5 -.2 1.5 -.1 1.5 -.1 1.5M-44.3 51l-.1 1.5M-44.4 54l-.1 1.4 -.1 1.5M-10.3 -2.4l1.2 .8 1.1 1 1 .9M-3.8 3.3l1 1M6.2 16.1l.8 1.2 .8 1.3 .7 1.3M9.2 21.2l.7 1.4M13.1 29.4l.6 1.4M15.3 34.9l.5 1.5 .5 1.4 .4 1.4 .5 1.4 .4 1.4 .4 1.4 .4 1.4 .4 1.5 .4 1.4M19.5 49.1l.4 1.4 .3 1.4 .3 1.4M20.9 54.7l.3 1.4 .3 1.4 .3 1.4 .2 1.4M22.3 61.6l.3 1.4 .3 1.4M23.4 67l.2 1.4M35.6 -2.8l1.3 .6 1.3 .6M44.5 1.8l1.2 .8M46.9 3.4l1.1 .9 1.2 .8 1.1 .9 1.2 1 1.1 .9 1 1 1.1 1 1 1 1.1 1.1 1 1.1 .9 1.1 1 1.1 .9 1.1 .9 1.2 .9 1.2 .9 1.2 .8 1.2 .9 1.2M66.6 24.9l.7 1.2 .8 1.3M69.5 30l.7 1.3 .6 1.4M-63.3 -50.8l1.1 .5 1.1 .5M-55.9 -46.6l1 .8M-51.3 -42.6l.9 .9M-49.6 -40.8l.9 1M-67.6 -37.1l1.3 .1M-62.5 -36.5l1.2 .2M-57.6 -35.3l1.2 .4 1.2 .4M-51.7 -33l1.1 .6 1.1 .6 1.1 .7M-46.2 -29.8l1 .8 1 .8 1 .8 1 .8 1 .9 .9 .9 1 .9M-38.4 -22.9l.9 1M-35.8 -19.8l.8 1M-66.7 -13.3l1.3 -.6M-62.8 -14.8l1.3 -.5 1.3 -.3 1.4 -.4 1.3 -.3 1.3 -.3 1.4 -.2 1.3 -.2 1.4 -.2 1.3 -.1 1.4 -.1 1.3 0 1.4 0 1.3 0 1.4 .1 1.3 .1 1.4 .2 1.3 .2 1.3 .2 1.3 .2 1.4 .4 1.3 .3 1.3 .4 1.3 .4M-29.6 -14l1.3 .6 1.2 .5 1.3 .6 1.2 .7 1.2 .7M-16.4 -6.2l1.1 .9 1.1 .9M-6.2 4l.9 1.2M-1.1 11.3l.8 1.3M5.1 23.4l.6 1.4 .6 1.4M6.8 27.6l.5 1.5 .6 1.4 .4 1.4 .5 1.5 .5 1.4 .4 1.5 .4 1.4 .4 1.5 .4 1.4 .3 1.5 .4 1.4"/><path stroke="#004cff" d="M-70.3 50.6l.5 -1.3M-69.4 47.9l.5 -1.4 .5 -1.3 .5 -1.4M-66.9 41.1l.6 -1.4 .5 -1.4 .6 -1.3 .6 -1.4M-63.3 33l.7 -1.3M-62 30.3l.7 -1.3 .8 -1.3M-59.8 26.5l.8 -1.3M-58.2 23.9l.8 -1.2M-54 17.9l1 -1.2M52.1 -26.4l1.2 -.2M57.3 -27.1l1.3 -.1 1.3 0M69.2 -26.3l1.3 .3 1.4 .3M73.2 -25.3l1.3 .4 1.3 .4M79.8 -22.9l1.3 .6M86.2 -19.6l0 0M52.1 -35.2l1.1 -.7 1 -.6 1.1 -.6 1.1 -.5 1.2 -.5M58.7 -38.6l1.2 -.5 1.1 -.4 1.2 -.4 1.2 -.3 1.2 -.3 1.3 -.3M72.2 -41.5l1.2 0 1.3 0M54 -54.9l-1.2 -1.1 -1.2 -1.2M50.4 -58.4l-1.2 -1.1M48 -60.7l-1.1 -1.1 -1.2 -1.2M43.4 -65.3l-1.1 -1.2 -1.1 -1.1M40.1 -68.8l-1.1 -1.1 -1.1 -1.2 -1.1 -1.1M35.8 -73.4l-1 -1.1M33.7 -75.7l-1 -1.1M29.8 -80.2l-1 -1.2M27.9 -82.5l-.9 -1.2M-55.5 64.8l.4 -1.3 .3 -1.4M-54.5 60.8l.3 -1.4M-34.5 75.2l.3 -1.3M-34 72.6l.3 -1.3 .2 -1.3 .3 -1.3M-32.9 67.3l.2 -1.3M-32.4 64.6l.2 -1.3 .3 -1.4 .3 -1.4M-31 57.7l.3 -1.4 .3 -1.4 .3 -1.4 .3 -1.4 .4 -1.4M-27 42.2l.4 -1.4M35.7 72.7l.2 -1.4 .1 -1.4 .1 -1.4 .1 -1.4 0 -1.5M36.3 64.2l0 -1.5M36.3 59.8l0 -1.4M36.2 55.5l0 -1.5 -.1 -1.5M36 51l0 -1.5 -.1 -1.5 -.1 -1.5M35.7 45l-.1 -1.5M35 32.7l-.1 -1.5M40.6 -23.9l.5 -1.3M46.7 -35.5l.8 -1 .7 -1M51.5 -41.3l.9 -.8 .9 -.9M55.1 -44.5l1 -.8M58.1 -46.7l1 -.6 1.1 -.6 1 -.6 1.1 -.5M80 -23.1l-1.1 -1.3 -1.1 -1.3 -1 -1.3 -1.2 -1.3 -1.1 -1.3 -1.1 -1.2M70.1 -34.7l-1.1 -1.2 -1.2 -1.3M66.7 -38.5l-1.1 -1.2M64.5 -41l-1.2 -1.2M62.2 -43.5l-1.1 -1.2M56.7 -49.7l-1.1 -1.2M53.4 -53.4l-1.1 -1.3M51.3 -55.9l-1.1 -1.2M47.1 -60.8l-1 -1.2 -1 -1.3M44.1 -64.5l-1 -1.2M41.2 -68.1l-.9 -1.2M38.5 -71.8l-.9 -1.2M35 -76.6l-.8 -1.2 -.8 -1.2 -.8 -1.2M31.8 -81.4l-.7 -1.2M78.8 -36.7l-1.2 -1.1M71.2 -43.6l-1.3 -1.1M67.4 -47l-1.3 -1.1M63.5 -50.3l-1.3 -1.1 -1.3 -1.2M59.6 -53.7l-1.3 -1.1M57.1 -55.9l-1.3 -1.1M54.5 -58.1l-1.3 -1.1M50.7 -61.4l-1.3 -1.1M42 -69l-1.2 -1.1 -1.2 -1.1M38.5 -72.3l-1.2 -1.1M36.1 -74.4l-1.1 -1.1M31.6 -78.8l-1.1 -1.1M29.4 -80.9l-1.1 -1.1 -1 -1.1M69.5 -52.4l-1.5 -.9M65 -55.1l-1.4 -.9 -1.5 -.9 -1.5 -1M59.1 -58.8l-1.5 -.9 -1.5 -.9M54.6 -61.5l-1.5 -.9M51.7 -63.3l-1.5 -.8M47.2 -65.9l-1.5 -.9 -1.4 -.9 -1.5 -.9M34.1 -74l-1.4 -.9 -1.5 -.9 -1.4 -.9M28.4 -77.6l-1.4 -.9M22.9 -81.2l-1.3 -.9 -1.4 -.9 -1.3 -.9 -1.3 -.9M49.2 73.3l.2 -1.5 .2 -1.4M49.7 68.9l.1 -1.4 .1 -1.5M50 63.1l0 -1.5M49.9 57.2l-.1 -1.5 -.1 -1.5 -.1 -1.5M49.3 49.7l-.1 -1.5M48.8 45.2l-.1 -1.5M47.4 34.5l-.2 -1.5M-37.1 45l-.1 1.5 -.1 1.5M-37.5 51l-.1 1.5M-37.8 59.9l0 1.5M-37.8 62.8l0 1.4 0 1.5 .1 1.4 .1 1.4 .1 1.5M-37.4 71.4l.1 1.4 .2 1.4M-36.7 77l.2 1.3M-51.3 18.1l-.3 1.5 -.4 1.6M-53 25.9l-.3 1.5 -.4 1.6M-54.3 32l-.4 1.6 -.3 1.5M-55.6 38.2l-.3 1.5M-56.4 42.7l-.3 1.6 -.2 1.5M-57.3 48.8l-.2 1.5M-57.9 53.3l-.1 1.5 -.1 1.6 -.1 1.5 -.1 1.5M45.8 -75.2l-1.7 -.6M-30.1 -81.7l-.8 1.2 -.8 1.2M-33.3 -76.9l-.8 1.2M-36.8 -72.1l-.9 1.2M-38.7 -69.7l-.9 1.2 -1 1.3 -.9 1.2 -1 1.2 -1 1.2 -1.1 1.2 -1 1.3M-47.7 -58.7l-1.1 1.2 -1 1.2 -1.1 1.3M-54.2 -51.3l-1.1 1.2 -1.1 1.2 -1.2 1.3 -1.1 1.2M-62.1 -42.7l-1.2 1.3M-64.4 -40.2l-1.2 1.3 -1.1 1.2 -1.2 1.3 -1.1 1.2 -1.1 1.3M-71.3 -32.7l-1.1 1.3 -1.2 1.3M-79.2 -23.7l-1.1 1.3 -1.1 1.3M-77 -41.8l1.3 -.1M-70.5 -41.7l1.2 .1 1.3 .2M-65.6 -41l1.3 .3 1.2 .3 1.2 .4M-59.6 -39.2l1.1 .5M-57.3 -38.2l1.1 .5M-51.9 -35.2l1 .7M-41.7 -25.8l.8 1.1M-24.7 37l.1 1.6M-24.4 53.6l.1 1.5M-24.1 62.3l0 1.4 .1 1.4M-23.9 66.6l.1 1.4 .1 1.4M-23.4 72.1l.2 1.4M-23.1 74.8l.2 1.4M-22.6 77.5l.2 1.4M-22.1 80.2l.2 1.3M-53.1 -65.4l.5 1 .6 1 .5 1.1 .5 1.1 .4 1.1 .5 1.1 .4 1.2 .3 1.1 .4 1.2M-48.7 -54.3l.3 1.2 .3 1.3 .2 1.2M-47.3 -46.7l.2 1.3M-47 -44.1l.1 1.4M-46.8 -35.8l0 1.4M-47.4 -27.2l-.1 1.5M-57.8 20.5l-.4 1.5M-65.1 -56.3l1 .5 1 .6M-62.1 -54.5l1 .6M-60.1 -53.2l.9 .7 .9 .8M-57.4 -50.9l.9 .8M-54.9 -48.4l.8 .9M-51.1 -43.7l.7 1 .6 1.1M-49.1 -40.6l.6 1.1M-47.4 -37.2l.6 1.2M-42.8 34.3l-.2 1.6M-44.2 49.5l-.1 1.5M-44.4 52.5l0 1.5M-44.6 58.4l0 1.5 0 1.4M19.2 47.7l.3 1.4M20.5 53.3l.4 1.4M22 60.3l.3 1.3M23.1 65.7l.3 1.3M23.6 68.4l.3 1.3M24.2 71l.2 1.3M25.3 76.1l.2 1.3M65 22.4l.8 1.2 .8 1.3M68.1 27.4l.7 1.3 .7 1.3M70.8 32.7l.7 1.3 .6 1.3 .6 1.4 .6 1.3M73.9 39.4l.5 1.3 .6 1.4M75.5 43.5l.5 1.3M-67.9 -52.5l1.2 .4 1.1 .4 1.2 .4 1.1 .5M-61.1 -49.8l1.1 .6M-58.9 -48.6l1 .6M-56.9 -47.3l1 .7M-53 -44.3l.9 .9 .8 .8M-50.4 -41.7l.8 .9M-78.2 -36.4l1.4 -.2M-71.5 -37.1l1.3 0M-68.9 -37.1l1.3 0M-66.3 -37l1.3 .1 1.2 .2 1.3 .2M-61.3 -36.3l1.3 .3 1.2 .3 1.2 .4M-55.2 -34.5l1.2 .5 1.1 .5 1.2 .5M-48.4 -31.1l1.1 .6M-81.3 -4.3l1.1 -.9M-79 -6.1l1.2 -.9M-73 -10.2l1.2 -.7 1.3 -.6M-69.3 -12.2l1.3 -.6 1.3 -.5M-65.4 -13.9l1.3 -.5 1.3 -.4"/><path stroke="#0066ff" d="M-70.7 52l.4 -1.4M-67.9 43.8l.5 -1.4 .5 -1.3M-64.6 35.6l.6 -1.3M63.9 -27l1.3 .1M71.9 -25.7l1.3 .4M75.8 -24.5l1.4 .5 1.3 .5 1.3 .6M81.1 -22.3l1.3 .6M83.7 -21l1.2 .7 1.3 .7M57.6 -38.1l1.1 -.5M65.9 -40.8l1.2 -.2M69.6 -41.3l1.3 -.1 1.3 -.1M76 -41.5l1.4 .1M45.7 -63l-1.1 -1.2 -1.2 -1.1M41.2 -67.6l-1.1 -1.2M36.8 -72.2l-1 -1.2M34.8 -74.5l-1.1 -1.2M32.7 -76.8l-1 -1.2 -1 -1.1 -.9 -1.1M28.8 -81.4l-.9 -1.1M27 -83.7l0 0M-35.6 80.2l.3 -1.2M-35 77.8l.2 -1.3 .3 -1.3M-34.2 73.9l.2 -1.3M-33.2 68.7l.3 -1.4M-32.7 66l.3 -1.4M34.7 79.6l.2 -1.4 .3 -1.3 .2 -1.4M35.6 74.1l.1 -1.4M36.2 65.6l.1 -1.4M49.8 -39.5l.9 -.9M53.3 -43l.9 -.8M87.4 -13.7l-1.1 -1.4 -1 -1.3 -1 -1.4 -1.1 -1.3 -1 -1.4 -1.1 -1.3M73.4 -30.8l-1.1 -1.3M71.2 -33.4l-1.1 -1.3M67.8 -37.2l-1.1 -1.3M63.3 -42.2l-1.1 -1.3M60 -46l-1.1 -1.2 -1.1 -1.3M52.3 -54.7l-1 -1.2M50.2 -57.1l-1 -1.3M48.1 -59.6l-1 -1.2M45.1 -63.3l-1 -1.2M43.1 -65.7l-.9 -1.2 -1 -1.2M39.4 -70.6l-.9 -1.2M36.7 -74.2l-.9 -1.2 -.8 -1.2M76.3 -39l-1.2 -1.1 -1.3 -1.2 -1.3 -1.1 -1.3 -1.2M68.7 -45.8l-1.3 -1.2M66.1 -48.1l-1.3 -1.1 -1.3 -1.1M58.3 -54.8l-1.2 -1.1M55.8 -57l-1.3 -1.1M53.2 -59.2l-1.2 -1.1M49.4 -62.5l-1.2 -1.1 -1.3 -1.1M45.7 -65.7l-1.2 -1.1 -1.2 -1.1 -1.3 -1.1M39.6 -71.2l-1.1 -1.1M37.3 -73.4l-1.2 -1M33.8 -76.6l-1.1 -1.1 -1.1 -1.1M27.3 -83.1l-1.1 -1.1M72.4 -50.5l-1.5 -.9M66.5 -54.2l-1.5 -.9M53.1 -62.4l-1.4 -.9M50.2 -64.1l-1.5 -.9M37 -72.2l-1.5 -.9M29.8 -76.7l-1.4 -.9M27 -78.5l-1.3 -.9 -1.4 -.9M17.6 -84.8l-1.3 -.9 -1.3 -.9M49.9 66l.1 -1.5 0 -1.4M50 61.6l0 -1.5M-37.6 52.5l0 1.5 -.1 1.5M-37.8 58.4l0 1.5M-37.8 61.4l0 1.4M-37.5 70l.1 1.4M-37.1 74.2l.2 1.4 .2 1.4M-36.5 78.3l.3 1.4M-55.9 39.7l-.3 1.5M-56.9 45.8l-.2 1.5M-58.3 59.4l0 1.5 0 1.5 0 1.5 .1 1.5M-31.7 -79.3l-.8 1.2 -.8 1.2M-35 -74.5l-.9 1.2M-37.7 -70.9l-1 1.2M-45.6 -61.1l-1 1.2 -1.1 1.2M-73.6 -30.1l-1.1 1.3 -1.1 1.2 -1.2 1.3 -1.1 1.3M-81.4 -21.1l-1.1 1.3M-83.6 -18.5l-1 1.3 -1.1 1.4M-75.7 -41.9l1.3 0M-68 -41.4l1.2 .2 1.2 .2M-60.8 -39.6l1.2 .4M-58.5 -38.7l1.2 .5M-22.9 76.2l.3 1.3M-22.4 78.9l.3 1.3M-21.9 81.5l.4 1.3 .3 1.3M-55 -68.3l.6 .9 .7 1M-66.2 -56.9l1.1 .6M-61.1 -53.9l1 .7M-58.3 -51.7l.9 .8M-56.5 -50.1l.8 .8 .8 .9M-54.1 -47.5l.8 .9M-44.6 56.9l0 1.5M22.9 64.4l.2 1.3M23.9 69.7l.3 1.3M24.4 72.3l.3 1.3M25.8 78.6l.3 1.3M26.5 81.1l.3 1.2M27.1 83.5l0 0M73.3 38l.6 1.4M75 42.1l.5 1.4M-70.4 -53.1l1.3 .3 1.2 .3M-60 -49.2l1.1 .6M-57.9 -48l1 .7M-54.9 -45.8l.9 .7 1 .8M-80.8 -35.8l1.3 -.3 1.3 -.3M-76.8 -36.6l1.3 -.2 1.3 -.1 1.4 -.2 1.3 0M-70.2 -37.1l1.3 0M-87.8 1.9l1.1 -1.1 1 -1.1M-83.5 -2.4l1.1 -.9 1.1 -1M-77.8 -7l1.2 -.8 1.2 -.8 1.2 -.8 1.2 -.8"/><path stroke="#0080ff" d="M-69.8 49.3l.4 -1.4M66.5 -26.7l1.4 .2M67.1 -41l1.2 -.2M77.4 -41.4l0 0M22.2 -85.3l0 0M-35.3 79l.3 -1.2M35.4 75.5l.2 -1.4M36.3 62.7l0 -1.4M81.1 -21.8l-1.1 -1.3M72.3 -32.1l-1.1 -1.3M61.1 -44.7l-1.1 -1.3M37.6 -73l-.9 -1.2M32.6 -80.2l-.8 -1.2M31.1 -82.6l0 0M81.3 -34.3l-1.2 -1.2 -1.3 -1.2M77.6 -37.8l-1.3 -1.2M69.9 -44.7l-1.2 -1.1M60.9 -52.6l-1.3 -1.1M52 -60.3l-1.3 -1.1M46.9 -64.7l-1.2 -1M35 -75.5l-1.2 -1.1M30.5 -79.9l-1.1 -1M26.2 -84.2l0 0M68 -53.3l-1.5 -.9M38.4 -71.3l-1.4 -.9M49.6 70.4l.1 -1.5M-34.1 -75.7l-.9 1.2M-35.9 -73.3l-.9 1.2M-53.1 -52.6l-1.1 1.3M-61 -43.9l-1.1 1.2M-70.1 -33.9l-1.2 1.2M-78.1 -25l-1.1 1.3M-82.5 -19.8l-1.1 1.3M-85.7 -15.8l-1.1 1.3M-74.4 -41.9l1.3 0 1.3 .1 1.3 .1M-23.5 70.7l.1 1.4M-23.2 73.5l.1 1.3M-21.2 84.1l.4 1.3M-53.7 -66.4l.6 1M-67.3 -57.3l1.1 .4M-63.1 -55.2l1 .7M24.7 73.6l.3 1.3 .3 1.2M25.5 77.4l.3 1.2M26.1 79.9l.4 1.2M-85.7 -.3l1.1 -1 1.1 -1.1M-80.2 -5.2l1.2 -.9M-70.5 -11.5l1.2 -.7"/><path stroke="#0099ff" d="M82.4 -21.7l1.3 .7M68.3 -41.2l1.3 -.1M74.7 -41.5l1.3 0M34.4 81l.3 -1.4M60.6 -57.9l-1.5 -.9M26.8 82.3l.3 1.2"/><path stroke="#00b2ff" d="M23.5 -84.5l-1.3 -.8M40.3 -69.3l-.9 -1.3"/><path stroke="#00ccff" d="M-29.3 -82.9l-.8 1.2"/><path stroke="#0000ff" d="M-12.4 -1.6l1.4 -.6M-8.4 -3.3l1.4 -.5M-4.2 -4.7l1.3 -.4 1.4 -.3M-.1 -5.7l1.5 -.3M5.6 -6.6l1.4 -.1 1.5 -.1 1.4 -.1M26.8 -4.4l1.4 .5M29.5 -3.4l1.4 .5"/><path stroke="#001aff" d="M-2.4 -6l1.4 .2M.4 -5.6l1.4 .2 1.4 .3 1.4 .3 1.4 .4 1.4 .4 1.4 .4 1.3 .5 1.4 .5 1.3 .5 1.4 .6 1.3 .6 1.3 .6 1.3 .7 1.3 .7 1.2 .8 1.3 .7 1.2 .8 1.2 .9 1.2 .8 1.1 .9 1.2 .9 1.1 1 1.1 .9 1.1 1M32.2 10.9l1 1 1 1.1M36.2 15.2l1 1.1M39 18.6l.9 1.2M40.8 21l.8 1.3M-34.7 -23.4l.8 1.1M-31.5 -18.8l.7 1.2M-30.1 -16.3l.7 1.2M-28.1 -12.5l.6 1.3M-26.9 -9.8l.5 1.3 .6 1.4 .5 1.4M-24.8 -4.3l.5 1.5 .4 1.4 .5 1.5 .4 1.5 .3 1.5 .4 1.5 .3 1.5 .4 1.5M-21.3 9.2l.2 1.5 .3 1.5 .2 1.6M-20.1 16.9l.1 1.6 .2 1.6 .2 1.6 .1 1.5M-19.1 31.1l.1 1.6 0 1.6 .1 1.6M-18.9 37.4l0 1.6 0 1.6M-42 -14.9l1.4 .1M-35.3 -14l1.3 .3M-28.8 -12.2l1.3 .5 1.3 .5 1.2 .5 1.3 .6 1.2 .6 1.2 .7 1.3 .6 1.2 .7M-47.1 37.4l.6 -1.3M-44.6 32l.7 -1.3 .7 -1.3M-41.8 26.7l.8 -1.2 .8 -1.3 .8 -1.3 .8 -1.2 .8 -1.3 .9 -1.2 .9 -1.2 .9 -1.2 1 -1.1 .9 -1.2 1 -1.1 1 -1.1 1 -1 1.1 -1.1 1.1 -1 1.1 -1 1.1 -1 1.1 -.9 1.2 -1 1.1 -.9 1.2 -.8 1.2 -.9 1.3 -.8 1.2 -.7 1.3 -.8 1.2 -.7 1.3 -.6 1.3 -.7M-11 -2.2l1.3 -.6 1.3 -.5M-7 -3.8l1.4 -.5 1.4 -.4M-1.5 -5.4l1.4 -.3M1.4 -6l1.4 -.2 1.4 -.2 1.4 -.2M9.9 -6.9l1.4 0 1.5 .1 1.4 .1 1.4 .1 1.4 .1 1.5 .2 1.4 .2 1.4 .3 1.4 .3 1.4 .4 1.4 .3 1.3 .4M28.2 -3.9l1.3 .5M30.9 -2.9l1.3 .6 1.3 .6 1.3 .6 1.3 .7 1.3 .7 1.2 .7 1.3 .7 1.2 .8 1.2 .9 1.2 .8 1.1 .9 1.2 .9M46.9 6.9l1.1 1M50.2 9.9l1 1 1.1 1.1 1 1.1 .9 1.1 1 1.1M56.1 16.5l1 1.1 .8 1.2M59.7 21.2l.8 1.3 .8 1.2M63.6 27.6l.7 1.3M-20.3 25.5l.7 -1.4 .7 -1.3M-18.2 21.5l.8 -1.3 .8 -1.3 .8 -1.3M-11.4 11.5l.9 -1.2 1 -1.1M-8.5 8.1l1 -1.1M-6.5 5.9l1.1 -1 1 -1.1 1.1 -1 1.1 -.9 1.2 -1 1.1 -.9 1.2 -.8 1.2 -.9 1.2 -.8M4.9 -3.3l1.2 -.7 1.3 -.8M8.6 -5.4l1.3 -.7 1.3 -.6 1.3 -.6 1.3 -.5 1.3 -.5 1.4 -.5 1.3 -.4 1.4 -.4 1.3 -.4 1.4 -.3 1.4 -.3 1.3 -.2M26 -11l1.4 -.2 1.4 -.1 1.4 -.1M35.8 -11.4l1.3 .1M46.9 31.4l-.2 -1.5M46 25.2l-.2 -1.5M44.9 17.4l-.2 -1.6M44.1 11.1l-.2 -1.6M43.7 8l-.2 -1.6M43.1 1.7l-.1 -1.6M42.7 -4.5l0 -1.5 -.1 -1.6M42.6 -10.6l0 -1.5 0 -1.5 0 -1.5M42.7 -16.6l.1 -1.5 .1 -1.4M43 -21l.1 -1.4M43.3 -23.8l.2 -1.5M43.7 -26.6l.2 -1.4M50.6 -11.2l-.4 -1.5 -.3 -1.6M-44.4 -33.6l.7 1.2 .6 1.1M-39.8 -23.9l.4 1.3 .5 1.4 .4 1.3M-38.1 -18.5l.4 1.3 .3 1.4M-37.1 -14.4l.3 1.5M-36.5 -11.5l.3 1.5M-36 -8.6l.3 1.5M-35.5 -5.6l.1 1.5 .2 1.5 .2 1.5 .1 1.6M-34.8 2l.1 1.5 .1 1.6 0 1.5 .1 1.6 0 1.6 0 1.5 0 1.6 0 1.6 0 1.5M-34.5 17.6l-.1 1.6 0 1.6 -.1 1.5M-34.8 23.9l0 1.6 -.1 1.5 -.1 1.6M-35.2 31.7l-.1 1.6 -.1 1.5M-19.1 28.5l.2 1.6 .1 1.5 .1 1.5 .2 1.6 .1 1.5 .1 1.5 .1 1.6 .1 1.5M-17.7 51.3l.1 1.5"/><path stroke="#0033ff" d="M-3.9 -6.1l1.5 .1M-1 -5.8l1.4 .2M31.1 9.8l1.1 1.1M34.2 13l1.1 1.1 .9 1.1M37.2 16.3l.9 1.2 .9 1.1M39.9 19.8l.9 1.2M41.6 22.3l.9 1.2 .8 1.2 .8 1.3 .7 1.3 .7 1.3 .8 1.3M47 31.2l.6 1.3 .7 1.4 .6 1.3 .6 1.3 .6 1.4 .6 1.3 .5 1.4M52.3 43.3l.5 1.4M54.6 50.2l.4 1.4M-62 -40.3l1.3 .2M-58.1 -39.5l1.2 .3 1.3 .4 1.2 .5M-53.2 -37.9l1.2 .5M-49.7 -36.2l1.2 .6M-47.4 -35l1.1 .7 1.1 .8M-44.2 -32.8l1.1 .8M-42.1 -31.1l1 .8 1 .9 .9 .9M-38.2 -27.5l.9 1 .9 1 .8 1.1 .9 1M-33.9 -22.3l.8 1.2 .8 1.1 .8 1.2M-30.8 -17.6l.7 1.3M-29.4 -15.1l.6 1.3 .7 1.3M-27.5 -11.2l.6 1.4M-25.3 -5.7l.5 1.4M-21.6 7.6l.3 1.6M-20.6 13.8l.3 1.6 .2 1.5M-19.5 23.2l.1 1.6 .1 1.6 .1 1.6 .1 1.6 0 1.5M-18.9 35.9l0 1.5M-18.9 40.6l0 1.5 0 1.6 0 1.5 -.1 1.6 0 1.5 0 1.5 0 1.5 -.1 1.6 0 1.5 0 1.5 -.1 1.4M-54.9 -47l.9 .9M-51.6 -43.4l.8 .9M-48.7 -39.4l.7 1M-47.3 -37.3l.6 1.1 .6 1.2 .6 1.1M-45 -32.7l.6 1.2 .5 1.2 .4 1.3 .5 1.2 .4 1.3 .5 1.3M-41.8 -23.9l.4 1.4 .4 1.3 .3 1.4 .3 1.4 .3 1.4 .2 1.4 .3 1.4 .2 1.5 .2 1.4 .2 1.5 .2 1.5 .1 1.5 .1 1.5 .1 1.5 .1 1.5 .1 1.5 .1 1.5 0 1.6 .1 1.5 0 1.6 0 1.5 0 1.6 -.1 1.5 0 1.6 -.1 1.6 0 1.5 -.1 1.6 -.1 1.6 -.1 1.5 0 1.6 -.1 1.6 -.2 1.5 -.1 1.6 -.1 1.5 -.1 1.6 -.1 1.5 -.2 1.6 -.1 1.5 -.1 1.6M-77.2 -23.7l1.4 -.5M-67.9 -26.3l1.4 -.2 1.3 -.2M-62.5 -27l1.3 0 1.3 0M-58.5 -27l1.3 0 1.3 .1 1.3 .2 1.3 .1 1.3 .2 1.3 .3 1.3 .3 1.2 .3M-73.2 -6.1l1.2 -.8M-70.7 -7.6l1.2 -.7M-67 -9.6l1.2 -.6M-64.5 -10.8l1.3 -.5M-61.9 -11.8l1.2 -.5 1.4 -.4M-58 -13.1l1.3 -.4 1.3 -.3M-54.1 -14.1l1.4 -.2 1.3 -.2 1.3 -.2 1.4 -.1 1.3 -.1 1.4 0 1.3 -.1 1.4 .1 1.3 0M-40.6 -14.8l1.3 .1 1.3 .2 1.4 .2 1.3 .3M-34 -13.7l1.3 .3 1.3 .4 1.3 .4 1.3 .4M-53.5 56.7l.4 -1.4 .4 -1.3 .4 -1.4 .4 -1.4 .4 -1.4 .4 -1.4 .5 -1.3M-50.2 45.7l.5 -1.4 .5 -1.4 .5 -1.4 .5 -1.3 .6 -1.4 .5 -1.4M-46.5 36.1l.6 -1.4 .7 -1.4 .6 -1.3M-43.2 29.4l.7 -1.4 .7 -1.3M45.8 6l1.1 .9M48 7.9l1.1 1 1.1 1M55.2 15.3l.9 1.2M57.9 18.8l.9 1.2 .9 1.2M61.3 23.7l.8 1.3 .7 1.3 .8 1.3M64.3 28.9l.7 1.3M65.7 31.5l.6 1.4 .7 1.3M67.6 35.6l.6 1.3 .6 1.4M-18.9 22.8l.7 -1.3M-15.8 17.6l.8 -1.3 .9 -1.2 .9 -1.2 .9 -1.2 .9 -1.2M-9.5 9.2l1 -1.1M-7.5 7l1 -1.1M3.7 -2.5l1.2 -.8M7.4 -4.8l1.2 -.6M24.6 -10.8l1.4 -.2M30.2 -11.4l1.4 -.1 1.4 0 1.4 .1 1.4 0M37.1 -11.3l1.4 .2 1.4 .2 1.4 .2 1.4 .3 1.3 .3 1.4 .3 1.3 .4 1.4 .4 1.3 .4 1.3 .5 1.4 .5 1.3 .6 1.2 .6 1.3 .6 1.3 .7M58.4 -4.4l1.3 .7M60.9 -2.9l1.2 .8M66.8 1.3l1.1 1 1.1 1M70.1 4.2l1 1.1M72.2 6.3l1 1.1M74.2 8.5l1 1.1M-54.4 42l.6 -1.4 .5 -1.3M-51.5 35.3l.7 -1.3M-50.2 32.7l.7 -1.3M-48.8 30.1l.7 -1.3 .8 -1.3 .8 -1.3 .7 -1.2M-45 23.8l.9 -1.3 .8 -1.2 .9 -1.1 .9 -1.2 .9 -1.2M-39.6 16.7l.9 -1.1 1 -1.1 1 -1.1 1 -1 1.1 -1.1M47.2 33l-.3 -1.6M46.7 29.9l-.2 -1.6 -.3 -1.5 -.2 -1.6M45.8 23.7l-.3 -1.6 -.2 -1.6 -.2 -1.5 -.2 -1.6M44.7 15.8l-.2 -1.6 -.2 -1.5 -.2 -1.6M43.9 9.5l-.2 -1.5M43.5 6.4l-.1 -1.6 -.1 -1.5 -.2 -1.6M43 .1l-.1 -1.5 -.1 -1.6 -.1 -1.5M42.6 -7.6l0 -1.5 0 -1.5M42.6 -15.1l.1 -1.5M42.9 -19.5l.1 -1.5M43.1 -22.4l.2 -1.4M43.5 -25.3l.2 -1.3M43.9 -28l.2 -1.4 .3 -1.3 .3 -1.4M45 -33.4l.3 -1.3 .4 -1.3 .4 -1.2 .4 -1.3 .4 -1.2 .5 -1.2 .5 -1.2M48.4 -43.2l.5 -1.2 .6 -1.1 .6 -1.1M50.7 -47.6l.6 -1.1 .7 -1M52.7 -50.7l.7 -1 .7 -.9M56.4 -55.3l.9 -.8M72.9 6.9l-.7 -1.5 -.7 -1.5M70.8 2.4l-.7 -1.5M69.4 -.6l-.7 -1.4 -.7 -1.5M65.8 -8l-.7 -1.5 -.7 -1.4M63 -13.9l-.8 -1.5 -.7 -1.4 -.7 -1.5 -.7 -1.5M59.4 -21.3l-.7 -1.4M58.1 -24.2l-.7 -1.5 -.7 -1.4 -.6 -1.5 -.7 -1.4M54.1 -32.9l-.6 -1.5 -.6 -1.4 -.6 -1.5 -.5 -1.4M51.2 -40.1l-.5 -1.5 -.6 -1.4M49.6 -44.4l-.5 -1.4 -.5 -1.4 -.4 -1.4M47.7 -50l-.4 -1.4M46.5 -54.2l-.3 -1.3 -.4 -1.4 -.3 -1.3M66 48.9l-.2 -1.5M64.4 39.7l-.3 -1.5M63.4 35.2l-.4 -1.6M62.3 30.6l-.4 -1.6M60.6 24.4l-.4 -1.5 -.5 -1.6M59.3 19.8l-.5 -1.5 -.4 -1.6 -.5 -1.5 -.4 -1.6 -.5 -1.5 -.4 -1.6 -.5 -1.5 -.5 -1.6 -.4 -1.5 -.5 -1.6 -.4 -1.5 -.4 -1.6 -.5 -1.5 -.4 -1.6 -.4 -1.6 -.4 -1.5 -.4 -1.6 -.4 -1.5 -.4 -1.6 -.4 -1.5M49.9 -14.3l-.4 -1.5 -.3 -1.5 -.3 -1.6 -.3 -1.5 -.3 -1.5 -.2 -1.5 -.3 -1.5 -.2 -1.5 -.2 -1.5 -.2 -1.5 -.2 -1.4 -.2 -1.5 -.1 -1.4 -.1 -1.5 -.1 -1.4 -.1 -1.4 0 -1.5 -.1 -1.4M46.3 -43.6l.1 -1.4 0 -1.3 .1 -1.4 .2 -1.3 .1 -1.3 .2 -1.3M47.6 -55.3l.3 -1.3M48.2 -57.8l.3 -1.2M8 65l.1 -1.4M8.3 60.8l.1 -1.5 .1 -1.4M8.6 56.4l.1 -1.5 .1 -1.4 .1 -1.5 .1 -1.5 .1 -1.5 .1 -1.5 .1 -1.5 .2 -1.5 .1 -1.5 .2 -1.5 .1 -1.5 .2 -1.6 .2 -1.5M-58.2 22l-.4 1.6M-59.4 26.7l-.4 1.5 -.3 1.5M-60.5 31.3l-.4 1.5 -.3 1.5 -.3 1.6M-44.6 61.3l0 1.5M-48.2 -53.4l-.7 1.4 -.7 1.4M-50.4 -49.3l-.7 1.4M-54.2 -42.4l-.8 1.4M-61 -31.3l-.8 1.4 -.9 1.4 -.9 1.4M-66.2 -22.9l-.9 1.4M-69.8 -17.3l-.9 1.4 -.8 1.4M-75.9 -7.3l-.8 1.4M-48 -38.9l.8 1.1M-46.4 -36.8l.7 1 .7 1.1 .6 1.1M-43.1 -31.3l.6 1.2 .6 1.2 .6 1.2 .5 1.3 .5 1.2 .5 1.3M-38.5 -19.9l.4 1.4M-37.4 -15.8l.3 1.4M-36.8 -12.9l.3 1.4M-36.2 -10l.2 1.4M-35.7 -7.1l.2 1.5M-34.9 .5l.1 1.5M-34.5 16l0 1.6M-34.7 22.3l-.1 1.6M-35 28.6l-.1 1.6 -.1 1.5M-35.4 34.8l-.2 1.6 -.1 1.5 -.1 1.6 -.1 1.5M-36 42.6l-.1 1.5 -.1 1.5 -.2 1.5 -.1 1.5M-36.6 50.1l-.1 1.5 0 1.5 -.1 1.5 -.1 1.5 0 1.5 -.1 1.4M-37 60.5l0 1.4 0 1.5 0 1.4M-37 66.3l0 1.4M-36.7 72l.1 1.4M-19.3 27l.2 1.5M-18.1 40.8l0 1.5 .1 1.5M-17.9 45.3l0 1.5 .1 1.6 0 1.4 .1 1.5M-17.6 52.8l0 1.5M-17.5 57.2l.1 1.5 0 1.4 .1 1.5 .1 1.4 0 1.4 .1 1.4 .1 1.4 .1 1.4 .1 1.4M-16.6 71.4l.1 1.4M-16.2 75.5l.2 1.4 .2 1.3 .2 1.3M11.9 45l.4 1.4 .3 1.5 .3 1.4 .3 1.5M13.4 52.2l.3 1.4 .3 1.5 .2 1.4 .3 1.4 .2 1.4M14.9 60.7l.2 1.4M15.6 64.9l.2 1.3 .2 1.4M16.5 70.3l.2 1.3"/><path stroke="#004cff" d="M46.3 29.9l.7 1.3M51.2 40.6l.6 1.4 .5 1.3M52.8 44.7l.4 1.4 .5 1.4 .5 1.3 .4 1.4M55 51.6l.4 1.3M55.8 54.3l.4 1.4M56.6 57l.3 1.4 .4 1.3M57.6 61.1l.4 1.3 .3 1.3M-76.8 -40.2l1.4 -.2 1.4 -.2M-72.7 -40.7l1.4 -.1M-69.9 -40.9l1.3 0M-64.6 -40.7l1.3 .2 1.3 .2M-60.7 -40.1l1.3 .3 1.3 .3M-54.4 -38.3l1.2 .4M-52 -37.4l1.2 .6 1.1 .6M-48.5 -35.6l1.1 .6M-45.2 -33.5l1 .7M-43.1 -32l1 .9M-39.2 -28.5l1 1M-60.5 -51.4l1 .6 1 .7M-55.7 -47.8l.8 .8M-54 -46.1l.8 .8M-52.4 -44.4l.8 1M-50.8 -42.5l.7 1 .8 1 .6 1.1M-48 -38.4l.7 1.1M-45.5 -33.9l.5 1.2M-42.1 -25.2l.3 1.3M-86.2 -19.2l1.3 -.7 1.2 -.8M-79.8 -22.6l1.3 -.6M-75.8 -24.2l1.3 -.4 1.3 -.5 1.3 -.3M-70.5 -25.8l1.3 -.3 1.3 -.2M-65.2 -26.7l1.3 -.2 1.4 -.1M-59.9 -27l1.4 0M-86.3 5.3l1 -1.1M-81.1 .1l1.1 -1M-78.9 -1.8l1.1 -.9M-76.7 -3.6l1.2 -.9M-74.3 -5.3l1.1 -.8M-72 -6.9l1.3 -.7M-69.5 -8.3l1.2 -.7 1.3 -.6M-65.8 -10.2l1.3 -.6M-63.2 -11.3l1.3 -.5M-59.3 -12.7l1.3 -.4M-55.4 -13.8l1.3 -.3M65 30.2l.7 1.3M57.2 -5.1l1.2 .7M59.7 -3.7l1.2 .8M62.1 -2.1l1.2 .8M65.6 .4l1.2 .9M69 3.3l1.1 .9M71.1 5.3l1.1 1M73.2 7.4l1 1.1M76.1 10.8l1 1.1 .9 1.2 .9 1.2M79.8 15.5l.9 1.3 .8 1.2M82.3 19.3l.8 1.3 .8 1.3 .8 1.3M64.5 -50l1.2 -.4 1.1 -.4 1.2 -.4 1.2 -.3M-60.8 62.1l.3 -1.3 .4 -1.3M-59.8 58.2l.4 -1.4M-57.7 51.5l.4 -1.4 .4 -1.3M-55.9 46l.5 -1.3M-52.7 38l.6 -1.4 .6 -1.3M-50.8 34l.6 -1.3M-49.5 31.4l.7 -1.3M-45.8 25l.8 -1.2M-40.6 17.8l1 -1.1M44.7 -32.1l.3 -1.3M47.9 -42.1l.5 -1.1M50.1 -46.6l.6 -1M52 -49.7l.7 -1M54.1 -52.6l.8 -.9 .7 -.9 .8 -.9M57.3 -56.1l.8 -.8M59 -57.7l.9 -.8 1 -.7M62.8 -60.5l1 -.7M82 31.2l-.4 -1.6M80.1 25l-.5 -1.5M79.1 22l-.6 -1.6 -.6 -1.5M77.3 17.4l-.6 -1.5 -.6 -1.5 -.6 -1.5 -.6 -1.5 -.7 -1.5 -.7 -1.5 -.6 -1.5M71.5 3.9l-.7 -1.5M68 -3.5l-.7 -1.5 -.8 -1.5 -.7 -1.5M64.4 -10.9l-.7 -1.5 -.7 -1.5M60.1 -19.8l-.7 -1.5M58.7 -22.7l-.6 -1.5M55.4 -30l-.6 -1.5 -.7 -1.4M51.8 -38.7l-.6 -1.4M48.2 -48.6l-.5 -1.4M47.3 -51.4l-.4 -1.4 -.4 -1.4M45.2 -59.6l-.3 -1.3 -.2 -1.3M44.3 -64.9l-.2 -1.3 -.2 -1.3 -.1 -1.2M43.6 -71.3l0 -1.2 -.1 -1.2 0 -1.3M66.6 55l-.1 -1.5M66.2 50.4l-.2 -1.5M65.3 44.3l-.3 -1.5 -.3 -1.5 -.3 -1.6M63.8 36.7l-.4 -1.5M63 33.6l-.3 -1.5 -.4 -1.5M61.9 29l-.4 -1.5 -.5 -1.5 -.4 -1.6M59.7 21.3l-.4 -1.5M46.3 -40.9l0 -1.3 0 -1.4M47 -51.6l.2 -1.2 .2 -1.3 .2 -1.2M42.5 -76.3l-1.7 -.5 -1.7 -.5M37.5 -77.8l-1.7 -.6 -1.7 -.5M29.2 -80.4l-1.7 -.5M25.8 -81.5l-1.6 -.5M14.3 -85.1l-1.6 -.5M26.4 -84.3l-1.7 -.3 -1.7 -.4 -1.7 -.4 -1.7 -.3M16.2 -86.5l-1.7 -.3 -1.7 -.4M4.7 87.7l.3 -1.3M5.3 85.2l.3 -1.3M5.9 82.6l.2 -1.3M6.8 77.4l.2 -1.3M7.1 74.7l.2 -1.3 .1 -1.4 .2 -1.4 .1 -1.3M8.1 63.6l.1 -1.4 .1 -1.4M8.5 57.9l.1 -1.5M-16 -84.5l-1.6 .7 -1.5 .6 -1.5 .7M-26.9 -79.8l-1.6 .7M-33.3 -77.1l-1.5 .7 -1.6 .7M-38 -75.1l-1.7 .7 -1.6 .7 -1.6 .6 -1.6 .7 -1.6 .7 -1.6 .7M-52.5 -69l-1.6 .7M87.5 11l-.7 -1.5M83.1 2.1l-.8 -1.5M79.8 -3.7l-.8 -1.5M77.3 -8l-.9 -1.4 -.9 -1.5 -.9 -1.4M-58.6 23.6l-.4 1.5 -.4 1.6M-60.1 29.7l-.4 1.6M-61.5 35.9l-.4 1.5 -.3 1.5M-62.5 40.4l-.3 1.6 -.2 1.5 -.3 1.5 -.2 1.5M-64.2 52.6l-.1 1.6 -.1 1.5 -.1 1.5M-44.6 62.8l0 1.4M-44.5 65.7l.1 1.4M-44.3 68.5l.1 1.5 .2 1.4 .1 1.4M-43.4 75.6l.3 1.4M77.8 41.4l-.3 -1.6M77.2 38.2l-.3 -1.5M76.6 35.1l-.4 -1.5M75.8 32l-.4 -1.5M55 -66.4l-1.5 -.9M43 -73.1l-1.4 -.9M40.1 -74.8l-1.5 -.8M37.1 -76.4l-1.5 -.9M26.9 -82.2l-1.4 -.8M-40.2 -71.8l-.4 1.2 -.5 1.3M-43.1 -64l-.6 1.3 -.6 1.3 -.6 1.3M-45.5 -58.7l-.7 1.3 -.6 1.3 -.7 1.4M-49.6 -50.6l-.8 1.3M-51.1 -47.9l-.8 1.4 -.7 1.3 -.8 1.4 -.8 1.4M-55 -41l-.9 1.3 -.8 1.4 -.8 1.4 -.9 1.4 -.8 1.4 -.9 1.4 -.9 1.4M-63.6 -27.1l-.9 1.4 -.8 1.4 -.9 1.4M-67.1 -21.5l-.9 1.4 -.9 1.4M-72.4 -13l-.9 1.4 -.9 1.4 -.8 1.4 -.9 1.5M-76.7 -5.9l-.9 1.4 -.8 1.5 -.8 1.4 -.9 1.5 -.8 1.4M-83.2 5.7l-.8 1.5M-48.7 -39.8l.7 .9M-47.2 -37.8l.8 1M-35.9 41l-.1 1.6M-36.5 48.6l-.1 1.5M-37 59l0 1.5M-37 67.7l.1 1.4 .1 1.5M-36.6 73.4l.2 1.4 .2 1.4M-18 43.8l.1 1.5M-17.6 54.3l.1 1.5 0 1.4M-16.8 70l.2 1.4M-16.5 72.8l.1 1.4 .2 1.3M-15.6 79.5l.3 1.3 .2 1.3M-13.8 87.2l0 0M11.6 43.5l.3 1.5M13.2 50.8l.2 1.4M14.7 59.3l.2 1.4M15.1 62.1l.3 1.4 .2 1.4M16 67.6l.2 1.4 .3 1.3M16.7 71.6l.2 1.4 .2 1.3 .3 1.3M17.9 78.1l.2 1.3"/><path stroke="#0066ff" d="M56.2 55.7l.4 1.3M58.6 65.1l0 0M-78.2 -39.9l1.4 -.3M-74 -40.6l1.3 -.1M-71.3 -40.8l1.4 -.1M-68.6 -40.9l1.4 .1M-65.9 -40.8l1.3 .1M-66.9 -54.7l1.2 .4M-63.6 -53.2l1.1 .5 1 .6 1 .7M-57.6 -49.4l1 .8 .9 .8M-53.2 -45.3l.8 .9M-83.7 -20.7l1.3 -.6 1.3 -.7M-78.5 -23.2l1.3 -.5M-71.9 -25.4l1.4 -.4M-85.3 4.2l1 -1 1.1 -1.1 1 -1M-80 -.9l1.1 -.9M-77.8 -2.7l1.1 -.9M-53.8 58.1l.3 -1.4M-50.6 47.1l.4 -1.4M67 34.2l.6 1.4M63.3 -1.3l1.2 .8 1.1 .9M75.2 9.6l.9 1.2M78.9 14.3l.9 1.2M81.5 18l.8 1.3M62.3 -49l1.1 -.5 1.1 -.5M69.2 -51.5l1.2 -.3M-60.1 59.5l.3 -1.3M-59.4 56.8l.4 -1.3 .4 -1.3 .4 -1.4M-56.9 48.8l.5 -1.4 .5 -1.4M-55.4 44.7l.5 -1.4 .5 -1.3M-53.3 39.3l.6 -1.3M58.1 -56.9l.9 -.8M60.9 -59.2l.9 -.7 1 -.6M63.8 -61.2l0 0M79.6 23.5l-.5 -1.5M77.9 18.9l-.6 -1.5M70.1 .9l-.7 -1.5M50.1 -43l-.5 -1.4M44.7 -62.2l-.2 -1.4 -.2 -1.3M43.8 -68.7l-.1 -1.3M43.5 -75l.1 -1.2M66.7 56.6l-.1 -1.6M66.5 53.5l-.1 -1.5 -.2 -1.6M65.8 47.4l-.2 -1.6 -.3 -1.5M47.9 -56.6l.3 -1.2M34.1 -78.9l-1.6 -.5 -1.7 -.5 -1.6 -.5M27.5 -80.9l-1.7 -.6M24.2 -82l-1.7 -.5 -1.6 -.5 -1.7 -.5M17.6 -84.1l-1.6 -.5 -1.7 -.5M12.7 -85.6l-1.6 -.6 -1.6 -.5 -1.6 -.5 -1.6 -.6 -1.6 -.5M17.9 -86.1l-1.7 -.4M12.8 -87.2l-1.6 -.4M9.5 -87.9l0 0M5 86.4l.3 -1.2M6.1 81.3l.3 -1.3 .2 -1.3 .2 -1.3M7 76.1l.1 -1.4M7.7 69.3l.1 -1.4 .1 -1.4 .1 -1.5M-8.5 -88l-1.4 .7 -1.6 .7 -1.5 .7 -1.5 .7M-20.6 -82.5l-1.6 .7 -1.6 .7 -1.5 .6 -1.6 .7M-30.1 -78.4l-1.6 .6 -1.6 .7M-36.4 -75.7l-1.6 .6M-47.7 -71l-1.6 .6 -1.6 .7 -1.6 .7M86.8 9.5l-.7 -1.5 -.7 -1.5 -.8 -1.5 -.8 -1.4M82.3 .6l-.8 -1.4 -.9 -1.5 -.8 -1.4M79 -5.2l-.9 -1.4 -.8 -1.4M74.6 -12.3l-.8 -1.4 -.9 -1.4M-63.5 46.5l-.2 1.6 -.2 1.5 -.2 1.5 -.1 1.5M-64.5 58.7l0 1.6M-44.6 64.2l.1 1.5M-43.6 74.2l.2 1.4M77.5 39.8l-.3 -1.6M76.9 36.7l-.3 -1.6M76.2 33.6l-.4 -1.6M59.5 -63.9l-1.5 -.9 -1.5 -.8M53.5 -67.3l-1.5 -.8 -1.5 -.9 -1.5 -.8 -1.5 -.8 -1.5 -.9 -1.5 -.8M41.6 -74l-1.5 -.8M38.6 -75.6l-1.5 -.8M34.2 -78.1l-1.5 -.8M25.5 -83l-1.4 -.8 -1.4 -.9M-38.3 -78.2l-.4 1.3M-39 -75.7l-.4 1.3M-39.8 -73.1l-.4 1.3M-41.1 -69.3l-.5 1.3 -.5 1.3 -.5 1.3 -.5 1.4M-44.9 -60.1l-.6 1.4M-47.5 -54.7l-.7 1.3M-68.9 -18.7l-.9 1.4M-71.5 -14.5l-.9 1.5M-80.9 1.3l-.8 1.5 -.7 1.4M-37 64.8l0 1.5M-36.8 70.6l.1 1.4M-35.8 78.9l.3 1.4M-15.1 82.1l.3 1.3 .3 1.3M-14.1 86l.3 1.2M17.6 76.9l.3 1.2M18.1 79.4l.3 1.3M19.3 84.4l.3 1.2"/><path stroke="#0080ff" d="M55.4 52.9l.4 1.4M57.3 59.7l.3 1.4M58.3 63.7l.3 1.4M-67.2 -40.8l1.3 0M-68 -55.2l1.1 .5M-64.7 -53.8l1.1 .6M-58.5 -50.1l.9 .7M-81.1 -22l1.3 -.6M-82.2 1.1l1.1 -1M-75.5 -4.5l1.2 -.8M70.4 -51.8l0 0M-61.2 63.5l.4 -1.4M-58.2 52.8l.5 -1.3M81.6 29.6l-.5 -1.5M80.6 26.6l-.5 -1.6M45.5 -58.2l-.3 -1.4M64.1 38.2l-.3 -1.5M44.1 -75.8l-1.6 -.5M39.1 -77.3l-1.6 -.5M11.2 -87.6l-1.7 -.3M5.6 83.9l.3 -1.3M-14.5 -85.2l-1.5 .7M-28.5 -79.1l-1.6 .7M-54.1 -68.3l-1.6 .6 -1.6 .7M-62.2 38.9l-.3 1.5M-64.5 57.2l0 1.5M-44.4 67.1l.1 1.4M-43.9 72.8l.3 1.4M-43.1 77l0 0M61 -63l-1.5 -.9M56.5 -65.6l-1.5 -.8M44.5 -72.3l-1.5 -.8M35.6 -77.3l-1.4 -.8M31.3 -79.7l-1.5 -.8M28.4 -81.4l-1.5 -.8M21.3 -85.5l0 0M-38.7 -76.9l-.3 1.2M-39.4 -74.4l-.4 1.3M-82.4 4.2l-.8 1.5M-84 7.2l-.7 1.5 -.7 1.5M-36.2 76.2l.2 1.4 .2 1.3M-14.5 84.7l.4 1.3M17.4 75.6l.2 1.3M18.4 80.7l.3 1.2 .3 1.2 .3 1.3M19.6 85.6l0 0"/><path stroke="#0099ff" d="M-65.7 -54.3l1 .5M-87.3 6.5l1 -1.2M81.1 28.1l-.5 -1.5M19.2 -83.5l-1.6 -.6M4.7 -88.3l0 0M83.8 3.6l-.7 -1.5M62.5 -62.2l-1.5 -.8M32.7 -78.9l-1.4 -.8M-38 -79.4l-.3 1.2"/><path stroke="#00b2ff" d="M43.7 -70l-.1 -1.3M29.8 -80.5l-1.4 -.9M22.7 -84.7l-1.4 -.8M-35.5 80.3l0 0"/><path stroke="#00ccff" d="M19.6 -85.7l-1.7 -.4"/><path stroke="#0000ff" d="M-25 -15l1.3 .6 1.3 .6M-19.9 -12.5l1.2 .8 1.2 .7M-15.1 -9.4l1.1 .9M-11.7 -6.7l1.1 1M-9.5 -4.7l1.1 1 1 1.1 1 1M-5.4 -.5l1 1.2 1 1.1 .9 1.2 .9 1.2 .9 1.2 .9 1.3M1 8l.9 1.3 .8 1.3M7.6 20.2l.6 1.4M9.3 24.5l.6 1.5M10.9 28.9l.5 1.5"/><path stroke="#001aff" d="M-40.8 -22.7l1.2 .6M-36.1 -20.1l1.1 .7M-33.9 -18.7l1.1 .8 1.1 .9 1.1 .8 1 .9 1 1 1 .9 1 1 1 1 .9 1 .9 1.1 .9 1.1 .9 1.1 .9 1.2 .8 1.2 .9 1.2 .8 1.2 .7 1.2 .8 1.3 .7 1.3 .7 1.3 .7 1.3 .7 1.3 .7 1.4 .6 1.3 .6 1.4 .6 1.4 .5 1.4 .6 1.5 .5 1.4 .5 1.4 .5 1.5 .4 1.5 .5 1.4 .4 1.5 .4 1.5 .4 1.5 .4 1.5 .3 1.5 .3 1.5 .3 1.5 .3 1.5 .3 1.5 .3 1.5 .3 1.5 .2 1.6 .2 1.5 .2 1.5 .2 1.5M-3.4 46.6l.2 1.4M-2.7 52.5l.1 1.5M-17.7 -6.7l1.2 .8 1.2 .8 1.1 .8 1.1 .9 1.1 .9 1.1 .9 1.1 1 1 1 1 1 1.1 1 .9 1.1 1 1.1 1 1.1 .9 1.1 .9 1.2 .9 1.2 .9 1.2 .8 1.2 .8 1.2 .9 1.3 .7 1.3 .8 1.2 .7 1.3 .8 1.4 .7 1.3 .6 1.3 .7 1.4 .6 1.3 .6 1.4M9.1 27.4l.6 1.4 .6 1.4 .5 1.4M11.3 33l.5 1.4M12.3 35.8l.5 1.5 .4 1.4M-31.3 -14.7l.9 1 .9 1.1 .8 1.1M-26.2 -8.1l.8 1.2 .7 1.2M-23.9 -4.4l.7 1.2 .7 1.3 .6 1.3M-21.2 .7l.6 1.3 .6 1.4 .6 1.3M-30.7 -14.8l1.1 .8M-26.3 -11.5l1.1 .9 1 .9 1 1M-22.2 -7.8l1 1.1M-20.3 -5.7l1 1.1M-17.5 -2.4l.9 1.1 .8 1.2M-14.9 1.1l.8 1.2 .8 1.2M-12.5 4.8l.7 1.3 .8 1.3 .7 1.3 .7 1.3 .6 1.3 .7 1.4 .6 1.3M-7.1 15.4l.6 1.4 .6 1.4M-5.4 19.6l.6 1.5 .5 1.4 .5 1.4 .4 1.5 .5 1.5M-34.6 11.3l1.1 -1 1 -.9 1.2 -1 1.1 -.9 1.1 -.9M-27.9 5.7l1.2 -.8 1.2 -.9M-24.3 3.3l1.2 -.8 1.3 -.7 1.3 -.7 1.3 -.7 1.3 -.6 1.3 -.6M-15.3 -1.4l1.3 -.5 1.4 -.5 1.3 -.4 1.4 -.4 1.4 -.4 1.4 -.4 1.4 -.3 1.4 -.2 1.4 -.3 1.4 -.2 1.4 -.1 1.4 -.1 1.5 -.1 1.4 -.1 1.4 0 1.4 .1 1.4 0 1.5 .1 1.4 .2 1.4 .2 1.4 .2 1.4 .2 1.4 .3 1.4 .4 1.4 .4 1.3 .4 1.4 .4 1.3 .5 1.4 .5 1.3 .5M29 .2l1.3 .7 1.3 .7 1.2 .7M34 3l1.3 .8M40 7.2l1.1 .9M-59.2 -16.5l1.4 -.5M-52.3 -18.3l1.4 -.2 1.3 -.2 1.4 -.1 1.4 -.1 1.4 -.1 1.4 0 1.4 0 1.4 .1 1.4 .1 1.4 .1 1.3 .2 1.4 .2 1.4 .3 1.3 .3 1.4 .4 1.3 .4 1.4 .4 1.3 .4 1.3 .5 1.3 .6M-22.4 -13.8l1.2 .6 1.3 .7M-17.5 -11l1.2 .8 1.2 .8M-14 -8.5l1.2 .9 1.1 .9M-10.6 -5.7l1.1 1M-6.4 -1.6l1 1.1M.2 6.7l.8 1.3M2.7 10.6l.7 1.3 .8 1.3 .7 1.4 .7 1.4 .7 1.4 .6 1.4 .7 1.4M8.2 21.6l.6 1.5 .5 1.4M9.9 26l.5 1.4 .5 1.5M11.4 30.4l.4 1.5 .4 1.5 .5 1.5 .3 1.4 .4 1.5 .4 1.5 .3 1.5 .3 1.5 .4 1.5 .2 1.5 .3 1.5 .3 1.5 .2 1.5 .3 1.5 .2 1.5 .2 1.4 .2 1.5M-39.4 -9.1l1.4 -.3 1.4 -.4M-60.8 13.3l1 -1.1 1 -1.1M-52.4 5.2l1.2 -.9 1.1 -.9M-47.7 1.8l1.2 -.8 1.2 -.8 1.3 -.7 1.3 -.7 1.2 -.6 1.3 -.6 1.3 -.6 1.3 -.6 1.4 -.5 1.3 -.5 1.4 -.4M-32.2 -5.4l1.4 -.4 1.4 -.3 1.4 -.3 1.4 -.3 1.4 -.2 1.4 -.2 1.4 -.1 1.4 -.1 1.4 -.1 1.4 0 1.4 0 1.5 0 1.4 .1 1.4 .1 1.4 .2 1.4 .2 1.4 .2 1.4 .3 1.4 .3 1.4 .4 1.4 .4 1.3 .4 1.4 .5 1.4 .5 1.3 .5 1.3 .6 1.3 .6 1.3 .6 1.3 .7 1.3 .7 1.2 .8 1.3 .7 1.2 .9 1.2 .8 1.2 .9 1.2 .8 1.1 1 1.1 .9 1.1 1 1.1 1 1.1 1 1 1.1 1.1 1.1 1 1.1 1 1.1 .9 1.1 .9 1.2 1 1.2 .9 1.2 .8 1.2 .9 1.2M10.3 36.9l.1 -1.5M10.6 33.8l.3 -1.5M11.3 29.3l.3 -1.6 .3 -1.5 .3 -1.5 .3 -1.5 .3 -1.5 .4 -1.5 .3 -1.5M13.9 17.2l.4 -1.5 .4 -1.5 .5 -1.5 .4 -1.4 .5 -1.5 .5 -1.4 .5 -1.4 .6 -1.5 .6 -1.3 .5 -1.4 .7 -1.4 .6 -1.3 .6 -1.4 .7 -1.3 .7 -1.3 .7 -1.2 .8 -1.3 .7 -1.2M25.1 -8.8l.8 -1.2 .8 -1.1 .9 -1.2 .9 -1.1M32.1 -17.5l1 -1M34.1 -19.4l1 -.9M-26.3 41.1l.4 -1.5M-25.5 38.2l.5 -1.5M-24.5 35.3l.5 -1.5M51.2 8.2l-.3 -1.6M50.2 3.5l-.3 -1.6M48.7 -4.3l-.3 -1.5M47.6 -10.5l-.2 -1.5 -.2 -1.6"/><path stroke="#0033ff" d="M-19.2 58.8l0 1.5 0 1.5 -.1 1.4M-19.3 64.7l0 1.4 .1 1.5M-19.1 71.8l0 1.4M-54 -54.8l-1.2 1.2 -1.2 1.1 -1.3 1.2 -1.2 1.2M-45.1 -61l-.6 1.3M-51.6 -49l-.8 1.4M-53.2 -46.3l-.8 1.4M-54.9 -43.6l-.8 1.4M-56.6 -40.8l-.8 1.3M-60.9 -34l-.9 1.4M-62.7 -31.2l-.9 1.4 -.9 1.4M-72.7 -15.9l-.9 1.4M-39.9 36.5l-.1 1.6 -.1 1.5 -.2 1.5 -.1 1.5M-40.5 44.2l-.1 1.5M-40.8 47.2l-.1 1.5 -.1 1.5 -.1 1.5M-41.3 56.1l0 1.5M-46.9 -25.1l1.3 .4 1.2 .4 1.2 .5 1.2 .5 1.2 .6M-39.6 -22.1l1.2 .6 1.1 .7 1.2 .7M-35 -19.4l1.1 .7M-3.8 43.6l.2 1.5 .2 1.5M-3.2 48l.2 1.5 .1 1.5 .2 1.5M-2.6 54l.2 1.4 .1 1.5 .1 1.4 .2 1.5M-1.9 61.2l.1 1.4 .2 1.4 .1 1.4 .1 1.4 .2 1.4M-.9 71l.1 1.4M-18.8 -7.5l1.1 .8M8.5 26l.6 1.4M10.8 31.6l.5 1.4M11.8 34.4l.5 1.4M13.2 38.7l.4 1.4 .5 1.4 .4 1.5 .3 1.4 .4 1.4M15.6 47.2l.3 1.4 .3 1.5 .4 1.4M16.9 52.9l.3 1.4 .3 1.4 .3 1.4M18.3 59.9l.3 1.4M19.1 64l.2 1.4 .3 1.3M20.6 72l.3 1.3M71.4 45.1l.5 1.4M-45.7 -58l-.3 1.3 -.4 1.4M-47.7 -51.2l-.4 1.4M-49.1 -47l-.5 1.4M-50.2 -44.2l-.5 1.4M-51.9 -39.9l-.6 1.4M-53.7 -35.6l-.6 1.4M-55 -32.8l-.6 1.5 -.7 1.4 -.7 1.5 -.7 1.4 -.7 1.5M-65.7 -30.6l1.3 0M-63.1 -30.5l1.3 .1M-56.7 -29.8l1.2 .3 1.3 .3 1.2 .4M-51.8 -28.5l1.2 .5M-49.4 -27.6l1.2 .5 1.2 .5 1.1 .6 1.2 .6 1.1 .6 1.1 .7 1.1 .7 1.1 .7 1.1 .8 1 .8 1.1 .8 1 .9 1 .8 .9 1 1 .9 .9 1 1 1M-28.7 -11.5l.9 1.1 .8 1.2 .8 1.1M-24.7 -5.7l.8 1.3M-21.9 -.6l.7 1.3M-66.1 -21.8l1.3 -.2 1.3 -.3M-62.2 -22.5l1.4 -.1M-58.2 -22.8l1.3 0 1.3 0 1.4 0 1.3 .1M-51.6 -22.6l1.3 .2 1.3 .2 1.3 .2 1.3 .3M-45.2 -21.4l1.3 .4 1.3 .3 1.2 .5 1.3 .4 1.2 .5 1.2 .5 1.2 .6 1.2 .6 1.2 .7 1.1 .6 1.2 .7 1.1 .8M-29.6 -14l1.1 .8 1.1 .8 1.1 .9M-23.2 -8.7l1 .9M-21.2 -6.7l.9 1M-19.3 -4.6l.9 1.1 .9 1.1M-15.8 -.1l.9 1.2M-13.3 3.5l.8 1.3M-7.7 14l.6 1.4M-5.9 18.2l.5 1.4M-29.1 6.6l1.2 -.9M-25.5 4l1.2 -.7M-16.6 -.8l1.3 -.6M26.4 -1l1.3 .6 1.3 .6M32.8 2.3l1.2 .7M35.3 3.8l1.2 .8 1.2 .8 1.1 .9 1.2 .9M41.1 8.1l1.1 .9 1.1 1 1.1 1 1 1 1 1.1 1 1 1 1.1M49.4 16.3l.9 1.1M52.2 19.7l.8 1.2M53.9 22.1l.8 1.2M55.5 24.6l.8 1.2 .8 1.3 .7 1.2 .8 1.3M59.3 30.9l.7 1.3M61.3 34.8l.6 1.3M62.5 37.5l.6 1.3M-82.8 -1.5l1.1 -1.1 1.2 -1.1M-79.4 -4.7l1.1 -1 1.2 -1 1.2 -.9 1.2 -.9 1.2 -.9M-71 -11l1.3 -.8 1.3 -.7 1.2 -.7 1.3 -.6 1.4 -.7 1.3 -.5 1.3 -.6 1.4 -.5 1.3 -.4M-57.8 -17l1.3 -.3 1.4 -.4 1.4 -.3 1.4 -.3M49.7 -62.4l.4 -1.1M-74.6 19l.8 -1.3M-72 15.1l.9 -1.2M-69.2 11.5l.9 -1.1 1 -1.2M-66.3 8.1l1.1 -1.1 1 -1.1 1.1 -1 1.1 -1 1.1 -1 1.1 -1 1.2 -.9M-56.3 -.8l1.3 -.8 1.2 -.9M-52.6 -3.2l1.3 -.8 1.3 -.7 1.3 -.7 1.3 -.6 1.3 -.6 1.3 -.6 1.4 -.5 1.3 -.5 1.4 -.4 1.3 -.5M-73.6 33.2l.6 -1.3M-71.6 29.2l.7 -1.3 .7 -1.3M-68.7 24.1l.8 -1.3 .8 -1.2 .8 -1.3M-65.4 19.1l.9 -1.2 .9 -1.2 .9 -1.1M-61.8 14.4l1 -1.1M-58.8 11.1l1 -1 1 -1 1.1 -1 1.1 -1 1.1 -1 1.1 -.9M-50.1 3.4l1.2 -.8 1.2 -.8M-33.5 -5l1.3 -.4M10.4 35.4l.2 -1.6M10.9 32.3l.2 -1.5 .2 -1.5M13.5 18.7l.4 -1.5M24.3 -7.6l.8 -1.2M28.5 -13.4l.9 -1 .9 -1.1 .9 -1 .9 -1M33.1 -18.5l1 -.9M35.1 -20.3l1 -.8 1.1 -.9 1 -.8 1.1 -.7 1.1 -.8 1.1 -.7 1.2 -.7 1.1 -.6 1.2 -.6M46.2 -27.4l1.1 -.6 1.3 -.4 1.2 -.5 1.2 -.4 1.2 -.4 1.3 -.3 1.3 -.3M56 -30.6l1.3 -.2M58.6 -31l1.3 -.1M61.2 -31.2l1.3 -.1 1.3 0 1.4 0 1.3 .1M-31.8 68.3l.2 -1.3M-30 57.1l.3 -1.5 .3 -1.4M-28.5 49.8l.3 -1.4M-27.9 46.9l.4 -1.4 .4 -1.5 .3 -1.5 .5 -1.4M-25.9 39.6l.4 -1.4M-25 36.7l.5 -1.4M69.3 -20.7l-.9 -1.4M63 -30.5l-.9 -1.4M57.8 -38.8l-.9 -1.3 -.8 -1.4M52.8 -47l-.8 -1.3M51.2 -49.7l-.8 -1.3 -.7 -1.4M48.9 -53.7l-.7 -1.4M46.1 -59.1l-.6 -1.3M58.6 42.2l-.3 -1.6M58 39.1l-.3 -1.5M57.4 36.1l-.3 -1.6M56.5 31.5l-.4 -1.6M55.8 28.4l-.3 -1.5 -.4 -1.6 -.3 -1.5M54 20.7l-.3 -1.6 -.4 -1.5 -.3 -1.6 -.4 -1.6 -.4 -1.5 -.3 -1.6 -.4 -1.5 -.3 -1.6M50.9 6.6l-.4 -1.5 -.3 -1.6M49.9 1.9l-.3 -1.5 -.4 -1.6 -.2 -1.5 -.3 -1.6M48.4 -5.8l-.3 -1.6 -.2 -1.5 -.3 -1.6M47.2 -13.6l-.2 -1.5 -.2 -1.5 -.1 -1.5 -.2 -1.5 -.1 -1.5 -.1 -1.5 -.1 -1.5 -.1 -1.5 0 -1.4 -.1 -1.5 0 -1.4 0 -1.5 0 -1.4 .1 -1.4 .1 -1.4 .1 -1.4 .1 -1.3 .1 -1.4 .2 -1.3 .2 -1.3 .2 -1.3 .2 -1.3 .3 -1.3 .3 -1.3M48.2 -48.7l.3 -1.2 .4 -1.2M50.1 -54.6l.5 -1.1M71 16.7l-.5 -1.5M69.9 13.7l-.5 -1.5 -.6 -1.5 -.6 -1.5M67.6 7.7l-.6 -1.6 -.6 -1.5M65.8 3.1l-.6 -1.5 -.6 -1.5 -.6 -1.5M63.4 -2.9l-.6 -1.5M62.2 -5.9l-.6 -1.5 -.6 -1.5M60.4 -10.5l-.6 -1.5 -.6 -1.5M58.7 -15l-.6 -1.5 -.6 -1.5M56.9 -19.5l-.5 -1.4 -.6 -1.5 -.5 -1.5 -.5 -1.5 -.5 -1.5 -.5 -1.5 -.5 -1.4 -.5 -1.5 -.4 -1.5 -.5 -1.4M51.5 -35.7l-.4 -1.4M50.7 -38.6l-.4 -1.4 -.4 -1.4 -.3 -1.4 -.4 -1.4 -.3 -1.4M48.4 -48.4l-.3 -1.4 -.2 -1.4M47.7 -52.5l-.2 -1.4M47.3 -55.2l-.1 -1.4M47.1 -57.9l-.1 -1.3M74.3 9l-.7 -1.5M72.9 6l-.7 -1.5 -.7 -1.5M70.8 1.6l-.7 -1.5 -.8 -1.5 -.7 -1.5 -.7 -1.5 -.8 -1.4 -.7 -1.5 -.8 -1.5M64.2 -11.8l-.8 -1.4 -.7 -1.5 -.8 -1.5 -.7 -1.4 -.7 -1.5 -.7 -1.5M59 -22l-.7 -1.5 -.7 -1.5 -.7 -1.4 -.7 -1.5 -.6 -1.5 -.7 -1.4 -.7 -1.5 -.6 -1.4M52.9 -35.2l-.6 -1.4 -.6 -1.4 -.6 -1.5 -.6 -1.4 -.5 -1.4 -.6 -1.5 -.5 -1.4 -.5 -1.4M79.8 -12.8l-1 -1.4M75.9 -18.3l-1 -1.4M72.9 -22.4l-1 -1.3M70.9 -25.1l-1 -1.3 -1.1 -1.4 -1 -1.3M66.8 -30.5l-1 -1.3 -1 -1.3M61.8 -37.1l-1 -1.4 -1 -1.3 -1 -1.3M57.8 -42.4l-1 -1.4 -.9 -1.3 -1 -1.3M53.9 -47.7l-.9 -1.3M52.1 -50.3l-1 -1.3 -.9 -1.3 -.9 -1.4 -.9 -1.3 -.8 -1.3 -.9 -1.3M45 -60.7l-.8 -1.3M41.8 -65.9l-.7 -1.3M40.4 -68.4l-.8 -1.3 -.7 -1.3"/><path stroke="#004cff" d="M-19.2 57.3l0 1.5M-19.3 63.2l0 1.5M-19.2 67.6l0 1.4 0 1.4M-19.1 73.2l.1 1.4 .1 1.4M-18.7 78.7l.2 1.4M-18.3 81.4l.2 1.4M-17.9 84.1l.2 1.3M-27.3 -83.7l-.9 1.2 -.9 1.1 -1 1.1M-34 -75.7l-1 1.2M-36 -73.4l-1.1 1.2 -1 1.1M-39.2 -69.9l-1.1 1.2M-42.5 -66.4l-1.1 1.1 -1.1 1.2 -1.1 1.1M-47 -61.8l-1.1 1.2 -1.2 1.1 -1.2 1.2 -1.2 1.2 -1.2 1.1M-61.3 -47.7l-1.2 1.1M-63.7 -45.4l-1.3 1.2 -1.2 1.2M-69.8 -39.4l-1.3 1.2M-77.1 -32.2l-1.2 1.3 -1.2 1.2M-41 -70.1l-.5 1.2M-42 -67.6l-.6 1.3M-43.2 -65l-.6 1.3 -.6 1.4M-45.7 -59.7l-.7 1.3M-47.8 -55.7l-.8 1.3 -.7 1.4 -.8 1.3 -.7 1.4 -.8 1.3M-54 -44.9l-.9 1.3M-55.7 -42.2l-.9 1.4M-57.4 -39.5l-.9 1.4 -.9 1.4 -.8 1.4 -.9 1.3M-61.8 -32.6l-.9 1.4M-64.5 -28.4l-.9 1.4 -.9 1.3 -1 1.4M-68.2 -22.9l-.9 1.4 -.9 1.4 -.9 1.4 -.9 1.4 -.9 1.4M-73.6 -14.5l-.9 1.4 -.9 1.5 -.8 1.4 -.9 1.4 -.9 1.4 -.9 1.4 -.8 1.5 -.8 1.4 -.9 1.5M-83 1.3l-.8 1.4M-39.7 35l-.2 1.5M-40.4 42.6l-.1 1.6M-40.6 45.7l-.2 1.5M-41.1 51.7l0 1.5 -.1 1.4 -.1 1.5M-41.3 59l-.1 1.5M-41.4 62l.1 1.4M-41.3 64.9l.1 1.4M-41.2 67.7l.1 1.5 .1 1.4 .2 1.4M-48.2 -25.5l1.3 .4M-2 59.8l.1 1.4M-1.2 68.2l.1 1.4 .2 1.4M-.8 72.4l.2 1.3M-.4 75l.2 1.4 .2 1.3 .2 1.3M.6 81.6l.3 1.3 .3 1.2 .3 1.3 .3 1.2 .3 1.2M15.2 45.8l.4 1.4M16.6 51.5l.3 1.4M17.8 57.1l.2 1.4 .3 1.4M18.6 61.3l.2 1.3 .3 1.4M19.6 66.7l.2 1.3 .3 1.4 .2 1.3 .3 1.3M20.9 73.3l.2 1.3 .3 1.3 .3 1.2 .3 1.3M22.6 80.8l.3 1.3M68.8 38.3l.5 1.3 .6 1.4 .5 1.4M71.9 46.5l.4 1.4M72.8 49.3l0 0M-43.2 -72.4l-.1 1.3M-44 -66l-.2 1.3 -.2 1.3 -.3 1.4M-45 -60.7l-.3 1.3M-46.4 -55.3l-.4 1.3 -.4 1.4 -.5 1.4M-48.1 -49.8l-.5 1.4 -.5 1.4M-49.6 -45.6l-.6 1.4M-50.7 -42.8l-.6 1.4 -.6 1.5M-52.5 -38.5l-.6 1.4 -.6 1.5M-54.3 -34.2l-.7 1.4M-81.5 -27.5l1.3 -.5M-78.9 -28.4l1.3 -.4M-75 -29.5l1.4 -.2M-71 -30.2l1.3 -.1 1.3 -.1 1.4 -.1 1.3 -.1M-61.8 -30.4l1.2 .1 1.3 .1 1.3 .2 1.3 .2M-53 -28.8l1.2 .3M-50.6 -28l1.2 .4M-84.1 -14.2l1.2 -.8M-77.9 -17.7l1.3 -.6M-74 -19.4l1.3 -.5 1.3 -.4 1.3 -.5 1.3 -.3M-67.5 -21.5l1.4 -.3M-63.5 -22.3l1.3 -.2M-60.8 -22.6l1.3 -.1 1.3 -.1M-52.9 -22.7l1.3 .1M-46.4 -21.7l1.2 .3M48.4 15.2l1 1.1M50.3 17.4l1 1.2 .9 1.1M53 20.9l.9 1.2M54.7 23.3l.8 1.3M60 32.2l.6 1.3 .7 1.3M61.9 36.1l.6 1.4M63.1 38.8l.6 1.3 .5 1.4M64.8 42.8l.5 1.4 .5 1.3 .5 1.4 .5 1.3 .4 1.4M67.7 50.9l.4 1.4 .4 1.3M68.9 54.9l0 0M-87.9 4.3l1 -1.2 1 -1.2 1 -1.2M-80.5 -3.7l1.1 -1M-73.5 -9.4l1.3 -.8 1.2 -.8M48.5 -59l.4 -1.1M49.3 -61.3l.4 -1.1M50.1 -63.5l.5 -1.1M51.6 -66.8l.5 -1 .6 -1 .6 -1M-81.1 31.2l.6 -1.4M-77.7 24.3l.7 -1.4 .8 -1.3 .8 -1.3 .8 -1.3M-72.9 16.4l.9 -1.3M-71.1 13.9l.9 -1.2 1 -1.2M-67.3 9.2l1 -1.1M-58.6 1l1.2 -.9 1.1 -.9M-53.8 -2.5l1.2 -.7M-75.5 37.3l.6 -1.4M-74.3 34.6l.7 -1.4M-69.5 25.3l.8 -1.2M-66.3 20.3l.9 -1.2M-62.7 15.6l.9 -1.2M45 -26.9l1.2 -.5M54.8 -30.3l1.2 -.3M57.3 -30.8l1.3 -.2M59.9 -31.1l1.3 -.1M66.5 -31.2l1.3 .1 1.4 .1M77.2 -29.3l1.3 .4 1.4 .4M81.2 -28l1.3 .6M-33.5 79l.2 -1.3 .3 -1.3 .2 -1.3 .2 -1.3 .2 -1.4M-32.2 71.1l.2 -1.4 .2 -1.4M-31.4 65.6l.3 -1.4M-30.9 62.8l.2 -1.4 .2 -1.5 .3 -1.4 .2 -1.4M-29.1 52.7l.3 -1.4 .3 -1.5M-28.2 48.4l.3 -1.5M72.9 -15.1l-.9 -1.4 -.9 -1.4 -.9 -1.4 -.9 -1.4M68.4 -22.1l-.9 -1.4 -.9 -1.4 -.9 -1.4 -.9 -1.4 -.9 -1.4 -.9 -1.4M60.4 -34.6l-.9 -1.4 -.9 -1.4 -.8 -1.4M56.1 -41.5l-.9 -1.4M54.4 -44.2l-.8 -1.4M52 -48.3l-.8 -1.4M49.7 -52.4l-.8 -1.3M48.2 -55.1l-.7 -1.3 -.7 -1.3 -.7 -1.4M45.5 -60.4l-.7 -1.3 -.6 -1.3 -.6 -1.3M42.5 -66.9l-.6 -1.3M41.4 -69.5l-.5 -1.3 -.5 -1.3 -.5 -1.3 -.4 -1.2 -.4 -1.3M60.3 63.3l0 -1.5M60.2 55.8l-.1 -1.5 -.1 -1.5 -.2 -1.5 -.2 -1.5 -.1 -1.6 -.2 -1.5M59 45.2l-.2 -1.5 -.2 -1.5M58.3 40.6l-.3 -1.5M57.7 37.6l-.3 -1.5M56.8 33l-.3 -1.5M56.1 29.9l-.3 -1.5M54.8 23.8l-.4 -1.6 -.4 -1.5M47.9 -47.5l.3 -1.2M48.9 -51.1l.4 -1.2 .4 -1.2 .4 -1.1M50.6 -55.7l.5 -1.1M51.6 -57.9l.6 -1.1 .5 -1 .7 -1M54 -62l.6 -1M56 -64.8l.8 -.9 .7 -.9M74.5 27.4l-.4 -1.5 -.5 -1.5M73.1 22.8l-.5 -1.5 -.5 -1.5 -.5 -1.5M70.5 15.2l-.6 -1.5M68.2 9.2l-.6 -1.5M66.4 4.6l-.6 -1.5M64 -1.4l-.6 -1.5M62.8 -4.4l-.6 -1.5M61 -8.9l-.6 -1.6M59.2 -13.5l-.5 -1.5M57.5 -18l-.6 -1.5M51.9 -34.2l-.4 -1.5M51.1 -37.1l-.4 -1.5M48.6 -47l-.2 -1.4M47.5 -53.9l-.2 -1.3M46.9 -60.5l0 -1.3 0 -1.3 0 -1.2 0 -1.3M47 -66.8l0 -1.2M47.9 -74l0 0M-85.4 10.2l-.7 1.5M24.3 79.3l.2 -1.3M24.7 76.6l.2 -1.4 .2 -1.3 .1 -1.4M-12.2 -87.6l-1.7 .3M-17.3 -86.7l-1.7 .3M82.5 30.3l-.4 -1.6M81.1 25.6l-.6 -1.5M80 22.6l-.6 -1.6 -.6 -1.5M77.6 16.5l-.6 -1.5 -.7 -1.5 -.6 -1.5 -.7 -1.5 -.7 -1.5M73.6 7.5l-.7 -1.5M71.5 3l-.7 -1.4M65.6 -8.8l-.7 -1.5 -.7 -1.5M59.8 -20.6l-.8 -1.4M53.6 -33.7l-.7 -1.5M88 -.1l-.9 -1.5M85.4 -4.4l-.9 -1.4M83.5 -7.2l-.9 -1.4M81.7 -10l-1 -1.4 -.9 -1.4M78.8 -14.2l-1 -1.4M74.9 -19.7l-1 -1.3 -1 -1.4M71.9 -23.7l-1 -1.4M67.8 -29.1l-1 -1.4M64.8 -33.1l-1 -1.4 -1 -1.3 -1 -1.3M54.9 -46.4l-1 -1.3M53 -49l-.9 -1.3M46.7 -58.2l-.8 -1.2 -.9 -1.3M44.2 -62l-.8 -1.3 -.8 -1.3 -.8 -1.3M41.1 -67.2l-.7 -1.2M37.6 -73.5l-.6 -1.3 -.6 -1.2 -.6 -1.3 -.6 -1.2M70 -52.4l-1.4 -.9M64.3 -56.3l-1.4 -.9 -1.4 -1M60 -59.1l-1.4 -1 -1.4 -.9 -1.5 -1M51.4 -64.8l-1.4 -1M48.6 -66.7l-1.4 -1M45.8 -68.6l-1.4 -.9 -1.5 -1M41.5 -71.4l-1.3 -.9 -1.4 -1M34.6 -76.1l-1.3 -.9 -1.4 -.9"/><path stroke="#0066ff" d="M-19.2 70.4l.1 1.4M-18.9 76l.1 1.4 .1 1.3M-18.5 80.1l.2 1.3M-17.4 86.7l0 0M-32 -78l-1 1.2 -1 1.1M-35 -74.5l-1 1.1M-41.4 -67.6l-1.1 1.2M-45.8 -63l-1.2 1.2M-52.9 -56l-1.1 1.2M-60.1 -48.9l-1.2 1.2M-62.5 -46.6l-1.2 1.2M-67.4 -41.8l-1.2 1.2 -1.2 1.2M-71.1 -38.2l-1.2 1.2M-73.5 -35.8l-1.2 1.2 -1.2 1.2 -1.2 1.2M-79.5 -29.7l-1.2 1.2M-81.8 -27.2l-1.2 1.2 -1.2 1.3M-85.3 -23.4l0 0M-37.9 -79l-.3 1.2M-39 -75.2l-.5 1.2 -.5 1.3M-40.4 -71.4l-.6 1.3M-41.5 -68.9l-.5 1.3M-46.4 -58.4l-.7 1.4 -.7 1.3M-52.4 -47.6l-.8 1.3M-67.3 -24.3l-.9 1.4M-82.2 -.2l-.8 1.5M-84.6 4.2l-.7 1.5 -.8 1.5M-87.5 10.1l0 0M-41.3 57.6l0 1.4M-41.4 60.5l0 1.5M-41.3 63.4l0 1.5M-40.6 73.4l.2 1.4M-40.2 76.2l.2 1.4 .3 1.4M-.6 73.7l.2 1.3M.2 79l.2 1.3 .2 1.3M2.1 87.8l0 0M22 78.4l.3 1.2 .3 1.2M23.2 83.3l.4 1.2M70.4 42.4l.5 1.4M72.3 47.9l.5 1.4M-43 -76.1l-.1 1.3M-43.1 -73.6l-.1 1.2M-43.4 -69.8l-.2 1.2 -.1 1.3 -.3 1.3M-44.7 -62l-.3 1.3M-84.2 -26.5l1.3 -.5 1.4 -.5M-80.2 -28l1.3 -.4M-77.6 -28.8l1.3 -.3 1.3 -.4M-73.6 -29.7l1.3 -.3 1.3 -.2M-64.4 -30.6l1.3 .1M-87.7 -11.7l1.2 -.8 1.2 -.9M-80.4 -16.4l1.3 -.7M-76.6 -18.3l1.3 -.6 1.3 -.5M-68.8 -21.1l1.3 -.4M58.6 29.6l.7 1.3M64.2 41.5l.6 1.3M67.2 49.6l.5 1.3M48.9 -60.1l.4 -1.2M51.1 -65.7l.5 -1.1M53.3 -69.8l0 0M-81.7 32.6l.6 -1.4M-80.5 29.8l.7 -1.4M-79.1 27l.7 -1.4 .7 -1.3M-76.6 40l.6 -1.4 .5 -1.3M-74.9 35.9l.6 -1.3M-73 31.9l.7 -1.4 .7 -1.3M69.2 -31l1.3 .2 1.3 .2M73.2 -30.3l1.3 .3 1.4 .3M82.5 -27.4l1.3 .5M-34 81.5l.3 -1.2M-32.4 72.4l.2 -1.3M-31.6 67l.2 -1.4M-31.1 64.2l.2 -1.4M-29.4 54.2l.3 -1.5M62.1 -31.9l-.9 -1.3 -.8 -1.4M55.2 -42.9l-.8 -1.3M53.6 -45.6l-.8 -1.4M43.6 -64.3l-.6 -1.3 -.5 -1.3M38.7 -77.2l-.4 -1.2M38 -79.7l0 0M60.3 61.8l0 -1.5 0 -1.5 0 -1.5 -.1 -1.5M59.3 46.7l-.3 -1.5M57.1 34.5l-.3 -1.5M53.4 -61l.6 -1M54.6 -63l.7 -.9 .7 -.9M75 28.9l-.5 -1.5M73.6 24.4l-.5 -1.6M71.6 18.3l-.6 -1.6M48.9 -45.6l-.3 -1.4M47.9 -51.2l-.2 -1.3M47.2 -56.6l-.1 -1.3M47 -59.2l-.1 -1.3M46.9 -65.6l.1 -1.2M47.2 -69.3l.1 -1.2 .2 -1.1 .2 -1.2 .2 -1.2M-86.1 11.7l-.7 1.5M23.1 84.6l.3 -1.3M23.7 82l.3 -1.4 .3 -1.3M24.5 78l.2 -1.4M-13.9 -87.3l-1.7 .3 -1.7 .3M-19 -86.4l0 0M82.1 28.7l-.5 -1.5 -.5 -1.6M78.8 19.5l-.6 -1.5 -.6 -1.5M82.6 -8.6l-.9 -1.4M77.8 -15.6l-.9 -1.3 -1 -1.4M58.8 -41.1l-1 -1.3M38.9 -71l-.6 -1.2 -.7 -1.3M35.2 -78.5l-.6 -1.2 -.5 -1.3M71.5 -51.4l-1.5 -1M68.6 -53.3l-1.4 -1 -1.4 -1 -1.5 -1M61.5 -58.2l-1.5 -.9M55.7 -62l-1.4 -.9 -1.4 -1 -1.5 -.9M50 -65.8l-1.4 -.9M47.2 -67.7l-1.4 -.9M42.9 -70.5l-1.4 -.9M38.8 -73.3l-1.4 -.9 -1.4 -.9M30.6 -78.9l-1.4 -.9 -1.3 -.9 -1.3 -1 -1.3 -.9 -1.3 -.9 -1.3 -1"/><path stroke="#0080ff" d="M-18.1 82.8l.2 1.3M-17.7 85.4l.3 1.3M-30.1 -80.3l-.9 1.2 -1 1.1M-38.1 -71.1l-1.1 1.2M-40.3 -68.7l-1.1 1.1M-58.9 -50.1l-1.2 1.2M-66.2 -43l-1.2 1.2M-80.7 -28.5l-1.1 1.3M-38.2 -77.8l-.4 1.3M-40 -72.7l-.4 1.3M-42.6 -66.3l-.6 1.3M-44.4 -62.3l-.7 1.3M-81.4 -1.6l-.8 1.4M-83.8 2.7l-.8 1.5M-86.1 7.2l-.7 1.4 -.7 1.5M-41.2 66.3l0 1.4M22.9 82.1l.3 1.2M70.9 43.8l.5 1.3M-43.1 -74.8l0 1.2M-43.3 -71.1l-.1 1.3M-45.3 -59.4l-.4 1.4M-85.3 -13.4l1.2 -.8M-82.9 -15l1.3 -.7 1.2 -.7M68.5 53.6l.4 1.3M-83.8 -.4l1 -1.1M50.6 -64.6l.5 -1.1M-79.8 28.4l.7 -1.4M-73.8 17.7l.9 -1.3M-77.1 41.4l.5 -1.4M-70.2 26.6l.7 -1.3M71.8 -30.6l1.4 .3M83.8 -26.9l0 0M-33.7 80.3l.2 -1.3M41.9 -68.2l-.5 -1.3M38.3 -78.4l-.3 -1.3M51.1 -56.8l.5 -1.1M57.5 -66.6l0 0M75.4 30.5l-.4 -1.6M47 -68l.2 -1.3M80.5 24.1l-.5 -1.5M87.1 -1.6l-.8 -1.4M84.5 -5.8l-1 -1.4M36 -75.1l-1.4 -1M31.9 -77.9l-1.3 -1M22.7 -84.5l-1.2 -.9"/><path stroke="#0099ff" d="M-72.3 -37l-1.2 1.2M-84.2 -24.7l-1.1 1.3M-38.6 -76.5l-.4 1.3M-40.8 72l.2 1.4M-39.7 79l0 0M-79.1 -17.1l1.2 -.6M-84.9 .7l1.1 -1.1M79.9 -28.5l1.3 .5M39.1 -75.9l-.4 -1.3M-86.8 13.2l0 0M23.4 83.3l.3 -1.3M86.3 -3l-.9 -1.4"/><path stroke="#00b2ff" d="M-40.4 74.8l.2 1.4M75.9 -29.7l1.3 .4"/><path stroke="#001aff" d="M25 23.8l.1 -1.6 .2 -1.5 .1 -1.6M-18.8 6.1l.6 1.4 .5 1.4 .5 1.4 .5 1.5 .4 1.4 .5 1.5 .4 1.4 .4 1.5 .4 1.5 .4 1.4 .4 1.5 .3 1.5M-13.2 25l.3 1.5 .3 1.5M-12.3 29.5l.3 1.6 .2 1.5 .3 1.5M-2.5 28.3l.4 1.5M-1.7 31.2l.4 1.5M-.9 34.2l.3 1.5 .3 1.4M.4 40.1l.3 1.5M16.9 57.2l.2 1.4 .2 1.5M17.4 61.5l.2 1.4M18.4 70l.2 1.4M-38.2 -15.6l.3 1.5M-37.1 -9.8l.3 1.4 .2 1.5M-36.3 -3.9l.2 1.5 .1 1.5M-35.6 3.7l0 1.5 .1 1.6M-35.5 8.3l.1 1.6M-35.4 11.4l0 1.6M-33.8 -10.3l1.4 -.3 1.5 -.1 1.4 -.2 1.4 -.1 1.4 -.1 1.5 0 1.4 0 1.4 .1M-21 -10.9l1.5 .1M-18.1 -10.6l1.4 .2 1.4 .3 1.4 .3 1.4 .3 1.4 .4 1.4 .4 1.4 .5 1.3 .5 1.4 .5 1.3 .6 1.4 .6 1.3 .6 1.3 .7 1.3 .7 1.2 .7 1.3 .8 1.2 .8 1.2 .9 1.2 .9 1.2 .9 1.2 .9 1.1 1 1.1 1 1.1 1 1.1 1 1.1 1.1 1 1.1 1 1.2 1 1.1 1 1.2 .9 1.2 .9 1.2 .9 1.2 .9 1.3 .8 1.2M24.3 19l.7 1.3 .8 1.3 .8 1.4M29.3 28.4l.7 1.4 .6 1.4M31.8 34l.5 1.5M33.8 39.7l.5 1.5M32.3 22.5l.8 1.2 .8 1.3 .7 1.3 .8 1.3 .7 1.3M36.8 30.2l.6 1.4 .7 1.3 .6 1.3 .6 1.4 .6 1.4 .6 1.3M-23.5 32.4l.6 -1.5 .5 -1.4M-21.8 28.1l.6 -1.4 .7 -1.4 .6 -1.4 .7 -1.4 .7 -1.4 .7 -1.3M-17 18.4l.8 -1.3 .8 -1.3M-14.6 14.5l.9 -1.2 .8 -1.3 .9 -1.2 .9 -1.3 1 -1.1 1 -1.2 .9 -1.2 1.1 -1.1 1 -1.1 1.1 -1 1 -1.1 1.1 -1M-1.8 -.3l1.2 -.9 1.1 -1 1.2 -.9 1.2 -.8 1.2 -.9 1.3 -.8 1.2 -.7 1.3 -.7 1.3 -.7 1.3 -.7 1.3 -.6 1.3 -.6 1.3 -.5 1.4 -.6 1.3 -.4M18.5 -11.6l1.4 -.3 1.3 -.4 1.4 -.3 1.4 -.3 1.4 -.2 1.4 -.2M28.2 -13.5l1.4 -.1M31.1 -13.6l1.4 -.1 1.4 0M35.3 -13.6l1.4 .1 1.4 .1 1.4 .2 1.4 .2M42.3 -12.8l1.4 .3M46.5 -11.8l1.4 .4M50.6 -10.4l1.3 .5M-28.3 -11.6l1.3 .4 1.3 .4M-24.4 -10.4l1.3 .5 1.2 .6 1.3 .5 1.3 .7M-18.1 -7.5l1.2 .7 1.2 .7 1.2 .7M-13.3 -4.6l0 0M26.3 24.9l.1 -1.5M26.5 21.8l.1 -1.5M26.7 18.7l.2 -1.5M27 15.6l.2 -1.5M27.4 12.5l.2 -1.5 .2 -1.5 .3 -1.5 .2 -1.5M28.9 3.5l.3 -1.5M29.5 .5l.4 -1.4 .3 -1.5M30.6 -3.8l.4 -1.4M31.5 -6.6l.4 -1.4M32.9 -10.7l.5 -1.4 .5 -1.3M-41.3 35.1l.6 -1.3 .7 -1.4M-38.7 29.8l.7 -1.3 .8 -1.3 .7 -1.3 .8 -1.3 .8 -1.2 .8 -1.3 .8 -1.2 .9 -1.2 .9 -1.2 .9 -1.2M-29.7 16.1l1 -1.1 1 -1.1 .9 -1.1 1.1 -1.1 1 -1 1.1 -1.1M-22.6 8.6l1.1 -1 1.2 -.9 1.1 -.9 1.2 -.9"/><path stroke="#0033ff" d="M75.6 -14l-1 -1.4M69.4 -22.2l-1 -1.3 -1 -1.4 -1.1 -1.3 -1 -1.4M60.2 -34.3l-1.1 -1.3 -1 -1.4 -1 -1.3 -1 -1.4M55.1 -41l-1 -1.3 -.9 -1.4M44.9 -55.6l-.9 -1.4M43.2 -58.3l-.8 -1.3M38.5 -66.1l-.7 -1.3M36.5 -70l-.7 -1.3M.6 77.3l.2 -1.3M1.3 72l.2 -1.4M1.9 66.5l.2 -1.4M2.2 63.7l.1 -1.5M2.5 60.8l.1 -1.4M2.7 57.9l.2 -1.4 .1 -1.5 .2 -1.4M3.3 52.1l0 0M23.2 69.9l.1 -1.4M23.4 67.1l.1 -1.4M23.6 64.3l0 -1.5M23.8 57.1l.1 -1.5 0 -1.5M23.9 52.7l0 -1.5M24 49.7l0 -1.5M24 46.7l0 -1.5 .1 -1.5 0 -1.5 0 -1.5 .1 -1.6 0 -1.5 .1 -1.5 0 -1.6 .1 -1.5M24.5 31.5l0 -1.6 .1 -1.5 .1 -1.6 .2 -1.5 .1 -1.5M25.4 19.1l0 0M72.1 12l-.7 -1.5M70.8 9l-.6 -1.5 -.6 -1.5M67 0l-.7 -1.5 -.6 -1.5 -.7 -1.5 -.7 -1.5 -.6 -1.5M63 -9l-.6 -1.5 -.7 -1.5 -.6 -1.5 -.7 -1.4 -.6 -1.5M59.1 -17.9l-.6 -1.5 -.6 -1.5 -.6 -1.5 -.7 -1.5M54.9 -28.3l-.6 -1.4 -.5 -1.5 -.6 -1.5M49 -45.6l-.4 -1.4M47.3 -52.5l-.3 -1.4M65.8 -43.6l-1.3 -1.2M59.6 -49.5l-1.2 -1.2M-13.1 -87.2l-1.8 .2M-59.1 -24l-.7 1.4M-61.2 -19.7l-.7 1.5M-65.6 -10.8l-.7 1.4M-68.5 -4.9l-.8 1.4M-70 -2l-.7 1.5 -.7 1.5 -.7 1.5M-76.2 11.4l-.7 1.5M-19.4 4.7l.6 1.4M-13.5 23.5l.3 1.5M-12.6 28l.3 1.5M-11.5 34.1l.2 1.5 .2 1.5 .2 1.5 .2 1.5 .2 1.5 .1 1.5 .2 1.5 .1 1.5 .2 1.5 .1 1.5 .2 1.5 .1 1.4 .1 1.5 .1 1.5 .2 1.4 .1 1.5 .1 1.4M-8.8 60.7l.1 1.4M-8.5 63.6l.1 1.4M-8.3 66.4l.2 1.3M-2.9 26.9l.4 1.4M-2.1 29.8l.4 1.4M-1.3 32.7l.4 1.5M-.3 37.1l.4 1.5 .3 1.5M.7 41.6l.2 1.4 .3 1.5 .3 1.5 .2 1.5 .2 1.4 .3 1.5 .2 1.4 .2 1.5 .2 1.4M3 56.2l.2 1.4M3.4 59l.2 1.4 .2 1.4 .1 1.4M4.1 64.6l.2 1.4M5.1 71.4l.2 1.4M16.7 55.7l.2 1.5M17.3 60.1l.1 1.4M17.6 62.9l.2 1.5 .1 1.4M18.1 67.2l.2 1.4 .1 1.4M18.6 71.4l.1 1.3 .2 1.4M19.1 75.4l.1 1.4 .2 1.3M19.8 80.7l.2 1.3M-47.7 -64.2l.2 1.2 .1 1.2M-47 -56.7l0 1.3 0 1.3 0 1.3 -.1 1.4 -.1 1.3 -.1 1.4 -.1 1.4 -.1 1.3M-47.9 -43.2l-.2 1.5 -.2 1.4M-48.6 -38.9l-.2 1.4 -.3 1.5M-49.4 -34.6l-.4 1.5 -.3 1.5 -.4 1.4 -.3 1.5 -.4 1.5 -.4 1.5 -.4 1.5 -.5 1.5 -.4 1.5 -.5 1.5 -.4 1.5 -.5 1.5 -.5 1.5 -.5 1.6M-55.8 -12.1l-.5 1.5 -.5 1.5 -.6 1.6 -.5 1.5 -.5 1.5 -.6 1.5 -.5 1.6 -.6 1.5 -.5 1.5M-61.1 3.1l-.6 1.6M-62.2 6.2l-.6 1.5M-63.3 9.3l-.6 1.5M-64.9 13.8l-.6 1.6 -.5 1.5M-67 19.9l-.5 1.6 -.5 1.5 -.5 1.5M-69.4 27.6l-.4 1.5M-56.3 -46.5l1 .8M-53.5 -44.2l.9 .9M-51.7 -42.4l.8 .9 .8 .9M-49.3 -39.7l.8 1M-47.7 -37.7l.7 1.1 .7 1 .7 1.1 .6 1.1 .7 1.2 .6 1.1M-43.2 -29.9l.6 1.2 .5 1.2 .6 1.3 .5 1.2 .4 1.3 .5 1.3 .4 1.4 .4 1.3 .4 1.4 .3 1.3 .4 1.4M-37.9 -14.1l.3 1.4 .3 1.4 .2 1.5M-36.6 -6.9l.2 1.5 .1 1.5M-36 -.9l.2 1.5 .1 1.6 .1 1.5M-35.5 6.8l0 1.5M-35.4 9.9l0 1.5M-35.4 13l0 0M-50.2 -54.7l.5 1.1 .5 1.1 .4 1.2M-48.3 -50.1l.4 1.2M-47.5 -47.7l.3 1.2M-46.9 -45.3l.3 1.3 .3 1.3 .3 1.3 .2 1.3 .2 1.4 .2 1.3 .1 1.4 .2 1.3 .1 1.4 .1 1.4 0 1.5 .1 1.4 0 1.4M-44.8 -26.1l0 0M-36.6 -9.8l1.4 -.3 1.4 -.2M-22.4 -11l1.4 .1M-19.5 -10.8l1.4 .2M23.4 17.7l.9 1.3M26.6 23l.7 1.3 .7 1.4 .7 1.4 .6 1.3M30.6 31.2l.6 1.4 .6 1.4M32.3 35.5l.5 1.4 .5 1.4 .5 1.4M34.3 41.2l.4 1.4 .5 1.5 .4 1.4 .4 1.4 .3 1.5 .4 1.4 .4 1.5 .3 1.4M37.7 54.1l.3 1.5 .3 1.4 .3 1.4M39.1 61.2l.3 1.4M31.5 21.2l.8 1.3M36.1 28.9l.7 1.3M40.5 38.3l.5 1.4 .5 1.4 .5 1.4 .5 1.3 .5 1.4 .5 1.4 .4 1.4 .4 1.4 .5 1.4 .4 1.3 .3 1.4M45.9 54.9l.4 1.4M46.6 57.6l.4 1.4M47.9 63.1l.4 1.3M-24 33.8l.5 -1.4M-22.4 29.5l.6 -1.4M-17.8 19.8l.8 -1.4M-15.4 15.8l.8 -1.3M-2.9 .7l1.1 -1M17.1 -11.1l1.4 -.5M26.8 -13.3l1.4 -.2M29.6 -13.6l1.5 0M33.9 -13.7l1.4 .1M40.9 -13l1.4 .2M43.7 -12.5l1.4 .4 1.4 .3M47.9 -11.4l1.3 .5 1.4 .5M51.9 -9.9l1.3 .6M54.6 -8.7l1.3 .6 1.2 .7 1.3 .7 1.3 .7 1.2 .8M63.4 -3.6l1.2 .9 1.2 .9 1.1 .9 1.2 1 1.1 1 1.1 1 1.1 1.1 1 1.1M76.5 8.8l.9 1.2M-73.8 -2l1.2 -.8 1.1 -.8M-69.1 -5.2l1.2 -.8M-66.7 -6.7l1.3 -.6 1.2 -.7 1.3 -.6 1.2 -.6 1.3 -.5 1.3 -.5M-56.5 -11.1l1.3 -.4 1.3 -.4M-52.5 -12.2l1.3 -.3 1.3 -.3M-48.5 -13l1.3 -.1 1.4 -.2 1.3 -.1 1.4 -.1 1.3 0 1.4 0 1.4 .1 1.3 .1 1.4 .1 1.3 .2 1.3 .2 1.4 .2 1.3 .3 1.3 .3 1.4 .4M-25.7 -10.8l1.3 .4M-19.3 -8.1l1.2 .6M-14.5 -5.4l1.2 .8M25.2 72.5l.1 -1.4M25.7 65.5l.1 -1.4M25.9 59.8l0 -1.5 0 -1.5M25.9 55.4l0 -1.5 0 -1.5 0 -1.5 0 -1.5M25.9 47.9l0 -1.5 0 -1.5 0 -1.5 0 -1.5 0 -1.5 0 -1.6 0 -1.5 .1 -1.5 0 -1.6 0 -1.5 0 -1.6 .1 -1.5 .1 -1.6 0 -1.5 .1 -1.6M26.4 23.4l.1 -1.6M26.6 20.3l.1 -1.6M26.9 17.2l.1 -1.6M27.2 14.1l.2 -1.6M28.3 6.5l.3 -1.5 .3 -1.5M29.2 2l.3 -1.5M30.2 -2.4l.4 -1.4M31 -5.2l.5 -1.4M31.9 -8l.5 -1.4 .5 -1.3M33.9 -13.4l.6 -1.3 .6 -1.3 .6 -1.2 .6 -1.3 .7 -1.2 .6 -1.2 .7 -1.1 .7 -1.2 .8 -1.1 .7 -1.1 .8 -1 .8 -1.1M42.9 -28.5l.9 -1 .8 -.9M45.5 -31.4l.9 -.9 .9 -.8 1 -.9 .9 -.8 1 -.7M52.3 -37l1 -.7 1.1 -.6 1 -.6 1.1 -.6M58.8 -40.5l1.1 -.5M-48.9 57l.4 -1.4M-48.1 54.3l.4 -1.4M-47.3 51.5l.4 -1.3 .4 -1.4 .5 -1.4 .4 -1.4 .5 -1.3M-44.6 43.3l.5 -1.4 .5 -1.4 .6 -1.3 .5 -1.4M-41.9 36.5l.6 -1.4M-40 32.4l.6 -1.3 .7 -1.3M-30.6 17.3l.9 -1.2M-23.6 9.6l1 -1M47.9 -48l-.5 -1.4 -.5 -1.4 -.4 -1.4M45.3 -56.3l-.3 -1.4 -.4 -1.3 -.3 -1.3 -.3 -1.4M42.8 -69.5l-.1 -1.3"/><path stroke="#004cff" d="M82.4 -4.4l-.9 -1.4M76.6 -12.7l-1 -1.3M74.6 -15.4l-1.1 -1.4 -1 -1.3 -1 -1.4M64.3 -28.9l-1.1 -1.4 -1 -1.3 -1 -1.4M52.2 -45l-1 -1.4 -.9 -1.3 -.9 -1.3 -1 -1.3 -.9 -1.4 -.9 -1.3 -.8 -1.3M42.4 -59.6l-.8 -1.3M40 -63.5l-.7 -1.3M37.8 -67.4l-.7 -1.3M34.6 -73.9l-.6 -1.2 -.5 -1.3M32.4 -79l-.4 -1.2M31.5 -81.5l-.4 -1.2M-1.6 87.5l.4 -1.2 .3 -1.3 .3 -1.2M-.4 82.5l.3 -1.3M.4 78.6l.2 -1.3M.8 76l.2 -1.3 .2 -1.4M1.5 70.6l.1 -1.4 .2 -1.3 .1 -1.4M2.1 65.1l.1 -1.4M2.3 62.2l.2 -1.4M2.6 59.4l.1 -1.5M3.2 53.6l.1 -1.5M22.1 78.1l.2 -1.4M22.5 75.4l.2 -1.4 .2 -1.4 .1 -1.3 .2 -1.4M23.5 65.7l.1 -1.4M23.6 62.8l.1 -1.4 0 -1.4M23.8 58.5l0 -1.4M23.9 54.1l0 -1.4M23.9 51.2l.1 -1.5M24 48.2l0 -1.5M24.4 33l.1 -1.5M79.3 33.4l-.4 -1.6M76.5 24.2l-.5 -1.6 -.5 -1.5M73.8 16.6l-.5 -1.6 -.6 -1.5 -.6 -1.5M71.4 10.5l-.6 -1.5M69.6 6l-.7 -1.5M68.3 3l-.7 -1.5 -.6 -1.5M63.7 -7.5l-.7 -1.5M59.8 -16.4l-.7 -1.5M56.6 -23.9l-.6 -1.4 -.5 -1.5 -.6 -1.5M53.2 -32.7l-.5 -1.4 -.5 -1.5 -.5 -1.4 -.5 -1.5 -.5 -1.4 -.5 -1.4 -.4 -1.5 -.4 -1.4 -.4 -1.4M48.6 -47l-.4 -1.4 -.3 -1.4M47.6 -51.2l-.3 -1.3M47 -53.9l-.3 -1.4 -.2 -1.3 -.2 -1.3 -.2 -1.4M45.6 -63.2l-.1 -1.3 0 -1.3 -.1 -1.2M45.4 -70.8l.1 -1.2 .1 -1.2 .1 -1.2M83.9 -25.5l-1.2 -1.2M80.4 -29.2l-1.2 -1.2 -1.2 -1.2 -1.2 -1.3M73.1 -36.5l-1.2 -1.2 -1.2 -1.2M69.5 -40.1l-1.3 -1.2 -1.2 -1.2M64.5 -44.8l-1.2 -1.2 -1.2 -1.2 -1.3 -1.1 -1.2 -1.2M58.4 -50.7l-1.2 -1.2 -1.2 -1.1 -1.3 -1.2M53.5 -55.3l0 0M51.3 -67.1l-1.5 -.9 -1.4 -.9M44 -71.6l-1.4 -.9 -1.5 -.9 -1.4 -.8M32.6 -78.6l-1.4 -.9M25.7 -83l-1.3 -.9M-11.4 -87.4l-1.7 .2M-14.5 -86.8l-1.6 .6M-26.9 -81.5l-1.6 .6M-38 -76.9l-1.6 .7M-42.8 -74.9l-1.6 .6M-52.4 -70.9l0 0M-58.4 -25.5l-.7 1.5M-59.8 -22.6l-.7 1.5 -.7 1.4M-61.9 -18.2l-.8 1.5 -.7 1.4 -.7 1.5 -.8 1.5M-66.3 -9.4l-.8 1.5 -.7 1.5 -.7 1.5M-72.1 2.5l-.7 1.4 -.7 1.5 -.7 1.5 -.7 1.5M-75.6 9.9l-.6 1.5M-77.5 14.4l-.6 1.5 -.7 1.5 -.5 1.5 -.6 1.6M-81 23.5l-.5 1.6M-8.9 59.3l.1 1.4M-8.7 62.1l.2 1.5M-8.4 65l.1 1.4M-8.1 67.7l.1 1.4 .2 1.4M-7.5 73.2l.2 1.4 .2 1.3 .2 1.3 .2 1.3 .3 1.3 .2 1.3M-5.9 82.4l.3 1.2M-4.9 86.1l.3 1.3M2.8 54.7l.2 1.5M3.2 57.6l.2 1.4M3.9 63.2l.2 1.4M4.3 66l.2 1.4 .2 1.3 .2 1.4 .2 1.3M5.3 72.8l.2 1.3M5.9 76.7l.3 1.3 .2 1.3 .3 1.3 .3 1.2 .3 1.3M8.3 86.7l.3 1.2M17.9 65.8l.2 1.4M18.9 74.1l.2 1.3M19.4 78.1l.2 1.3M20 82l.3 1.3M20.5 84.5l.2 1.3M-49.4 -71.2l.4 1.1 .3 1.2M-48.1 -66.6l.2 1.2M-47.4 -61.8l.1 1.3M-47.1 -58l.1 1.3M-47.5 -46l-.2 1.4M-48.3 -40.3l-.3 1.4M-49.1 -36l-.3 1.4M-55.3 -13.6l-.5 1.5M-60.6 1.6l-.5 1.5M-61.7 4.7l-.5 1.5M-62.8 7.7l-.5 1.6M-63.9 10.8l-.5 1.5 -.5 1.5M-66 16.9l-.5 1.5M-68.5 24.5l-.4 1.5 -.5 1.6M-70.7 32.2l-.4 1.5M-71.4 35.2l-.4 1.6M-72.7 41.4l-.3 1.5M-73.3 44.5l-.2 1.5M-73.7 47.6l0 0M-68.1 -52.6l1.2 .4M-64.6 -51.3l1.1 .5M-62.4 -50.3l1.1 .5 1 .6 1.1 .6 1 .7 1 .7 .9 .7M-55.3 -45.7l.9 .7 .9 .8M-52.6 -43.3l.9 .9M-50.1 -40.6l.8 .9M-48.5 -38.7l.8 1M-43.7 -31.1l.5 1.2M-56.9 -64.5l.8 .9 .8 .9M-54.6 -61.8l.7 .9 .7 1 .6 1 .7 1 .6 1.1 .5 1 .6 1.1M-48.8 -51.3l.5 1.2M-47.9 -48.9l.4 1.2M-47.2 -46.5l.3 1.2M-44.8 -27.6l0 1.5M38.6 58.4l.3 1.4 .2 1.4M39.4 62.6l.3 1.4 .2 1.4 .2 1.4M40.4 68.1l.2 1.4 .2 1.3 .3 1.4 .2 1.3 .2 1.3M41.8 76.1l.2 1.3M46.3 56.3l.3 1.3M47 59l.3 1.4M47.6 61.7l.3 1.4M48.3 64.4l.3 1.3M48.9 67l.3 1.3M49.5 69.6l.3 1.3 .3 1.3M53.2 -9.3l1.4 .6M60.9 -5.2l1.3 .8 1.2 .8M72.4 4.3l1.1 1.1 1 1.1M75.5 7.6l1 1.2M77.4 10l1 1.2 .9 1.3M80.2 13.8l.9 1.2 .8 1.3M85.1 21.7l0 0M-82.4 5.9l1 -1M-80.3 3.8l1 -1 1.1 -1M-76 -.1l1.1 -1M-71.5 -3.6l1.2 -.9 1.2 -.7M-59.1 -10.2l1.3 -.5 1.3 -.4M-53.9 -11.9l1.4 -.3M-49.9 -12.8l1.4 -.2M25.3 71.1l.2 -1.4M25.6 66.9l.1 -1.4M25.8 64.1l0 -1.5 .1 -1.4 0 -1.4M25.9 56.8l0 -1.4M25.9 49.4l0 -1.5M42.1 -27.5l.8 -1M44.6 -30.4l.9 -1M50.2 -35.5l1 -.8 1.1 -.7M57.7 -40l1.1 -.5M59.9 -41l1.2 -.4M62.3 -41.8l1.2 -.4M65.9 -42.8l1.2 -.2 1.3 -.3 1.2 -.1 1.3 -.2M73.5 -43.7l1.3 0 1.3 0M-52.1 70.2l.3 -1.3 .3 -1.3 .3 -1.3M-50.6 63.7l.3 -1.3M-49.6 59.7l.4 -1.4 .3 -1.3M-48.5 55.6l.4 -1.3M-45.1 44.7l.5 -1.4M-42.5 37.8l.6 -1.3M46.5 -52.2l-.4 -1.4M45.7 -54.9l-.4 -1.4M43.8 -63l-.3 -1.3 -.2 -1.3 -.2 -1.3 -.2 -1.3M42.7 -70.8l-.1 -1.3M42.5 -73.3l0 -1.2 0 -1.3M42.5 -77l0 0"/><path stroke="#0066ff" d="M87.9 4.2l-.9 -1.5 -.9 -1.4 -.9 -1.4 -.9 -1.5 -.9 -1.4M80.5 -7.2l-.9 -1.3 -1 -1.4 -1 -1.4 -1 -1.4M71.5 -19.5l-1 -1.3 -1.1 -1.4M65.3 -27.6l-1 -1.3M61.2 -33l-1 -1.3M56.1 -39.7l-1 -1.3M53.2 -43.7l-1 -1.3M45.8 -54.3l-.9 -1.3M44 -57l-.8 -1.3M41.6 -60.9l-.8 -1.3 -.8 -1.3M39.3 -64.8l-.8 -1.3M37.1 -68.7l-.6 -1.3M35.8 -71.3l-.6 -1.3 -.6 -1.3M33.5 -76.4l-.6 -1.3M-.6 83.8l.2 -1.3M-.1 81.2l.3 -1.3 .2 -1.3M1.2 73.3l.1 -1.3M21 83.3l.3 -1.3M21.6 80.7l.3 -1.3 .2 -1.3M22.3 76.7l.2 -1.3M23.3 68.5l.1 -1.4M23.7 60l.1 -1.5M80 36.5l-.4 -1.5 -.3 -1.6M78.4 30.3l-.4 -1.5 -.5 -1.6M75.5 21.1l-.5 -1.5 -.6 -1.5 -.6 -1.5M68.9 4.5l-.6 -1.5M47.9 -49.8l-.3 -1.4M46.1 -59.3l-.2 -1.3 -.1 -1.3 -.2 -1.3M45.4 -67l0 -1.3 0 -1.2 0 -1.3M45.7 -74.4l.1 -1.2M85 -24.2l-1.1 -1.3M81.5 -28l-1.1 -1.2M76.8 -32.9l-1.2 -1.2M74.3 -35.3l-1.2 -1.2M70.7 -38.9l-1.2 -1.2M67 -42.5l-1.2 -1.1M54.7 -54.2l-1.2 -1.1M67.4 -57.1l-1.5 -1 -1.5 -.9 -1.4 -.9 -1.5 -.9M60.1 -61.7l-1.5 -.9 -1.5 -.9 -1.4 -.9 -1.5 -.9 -1.4 -.9 -1.5 -.9M48.4 -68.9l-1.5 -.9 -1.4 -.9 -1.5 -.9M38.3 -75.1l-1.4 -.9M29.8 -80.4l-1.4 -.9 -1.3 -.9M24.4 -83.9l-1.4 -.9M-6.3 -88.1l-1.7 .2 -1.7 .2 -1.7 .3M-16.6 -86.8l0 0M-16.1 -86.2l-1.5 .7M-19.1 -84.8l-1.6 .6M-28.5 -80.9l-1.6 .7 -1.6 .7 -1.6 .6 -1.6 .7 -1.5 .6 -1.6 .7M-39.6 -76.2l-1.6 .6 -1.6 .7M-44.4 -74.3l-1.6 .7 -1.6 .7 -1.6 .7 -1.6 .6 -1.6 .7M-64.9 -12.3l-.7 1.5M-69.3 -3.5l-.7 1.5M-74.9 8.4l-.7 1.5M-76.9 12.9l-.6 1.5M-79.9 20.5l-.6 1.5M-82 26.6l-.5 1.5M-83 29.7l0 0M-7.8 70.5l.1 1.4M-6.2 81.1l.3 1.3M-5.3 84.9l.4 1.2M-4.6 87.4l0 0M5.5 74.1l.2 1.3M7.3 83.1l.3 1.2 .3 1.2 .4 1.2M19.6 79.4l.2 1.3M-49.7 -72.3l.3 1.1M-48.7 -68.9l.3 1.1 .3 1.2M-47.9 -65.4l.2 1.2M-47.3 -60.5l.1 1.2 .1 1.3M-47.7 -44.6l-.2 1.4M-66.5 18.4l-.5 1.5M-69.8 29.1l-.4 1.5 -.5 1.6M-71.1 33.7l-.3 1.5M-72.1 38.3l-.3 1.5M-73.5 46l-.2 1.6M-70.5 -53.2l1.2 .3M-66.9 -52.2l1.2 .4M-63.5 -50.8l1.1 .5M-58.5 -66.1l.8 .8 .8 .8M-55.3 -62.7l.7 .9M37.4 52.7l.3 1.4M41.5 74.8l.3 1.3M45.5 53.5l.4 1.4M47.3 60.4l.3 1.3M48.6 65.7l.3 1.3M50.1 72.2l0 0M74.5 6.5l1 1.1M79.3 12.5l.9 1.3M-87.1 11.6l.9 -1.1M-83.4 7l1 -1.1M-78.2 1.8l1.1 -1 1.1 -.9M-74.9 -1.1l1.1 -.9M-67.9 -6l1.2 -.7M25.6 68.3l0 -1.4M56.5 -39.5l1.2 -.5M61.1 -41.4l1.2 -.4M64.7 -42.5l1.2 -.3M70.9 -43.6l1.3 -.1 1.3 0M76.1 -43.7l0 0M-51.2 66.3l.3 -1.3M-49.9 61l.3 -1.3M-47.7 52.9l.4 -1.4M46.1 -53.6l-.4 -1.3M44 -61.7l-.2 -1.3M42.9 -68.2l-.1 -1.3M42.6 -72.1l-.1 -1.2M42.5 -75.8l0 -1.2"/><path stroke="#0080ff" d="M83.4 -3l-1 -1.4M81.5 -5.8l-1 -1.4M32.9 -77.7l-.5 -1.3M32 -80.2l-.5 -1.3M31.1 -82.7l0 0M77.5 27.2l-.5 -1.5 -.5 -1.5M82.7 -26.7l-1.2 -1.3M75.6 -34.1l-1.3 -1.2M61.5 -60.8l-1.4 -.9M39.7 -74.2l-1.4 -.9M36.9 -76l-1.5 -.9M23 -84.8l0 0M-4.5 -88.3l-1.8 .2M-14.9 -87l-1.7 .2M-13 -87.5l-1.5 .7M-20.7 -84.2l-1.5 .7 -1.6 .6M-25.4 -82.2l-1.5 .7M-80.5 22l-.5 1.5M-81.5 25.1l-.5 1.5M-82.5 28.1l-.5 1.6M-7.7 71.9l.2 1.3M5.7 75.4l.2 1.3M20.3 83.3l.2 1.2M-71.8 36.8l-.3 1.5M-72.4 39.8l-.3 1.6M-65.7 -51.8l1.1 .5M40.1 66.8l.3 1.3M49.2 68.3l.3 1.3M81.9 16.3l.8 1.4 .8 1.3 .8 1.4 .8 1.3M-85.3 9.3l1 -1.2M-81.4 4.9l1.1 -1.1M25.5 69.7l.1 -1.4M63.5 -42.2l1.2 -.3M-50.3 62.4l.4 -1.4M48.4 -46.6l-.5 -1.4M34.1 -81l0 0"/><path stroke="#0099ff" d="M20.3 85.9l.4 -1.3 .3 -1.3M21.3 82l.3 -1.3M78.9 31.8l-.5 -1.5M35.4 -76.9l-1.4 -.9 -1.4 -.8M31.2 -79.5l-1.4 -.9M-17.6 -85.5l-1.5 .7M-5.6 83.6l.3 1.3M-69.3 -52.9l1.2 .3M-86.2 10.5l.9 -1.2M-50.9 65l.3 -1.3"/><path stroke="#00b2ff" d="M-23.8 -82.9l-1.6 .7M-73 42.9l-.3 1.6M-84.3 8.1l.9 -1.1"/><path stroke="#00ccff" d="M27.1 -82.2l-1.4 -.8"/></g>
<text x="-3" y="-16.4" text-anchor="end" font-size="11">20</text>
<text x="-3" y="-36.6" text-anchor="end" font-size="11">40</text>
<text x="-3" y="-56.9" text-anchor="end" font-size="11">60</text>
<text x="-3" y="-77.1" text-anchor="end" font-size="11">80</text>
<circle r="91.0" fill="none" stroke="#222" stroke-width="1.2"/>
</g>
<text x="482.0" y="632.4" text-anchor="middle" font-size="11">360</text>
<text x="525.4" y="645.3" font-size="11">30</text>
<text x="562.8" y="682.4" font-size="11">60</text>
<text x="576.6" y="732.7" font-size="11">90</text>
<text x="563.6" y="782.5" font-size="11">120</text>
<text x="525.0" y="819.8" font-size="11">150</text>
<text x="482.0" y="832.8" text-anchor="middle" font-size="11">180</text>
<text x="420.6" y="819.8" font-size="11">210</text>
<text x="382.6" y="782.7" font-size="11">240</text>
<text x="368.5" y="732.8" font-size="11">270</text>
<text x="382.6" y="682.9" font-size="11">300</text>
<text x="420.6" y="645.3" font-size="11">330</text>
<text x="482.0" y="610.7" text-anchor="middle" font-size="19.5" font-weight="bold">MP2</text>
<defs><linearGradient id="g623" x1="0" y1="1" x2="0" y2="0"><stop offset="0" stop-color="#0000ff"/><stop offset="0.25" stop-color="#00ffff"/><stop offset="0.5" stop-color="#00ff00"/><stop offset="0.75" stop-color="#ff0000"/><stop offset="1" stop-color="#ffff00"/></linearGradient></defs>
<rect x="623" y="592" width="10" height="251" fill="url(#g623)"/>
<line x1="635.5" y1="597.3" x2="635.5" y2="838.5" stroke="#000" stroke-width="1.3"/>
<line x1="635.5" y1="838.5" x2="642.5" y2="838.5" stroke="#000" stroke-width="1.3"/>
<line x1="635.5" y1="826.5" x2="639.0" y2="826.5" stroke="#000" stroke-width="1.3"/>
<line x1="635.5" y1="814.4" x2="639.0" y2="814.4" stroke="#000" stroke-width="1.3"/>
<line x1="635.5" y1="802.4" x2="639.0" y2="802.4" stroke="#000" stroke-width="1.3"/>
<line x1="635.5" y1="790.3" x2="639.0" y2="790.3" stroke="#000" stroke-width="1.3"/>
<line x1="635.5" y1="778.2" x2="642.5" y2="778.2" stroke="#000" stroke-width="1.3"/>
<line x1="635.5" y1="766.2" x2="639.0" y2="766.2" stroke="#000" stroke-width="1.3"/>
<line x1="635.5" y1="754.1" x2="639.0" y2="754.1" stroke="#000" stroke-width="1.3"/>
<line x1="635.5" y1="742.0" x2="639.0" y2="742.0" stroke="#000" stroke-width="1.3"/>
<line x1="635.5" y1="730.0" x2="639.0" y2="730.0" stroke="#000" stroke-width="1.3"/>
<line x1="635.5" y1="717.9" x2="642.5" y2="717.9" stroke="#000" stroke-width="1.3"/>
<line x1="635.5" y1="705.9" x2="639.0" y2="705.9" stroke="#000" stroke-width="1.3"/>
<line x1="635.5" y1="693.8" x2="639.0" y2="693.8" stroke="#000" stroke-width="1.3"/>
<line x1="635.5" y1="681.7" x2="639.0" y2="681.7" stroke="#000" stroke-width="1.3"/>
<line x1="635.5" y1="669.7" x2="639.0" y2="669.7" stroke="#000" stroke-width="1.3"/>
<line x1="635.5" y1="657.6" x2="642.5" y2="657.6" stroke="#000" stroke-width="1.3"/>
<line x1="635.5" y1="645.6" x2="639.0" y2="645.6" stroke="#000" stroke-width="1.3"/>
<line x1="635.5" y1="633.5" x2="639.0" y2="633.5" stroke="#000" stroke-width="1.3"/>
<line x1="635.5" y1="621.4" x2="639.0" y2="621.4" stroke="#000" stroke-width="1.3"/>
<line x1="635.5" y1="609.4" x2="639.0" y2="609.4" stroke="#000" stroke-width="1.3"/>
<line x1="635.5" y1="597.3" x2="642.5" y2="597.3" stroke="#000" stroke-width="1.3"/>
<text x="648" y="842.3" font-size="11">0</text>
<text x="648" y="782.0" font-size="11">0,5</text>
<text x="648" y="721.7" font-size="11">1</text>
<text x="648" y="661.4" font-size="11">1,5</text>
<text x="648" y="601.1" font-size="11">2</text>
<circle cx="132.7" cy="690" r="2.6" fill="#ff3000"/>
<circle cx="134" cy="688" r="2.6" fill="#ffd000"/>
<circle cx="161.7" cy="657.7" r="2.6" fill="#30d040"/>
<circle cx="131" cy="703" r="2.6" fill="#20e080"/>
<circle cx="157.3" cy="797.4" r="2.6" fill="#e04010"/>
<circle cx="216.7" cy="803" r="2.6" fill="#30e0a0"/>
<circle cx="402.7" cy="690" r="2.6" fill="#ff3000"/>
<circle cx="404.5" cy="688" r="2.6" fill="#ffd000"/>
<circle cx="427.3" cy="797.4" r="2.6" fill="#40e060"/>
<circle cx="452" cy="796" r="2.6" fill="#40e080"/>
<circle cx="460.6" cy="801.7" r="2.6" fill="#30e0c0"/>
<text transform="translate(677 737) rotate(-90)" font-size="11.5" font-weight="bold" letter-spacing="0.6">Meters</text>
</g></svg>
<div class="btn" style="left:222px;top:859px;width:78px;height:21px;border-color:#003C74;box-shadow:inset 0 0 0 1px #98B4E8,inset 0 -1px 0 1px #5C7CD8">Close</div>
<div class="btn" style="left:458px;top:859px;width:78px;height:21px;border-color:#003C74">Print</div>
</body></html>
